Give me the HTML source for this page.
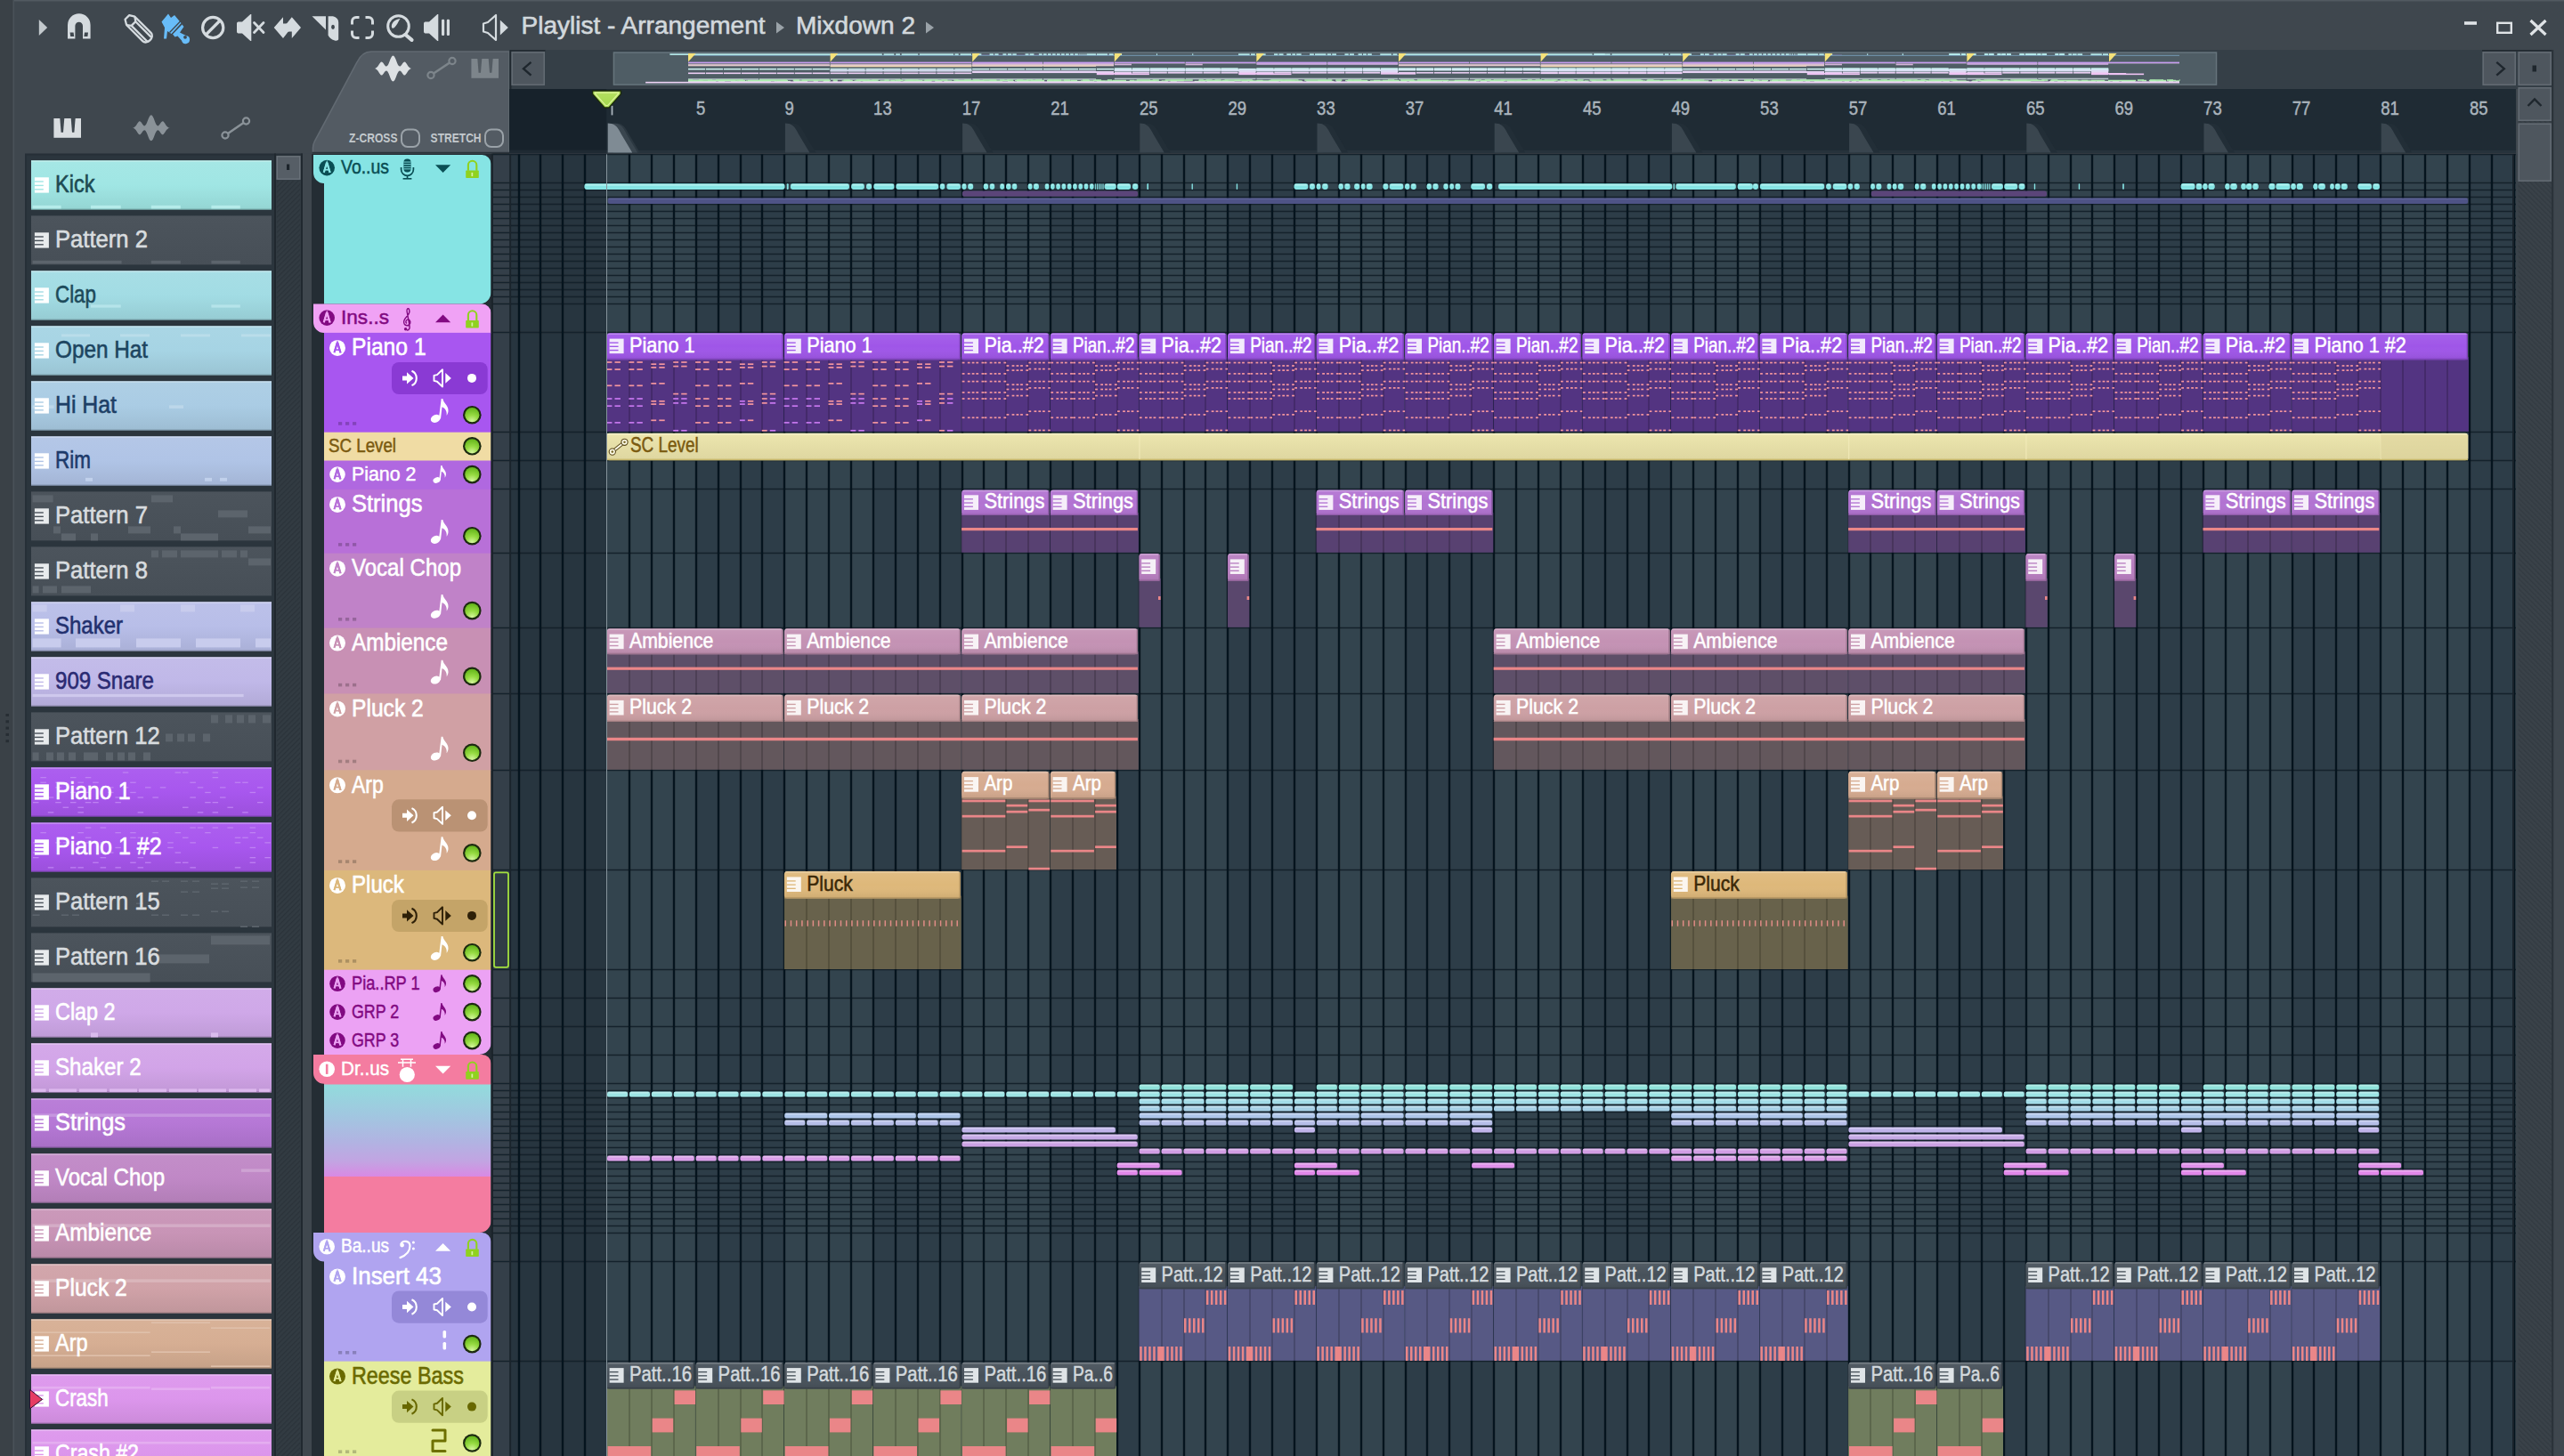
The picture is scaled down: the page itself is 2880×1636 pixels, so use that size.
<!DOCTYPE html>
<html><head><meta charset="utf-8"><title>Playlist</title>
<style>html,body{margin:0;padding:0;background:#3f474e;overflow:hidden}svg{display:block}text{font-family:"Liberation Sans",sans-serif}</style>
</head><body><svg width="2880" height="1636" viewBox="0 0 2880 1636" shape-rendering="auto"><rect x="0" y="0" width="2880" height="1636" fill="#3f474e"/><rect x="0" y="0" width="2880" height="1.5" fill="#525a61"/><rect x="0" y="0" width="15" height="1636" fill="#3a4147"/><rect x="14.5" y="0" width="1.5" height="1636" fill="#4a5259"/><rect x="6.5" y="802" width="3.5" height="3" fill="#262d33"/><rect x="6.5" y="809.3" width="3.5" height="3" fill="#262d33"/><rect x="6.5" y="816.6" width="3.5" height="3" fill="#262d33"/><rect x="6.5" y="823.9" width="3.5" height="3" fill="#262d33"/><rect x="6.5" y="831.2" width="3.5" height="3" fill="#262d33"/><path d="M43.8 22 L53.2 31 L43.8 40Z" fill="#c3c9cd"/><path d="M76 43.5 L76 28 A12.7 12.7 0 0 1 101.6 28 L101.6 43.5 L93 43.5 L93 29 A4.3 4.3 0 0 0 84.4 29 L84.4 43.5 Z" fill="#d5dbdf"/><path d="M78.6 36.5h4l0.6 4.6h-4z M95 36.5h4l-0.6 4.6h-4z" fill="#3f474e"/><g transform="translate(155.6 32.2) rotate(-45)" fill="none" stroke="#d5dbdf" stroke-width="2.3" stroke-linejoin="round"><path d="M-6.6 -12.5 L-3.3 -18 L3.3 -18 L6.6 -12.5 L6.6 13.5 A6.6 4.8 0 0 1 -6.6 13.5 Z"/><path d="M-6.6 -12.5 L-3.3 -8 L3.3 -8 L6.6 -12.5"/><path d="M-3.3 -8 L-3.3 17 M3.3 -8 L3.3 17"/></g><g fill="#68bcf8"><path d="M181.5 24.5 L189 15.5 L192 20 L196 17 L203.5 26 L192.5 38 L188 35 L187 43.5 L184 43.5 L185 31 Z"/><path d="M194 38.5 L204.5 27.5 L206.5 30 L202 36.5 L209 40 A4.6 4.6 0 1 1 204 45.5 L199.5 40.5 L196.5 41.5 Z"/></g><circle cx="208" cy="41.8" r="1.9" fill="#3f474e"/><path d="M190.5 36.5 L203 23.5" stroke="#3f474e" stroke-width="1.3"/><circle cx="239.2" cy="31" r="11.6" fill="none" stroke="#d5dbdf" stroke-width="3.2"/><path d="M231.3 39 L247.2 23" stroke="#d5dbdf" stroke-width="3.2"/><path d="M266 26.5 C266 25 267 24.5 268.5 24.5 L272 24.5 L281.3 16 L282.3 16 L282.3 46 L281.3 46 L272 37.5 L268.5 37.5 C267 37.5 266 37 266 35.5Z" fill="#d5dbdf"/><path d="M285.5 25.5 L296 36.5 M296 25.5 L285.5 36.5" stroke="#d5dbdf" stroke-width="2.8" stroke-linecap="round"/><path d="M307.7 31 L318 19.2 L318 26.5 L322 26.5 L327.8 19.2 L338 31 L327.8 43 L327.8 35.5 L323.8 35.5 L318 43 Z" fill="#d5dbdf"/><path d="M321.5 26.5 L324.5 26.5 L324.5 35.5 L321.5 35.5Z" fill="#d5dbdf"/><path d="M350.5 18.2 L366 18.2 L366 33.5 Z" fill="#d5dbdf"/><path d="M368.6 18.2 L374 18.2 C378 19 380 21.5 380.2 25 L380.2 44 C380 45.5 378 46 376 45.5 C372 44.5 369.5 42 368.6 39.5 Z" fill="#d5dbdf"/><ellipse cx="374" cy="30.3" rx="1.9" ry="2.6" fill="#3f474e"/><g fill="none" stroke="#d5dbdf" stroke-width="3"><path d="M395.5 27.5 L395.5 24 A4.5 4.5 0 0 1 400 19.5 L403.5 19.5"/><path d="M410.5 19.5 L414 19.5 A4.5 4.5 0 0 1 418.5 24 L418.5 27.5"/><path d="M418.5 34.5 L418.5 38 A4.5 4.5 0 0 1 414 42.5 L410.5 42.5"/><path d="M403.5 42.5 L400 42.5 A4.5 4.5 0 0 1 395.5 38 L395.5 34.5"/></g><circle cx="447.5" cy="29.5" r="11.8" fill="none" stroke="#d5dbdf" stroke-width="3"/><path d="M455.5 39 L462.5 44.8" stroke="#d5dbdf" stroke-width="4.2" stroke-linecap="round"/><path d="M440 31 C439 26 443 22 449.5 21 C447 25 446 28 443 31 C442 31.8 440.5 32 440 31Z" fill="#d5dbdf"/><path d="M476 26.5 C476 25 477 24.5 478.5 24.5 L482 24.5 L491.3 16 L492.3 16 L492.3 46 L491.3 46 L482 37.5 L478.5 37.5 C477 37.5 476 37 476 35.5Z" fill="#d5dbdf"/><rect x="496" y="21.8" width="3.2" height="18.2" fill="#d5dbdf" rx="1.2"/><rect x="501.8" y="21.8" width="3.2" height="18.2" fill="#d5dbdf" rx="1.2"/><path d="M543 26.5 L548 25 L557 17 L557 45 L548 37 L543 35.5Z" fill="none" stroke="#d5dbdf" stroke-width="2.2" stroke-linejoin="round"/><path d="M561.8 22.5 L570.8 31 L561.8 39.5Z" fill="#d5dbdf"/><text x="585.5" y="38" font-size="27" fill="#d2d8dc" textLength="274" lengthAdjust="spacingAndGlyphs"  stroke="#d2d8dc" stroke-width="0.59">Playlist - Arrangement</text><path d="M872 24.5 L881 31 L872 37.5Z" fill="#9aa2a8"/><text x="894" y="38" font-size="27" fill="#d2d8dc" textLength="134" lengthAdjust="spacingAndGlyphs"  stroke="#d2d8dc" stroke-width="0.59">Mixdown 2</text><path d="M1040 24.5 L1049 31 L1040 37.5Z" fill="#9aa2a8"/><rect x="2768" y="24.2" width="14" height="3.6" fill="#dfe3e6"/><rect x="2805.2" y="25.8" width="15.6" height="11" fill="none" stroke="#dfe3e6" stroke-width="2.4"/><path d="M2842.5 23 L2859.5 39 M2859.5 23 L2842.5 39" stroke="#dfe3e6" stroke-width="3.2"/><path d="M60.4 133 h30.6 v21.8 h-30.6 Z" fill="#d9dde0"/><path d="M67.29 132.8 L72.29 132.8 L70.99 148.7 L68.59 148.7 Z" fill="#3f474e"/><path d="M79.69 132.8 L84.69 132.8 L83.39 148.7 L80.99 148.7 Z" fill="#3f474e"/><path transform="translate(169.8 143.8) scale(1)" d="M-21 0 C-17 0 -15 -7.5 -13 -7.5 C-11 -7.5 -9.5 -2.4 -7.5 -2.4 C-4.5 -2.4 -3 -14.5 0 -14.5 C3 -14.5 4.5 -2.4 7.5 -2.4 C9.5 -2.4 11 -7.5 13 -7.5 C15 -7.5 17 0 21 0 C17 0 15 7.5 13 7.5 C11 7.5 9.5 2.4 7.5 2.4 C4.5 2.4 3 14.5 0 14.5 C-3 14.5 -4.5 2.4 -7.5 2.4 C-9.5 2.4 -11 7.5 -13 7.5 C-15 7.5 -17 0 -21 0 Z" fill="#8a9298"/><path d="M256 150 L273.5 138" stroke="#8a9298" stroke-width="2.6"/><circle cx="253" cy="152" r="3.6" fill="none" stroke="#8a9298" stroke-width="2.2"/><circle cx="276.5" cy="136" r="3.6" fill="none" stroke="#8a9298" stroke-width="2.2"/><path d="M351.5 172 L351.5 166 C351.5 163 352 161.5 353.5 158.5 L401 70 C404.5 62.5 409 58 417 58 L572 58 L572 172 Z" fill="#535b63" stroke="#626a72" stroke-width="1.6"/><rect x="350.5" y="170.8" width="222" height="2.2" fill="#2b343b"/><path transform="translate(441.5 77) scale(1)" d="M-21 0 C-17 0 -15 -7.5 -13 -7.5 C-11 -7.5 -9.5 -2.4 -7.5 -2.4 C-4.5 -2.4 -3 -14.5 0 -14.5 C3 -14.5 4.5 -2.4 7.5 -2.4 C9.5 -2.4 11 -7.5 13 -7.5 C15 -7.5 17 0 21 0 C17 0 15 7.5 13 7.5 C11 7.5 9.5 2.4 7.5 2.4 C4.5 2.4 3 14.5 0 14.5 C-3 14.5 -4.5 2.4 -7.5 2.4 C-9.5 2.4 -11 7.5 -13 7.5 C-15 7.5 -17 0 -21 0 Z" fill="#dde1e4"/><path d="M487 82.5 L505 70.5" stroke="#7d858b" stroke-width="2.6"/><circle cx="484" cy="84.5" r="3.6" fill="none" stroke="#7d858b" stroke-width="2.2"/><circle cx="508" cy="68.5" r="3.6" fill="none" stroke="#7d858b" stroke-width="2.2"/><path d="M529.4 66 h30.6 v21.8 h-30.6 Z" fill="#7d858b"/><path d="M536.29 65.8 L541.29 65.8 L539.99 81.7 L537.59 81.7 Z" fill="#545c63"/><path d="M548.69 65.8 L553.69 65.8 L552.39 81.7 L549.99 81.7 Z" fill="#545c63"/><text x="392" y="160.4" font-size="14.2" fill="#c3c9cd" textLength="54.5" lengthAdjust="spacingAndGlyphs" font-weight="bold">Z-CROSS</text><rect x="451" y="145.5" width="20" height="19.5" rx="6.8" fill="none" stroke="#9aa2a8" stroke-width="2"/><text x="483.6" y="160.4" font-size="14.2" fill="#c3c9cd" textLength="57" lengthAdjust="spacingAndGlyphs" font-weight="bold">STRETCH</text><rect x="545" y="145.5" width="20" height="19.5" rx="6.8" fill="none" stroke="#9aa2a8" stroke-width="2"/><rect x="572" y="56" width="2296" height="44" fill="#353f47"/><rect x="572.6" y="56" width="1.8" height="44" fill="#20282f"/><rect x="574" y="56" width="38.5" height="1.6" fill="#222a31"/><rect x="2788" y="56" width="80" height="1.6" fill="#222a31"/><rect x="574.5" y="58" width="37.5" height="38" fill="#4e565e"/><rect x="575.3" y="58.8" width="35.9" height="36.4" fill="none" stroke="#626a72" stroke-width="1.6"/><path d="M596.5 69.8 L588 77.2 L596.5 84.6" fill="none" stroke="#1e262d" stroke-width="2.4"/><rect x="2788.5" y="58" width="37.5" height="38" fill="#4e565e"/><rect x="2789.3" y="58.8" width="35.9" height="36.4" fill="none" stroke="#626a72" stroke-width="1.6"/><path d="M2804.3 69.8 L2812.8 77.2 L2804.3 84.6" fill="none" stroke="#1e262d" stroke-width="2.4"/><rect x="2828.5" y="58" width="37.5" height="38" fill="#4e565e"/><rect x="2829.3" y="58.8" width="35.9" height="36.4" fill="none" stroke="#626a72" stroke-width="1.6"/><rect x="2844.5" y="73.5" width="4.5" height="7" fill="#1e262d"/><rect x="2828.5" y="98" width="37.5" height="38" fill="#4e565e"/><rect x="2829.3" y="98.8" width="35.9" height="36.4" fill="none" stroke="#626a72" stroke-width="1.6"/><path d="M2839.5 119 L2847 111.5 L2854.5 119" fill="none" stroke="#1e262d" stroke-width="2.4"/><rect x="688.7" y="58.3" width="1801.5" height="37.6" fill="#4f5d65"/><rect x="689.5" y="59.1" width="1800" height="36" fill="none" stroke="#66747c" stroke-width="1.4"/><rect x="572" y="100" width="2254" height="72" fill="#1f2b34"/><rect x="572" y="100" width="109.1" height="72" fill="#17222b"/><rect x="572" y="168.8" width="2254" height="3.4" fill="#27333c"/><rect x="572" y="168.8" width="109.1" height="3.4" fill="#1f2a33"/><path d="M691.2 171.4 L691.2 138.4 L695.7 138.9 C700.2 140.2 703.2 144 706.2 150.5 L718.7 171.4 Z" fill="#2c3841"/><path d="M688.7 171.4 L688.7 138.4 L693.2 138.9 C697.7 140.2 700.7 144 703.7 150.5 L716.2 171.4 Z" fill="#3a464f"/><path d="M682.7 171.4 L682.7 138.4 L687.2 138.9 C691.7 140.2 694.7 144 697.7 150.5 L710.2 171.4 Z" fill="#7f8b94"/><path d="M888.9 171.4 L888.9 138.4 L893.4 138.9 C897.9 140.2 900.9 144 903.9 150.5 L916.4 171.4 Z" fill="#222e37"/><path d="M881.9 171.4 L881.9 138.4 L886.4 138.9 C890.9 140.2 893.9 144 896.9 150.5 L909.4 171.4 Z" fill="#3a464f"/><path d="M1088.1 171.4 L1088.1 138.4 L1092.6 138.9 C1097.1 140.2 1100.1 144 1103.1 150.5 L1115.6 171.4 Z" fill="#222e37"/><path d="M1081.1 171.4 L1081.1 138.4 L1085.6 138.9 C1090.1 140.2 1093.1 144 1096.1 150.5 L1108.6 171.4 Z" fill="#3a464f"/><path d="M1287.3 171.4 L1287.3 138.4 L1291.8 138.9 C1296.3 140.2 1299.3 144 1302.3 150.5 L1314.8 171.4 Z" fill="#222e37"/><path d="M1280.3 171.4 L1280.3 138.4 L1284.8 138.9 C1289.3 140.2 1292.3 144 1295.3 150.5 L1307.8 171.4 Z" fill="#3a464f"/><path d="M1486.5 171.4 L1486.5 138.4 L1491 138.9 C1495.5 140.2 1498.5 144 1501.5 150.5 L1514 171.4 Z" fill="#222e37"/><path d="M1479.5 171.4 L1479.5 138.4 L1484 138.9 C1488.5 140.2 1491.5 144 1494.5 150.5 L1507 171.4 Z" fill="#3a464f"/><path d="M1685.7 171.4 L1685.7 138.4 L1690.2 138.9 C1694.7 140.2 1697.7 144 1700.7 150.5 L1713.2 171.4 Z" fill="#222e37"/><path d="M1678.7 171.4 L1678.7 138.4 L1683.2 138.9 C1687.7 140.2 1690.7 144 1693.7 150.5 L1706.2 171.4 Z" fill="#3a464f"/><path d="M1884.9 171.4 L1884.9 138.4 L1889.4 138.9 C1893.9 140.2 1896.9 144 1899.9 150.5 L1912.4 171.4 Z" fill="#222e37"/><path d="M1877.9 171.4 L1877.9 138.4 L1882.4 138.9 C1886.9 140.2 1889.9 144 1892.9 150.5 L1905.4 171.4 Z" fill="#3a464f"/><path d="M2084.1 171.4 L2084.1 138.4 L2088.6 138.9 C2093.1 140.2 2096.1 144 2099.1 150.5 L2111.6 171.4 Z" fill="#222e37"/><path d="M2077.1 171.4 L2077.1 138.4 L2081.6 138.9 C2086.1 140.2 2089.1 144 2092.1 150.5 L2104.6 171.4 Z" fill="#3a464f"/><path d="M2283.3 171.4 L2283.3 138.4 L2287.8 138.9 C2292.3 140.2 2295.3 144 2298.3 150.5 L2310.8 171.4 Z" fill="#222e37"/><path d="M2276.3 171.4 L2276.3 138.4 L2280.8 138.9 C2285.3 140.2 2288.3 144 2291.3 150.5 L2303.8 171.4 Z" fill="#3a464f"/><path d="M2482.5 171.4 L2482.5 138.4 L2487 138.9 C2491.5 140.2 2494.5 144 2497.5 150.5 L2510 171.4 Z" fill="#222e37"/><path d="M2475.5 171.4 L2475.5 138.4 L2480 138.9 C2484.5 140.2 2487.5 144 2490.5 150.5 L2503 171.4 Z" fill="#3a464f"/><path d="M2681.7 171.4 L2681.7 138.4 L2686.2 138.9 C2690.7 140.2 2693.7 144 2696.7 150.5 L2709.2 171.4 Z" fill="#222e37"/><path d="M2674.7 171.4 L2674.7 138.4 L2679.2 138.9 C2683.7 140.2 2686.7 144 2689.7 150.5 L2702.2 171.4 Z" fill="#3a464f"/><rect x="686.6" y="118.8" width="1.8" height="10.6" fill="#aab4bc"/><text x="781.9" y="129.3" font-size="22.3" fill="#aab4bc" textLength="10.3" lengthAdjust="spacingAndGlyphs"  stroke="#aab4bc" stroke-width="0.49">5</text><text x="881.5" y="129.3" font-size="22.3" fill="#aab4bc" textLength="10.3" lengthAdjust="spacingAndGlyphs"  stroke="#aab4bc" stroke-width="0.49">9</text><text x="981.1" y="129.3" font-size="22.3" fill="#aab4bc" textLength="20.6" lengthAdjust="spacingAndGlyphs"  stroke="#aab4bc" stroke-width="0.49">13</text><text x="1080.7" y="129.3" font-size="22.3" fill="#aab4bc" textLength="20.6" lengthAdjust="spacingAndGlyphs"  stroke="#aab4bc" stroke-width="0.49">17</text><text x="1180.3" y="129.3" font-size="22.3" fill="#aab4bc" textLength="20.6" lengthAdjust="spacingAndGlyphs"  stroke="#aab4bc" stroke-width="0.49">21</text><text x="1279.9" y="129.3" font-size="22.3" fill="#aab4bc" textLength="20.6" lengthAdjust="spacingAndGlyphs"  stroke="#aab4bc" stroke-width="0.49">25</text><text x="1379.5" y="129.3" font-size="22.3" fill="#aab4bc" textLength="20.6" lengthAdjust="spacingAndGlyphs"  stroke="#aab4bc" stroke-width="0.49">29</text><text x="1479.1" y="129.3" font-size="22.3" fill="#aab4bc" textLength="20.6" lengthAdjust="spacingAndGlyphs"  stroke="#aab4bc" stroke-width="0.49">33</text><text x="1578.7" y="129.3" font-size="22.3" fill="#aab4bc" textLength="20.6" lengthAdjust="spacingAndGlyphs"  stroke="#aab4bc" stroke-width="0.49">37</text><text x="1678.3" y="129.3" font-size="22.3" fill="#aab4bc" textLength="20.6" lengthAdjust="spacingAndGlyphs"  stroke="#aab4bc" stroke-width="0.49">41</text><text x="1777.9" y="129.3" font-size="22.3" fill="#aab4bc" textLength="20.6" lengthAdjust="spacingAndGlyphs"  stroke="#aab4bc" stroke-width="0.49">45</text><text x="1877.5" y="129.3" font-size="22.3" fill="#aab4bc" textLength="20.6" lengthAdjust="spacingAndGlyphs"  stroke="#aab4bc" stroke-width="0.49">49</text><text x="1977.1" y="129.3" font-size="22.3" fill="#aab4bc" textLength="20.6" lengthAdjust="spacingAndGlyphs"  stroke="#aab4bc" stroke-width="0.49">53</text><text x="2076.7" y="129.3" font-size="22.3" fill="#aab4bc" textLength="20.6" lengthAdjust="spacingAndGlyphs"  stroke="#aab4bc" stroke-width="0.49">57</text><text x="2176.3" y="129.3" font-size="22.3" fill="#aab4bc" textLength="20.6" lengthAdjust="spacingAndGlyphs"  stroke="#aab4bc" stroke-width="0.49">61</text><text x="2275.9" y="129.3" font-size="22.3" fill="#aab4bc" textLength="20.6" lengthAdjust="spacingAndGlyphs"  stroke="#aab4bc" stroke-width="0.49">65</text><text x="2375.5" y="129.3" font-size="22.3" fill="#aab4bc" textLength="20.6" lengthAdjust="spacingAndGlyphs"  stroke="#aab4bc" stroke-width="0.49">69</text><text x="2475.1" y="129.3" font-size="22.3" fill="#aab4bc" textLength="20.6" lengthAdjust="spacingAndGlyphs"  stroke="#aab4bc" stroke-width="0.49">73</text><text x="2574.7" y="129.3" font-size="22.3" fill="#aab4bc" textLength="20.6" lengthAdjust="spacingAndGlyphs"  stroke="#aab4bc" stroke-width="0.49">77</text><text x="2674.3" y="129.3" font-size="22.3" fill="#aab4bc" textLength="20.6" lengthAdjust="spacingAndGlyphs"  stroke="#aab4bc" stroke-width="0.49">81</text><text x="2773.9" y="129.3" font-size="22.3" fill="#aab4bc" textLength="20.6" lengthAdjust="spacingAndGlyphs"  stroke="#aab4bc" stroke-width="0.49">85</text><defs><linearGradient id="ph" x1="0" y1="0" x2="0" y2="1"><stop offset="0" stop-color="#b6e062"/><stop offset="1" stop-color="#a2d84c"/></linearGradient></defs><path d="M665.6 102 L697.4 102 L697.4 105.8 L684 121 L679 121 L665.6 105.8Z" fill="url(#ph)" stroke="#1c2a0c" stroke-width="1.4" stroke-linejoin="round"/><path d="M668.4 104.2 L694.6 104.2 L694.6 105.2 L682.6 118.6 L680.4 118.6 L668.4 105.2Z" fill="none" stroke="#e4f7a6" stroke-width="1.3" stroke-linejoin="round" opacity="0.85"/><rect x="28" y="172.5" width="312" height="1463.5" fill="#262f37"/><rect x="30" y="174.5" width="278" height="1461.5" fill="#2b353d"/><rect x="310" y="174.5" width="28" height="1461.5" fill="#313a41"/><pattern id="hatch" width="4" height="4" patternUnits="userSpaceOnUse" patternTransform="rotate(45)"><rect width="4" height="4" fill="#323b42"/><rect width="1.3" height="4" fill="#2b333a"/></pattern><rect x="311" y="203" width="26" height="1433" fill="url(#hatch)"/><rect x="310.5" y="175" width="27" height="27" fill="#565e66"/><rect x="311.3" y="175.8" width="25.4" height="25.4" fill="none" stroke="#697179" stroke-width="1.4"/><rect x="322" y="184.5" width="3.2" height="6.5" fill="#1c242b"/><rect x="308" y="172.5" width="2" height="1636" fill="#20282f"/><rect x="338" y="172.5" width="2" height="1636" fill="#20282f"/><defs><linearGradient id="g1" x1="0" y1="0" x2="0" y2="1"><stop offset="0" stop-color="#a5e7e5"/><stop offset="0.5" stop-color="#a0e6e4"/><stop offset="1" stop-color="#94d5d3"/></linearGradient><linearGradient id="g2" x1="0" y1="0" x2="0" y2="1"><stop offset="0" stop-color="#4c545c"/><stop offset="1" stop-color="#474f57"/></linearGradient><linearGradient id="g3" x1="0" y1="0" x2="0" y2="1"><stop offset="0" stop-color="#a7dee5"/><stop offset="0.5" stop-color="#a2dce4"/><stop offset="1" stop-color="#96ccd3"/></linearGradient><linearGradient id="g4" x1="0" y1="0" x2="0" y2="1"><stop offset="0" stop-color="#aad6e5"/><stop offset="0.5" stop-color="#a6d4e4"/><stop offset="1" stop-color="#9ac4d3"/></linearGradient><linearGradient id="g5" x1="0" y1="0" x2="0" y2="1"><stop offset="0" stop-color="#aecfe5"/><stop offset="0.5" stop-color="#aacce4"/><stop offset="1" stop-color="#9dbdd3"/></linearGradient><linearGradient id="g6" x1="0" y1="0" x2="0" y2="1"><stop offset="0" stop-color="#b4c7e7"/><stop offset="0.5" stop-color="#b0c4e6"/><stop offset="1" stop-color="#a3b5d5"/></linearGradient><linearGradient id="g7" x1="0" y1="0" x2="0" y2="1"><stop offset="0" stop-color="#4c545c"/><stop offset="1" stop-color="#474f57"/></linearGradient><linearGradient id="g8" x1="0" y1="0" x2="0" y2="1"><stop offset="0" stop-color="#4c545c"/><stop offset="1" stop-color="#474f57"/></linearGradient><linearGradient id="g9" x1="0" y1="0" x2="0" y2="1"><stop offset="0" stop-color="#bcc1e9"/><stop offset="0.5" stop-color="#b8bee8"/><stop offset="1" stop-color="#aab0d7"/></linearGradient><linearGradient id="g10" x1="0" y1="0" x2="0" y2="1"><stop offset="0" stop-color="#c3bce9"/><stop offset="0.5" stop-color="#c0b8e8"/><stop offset="1" stop-color="#b2aad7"/></linearGradient><linearGradient id="g11" x1="0" y1="0" x2="0" y2="1"><stop offset="0" stop-color="#4c545c"/><stop offset="1" stop-color="#474f57"/></linearGradient><linearGradient id="g12" x1="0" y1="0" x2="0" y2="1"><stop offset="0" stop-color="#ac5fef"/><stop offset="0.5" stop-color="#a857ee"/><stop offset="1" stop-color="#9b50dc"/></linearGradient><linearGradient id="g13" x1="0" y1="0" x2="0" y2="1"><stop offset="0" stop-color="#ac5fef"/><stop offset="0.5" stop-color="#a857ee"/><stop offset="1" stop-color="#9b50dc"/></linearGradient><linearGradient id="g14" x1="0" y1="0" x2="0" y2="1"><stop offset="0" stop-color="#4c545c"/><stop offset="1" stop-color="#474f57"/></linearGradient><linearGradient id="g15" x1="0" y1="0" x2="0" y2="1"><stop offset="0" stop-color="#4c545c"/><stop offset="1" stop-color="#474f57"/></linearGradient><linearGradient id="g16" x1="0" y1="0" x2="0" y2="1"><stop offset="0" stop-color="#d1ace9"/><stop offset="0.5" stop-color="#cfa8e8"/><stop offset="1" stop-color="#bf9bd7"/></linearGradient><linearGradient id="g17" x1="0" y1="0" x2="0" y2="1"><stop offset="0" stop-color="#d4a9e9"/><stop offset="0.5" stop-color="#d2a4e8"/><stop offset="1" stop-color="#c298d7"/></linearGradient><linearGradient id="g18" x1="0" y1="0" x2="0" y2="1"><stop offset="0" stop-color="#ba7fd8"/><stop offset="0.5" stop-color="#b678d6"/><stop offset="1" stop-color="#a86fc6"/></linearGradient><linearGradient id="g19" x1="0" y1="0" x2="0" y2="1"><stop offset="0" stop-color="#c38ec9"/><stop offset="0.5" stop-color="#c088c6"/><stop offset="1" stop-color="#b27eb7"/></linearGradient><linearGradient id="g20" x1="0" y1="0" x2="0" y2="1"><stop offset="0" stop-color="#cb99ba"/><stop offset="0.5" stop-color="#c894b6"/><stop offset="1" stop-color="#b989a8"/></linearGradient><linearGradient id="g21" x1="0" y1="0" x2="0" y2="1"><stop offset="0" stop-color="#d2a7ac"/><stop offset="0.5" stop-color="#d0a2a8"/><stop offset="1" stop-color="#c0969b"/></linearGradient><linearGradient id="g22" x1="0" y1="0" x2="0" y2="1"><stop offset="0" stop-color="#d8b298"/><stop offset="0.5" stop-color="#d6ae93"/><stop offset="1" stop-color="#c6a188"/></linearGradient><linearGradient id="g23" x1="0" y1="0" x2="0" y2="1"><stop offset="0" stop-color="#de9bed"/><stop offset="0.5" stop-color="#dc96ec"/><stop offset="1" stop-color="#cc8bda"/></linearGradient><linearGradient id="g24" x1="0" y1="0" x2="0" y2="1"><stop offset="0" stop-color="#de9bed"/><stop offset="0.5" stop-color="#dc96ec"/><stop offset="1" stop-color="#cc8bda"/></linearGradient></defs><rect x="35" y="180.4" width="270" height="55" fill="url(#g1)"/><rect x="35" y="180.4" width="270" height="1.4" fill="#c1efed"/><rect x="35" y="234.2" width="270" height="1.2" fill="#83bdbb"/><rect x="36.6" y="230.8" width="32" height="3.6" fill="#b5ecea"/><rect x="102" y="230.8" width="33.7" height="3.6" fill="#b5ecea"/><rect x="169.8" y="230.8" width="33" height="3.6" fill="#b5ecea"/><rect x="237.4" y="230.8" width="32.4" height="3.6" fill="#b5ecea"/><rect x="38.9" y="199.3" width="16" height="17.3" fill="#ffffff"/><rect x="38.9" y="203.3" width="9.92" height="1.4" fill="#a0e6e4"/><rect x="38.9" y="207.7" width="9.92" height="1.4" fill="#a0e6e4"/><rect x="38.9" y="212.1" width="9.92" height="1.4" fill="#a0e6e4"/><text x="62" y="216.2" font-size="27.5" fill="#1d4a52" textLength="44.5" lengthAdjust="spacingAndGlyphs"  stroke="#1d4a52" stroke-width="0.6">Kick</text><rect x="35" y="242.4" width="270" height="55" fill="url(#g2)"/><rect x="36.6" y="292.8" width="100" height="3.6" fill="#5c646c"/><rect x="169.8" y="292.8" width="33" height="3.6" fill="#5c646c"/><rect x="237.4" y="292.8" width="32.4" height="3.6" fill="#5c646c"/><rect x="38.9" y="261.3" width="16" height="17.3" fill="#e8ebed"/><rect x="38.9" y="265.3" width="9.92" height="1.4" fill="#4a525a"/><rect x="38.9" y="269.7" width="9.92" height="1.4" fill="#4a525a"/><rect x="38.9" y="274.1" width="9.92" height="1.4" fill="#4a525a"/><text x="62" y="278.2" font-size="27.5" fill="#d8dcdf" textLength="104" lengthAdjust="spacingAndGlyphs"  stroke="#d8dcdf" stroke-width="0.6">Pattern 2</text><rect x="35" y="304.4" width="270" height="55" fill="url(#g3)"/><rect x="35" y="304.4" width="270" height="1.4" fill="#c3e8ed"/><rect x="35" y="358.2" width="270" height="1.2" fill="#85b4bb"/><rect x="102" y="342.4" width="33.7" height="3.2" fill="#b6e4ea"/><rect x="237.4" y="342.4" width="32.4" height="3.2" fill="#b6e4ea"/><rect x="38.9" y="323.3" width="16" height="17.3" fill="#ffffff"/><rect x="38.9" y="327.3" width="9.92" height="1.4" fill="#a2dce4"/><rect x="38.9" y="331.7" width="9.92" height="1.4" fill="#a2dce4"/><rect x="38.9" y="336.1" width="9.92" height="1.4" fill="#a2dce4"/><text x="62" y="340.2" font-size="27.5" fill="#1d4a5a" textLength="46" lengthAdjust="spacingAndGlyphs"  stroke="#1d4a5a" stroke-width="0.6">Clap</text><rect x="35" y="366.4" width="270" height="55" fill="url(#g4)"/><rect x="35" y="366.4" width="270" height="1.4" fill="#c5e3ed"/><rect x="35" y="420.2" width="270" height="1.2" fill="#88aebb"/><rect x="69" y="375.4" width="32" height="3" fill="#baddea"/><rect x="135" y="375.4" width="33" height="3" fill="#baddea"/><rect x="203" y="375.4" width="33" height="3" fill="#baddea"/><rect x="271" y="375.4" width="33" height="3" fill="#baddea"/><rect x="38.9" y="385.3" width="16" height="17.3" fill="#ffffff"/><rect x="38.9" y="389.3" width="9.92" height="1.4" fill="#a6d4e4"/><rect x="38.9" y="393.7" width="9.92" height="1.4" fill="#a6d4e4"/><rect x="38.9" y="398.1" width="9.92" height="1.4" fill="#a6d4e4"/><text x="62" y="402.2" font-size="27.5" fill="#1d4560" textLength="104" lengthAdjust="spacingAndGlyphs"  stroke="#1d4560" stroke-width="0.6">Open Hat</text><rect x="35" y="428.4" width="270" height="55" fill="url(#g5)"/><rect x="35" y="428.4" width="270" height="1.4" fill="#c8deed"/><rect x="35" y="482.2" width="270" height="1.2" fill="#8ba7bb"/><rect x="36.6" y="455.4" width="24" height="3.5" fill="#bdd7ea"/><rect x="190" y="455.4" width="16" height="3.5" fill="#bdd7ea"/><rect x="38.9" y="447.3" width="16" height="17.3" fill="#ffffff"/><rect x="38.9" y="451.3" width="9.92" height="1.4" fill="#aacce4"/><rect x="38.9" y="455.7" width="9.92" height="1.4" fill="#aacce4"/><rect x="38.9" y="460.1" width="9.92" height="1.4" fill="#aacce4"/><text x="62" y="464.2" font-size="27.5" fill="#1d3f66" textLength="69" lengthAdjust="spacingAndGlyphs"  stroke="#1d3f66" stroke-width="0.6">Hi Hat</text><rect x="35" y="490.4" width="270" height="55" fill="url(#g6)"/><rect x="35" y="490.4" width="270" height="1.4" fill="#ccd9ef"/><rect x="35" y="544.2" width="270" height="1.2" fill="#90a1bd"/><rect x="96" y="536.9" width="8" height="3.8" fill="#c1d1ec"/><rect x="230" y="536.9" width="8" height="3.8" fill="#c1d1ec"/><rect x="247" y="536.9" width="8" height="3.8" fill="#c1d1ec"/><rect x="38.9" y="509.3" width="16" height="17.3" fill="#ffffff"/><rect x="38.9" y="513.3" width="9.92" height="1.4" fill="#b0c4e6"/><rect x="38.9" y="517.7" width="9.92" height="1.4" fill="#b0c4e6"/><rect x="38.9" y="522.1" width="9.92" height="1.4" fill="#b0c4e6"/><text x="62" y="526.2" font-size="27.5" fill="#1d3a6a" textLength="40" lengthAdjust="spacingAndGlyphs"  stroke="#1d3a6a" stroke-width="0.6">Rim</text><rect x="35" y="552.4" width="270" height="55" fill="url(#g7)"/><rect x="36.6" y="556.4" width="23" height="8" fill="#5c646c"/><rect x="170" y="556.4" width="24" height="8" fill="#5c646c"/><rect x="245" y="573.4" width="33" height="8" fill="#5c646c"/><rect x="60" y="591.4" width="8" height="8" fill="#5c646c"/><rect x="69" y="599.4" width="16" height="8" fill="#5c646c"/><rect x="102" y="599.4" width="8" height="8" fill="#5c646c"/><rect x="144" y="591.4" width="25" height="8" fill="#5c646c"/><rect x="195" y="591.4" width="8" height="8" fill="#5c646c"/><rect x="203" y="599.4" width="42" height="8" fill="#5c646c"/><rect x="279" y="591.4" width="25" height="8" fill="#5c646c"/><rect x="38.9" y="571.3" width="16" height="17.3" fill="#e8ebed"/><rect x="38.9" y="575.3" width="9.92" height="1.4" fill="#4a525a"/><rect x="38.9" y="579.7" width="9.92" height="1.4" fill="#4a525a"/><rect x="38.9" y="584.1" width="9.92" height="1.4" fill="#4a525a"/><text x="62" y="588.2" font-size="27.5" fill="#d8dcdf" textLength="104" lengthAdjust="spacingAndGlyphs"  stroke="#d8dcdf" stroke-width="0.6">Pattern 7</text><rect x="35" y="614.4" width="270" height="55" fill="url(#g8)"/><rect x="170" y="618.4" width="8" height="8" fill="#5c646c"/><rect x="182" y="618.4" width="17" height="8" fill="#5c646c"/><rect x="203" y="618.4" width="42" height="8" fill="#5c646c"/><rect x="249" y="618.4" width="17" height="8" fill="#5c646c"/><rect x="270" y="618.4" width="8" height="8" fill="#5c646c"/><rect x="279" y="627.4" width="25" height="8" fill="#5c646c"/><rect x="36.6" y="658.4" width="7" height="8" fill="#5c646c"/><rect x="48" y="658.4" width="16" height="8" fill="#5c646c"/><rect x="69" y="658.4" width="33" height="8" fill="#5c646c"/><rect x="38.9" y="633.3" width="16" height="17.3" fill="#e8ebed"/><rect x="38.9" y="637.3" width="9.92" height="1.4" fill="#4a525a"/><rect x="38.9" y="641.7" width="9.92" height="1.4" fill="#4a525a"/><rect x="38.9" y="646.1" width="9.92" height="1.4" fill="#4a525a"/><text x="62" y="650.2" font-size="27.5" fill="#d8dcdf" textLength="104" lengthAdjust="spacingAndGlyphs"  stroke="#d8dcdf" stroke-width="0.6">Pattern 8</text><rect x="35" y="676.4" width="270" height="55" fill="url(#g9)"/><rect x="35" y="676.4" width="270" height="1.4" fill="#d1d5f0"/><rect x="35" y="730.2" width="270" height="1.2" fill="#979cbe"/><rect x="36.6" y="679.4" width="16" height="8" fill="#c8cced"/><rect x="135" y="679.4" width="16" height="8" fill="#c8cced"/><rect x="203" y="679.4" width="16" height="8" fill="#c8cced"/><rect x="270" y="679.4" width="16" height="8" fill="#c8cced"/><rect x="36.6" y="717.4" width="32" height="10" fill="#c8cced"/><rect x="85" y="717.4" width="50" height="10" fill="#c8cced"/><rect x="153" y="717.4" width="50" height="10" fill="#c8cced"/><rect x="220" y="717.4" width="50" height="10" fill="#c8cced"/><rect x="287" y="717.4" width="17" height="10" fill="#c8cced"/><rect x="38.9" y="695.3" width="16" height="17.3" fill="#ffffff"/><rect x="38.9" y="699.3" width="9.92" height="1.4" fill="#b8bee8"/><rect x="38.9" y="703.7" width="9.92" height="1.4" fill="#b8bee8"/><rect x="38.9" y="708.1" width="9.92" height="1.4" fill="#b8bee8"/><text x="62" y="712.2" font-size="27.5" fill="#22306e" textLength="76" lengthAdjust="spacingAndGlyphs"  stroke="#22306e" stroke-width="0.6">Shaker</text><rect x="35" y="738.4" width="270" height="55" fill="url(#g10)"/><rect x="35" y="738.4" width="270" height="1.4" fill="#d6d1f0"/><rect x="35" y="792.2" width="270" height="1.2" fill="#9d97be"/><rect x="36.6" y="779.9" width="237" height="3.2" fill="#cec8ed"/><rect x="38.9" y="757.3" width="16" height="17.3" fill="#ffffff"/><rect x="38.9" y="761.3" width="9.92" height="1.4" fill="#c0b8e8"/><rect x="38.9" y="765.7" width="9.92" height="1.4" fill="#c0b8e8"/><rect x="38.9" y="770.1" width="9.92" height="1.4" fill="#c0b8e8"/><text x="62" y="774.2" font-size="27.5" fill="#2a2a72" textLength="111" lengthAdjust="spacingAndGlyphs"  stroke="#2a2a72" stroke-width="0.6">909 Snare</text><rect x="35" y="800.4" width="270" height="55" fill="url(#g11)"/><rect x="237" y="803.4" width="8" height="9" fill="#5c646c"/><rect x="253" y="803.4" width="8" height="9" fill="#5c646c"/><rect x="266" y="803.4" width="8" height="9" fill="#5c646c"/><rect x="279" y="803.4" width="8" height="9" fill="#5c646c"/><rect x="295" y="803.4" width="9" height="9" fill="#5c646c"/><rect x="186" y="824.4" width="8" height="9" fill="#5c646c"/><rect x="199" y="824.4" width="8" height="9" fill="#5c646c"/><rect x="211" y="824.4" width="8" height="9" fill="#5c646c"/><rect x="228" y="824.4" width="8" height="9" fill="#5c646c"/><rect x="36.6" y="845.4" width="7" height="9" fill="#5c646c"/><rect x="52" y="845.4" width="8" height="9" fill="#5c646c"/><rect x="64" y="845.4" width="8" height="9" fill="#5c646c"/><rect x="77" y="845.4" width="8" height="9" fill="#5c646c"/><rect x="94" y="845.4" width="16" height="9" fill="#5c646c"/><rect x="119" y="845.4" width="8" height="9" fill="#5c646c"/><rect x="132" y="845.4" width="8" height="9" fill="#5c646c"/><rect x="144" y="845.4" width="8" height="9" fill="#5c646c"/><rect x="161" y="845.4" width="8" height="9" fill="#5c646c"/><rect x="38.9" y="819.3" width="16" height="17.3" fill="#e8ebed"/><rect x="38.9" y="823.3" width="9.92" height="1.4" fill="#4a525a"/><rect x="38.9" y="827.7" width="9.92" height="1.4" fill="#4a525a"/><rect x="38.9" y="832.1" width="9.92" height="1.4" fill="#4a525a"/><text x="62" y="836.2" font-size="27.5" fill="#d8dcdf" textLength="117.7" lengthAdjust="spacingAndGlyphs"  stroke="#d8dcdf" stroke-width="0.6">Pattern 12</text><rect x="35" y="862.4" width="270" height="55" fill="url(#g12)"/><rect x="35" y="862.4" width="270" height="1.4" fill="#c692f4"/><rect x="35" y="916.2" width="270" height="1.2" fill="#8a47c3"/><rect x="137.8" y="867.4" width="6.5" height="1.3" fill="#be81f2"/><rect x="196.6" y="867.4" width="6.5" height="1.3" fill="#be81f2"/><rect x="205" y="867.4" width="6.5" height="1.3" fill="#be81f2"/><rect x="238.6" y="867.4" width="6.5" height="1.3" fill="#be81f2"/><rect x="45.4" y="873" width="6.5" height="1.3" fill="#be81f2"/><rect x="79" y="873" width="6.5" height="1.3" fill="#be81f2"/><rect x="95.8" y="873" width="6.5" height="1.3" fill="#be81f2"/><rect x="238.6" y="873" width="6.5" height="1.3" fill="#be81f2"/><rect x="45.4" y="878.6" width="6.5" height="1.3" fill="#be81f2"/><rect x="62.2" y="878.6" width="6.5" height="1.3" fill="#be81f2"/><rect x="87.4" y="878.6" width="6.5" height="1.3" fill="#be81f2"/><rect x="104.2" y="878.6" width="6.5" height="1.3" fill="#be81f2"/><rect x="146.2" y="878.6" width="6.5" height="1.3" fill="#be81f2"/><rect x="213.4" y="878.6" width="6.5" height="1.3" fill="#be81f2"/><rect x="263.8" y="878.6" width="6.5" height="1.3" fill="#be81f2"/><rect x="272.2" y="878.6" width="6.5" height="1.3" fill="#be81f2"/><rect x="45.4" y="884.2" width="6.5" height="1.3" fill="#be81f2"/><rect x="62.2" y="884.2" width="6.5" height="1.3" fill="#be81f2"/><rect x="87.4" y="884.2" width="6.5" height="1.3" fill="#be81f2"/><rect x="121" y="884.2" width="6.5" height="1.3" fill="#be81f2"/><rect x="137.8" y="884.2" width="6.5" height="1.3" fill="#be81f2"/><rect x="163" y="884.2" width="6.5" height="1.3" fill="#be81f2"/><rect x="179.8" y="884.2" width="6.5" height="1.3" fill="#be81f2"/><rect x="221.8" y="884.2" width="6.5" height="1.3" fill="#be81f2"/><rect x="247" y="884.2" width="6.5" height="1.3" fill="#be81f2"/><rect x="289" y="884.2" width="6.5" height="1.3" fill="#be81f2"/><rect x="45.4" y="889.8" width="6.5" height="1.3" fill="#be81f2"/><rect x="79" y="889.8" width="6.5" height="1.3" fill="#be81f2"/><rect x="95.8" y="889.8" width="6.5" height="1.3" fill="#be81f2"/><rect x="121" y="889.8" width="6.5" height="1.3" fill="#be81f2"/><rect x="146.2" y="889.8" width="6.5" height="1.3" fill="#be81f2"/><rect x="230.2" y="889.8" width="6.5" height="1.3" fill="#be81f2"/><rect x="280.6" y="889.8" width="6.5" height="1.3" fill="#be81f2"/><rect x="53.8" y="895.4" width="6.5" height="1.3" fill="#be81f2"/><rect x="129.4" y="895.4" width="6.5" height="1.3" fill="#be81f2"/><rect x="154.6" y="895.4" width="6.5" height="1.3" fill="#be81f2"/><rect x="171.4" y="895.4" width="6.5" height="1.3" fill="#be81f2"/><rect x="213.4" y="895.4" width="6.5" height="1.3" fill="#be81f2"/><rect x="247" y="895.4" width="6.5" height="1.3" fill="#be81f2"/><rect x="37" y="901" width="6.5" height="1.3" fill="#be81f2"/><rect x="62.2" y="901" width="6.5" height="1.3" fill="#be81f2"/><rect x="79" y="901" width="6.5" height="1.3" fill="#be81f2"/><rect x="95.8" y="901" width="6.5" height="1.3" fill="#be81f2"/><rect x="104.2" y="901" width="6.5" height="1.3" fill="#be81f2"/><rect x="129.4" y="901" width="6.5" height="1.3" fill="#be81f2"/><rect x="230.2" y="901" width="6.5" height="1.3" fill="#be81f2"/><rect x="238.6" y="901" width="6.5" height="1.3" fill="#be81f2"/><rect x="289" y="901" width="6.5" height="1.3" fill="#be81f2"/><rect x="70.6" y="906.6" width="6.5" height="1.3" fill="#be81f2"/><rect x="87.4" y="906.6" width="6.5" height="1.3" fill="#be81f2"/><rect x="205" y="906.6" width="6.5" height="1.3" fill="#be81f2"/><rect x="255.4" y="906.6" width="6.5" height="1.3" fill="#be81f2"/><rect x="53.8" y="912.2" width="6.5" height="1.3" fill="#be81f2"/><rect x="87.4" y="912.2" width="6.5" height="1.3" fill="#be81f2"/><rect x="154.6" y="912.2" width="6.5" height="1.3" fill="#be81f2"/><rect x="221.8" y="912.2" width="6.5" height="1.3" fill="#be81f2"/><rect x="238.6" y="912.2" width="6.5" height="1.3" fill="#be81f2"/><rect x="272.2" y="912.2" width="6.5" height="1.3" fill="#be81f2"/><rect x="38.9" y="881.3" width="16" height="17.3" fill="#ffffff"/><rect x="38.9" y="885.3" width="9.92" height="1.4" fill="#a857ee"/><rect x="38.9" y="889.7" width="9.92" height="1.4" fill="#a857ee"/><rect x="38.9" y="894.1" width="9.92" height="1.4" fill="#a857ee"/><text x="62" y="898.2" font-size="27.5" fill="#ffffff" textLength="84.5" lengthAdjust="spacingAndGlyphs"  stroke="#ffffff" stroke-width="0.6">Piano 1</text><rect x="35" y="924.4" width="270" height="55" fill="url(#g13)"/><rect x="35" y="924.4" width="270" height="1.4" fill="#c692f4"/><rect x="35" y="978.2" width="270" height="1.2" fill="#8a47c3"/><rect x="95.8" y="929.4" width="6.5" height="1.3" fill="#be81f2"/><rect x="112.6" y="929.4" width="6.5" height="1.3" fill="#be81f2"/><rect x="213.4" y="929.4" width="6.5" height="1.3" fill="#be81f2"/><rect x="221.8" y="929.4" width="6.5" height="1.3" fill="#be81f2"/><rect x="238.6" y="929.4" width="6.5" height="1.3" fill="#be81f2"/><rect x="255.4" y="929.4" width="6.5" height="1.3" fill="#be81f2"/><rect x="280.6" y="929.4" width="6.5" height="1.3" fill="#be81f2"/><rect x="45.4" y="935" width="6.5" height="1.3" fill="#be81f2"/><rect x="87.4" y="935" width="6.5" height="1.3" fill="#be81f2"/><rect x="129.4" y="935" width="6.5" height="1.3" fill="#be81f2"/><rect x="146.2" y="935" width="6.5" height="1.3" fill="#be81f2"/><rect x="171.4" y="935" width="6.5" height="1.3" fill="#be81f2"/><rect x="196.6" y="935" width="6.5" height="1.3" fill="#be81f2"/><rect x="230.2" y="935" width="6.5" height="1.3" fill="#be81f2"/><rect x="280.6" y="935" width="6.5" height="1.3" fill="#be81f2"/><rect x="95.8" y="940.6" width="6.5" height="1.3" fill="#be81f2"/><rect x="146.2" y="940.6" width="6.5" height="1.3" fill="#be81f2"/><rect x="154.6" y="940.6" width="6.5" height="1.3" fill="#be81f2"/><rect x="205" y="940.6" width="6.5" height="1.3" fill="#be81f2"/><rect x="263.8" y="940.6" width="6.5" height="1.3" fill="#be81f2"/><rect x="272.2" y="940.6" width="6.5" height="1.3" fill="#be81f2"/><rect x="289" y="940.6" width="6.5" height="1.3" fill="#be81f2"/><rect x="37" y="946.2" width="6.5" height="1.3" fill="#be81f2"/><rect x="62.2" y="946.2" width="6.5" height="1.3" fill="#be81f2"/><rect x="70.6" y="946.2" width="6.5" height="1.3" fill="#be81f2"/><rect x="95.8" y="946.2" width="6.5" height="1.3" fill="#be81f2"/><rect x="112.6" y="946.2" width="6.5" height="1.3" fill="#be81f2"/><rect x="188.2" y="946.2" width="6.5" height="1.3" fill="#be81f2"/><rect x="213.4" y="946.2" width="6.5" height="1.3" fill="#be81f2"/><rect x="263.8" y="946.2" width="6.5" height="1.3" fill="#be81f2"/><rect x="297.4" y="946.2" width="6.5" height="1.3" fill="#be81f2"/><rect x="45.4" y="951.8" width="6.5" height="1.3" fill="#be81f2"/><rect x="129.4" y="951.8" width="6.5" height="1.3" fill="#be81f2"/><rect x="188.2" y="951.8" width="6.5" height="1.3" fill="#be81f2"/><rect x="238.6" y="951.8" width="6.5" height="1.3" fill="#be81f2"/><rect x="280.6" y="951.8" width="6.5" height="1.3" fill="#be81f2"/><rect x="37" y="957.4" width="6.5" height="1.3" fill="#be81f2"/><rect x="112.6" y="957.4" width="6.5" height="1.3" fill="#be81f2"/><rect x="121" y="957.4" width="6.5" height="1.3" fill="#be81f2"/><rect x="154.6" y="957.4" width="6.5" height="1.3" fill="#be81f2"/><rect x="196.6" y="957.4" width="6.5" height="1.3" fill="#be81f2"/><rect x="37" y="963" width="6.5" height="1.3" fill="#be81f2"/><rect x="112.6" y="963" width="6.5" height="1.3" fill="#be81f2"/><rect x="154.6" y="963" width="6.5" height="1.3" fill="#be81f2"/><rect x="280.6" y="963" width="6.5" height="1.3" fill="#be81f2"/><rect x="297.4" y="963" width="6.5" height="1.3" fill="#be81f2"/><rect x="104.2" y="968.6" width="6.5" height="1.3" fill="#be81f2"/><rect x="146.2" y="968.6" width="6.5" height="1.3" fill="#be81f2"/><rect x="163" y="968.6" width="6.5" height="1.3" fill="#be81f2"/><rect x="196.6" y="968.6" width="6.5" height="1.3" fill="#be81f2"/><rect x="205" y="968.6" width="6.5" height="1.3" fill="#be81f2"/><rect x="280.6" y="968.6" width="6.5" height="1.3" fill="#be81f2"/><rect x="53.8" y="974.2" width="6.5" height="1.3" fill="#be81f2"/><rect x="79" y="974.2" width="6.5" height="1.3" fill="#be81f2"/><rect x="87.4" y="974.2" width="6.5" height="1.3" fill="#be81f2"/><rect x="112.6" y="974.2" width="6.5" height="1.3" fill="#be81f2"/><rect x="129.4" y="974.2" width="6.5" height="1.3" fill="#be81f2"/><rect x="154.6" y="974.2" width="6.5" height="1.3" fill="#be81f2"/><rect x="213.4" y="974.2" width="6.5" height="1.3" fill="#be81f2"/><rect x="263.8" y="974.2" width="6.5" height="1.3" fill="#be81f2"/><rect x="38.9" y="943.3" width="16" height="17.3" fill="#ffffff"/><rect x="38.9" y="947.3" width="9.92" height="1.4" fill="#a857ee"/><rect x="38.9" y="951.7" width="9.92" height="1.4" fill="#a857ee"/><rect x="38.9" y="956.1" width="9.92" height="1.4" fill="#a857ee"/><text x="62" y="960.2" font-size="27.5" fill="#ffffff" textLength="119.7" lengthAdjust="spacingAndGlyphs"  stroke="#ffffff" stroke-width="0.6">Piano 1 #2</text><rect x="35" y="986.4" width="270" height="55" fill="url(#g14)"/><rect x="170" y="989.4" width="8" height="1.6" fill="#5c646c"/><rect x="182" y="989.4" width="8" height="1.6" fill="#5c646c"/><rect x="203" y="989.4" width="8" height="1.6" fill="#5c646c"/><rect x="216" y="989.4" width="8" height="1.6" fill="#5c646c"/><rect x="237" y="992.4" width="8" height="1.6" fill="#5c646c"/><rect x="249" y="992.4" width="8" height="1.6" fill="#5c646c"/><rect x="270" y="989.4" width="8" height="1.6" fill="#5c646c"/><rect x="283" y="989.4" width="8" height="1.6" fill="#5c646c"/><rect x="237" y="997.4" width="8" height="1.6" fill="#5c646c"/><rect x="249" y="997.4" width="8" height="1.6" fill="#5c646c"/><rect x="270" y="996.4" width="8" height="1.6" fill="#5c646c"/><rect x="283" y="996.4" width="8" height="1.6" fill="#5c646c"/><rect x="203" y="1001.4" width="8" height="1.6" fill="#5c646c"/><rect x="216" y="1001.4" width="8" height="1.6" fill="#5c646c"/><rect x="36.6" y="1027.4" width="8" height="1.6" fill="#5c646c"/><rect x="69" y="1027.4" width="8" height="1.6" fill="#5c646c"/><rect x="81" y="1027.4" width="8" height="1.6" fill="#5c646c"/><rect x="170" y="1027.4" width="8" height="1.6" fill="#5c646c"/><rect x="182" y="1027.4" width="8" height="1.6" fill="#5c646c"/><rect x="203" y="1027.4" width="8" height="1.6" fill="#5c646c"/><rect x="216" y="1027.4" width="8" height="1.6" fill="#5c646c"/><rect x="237" y="1023.4" width="8" height="1.6" fill="#5c646c"/><rect x="249" y="1023.4" width="8" height="1.6" fill="#5c646c"/><rect x="270" y="1040.4" width="8" height="1.6" fill="#5c646c"/><rect x="283" y="1040.4" width="8" height="1.6" fill="#5c646c"/><rect x="102" y="1014.4" width="8" height="1.6" fill="#5c646c"/><rect x="115" y="1014.4" width="8" height="1.6" fill="#5c646c"/><rect x="153" y="1014.4" width="8" height="1.6" fill="#5c646c"/><rect x="38.9" y="1005.3" width="16" height="17.3" fill="#e8ebed"/><rect x="38.9" y="1009.3" width="9.92" height="1.4" fill="#4a525a"/><rect x="38.9" y="1013.7" width="9.92" height="1.4" fill="#4a525a"/><rect x="38.9" y="1018.1" width="9.92" height="1.4" fill="#4a525a"/><text x="62" y="1022.2" font-size="27.5" fill="#d8dcdf" textLength="117.7" lengthAdjust="spacingAndGlyphs"  stroke="#d8dcdf" stroke-width="0.6">Pattern 15</text><rect x="35" y="1048.4" width="270" height="55" fill="url(#g15)"/><rect x="237" y="1051.4" width="66" height="10" fill="#5c646c"/><rect x="178" y="1072.4" width="57" height="10" fill="#5c646c"/><rect x="36.6" y="1093.4" width="132" height="10" fill="#5c646c"/><rect x="38.9" y="1067.3" width="16" height="17.3" fill="#e8ebed"/><rect x="38.9" y="1071.3" width="9.92" height="1.4" fill="#4a525a"/><rect x="38.9" y="1075.7" width="9.92" height="1.4" fill="#4a525a"/><rect x="38.9" y="1080.1" width="9.92" height="1.4" fill="#4a525a"/><text x="62" y="1084.2" font-size="27.5" fill="#d8dcdf" textLength="117.7" lengthAdjust="spacingAndGlyphs"  stroke="#d8dcdf" stroke-width="0.6">Pattern 16</text><rect x="35" y="1110.4" width="270" height="55" fill="url(#g16)"/><rect x="35" y="1110.4" width="270" height="1.4" fill="#e0c6f0"/><rect x="35" y="1164.2" width="270" height="1.2" fill="#aa8abe"/><rect x="102" y="1160.4" width="8" height="5" fill="#dabbed"/><rect x="237" y="1160.4" width="8" height="5" fill="#dabbed"/><rect x="38.9" y="1129.3" width="16" height="17.3" fill="#ffffff"/><rect x="38.9" y="1133.3" width="9.92" height="1.4" fill="#cfa8e8"/><rect x="38.9" y="1137.7" width="9.92" height="1.4" fill="#cfa8e8"/><rect x="38.9" y="1142.1" width="9.92" height="1.4" fill="#cfa8e8"/><text x="62" y="1146.2" font-size="27.5" fill="#ffffff" textLength="67.6" lengthAdjust="spacingAndGlyphs"  stroke="#ffffff" stroke-width="0.6">Clap 2</text><rect x="35" y="1172.4" width="270" height="55" fill="url(#g17)"/><rect x="35" y="1172.4" width="270" height="1.4" fill="#e2c4f0"/><rect x="35" y="1226.2" width="270" height="1.2" fill="#ac86be"/><rect x="36.6" y="1223.4" width="15" height="3.5" fill="#dcb8ed"/><rect x="55" y="1223.4" width="31" height="3.5" fill="#dcb8ed"/><rect x="89" y="1223.4" width="31" height="3.5" fill="#dcb8ed"/><rect x="123" y="1223.4" width="31" height="3.5" fill="#dcb8ed"/><rect x="156" y="1223.4" width="31" height="3.5" fill="#dcb8ed"/><rect x="190" y="1223.4" width="31" height="3.5" fill="#dcb8ed"/><rect x="223" y="1223.4" width="31" height="3.5" fill="#dcb8ed"/><rect x="257" y="1223.4" width="31" height="3.5" fill="#dcb8ed"/><rect x="291" y="1223.4" width="12" height="3.5" fill="#dcb8ed"/><rect x="38.9" y="1191.3" width="16" height="17.3" fill="#ffffff"/><rect x="38.9" y="1195.3" width="9.92" height="1.4" fill="#d2a4e8"/><rect x="38.9" y="1199.7" width="9.92" height="1.4" fill="#d2a4e8"/><rect x="38.9" y="1204.1" width="9.92" height="1.4" fill="#d2a4e8"/><text x="62" y="1208.2" font-size="27.5" fill="#ffffff" textLength="96.6" lengthAdjust="spacingAndGlyphs"  stroke="#ffffff" stroke-width="0.6">Shaker 2</text><rect x="35" y="1234.4" width="270" height="55" fill="url(#g18)"/><rect x="35" y="1234.4" width="270" height="1.4" fill="#d0a7e4"/><rect x="35" y="1288.2" width="270" height="1.2" fill="#9562af"/><rect x="36.6" y="1251.4" width="267" height="3.5" fill="#c696df"/><rect x="38.9" y="1253.3" width="16" height="17.3" fill="#ffffff"/><rect x="38.9" y="1257.3" width="9.92" height="1.4" fill="#b678d6"/><rect x="38.9" y="1261.7" width="9.92" height="1.4" fill="#b678d6"/><rect x="38.9" y="1266.1" width="9.92" height="1.4" fill="#b678d6"/><text x="62" y="1270.2" font-size="27.5" fill="#ffffff" textLength="79" lengthAdjust="spacingAndGlyphs"  stroke="#ffffff" stroke-width="0.6">Strings</text><rect x="35" y="1296.4" width="270" height="55" fill="url(#g19)"/><rect x="35" y="1296.4" width="270" height="1.4" fill="#d6b2da"/><rect x="35" y="1350.2" width="270" height="1.2" fill="#9d70a2"/><rect x="271" y="1313.4" width="32" height="3.5" fill="#cea2d3"/><rect x="38.9" y="1315.3" width="16" height="17.3" fill="#ffffff"/><rect x="38.9" y="1319.3" width="9.92" height="1.4" fill="#c088c6"/><rect x="38.9" y="1323.7" width="9.92" height="1.4" fill="#c088c6"/><rect x="38.9" y="1328.1" width="9.92" height="1.4" fill="#c088c6"/><text x="62" y="1332.2" font-size="27.5" fill="#ffffff" textLength="123" lengthAdjust="spacingAndGlyphs"  stroke="#ffffff" stroke-width="0.6">Vocal Chop</text><rect x="35" y="1358.4" width="270" height="55" fill="url(#g20)"/><rect x="35" y="1358.4" width="270" height="1.4" fill="#dbb9d0"/><rect x="35" y="1412.2" width="270" height="1.2" fill="#a47995"/><rect x="36.6" y="1375.4" width="267" height="3.5" fill="#d4acc6"/><rect x="38.9" y="1377.3" width="16" height="17.3" fill="#ffffff"/><rect x="38.9" y="1381.3" width="9.92" height="1.4" fill="#c894b6"/><rect x="38.9" y="1385.7" width="9.92" height="1.4" fill="#c894b6"/><rect x="38.9" y="1390.1" width="9.92" height="1.4" fill="#c894b6"/><text x="62" y="1394.2" font-size="27.5" fill="#ffffff" textLength="108.4" lengthAdjust="spacingAndGlyphs"  stroke="#ffffff" stroke-width="0.6">Ambience</text><rect x="35" y="1420.4" width="270" height="55" fill="url(#g21)"/><rect x="35" y="1420.4" width="270" height="1.4" fill="#e0c3c6"/><rect x="35" y="1474.2" width="270" height="1.2" fill="#ab858a"/><rect x="36.6" y="1437.4" width="267" height="3.5" fill="#dab6bb"/><rect x="38.9" y="1439.3" width="16" height="17.3" fill="#ffffff"/><rect x="38.9" y="1443.3" width="9.92" height="1.4" fill="#d0a2a8"/><rect x="38.9" y="1447.7" width="9.92" height="1.4" fill="#d0a2a8"/><rect x="38.9" y="1452.1" width="9.92" height="1.4" fill="#d0a2a8"/><text x="62" y="1456.2" font-size="27.5" fill="#ffffff" textLength="80.8" lengthAdjust="spacingAndGlyphs"  stroke="#ffffff" stroke-width="0.6">Pluck 2</text><rect x="35" y="1482.4" width="270" height="55" fill="url(#g22)"/><rect x="35" y="1482.4" width="270" height="1.4" fill="#e4cab9"/><rect x="35" y="1536.2" width="270" height="1.2" fill="#af8f79"/><rect x="170" y="1485.4" width="66" height="1.6" fill="#dfc0ab"/><rect x="237" y="1491.4" width="66" height="1.6" fill="#dfc0ab"/><rect x="36.6" y="1496.4" width="132" height="1.6" fill="#dfc0ab"/><rect x="36.6" y="1522.4" width="132" height="1.6" fill="#dfc0ab"/><rect x="170" y="1518.4" width="66" height="1.6" fill="#dfc0ab"/><rect x="237" y="1534.4" width="66" height="1.6" fill="#dfc0ab"/><rect x="38.9" y="1501.3" width="16" height="17.3" fill="#ffffff"/><rect x="38.9" y="1505.3" width="9.92" height="1.4" fill="#d6ae93"/><rect x="38.9" y="1509.7" width="9.92" height="1.4" fill="#d6ae93"/><rect x="38.9" y="1514.1" width="9.92" height="1.4" fill="#d6ae93"/><text x="62" y="1518.2" font-size="27.5" fill="#ffffff" textLength="36.6" lengthAdjust="spacingAndGlyphs"  stroke="#ffffff" stroke-width="0.6">Arp</text><rect x="35" y="1544.4" width="270" height="55" fill="url(#g23)"/><rect x="35" y="1544.4" width="270" height="1.4" fill="#e8bbf3"/><rect x="35" y="1598.2" width="270" height="1.2" fill="#b47bc2"/><rect x="36.6" y="1557.9" width="132" height="2.6" fill="#e4adf0"/><rect x="170" y="1559.4" width="66" height="2.6" fill="#e4adf0"/><rect x="237" y="1557.9" width="66" height="2.6" fill="#e4adf0"/><rect x="38.9" y="1563.3" width="16" height="17.3" fill="#ffffff"/><rect x="38.9" y="1567.3" width="9.92" height="1.4" fill="#dc96ec"/><rect x="38.9" y="1571.7" width="9.92" height="1.4" fill="#dc96ec"/><rect x="38.9" y="1576.1" width="9.92" height="1.4" fill="#dc96ec"/><text x="62" y="1580.2" font-size="27.5" fill="#ffffff" textLength="59.7" lengthAdjust="spacingAndGlyphs"  stroke="#ffffff" stroke-width="0.6">Crash</text><rect x="35" y="1606.4" width="270" height="55" fill="url(#g24)"/><rect x="35" y="1606.4" width="270" height="1.4" fill="#e8bbf3"/><rect x="35" y="1660.2" width="270" height="1.2" fill="#b47bc2"/><rect x="36.6" y="1619.9" width="267" height="2.6" fill="#e4adf0"/><rect x="38.9" y="1625.3" width="16" height="17.3" fill="#ffffff"/><rect x="38.9" y="1629.3" width="9.92" height="1.4" fill="#dc96ec"/><rect x="38.9" y="1633.7" width="9.92" height="1.4" fill="#dc96ec"/><rect x="38.9" y="1638.1" width="9.92" height="1.4" fill="#dc96ec"/><text x="62" y="1642.2" font-size="27.5" fill="#ffffff" textLength="94" lengthAdjust="spacingAndGlyphs"  stroke="#ffffff" stroke-width="0.6">Crash #2</text><path d="M33.5 1561.4 L47.5 1572.4 L33.5 1582.9 Z" fill="#e63c64" stroke="#2a1030" stroke-width="1"/><rect x="340" y="172.5" width="212" height="1463.5" fill="#3f474e"/><rect x="350" y="173" width="203" height="1463" fill="#242d34"/><defs><radialGradient id="ledg" cx="0.5" cy="0.95" r="0.95"><stop offset="0" stop-color="#d6f6a0"/><stop offset="0.45" stop-color="#98dc44"/><stop offset="1" stop-color="#62b418"/></radialGradient></defs><path d="M352 174 H541.5 a10 10 0 0 1 10 10 V328.5 a13 13 0 0 1 -13 13 H364 V206 a12 12 0 0 1 -12 -12 Z" fill="#86e4e4"/><circle cx="367.2" cy="188.6" r="8.8" fill="#0a4e54"/><path d="M362.7 194.08 L365.93 182.54 L368.47 182.54 L371.7 194.08 L369.45 194.08 L367.2 185.67 Z M364.95 194.08 L364.95 194.08 L364.95 194.08 Z" fill="#86e4e4" fill-rule="evenodd"/><path d="M363.78 193.88 L367.2 183.12 L370.62 193.88" fill="none" stroke="#86e4e4" stroke-width="2.05" stroke-linejoin="miter"/><path d="M364.85 190.75 H369.55" stroke="#86e4e4" stroke-width="1.66"/><text x="383" y="195" font-size="22.5" fill="#0a4e54" textLength="54" lengthAdjust="spacingAndGlyphs"  stroke="#0a4e54" stroke-width="0.49">Vo..us</text><path d="M489 185.2 L506.2 185.2 L497.6 194 Z" fill="#0a4e54"/><path d="M525.9 191.7 v-6.2 a4.7 4.7 0 0 1 9.4 0 v6.2" fill="none" stroke="#90d21e" stroke-width="2.1"/><rect x="523.2" y="191.4" width="14.6" height="8.6" fill="#90d21e" rx="0.8"/><rect x="529.5" y="193.9" width="1.7" height="4.2" fill="#d6f2a4"/><rect x="453.4" y="178.6" width="8.2" height="15" fill="#0a4e54" rx="4"/><rect x="453.4" y="181.6" width="8.2" height="0.9" fill="#86e4e4"/><rect x="453.4" y="184.2" width="8.2" height="0.9" fill="#86e4e4"/><rect x="453.4" y="186.8" width="8.2" height="0.9" fill="#86e4e4"/><rect x="453.4" y="189.4" width="8.2" height="0.9" fill="#86e4e4"/><path d="M450.6 188 v2.5 a6.9 6.9 0 0 0 13.8 0 v-2.5" fill="none" stroke="#0a4e54" stroke-width="1.7"/><rect x="456.7" y="197" width="1.7" height="3.4" fill="#0a4e54"/><rect x="452.6" y="200" width="9.8" height="1.6" fill="#0a4e54"/><path d="M352 341.5 H541.5 a10 10 0 0 1 10 10 V374.7 H364 V373.9 a12 12 0 0 1 -12 -12 Z" fill="#f0a2f5"/><circle cx="367.2" cy="357.1" r="8.8" fill="#820a82"/><path d="M362.7 362.58 L365.93 351.04 L368.47 351.04 L371.7 362.58 L369.45 362.58 L367.2 354.17 Z M364.95 362.58 L364.95 362.58 L364.95 362.58 Z" fill="#f0a2f5" fill-rule="evenodd"/><path d="M363.78 362.38 L367.2 351.62 L370.62 362.38" fill="none" stroke="#f0a2f5" stroke-width="2.05" stroke-linejoin="miter"/><path d="M364.85 359.25 H369.55" stroke="#f0a2f5" stroke-width="1.66"/><text x="383" y="363.5" font-size="22.5" fill="#820a82" textLength="54" lengthAdjust="spacingAndGlyphs"  stroke="#820a82" stroke-width="0.49">Ins..s</text><path d="M489 362.2 L497.6 353.4 L506.2 362.2 Z" fill="#820a82"/><path d="M525.9 360.2 v-6.2 a4.7 4.7 0 0 1 9.4 0 v6.2" fill="none" stroke="#90d21e" stroke-width="2.1"/><rect x="523.2" y="359.9" width="14.6" height="8.6" fill="#90d21e" rx="0.8"/><rect x="529.5" y="362.4" width="1.7" height="4.2" fill="#d6f2a4"/><g transform="translate(451.3 346.1) scale(0.92 0.98)" fill="none" stroke="#820a82" stroke-width="1.5" stroke-linecap="round"><path d="M6.5 25.5 C9.6 25.5 9.9 22.5 9.4 20 L6.3 3.8 C5.8 1 8 -0.5 9 1.6 C10 4.2 8.6 7.2 6 9.8 C3 12.8 1.4 15.2 3 18.2 C4.6 21 9.2 20.6 10.2 17.6 C11 15 9.2 13 7.1 13.3 C5.1 13.6 4.4 15.9 5.6 17.3"/></g><circle cx="455.6" cy="369.8" r="1.7" fill="#820a82"/><rect x="364" y="373.9" width="187.5" height="112.5" fill="#a856f0"/><circle cx="379" cy="390.9" r="9" fill="#ffffff"/><path d="M374.4 396.5 L377.7 384.7 L380.3 384.7 L383.6 396.5 L381.3 396.5 L379 387.9 Z M376.7 396.5 L376.7 396.5 L376.7 396.5 Z" fill="#a856f0" fill-rule="evenodd"/><path d="M375.5 396.3 L379 385.3 L382.5 396.3" fill="none" stroke="#a856f0" stroke-width="2.1" stroke-linejoin="miter"/><path d="M376.6 393.1 H381.4" stroke="#a856f0" stroke-width="1.7"/><text x="395" y="399.4" font-size="27.5" fill="#ffffff" textLength="83.6" lengthAdjust="spacingAndGlyphs"  stroke="#ffffff" stroke-width="0.6">Piano 1</text><rect x="440" y="406.9" width="107.7" height="36.2" fill="#8a3ad4" rx="8"/><path d="M452 422.4 h5 v-4.2 l7.5 6.7 l-7.5 6.7 v-4.2 h-5 z" fill="#ffffff"/><path d="M462.5 416.7 A9 9 0 0 1 462.5 433.1" fill="none" stroke="#ffffff" stroke-width="2.1"/><path d="M487.5 421.9 l3.5 -0.8 l6 -5.8 v19.2 l-6 -5.8 l-3.5 -0.8 z" fill="none" stroke="#ffffff" stroke-width="1.9" stroke-linejoin="round"/><path d="M500.3 419.1 l6.5 5.8 l-6.5 5.8 z" fill="#ffffff"/><circle cx="530" cy="424.9" r="5" fill="#ffffff"/><g transform="translate(483.8 448.1) scale(1.06)" fill="#ffffff"><ellipse cx="5.2" cy="21" rx="5.4" ry="4" transform="rotate(-25 5.2 21)"/><path d="M8.6 21 L11.2 0 L12.8 0 C13.5 5 19 7 18.6 13 C18.4 15 17.6 16.5 16.8 17.5 C17.5 13.5 15.5 10 12 8.6 L10.6 21 Z"/></g><circle cx="530.3" cy="466.2" r="10.3" fill="#1c2a10"/><circle cx="530.3" cy="466.2" r="8.1" fill="url(#ledg)"/><rect x="380" y="474.1" width="4.2" height="3.6" fill="#8343bb"/><rect x="388" y="474.1" width="4.2" height="3.6" fill="#8343bb"/><rect x="396" y="474.1" width="4.2" height="3.6" fill="#8343bb"/><rect x="364" y="485.7" width="187.5" height="32.5" fill="#f0dca4"/><text x="369" y="507.8" font-size="22.5" fill="#7a5a10" textLength="76" lengthAdjust="spacingAndGlyphs"  stroke="#7a5a10" stroke-width="0.49">SC Level</text><circle cx="530.3" cy="501.3" r="10.3" fill="#1c2a10"/><circle cx="530.3" cy="501.3" r="8.1" fill="url(#ledg)"/><rect x="364" y="517.5" width="187.5" height="33.1" fill="#b068e0"/><circle cx="379" cy="533.1" r="8.8" fill="#ffffff"/><path d="M374.5 538.58 L377.73 527.04 L380.27 527.04 L383.5 538.58 L381.25 538.58 L379 530.17 Z M376.75 538.58 L376.75 538.58 L376.75 538.58 Z" fill="#b068e0" fill-rule="evenodd"/><path d="M375.58 538.38 L379 527.62 L382.42 538.38" fill="none" stroke="#b068e0" stroke-width="2.05" stroke-linejoin="miter"/><path d="M376.65 535.25 H381.35" stroke="#b068e0" stroke-width="1.66"/><text x="395" y="539.7" font-size="22.5" fill="#ffffff" textLength="72.4" lengthAdjust="spacingAndGlyphs"  stroke="#ffffff" stroke-width="0.49">Piano 2</text><g transform="translate(486.5 523.1) scale(0.78)" fill="#ffffff"><ellipse cx="5.2" cy="21" rx="5.4" ry="4" transform="rotate(-25 5.2 21)"/><path d="M8.6 21 L11.2 0 L12.8 0 C13.5 5 19 7 18.6 13 C18.4 15 17.6 16.5 16.8 17.5 C17.5 13.5 15.5 10 12 8.6 L10.6 21 Z"/></g><circle cx="530.3" cy="533.1" r="10.3" fill="#1c2a10"/><circle cx="530.3" cy="533.1" r="8.1" fill="url(#ledg)"/><rect x="364" y="549.9" width="187.5" height="72.5" fill="#b870d8"/><circle cx="379" cy="566.9" r="9" fill="#ffffff"/><path d="M374.4 572.5 L377.7 560.7 L380.3 560.7 L383.6 572.5 L381.3 572.5 L379 563.9 Z M376.7 572.5 L376.7 572.5 L376.7 572.5 Z" fill="#b870d8" fill-rule="evenodd"/><path d="M375.5 572.3 L379 561.3 L382.5 572.3" fill="none" stroke="#b870d8" stroke-width="2.1" stroke-linejoin="miter"/><path d="M376.6 569.1 H381.4" stroke="#b870d8" stroke-width="1.7"/><text x="395" y="575.4" font-size="27.5" fill="#ffffff" textLength="79.4" lengthAdjust="spacingAndGlyphs"  stroke="#ffffff" stroke-width="0.6">Strings</text><g transform="translate(483.8 584.1) scale(1.06)" fill="#ffffff"><ellipse cx="5.2" cy="21" rx="5.4" ry="4" transform="rotate(-25 5.2 21)"/><path d="M8.6 21 L11.2 0 L12.8 0 C13.5 5 19 7 18.6 13 C18.4 15 17.6 16.5 16.8 17.5 C17.5 13.5 15.5 10 12 8.6 L10.6 21 Z"/></g><circle cx="530.3" cy="602.2" r="10.3" fill="#1c2a10"/><circle cx="530.3" cy="602.2" r="8.1" fill="url(#ledg)"/><rect x="380" y="610.1" width="4.2" height="3.6" fill="#9057a8"/><rect x="388" y="610.1" width="4.2" height="3.6" fill="#9057a8"/><rect x="396" y="610.1" width="4.2" height="3.6" fill="#9057a8"/><rect x="364" y="621.7" width="187.5" height="84.6" fill="#c082c8"/><circle cx="379" cy="638.7" r="9" fill="#ffffff"/><path d="M374.4 644.3 L377.7 632.5 L380.3 632.5 L383.6 644.3 L381.3 644.3 L379 635.7 Z M376.7 644.3 L376.7 644.3 L376.7 644.3 Z" fill="#c082c8" fill-rule="evenodd"/><path d="M375.5 644.1 L379 633.1 L382.5 644.1" fill="none" stroke="#c082c8" stroke-width="2.1" stroke-linejoin="miter"/><path d="M376.6 640.9 H381.4" stroke="#c082c8" stroke-width="1.7"/><text x="395" y="647.2" font-size="27.5" fill="#ffffff" textLength="123" lengthAdjust="spacingAndGlyphs"  stroke="#ffffff" stroke-width="0.6">Vocal Chop</text><g transform="translate(483.8 668) scale(1.06)" fill="#ffffff"><ellipse cx="5.2" cy="21" rx="5.4" ry="4" transform="rotate(-25 5.2 21)"/><path d="M8.6 21 L11.2 0 L12.8 0 C13.5 5 19 7 18.6 13 C18.4 15 17.6 16.5 16.8 17.5 C17.5 13.5 15.5 10 12 8.6 L10.6 21 Z"/></g><circle cx="530.3" cy="686.1" r="10.3" fill="#1c2a10"/><circle cx="530.3" cy="686.1" r="8.1" fill="url(#ledg)"/><rect x="380" y="694" width="4.2" height="3.6" fill="#96659c"/><rect x="388" y="694" width="4.2" height="3.6" fill="#96659c"/><rect x="396" y="694" width="4.2" height="3.6" fill="#96659c"/><rect x="364" y="705.6" width="187.5" height="74.5" fill="#c890b4"/><circle cx="379" cy="722.6" r="9" fill="#ffffff"/><path d="M374.4 728.2 L377.7 716.4 L380.3 716.4 L383.6 728.2 L381.3 728.2 L379 719.6 Z M376.7 728.2 L376.7 728.2 L376.7 728.2 Z" fill="#c890b4" fill-rule="evenodd"/><path d="M375.5 728 L379 717 L382.5 728" fill="none" stroke="#c890b4" stroke-width="2.1" stroke-linejoin="miter"/><path d="M376.6 724.8 H381.4" stroke="#c890b4" stroke-width="1.7"/><text x="395" y="731.1" font-size="27.5" fill="#ffffff" textLength="108" lengthAdjust="spacingAndGlyphs"  stroke="#ffffff" stroke-width="0.6">Ambience</text><g transform="translate(483.8 741.8) scale(1.06)" fill="#ffffff"><ellipse cx="5.2" cy="21" rx="5.4" ry="4" transform="rotate(-25 5.2 21)"/><path d="M8.6 21 L11.2 0 L12.8 0 C13.5 5 19 7 18.6 13 C18.4 15 17.6 16.5 16.8 17.5 C17.5 13.5 15.5 10 12 8.6 L10.6 21 Z"/></g><circle cx="530.3" cy="759.9" r="10.3" fill="#1c2a10"/><circle cx="530.3" cy="759.9" r="8.1" fill="url(#ledg)"/><rect x="380" y="767.8" width="4.2" height="3.6" fill="#9c708c"/><rect x="388" y="767.8" width="4.2" height="3.6" fill="#9c708c"/><rect x="396" y="767.8" width="4.2" height="3.6" fill="#9c708c"/><rect x="364" y="779.4" width="187.5" height="86.6" fill="#d0a0a4"/><circle cx="379" cy="796.4" r="9" fill="#ffffff"/><path d="M374.4 802 L377.7 790.2 L380.3 790.2 L383.6 802 L381.3 802 L379 793.4 Z M376.7 802 L376.7 802 L376.7 802 Z" fill="#d0a0a4" fill-rule="evenodd"/><path d="M375.5 801.8 L379 790.8 L382.5 801.8" fill="none" stroke="#d0a0a4" stroke-width="2.1" stroke-linejoin="miter"/><path d="M376.6 798.6 H381.4" stroke="#d0a0a4" stroke-width="1.7"/><text x="395" y="804.9" font-size="27.5" fill="#ffffff" textLength="80.8" lengthAdjust="spacingAndGlyphs"  stroke="#ffffff" stroke-width="0.6">Pluck 2</text><g transform="translate(483.8 827.7) scale(1.06)" fill="#ffffff"><ellipse cx="5.2" cy="21" rx="5.4" ry="4" transform="rotate(-25 5.2 21)"/><path d="M8.6 21 L11.2 0 L12.8 0 C13.5 5 19 7 18.6 13 C18.4 15 17.6 16.5 16.8 17.5 C17.5 13.5 15.5 10 12 8.6 L10.6 21 Z"/></g><circle cx="530.3" cy="845.8" r="10.3" fill="#1c2a10"/><circle cx="530.3" cy="845.8" r="8.1" fill="url(#ledg)"/><rect x="380" y="853.7" width="4.2" height="3.6" fill="#a27d80"/><rect x="388" y="853.7" width="4.2" height="3.6" fill="#a27d80"/><rect x="396" y="853.7" width="4.2" height="3.6" fill="#a27d80"/><rect x="364" y="865.3" width="187.5" height="113.3" fill="#d5aa8e"/><circle cx="379" cy="882.3" r="9" fill="#ffffff"/><path d="M374.4 887.9 L377.7 876.1 L380.3 876.1 L383.6 887.9 L381.3 887.9 L379 879.3 Z M376.7 887.9 L376.7 887.9 L376.7 887.9 Z" fill="#d5aa8e" fill-rule="evenodd"/><path d="M375.5 887.7 L379 876.7 L382.5 887.7" fill="none" stroke="#d5aa8e" stroke-width="2.1" stroke-linejoin="miter"/><path d="M376.6 884.5 H381.4" stroke="#d5aa8e" stroke-width="1.7"/><text x="395" y="890.8" font-size="27.5" fill="#ffffff" textLength="35.8" lengthAdjust="spacingAndGlyphs"  stroke="#ffffff" stroke-width="0.6">Arp</text><rect x="440" y="898.3" width="107.7" height="36.2" fill="#ba9274" rx="8"/><path d="M452 913.8 h5 v-4.2 l7.5 6.7 l-7.5 6.7 v-4.2 h-5 z" fill="#ffffff"/><path d="M462.5 908.1 A9 9 0 0 1 462.5 924.5" fill="none" stroke="#ffffff" stroke-width="2.1"/><path d="M487.5 913.3 l3.5 -0.8 l6 -5.8 v19.2 l-6 -5.8 l-3.5 -0.8 z" fill="none" stroke="#ffffff" stroke-width="1.9" stroke-linejoin="round"/><path d="M500.3 910.5 l6.5 5.8 l-6.5 5.8 z" fill="#ffffff"/><circle cx="530" cy="916.3" r="5" fill="#ffffff"/><g transform="translate(483.8 940.3) scale(1.06)" fill="#ffffff"><ellipse cx="5.2" cy="21" rx="5.4" ry="4" transform="rotate(-25 5.2 21)"/><path d="M8.6 21 L11.2 0 L12.8 0 C13.5 5 19 7 18.6 13 C18.4 15 17.6 16.5 16.8 17.5 C17.5 13.5 15.5 10 12 8.6 L10.6 21 Z"/></g><circle cx="530.3" cy="958.4" r="10.3" fill="#1c2a10"/><circle cx="530.3" cy="958.4" r="8.1" fill="url(#ledg)"/><rect x="380" y="966.3" width="4.2" height="3.6" fill="#a6856f"/><rect x="388" y="966.3" width="4.2" height="3.6" fill="#a6856f"/><rect x="396" y="966.3" width="4.2" height="3.6" fill="#a6856f"/><rect x="364" y="977.9" width="187.5" height="112.5" fill="#dcb87c"/><circle cx="379" cy="994.9" r="9" fill="#ffffff"/><path d="M374.4 1000.5 L377.7 988.7 L380.3 988.7 L383.6 1000.5 L381.3 1000.5 L379 991.9 Z M376.7 1000.5 L376.7 1000.5 L376.7 1000.5 Z" fill="#dcb87c" fill-rule="evenodd"/><path d="M375.5 1000.3 L379 989.3 L382.5 1000.3" fill="none" stroke="#dcb87c" stroke-width="2.1" stroke-linejoin="miter"/><path d="M376.6 997.1 H381.4" stroke="#dcb87c" stroke-width="1.7"/><text x="395" y="1003.4" font-size="27.5" fill="#ffffff" textLength="58.9" lengthAdjust="spacingAndGlyphs"  stroke="#ffffff" stroke-width="0.6">Pluck</text><rect x="440" y="1010.9" width="107.7" height="36.2" fill="#c4a468" rx="8"/><path d="M452 1026.4 h5 v-4.2 l7.5 6.7 l-7.5 6.7 v-4.2 h-5 z" fill="#2e2008"/><path d="M462.5 1020.7 A9 9 0 0 1 462.5 1037.1" fill="none" stroke="#2e2008" stroke-width="2.1"/><path d="M487.5 1025.9 l3.5 -0.8 l6 -5.8 v19.2 l-6 -5.8 l-3.5 -0.8 z" fill="none" stroke="#2e2008" stroke-width="1.9" stroke-linejoin="round"/><path d="M500.3 1023.1 l6.5 5.8 l-6.5 5.8 z" fill="#2e2008"/><circle cx="530" cy="1028.9" r="5" fill="#2e2008"/><g transform="translate(483.8 1052.1) scale(1.06)" fill="#ffffff"><ellipse cx="5.2" cy="21" rx="5.4" ry="4" transform="rotate(-25 5.2 21)"/><path d="M8.6 21 L11.2 0 L12.8 0 C13.5 5 19 7 18.6 13 C18.4 15 17.6 16.5 16.8 17.5 C17.5 13.5 15.5 10 12 8.6 L10.6 21 Z"/></g><circle cx="530.3" cy="1070.2" r="10.3" fill="#1c2a10"/><circle cx="530.3" cy="1070.2" r="8.1" fill="url(#ledg)"/><rect x="380" y="1078.1" width="4.2" height="3.6" fill="#ac9061"/><rect x="388" y="1078.1" width="4.2" height="3.6" fill="#ac9061"/><rect x="396" y="1078.1" width="4.2" height="3.6" fill="#ac9061"/><rect x="364" y="1089.7" width="187.5" height="32.5" fill="#eca2f4"/><circle cx="379" cy="1105.3" r="8.8" fill="#820a82"/><path d="M374.5 1110.78 L377.73 1099.24 L380.27 1099.24 L383.5 1110.78 L381.25 1110.78 L379 1102.37 Z M376.75 1110.78 L376.75 1110.78 L376.75 1110.78 Z" fill="#eca2f4" fill-rule="evenodd"/><path d="M375.58 1110.58 L379 1099.82 L382.42 1110.58" fill="none" stroke="#eca2f4" stroke-width="2.05" stroke-linejoin="miter"/><path d="M376.65 1107.45 H381.35" stroke="#eca2f4" stroke-width="1.66"/><text x="395" y="1111.9" font-size="22.5" fill="#820a82" textLength="76.6" lengthAdjust="spacingAndGlyphs"  stroke="#820a82" stroke-width="0.49">Pia..RP 1</text><g transform="translate(486.5 1095.3) scale(0.78)" fill="#820a82"><ellipse cx="5.2" cy="21" rx="5.4" ry="4" transform="rotate(-25 5.2 21)"/><path d="M8.6 21 L11.2 0 L12.8 0 C13.5 5 19 7 18.6 13 C18.4 15 17.6 16.5 16.8 17.5 C17.5 13.5 15.5 10 12 8.6 L10.6 21 Z"/></g><circle cx="530.3" cy="1105.3" r="10.3" fill="#1c2a10"/><circle cx="530.3" cy="1105.3" r="8.1" fill="url(#ledg)"/><rect x="364" y="1121.5" width="187.5" height="32.7" fill="#eca2f4"/><circle cx="379" cy="1137.1" r="8.8" fill="#820a82"/><path d="M374.5 1142.58 L377.73 1131.04 L380.27 1131.04 L383.5 1142.58 L381.25 1142.58 L379 1134.17 Z M376.75 1142.58 L376.75 1142.58 L376.75 1142.58 Z" fill="#eca2f4" fill-rule="evenodd"/><path d="M375.58 1142.38 L379 1131.62 L382.42 1142.38" fill="none" stroke="#eca2f4" stroke-width="2.05" stroke-linejoin="miter"/><path d="M376.65 1139.25 H381.35" stroke="#eca2f4" stroke-width="1.66"/><text x="395" y="1143.7" font-size="22.5" fill="#820a82" textLength="53.2" lengthAdjust="spacingAndGlyphs"  stroke="#820a82" stroke-width="0.49">GRP 2</text><g transform="translate(486.5 1127.1) scale(0.78)" fill="#820a82"><ellipse cx="5.2" cy="21" rx="5.4" ry="4" transform="rotate(-25 5.2 21)"/><path d="M8.6 21 L11.2 0 L12.8 0 C13.5 5 19 7 18.6 13 C18.4 15 17.6 16.5 16.8 17.5 C17.5 13.5 15.5 10 12 8.6 L10.6 21 Z"/></g><circle cx="530.3" cy="1137.1" r="10.3" fill="#1c2a10"/><circle cx="530.3" cy="1137.1" r="8.1" fill="url(#ledg)"/><path d="M364 1153.5 H551.5 V1171.9 a13 13 0 0 1 -13 13 H364 Z" fill="#eca2f4"/><circle cx="379" cy="1169.1" r="8.8" fill="#820a82"/><path d="M374.5 1174.58 L377.73 1163.04 L380.27 1163.04 L383.5 1174.58 L381.25 1174.58 L379 1166.17 Z M376.75 1174.58 L376.75 1174.58 L376.75 1174.58 Z" fill="#eca2f4" fill-rule="evenodd"/><path d="M375.58 1174.38 L379 1163.62 L382.42 1174.38" fill="none" stroke="#eca2f4" stroke-width="2.05" stroke-linejoin="miter"/><path d="M376.65 1171.25 H381.35" stroke="#eca2f4" stroke-width="1.66"/><text x="395" y="1175.7" font-size="22.5" fill="#820a82" textLength="53.2" lengthAdjust="spacingAndGlyphs"  stroke="#820a82" stroke-width="0.49">GRP 3</text><g transform="translate(486.5 1159.1) scale(0.78)" fill="#820a82"><ellipse cx="5.2" cy="21" rx="5.4" ry="4" transform="rotate(-25 5.2 21)"/><path d="M8.6 21 L11.2 0 L12.8 0 C13.5 5 19 7 18.6 13 C18.4 15 17.6 16.5 16.8 17.5 C17.5 13.5 15.5 10 12 8.6 L10.6 21 Z"/></g><circle cx="530.3" cy="1169.1" r="10.3" fill="#1c2a10"/><circle cx="530.3" cy="1169.1" r="8.1" fill="url(#ledg)"/><defs><linearGradient id="g25" x1="0" y1="0" x2="0" y2="1"><stop offset="0" stop-color="#92dcdc"/><stop offset="0.2" stop-color="#a0c8e0"/><stop offset="0.4" stop-color="#b2b2e2"/><stop offset="0.52" stop-color="#c2a4e2"/><stop offset="0.62" stop-color="#d88ae4"/><stop offset="0.62" stop-color="#f47ca0"/><stop offset="1" stop-color="#f47ca0"/></linearGradient></defs><path d="M364 1217.8 H551.5 V1372.1 a13 13 0 0 1 -13 13 H364 Z" fill="url(#g25)"/><path d="M352 1184.9 H541.5 a10 10 0 0 1 10 10 V1218.6 H364 V1217.8 a12 12 0 0 1 -12 -12 Z" fill="#f47ca0"/><circle cx="367.2" cy="1201.3" r="8.8" fill="#ffffff"/><rect x="365.9" y="1195.7" width="2.6" height="11.2" fill="#f47ca0"/><text x="383" y="1207.7" font-size="22.5" fill="#ffffff" textLength="54" lengthAdjust="spacingAndGlyphs"  stroke="#ffffff" stroke-width="0.49">Dr..us</text><path d="M489 1197.8 L497.6 1206.6 L506.2 1197.8 Z" fill="#ffffff"/><path d="M525.9 1204.4 v-6.2 a4.7 4.7 0 0 1 9.4 0 v6.2" fill="none" stroke="#90d21e" stroke-width="2.1"/><rect x="523.2" y="1204.1" width="14.6" height="8.6" fill="#90d21e" rx="0.8"/><rect x="529.5" y="1206.6" width="1.7" height="4.2" fill="#d6f2a4"/><circle cx="457.3" cy="1207.5" r="8.6" fill="#ffffff"/><path d="M447 1193.9 H467 M450 1190.2 L464 1190.2 M452.5 1190.2 V1198.7 M461.5 1190.2 V1198.7" stroke="#ffffff" stroke-width="1.5"/><path d="M352 1385.1 H541.5 a10 10 0 0 1 10 10 V1418.3 H364 V1417.5 a12 12 0 0 1 -12 -12 Z" fill="#b0a4f0"/><circle cx="367.2" cy="1400.7" r="8.8" fill="#ffffff"/><path d="M362.7 1406.18 L365.93 1394.64 L368.47 1394.64 L371.7 1406.18 L369.45 1406.18 L367.2 1397.77 Z M364.95 1406.18 L364.95 1406.18 L364.95 1406.18 Z" fill="#b0a4f0" fill-rule="evenodd"/><path d="M363.78 1405.98 L367.2 1395.22 L370.62 1405.98" fill="none" stroke="#b0a4f0" stroke-width="2.05" stroke-linejoin="miter"/><path d="M364.85 1402.85 H369.55" stroke="#b0a4f0" stroke-width="1.66"/><text x="383" y="1407.1" font-size="22.5" fill="#ffffff" textLength="54" lengthAdjust="spacingAndGlyphs"  stroke="#ffffff" stroke-width="0.49">Ba..us</text><path d="M489 1405.8 L497.6 1397 L506.2 1405.8 Z" fill="#ffffff"/><path d="M525.9 1403.8 v-6.2 a4.7 4.7 0 0 1 9.4 0 v6.2" fill="none" stroke="#90d21e" stroke-width="2.1"/><rect x="523.2" y="1403.5" width="14.6" height="8.6" fill="#90d21e" rx="0.8"/><rect x="529.5" y="1406" width="1.7" height="4.2" fill="#d6f2a4"/><path d="M449.5 1413.1 c8 -3 11 -8 11 -13 c0 -6 -8 -7 -10 -2.5" fill="none" stroke="#ffffff" stroke-width="2.2" stroke-linecap="round"/><circle cx="451.6" cy="1399.1" r="2.4" fill="#ffffff"/><circle cx="464.4" cy="1396.1" r="1.5" fill="#ffffff"/><circle cx="464.4" cy="1403.1" r="1.5" fill="#ffffff"/><rect x="364" y="1417.5" width="187.5" height="112.8" fill="#b0a4f0"/><circle cx="379" cy="1434.5" r="9" fill="#ffffff"/><path d="M374.4 1440.1 L377.7 1428.3 L380.3 1428.3 L383.6 1440.1 L381.3 1440.1 L379 1431.5 Z M376.7 1440.1 L376.7 1440.1 L376.7 1440.1 Z" fill="#b0a4f0" fill-rule="evenodd"/><path d="M375.5 1439.9 L379 1428.9 L382.5 1439.9" fill="none" stroke="#b0a4f0" stroke-width="2.1" stroke-linejoin="miter"/><path d="M376.6 1436.7 H381.4" stroke="#b0a4f0" stroke-width="1.7"/><text x="395" y="1443" font-size="27.5" fill="#ffffff" textLength="101" lengthAdjust="spacingAndGlyphs"  stroke="#ffffff" stroke-width="0.6">Insert 43</text><rect x="440" y="1450.5" width="107.7" height="36.2" fill="#9488d8" rx="8"/><path d="M452 1466 h5 v-4.2 l7.5 6.7 l-7.5 6.7 v-4.2 h-5 z" fill="#ffffff"/><path d="M462.5 1460.3 A9 9 0 0 1 462.5 1476.7" fill="none" stroke="#ffffff" stroke-width="2.1"/><path d="M487.5 1465.5 l3.5 -0.8 l6 -5.8 v19.2 l-6 -5.8 l-3.5 -0.8 z" fill="none" stroke="#ffffff" stroke-width="1.9" stroke-linejoin="round"/><path d="M500.3 1462.7 l6.5 5.8 l-6.5 5.8 z" fill="#ffffff"/><circle cx="530" cy="1468.5" r="5" fill="#ffffff"/><rect x="497.5" y="1495.1" width="3.6" height="8.5" fill="#ffffff" rx="1.5"/><rect x="497.5" y="1508.1" width="3.6" height="8.5" fill="#ffffff" rx="1.5"/><circle cx="530.3" cy="1510.1" r="10.3" fill="#1c2a10"/><circle cx="530.3" cy="1510.1" r="8.1" fill="url(#ledg)"/><rect x="380" y="1518" width="4.2" height="3.6" fill="#8980bb"/><rect x="388" y="1518" width="4.2" height="3.6" fill="#8980bb"/><rect x="396" y="1518" width="4.2" height="3.6" fill="#8980bb"/><rect x="364" y="1529.6" width="187.5" height="112.1" fill="#e4ec9c"/><circle cx="379" cy="1546.6" r="9" fill="#6a6a00"/><path d="M374.4 1552.2 L377.7 1540.4 L380.3 1540.4 L383.6 1552.2 L381.3 1552.2 L379 1543.6 Z M376.7 1552.2 L376.7 1552.2 L376.7 1552.2 Z" fill="#e4ec9c" fill-rule="evenodd"/><path d="M375.5 1552 L379 1541 L382.5 1552" fill="none" stroke="#e4ec9c" stroke-width="2.1" stroke-linejoin="miter"/><path d="M376.6 1548.8 H381.4" stroke="#e4ec9c" stroke-width="1.7"/><text x="395" y="1555.1" font-size="27.5" fill="#6a6a00" textLength="125.9" lengthAdjust="spacingAndGlyphs"  stroke="#6a6a00" stroke-width="0.6">Reese Bass</text><rect x="440" y="1562.6" width="107.7" height="36.2" fill="#c8d084" rx="8"/><path d="M452 1578.1 h5 v-4.2 l7.5 6.7 l-7.5 6.7 v-4.2 h-5 z" fill="#686800"/><path d="M462.5 1572.4 A9 9 0 0 1 462.5 1588.8" fill="none" stroke="#686800" stroke-width="2.1"/><path d="M487.5 1577.6 l3.5 -0.8 l6 -5.8 v19.2 l-6 -5.8 l-3.5 -0.8 z" fill="none" stroke="#686800" stroke-width="1.9" stroke-linejoin="round"/><path d="M500.3 1574.8 l6.5 5.8 l-6.5 5.8 z" fill="#686800"/><circle cx="530" cy="1580.6" r="5" fill="#686800"/><path d="M486 1607 H500 V1619 H486 V1630.5 H500" fill="none" stroke="#6e7000" stroke-width="3" stroke-linejoin="round" stroke-linecap="round"/><circle cx="530.3" cy="1621.5" r="10.3" fill="#1c2a10"/><circle cx="530.3" cy="1621.5" r="8.1" fill="url(#ledg)"/><rect x="380" y="1629.4" width="4.2" height="3.6" fill="#b2b87a"/><rect x="388" y="1629.4" width="4.2" height="3.6" fill="#b2b87a"/><rect x="396" y="1629.4" width="4.2" height="3.6" fill="#b2b87a"/><rect x="551.5" y="173" width="2.5" height="1463" fill="#1c252c"/><rect x="554" y="173" width="18.4" height="1463" fill="#343f49"/><rect x="572" y="173.4" width="2254" height="1462.6" fill="#2d3d48"/><rect x="572" y="173.4" width="110" height="1462.6" fill="#27353f"/><rect x="682" y="173.4" width="100" height="1462.6" fill="#33444e"/><rect x="881" y="173.4" width="100" height="1462.6" fill="#33444e"/><rect x="1081" y="173.4" width="99" height="1462.6" fill="#33444e"/><rect x="1280" y="173.4" width="99" height="1462.6" fill="#33444e"/><rect x="1479" y="173.4" width="100" height="1462.6" fill="#33444e"/><rect x="1678" y="173.4" width="100" height="1462.6" fill="#33444e"/><rect x="1877" y="173.4" width="100" height="1462.6" fill="#33444e"/><rect x="2077" y="173.4" width="99" height="1462.6" fill="#33444e"/><rect x="2276" y="173.4" width="99" height="1462.6" fill="#33444e"/><rect x="2475" y="173.4" width="100" height="1462.6" fill="#33444e"/><rect x="2674" y="173.4" width="100" height="1462.6" fill="#33444e"/><path d="M553.5 173.5H2826M553.5 205.5H2826M553.5 213.5H2826M553.5 221.5H2826M553.5 229.5H2826M553.5 237.5H2826M553.5 245.5H2826M553.5 253.5H2826M553.5 261.5H2826M553.5 269.5H2826M553.5 277.5H2826M553.5 285.5H2826M553.5 293.5H2826M553.5 301.5H2826M553.5 309.5H2826M553.5 317.5H2826M553.5 325.5H2826M553.5 333.5H2826M553.5 341.5H2826M553.5 373.5H2826M553.5 485.5H2826M553.5 517.5H2826M553.5 549.5H2826M553.5 621.5H2826M553.5 705.5H2826M553.5 779.5H2826M553.5 865.5H2826M553.5 977.5H2826M553.5 1089.5H2826M553.5 1121.5H2826M553.5 1153.5H2826M553.5 1185.5H2826M553.5 1217.5H2826M553.5 1225.5H2826M553.5 1233.5H2826M553.5 1241.5H2826M553.5 1249.5H2826M553.5 1257.5H2826M553.5 1265.5H2826M553.5 1273.5H2826M553.5 1281.5H2826M553.5 1289.5H2826M553.5 1297.5H2826M553.5 1305.5H2826M553.5 1313.5H2826M553.5 1321.5H2826M553.5 1329.5H2826M553.5 1337.5H2826M553.5 1345.5H2826M553.5 1353.5H2826M553.5 1361.5H2826M553.5 1369.5H2826M553.5 1377.5H2826M553.5 1385.5H2826M553.5 1417.5H2826M553.5 1529.5H2826" stroke="#000" stroke-width="3" opacity="0.12"/><path d="M553.5 173.5H2826M553.5 205.5H2826M553.5 213.5H2826M553.5 221.5H2826M553.5 229.5H2826M553.5 237.5H2826M553.5 245.5H2826M553.5 253.5H2826M553.5 261.5H2826M553.5 269.5H2826M553.5 277.5H2826M553.5 285.5H2826M553.5 293.5H2826M553.5 301.5H2826M553.5 309.5H2826M553.5 317.5H2826M553.5 325.5H2826M553.5 333.5H2826M553.5 341.5H2826M553.5 373.5H2826M553.5 485.5H2826M553.5 517.5H2826M553.5 549.5H2826M553.5 621.5H2826M553.5 705.5H2826M553.5 779.5H2826M553.5 865.5H2826M553.5 977.5H2826M553.5 1089.5H2826M553.5 1121.5H2826M553.5 1153.5H2826M553.5 1185.5H2826M553.5 1217.5H2826M553.5 1225.5H2826M553.5 1233.5H2826M553.5 1241.5H2826M553.5 1249.5H2826M553.5 1257.5H2826M553.5 1265.5H2826M553.5 1273.5H2826M553.5 1281.5H2826M553.5 1289.5H2826M553.5 1297.5H2826M553.5 1305.5H2826M553.5 1313.5H2826M553.5 1321.5H2826M553.5 1329.5H2826M553.5 1337.5H2826M553.5 1345.5H2826M553.5 1353.5H2826M553.5 1361.5H2826M553.5 1369.5H2826M553.5 1377.5H2826M553.5 1385.5H2826M553.5 1417.5H2826M553.5 1529.5H2826" stroke="#14222c" stroke-width="1"/><path d="M583 173.4V1636M607 173.4V1636M632 173.4V1636M657 173.4V1636M707 173.4V1636M732 173.4V1636M757 173.4V1636M782 173.4V1636M807 173.4V1636M832 173.4V1636M856 173.4V1636M881 173.4V1636M906 173.4V1636M931 173.4V1636M956 173.4V1636M981 173.4V1636M1006 173.4V1636M1031 173.4V1636M1056 173.4V1636M1081 173.4V1636M1105 173.4V1636M1130 173.4V1636M1155 173.4V1636M1180 173.4V1636M1205 173.4V1636M1230 173.4V1636M1255 173.4V1636M1280 173.4V1636M1305 173.4V1636M1330 173.4V1636M1354 173.4V1636M1379 173.4V1636M1404 173.4V1636M1429 173.4V1636M1454 173.4V1636M1479 173.4V1636M1504 173.4V1636M1529 173.4V1636M1554 173.4V1636M1579 173.4V1636M1603 173.4V1636M1628 173.4V1636M1653 173.4V1636M1678 173.4V1636M1703 173.4V1636M1728 173.4V1636M1753 173.4V1636M1778 173.4V1636M1803 173.4V1636M1828 173.4V1636M1852 173.4V1636M1877 173.4V1636M1902 173.4V1636M1927 173.4V1636M1952 173.4V1636M1977 173.4V1636M2002 173.4V1636M2027 173.4V1636M2052 173.4V1636M2077 173.4V1636M2101 173.4V1636M2126 173.4V1636M2151 173.4V1636M2176 173.4V1636M2201 173.4V1636M2226 173.4V1636M2251 173.4V1636M2276 173.4V1636M2301 173.4V1636M2326 173.4V1636M2350 173.4V1636M2375 173.4V1636M2400 173.4V1636M2425 173.4V1636M2450 173.4V1636M2475 173.4V1636M2500 173.4V1636M2525 173.4V1636M2550 173.4V1636M2575 173.4V1636M2599 173.4V1636M2624 173.4V1636M2649 173.4V1636M2674 173.4V1636M2699 173.4V1636M2724 173.4V1636M2749 173.4V1636M2774 173.4V1636M2799 173.4V1636M2824 173.4V1636" stroke="#000" stroke-width="4" opacity="0.13"/><path d="M583 173.4V1636M607 173.4V1636M632 173.4V1636M657 173.4V1636M707 173.4V1636M732 173.4V1636M757 173.4V1636M782 173.4V1636M807 173.4V1636M832 173.4V1636M856 173.4V1636M881 173.4V1636M906 173.4V1636M931 173.4V1636M956 173.4V1636M981 173.4V1636M1006 173.4V1636M1031 173.4V1636M1056 173.4V1636M1081 173.4V1636M1105 173.4V1636M1130 173.4V1636M1155 173.4V1636M1180 173.4V1636M1205 173.4V1636M1230 173.4V1636M1255 173.4V1636M1280 173.4V1636M1305 173.4V1636M1330 173.4V1636M1354 173.4V1636M1379 173.4V1636M1404 173.4V1636M1429 173.4V1636M1454 173.4V1636M1479 173.4V1636M1504 173.4V1636M1529 173.4V1636M1554 173.4V1636M1579 173.4V1636M1603 173.4V1636M1628 173.4V1636M1653 173.4V1636M1678 173.4V1636M1703 173.4V1636M1728 173.4V1636M1753 173.4V1636M1778 173.4V1636M1803 173.4V1636M1828 173.4V1636M1852 173.4V1636M1877 173.4V1636M1902 173.4V1636M1927 173.4V1636M1952 173.4V1636M1977 173.4V1636M2002 173.4V1636M2027 173.4V1636M2052 173.4V1636M2077 173.4V1636M2101 173.4V1636M2126 173.4V1636M2151 173.4V1636M2176 173.4V1636M2201 173.4V1636M2226 173.4V1636M2251 173.4V1636M2276 173.4V1636M2301 173.4V1636M2326 173.4V1636M2350 173.4V1636M2375 173.4V1636M2400 173.4V1636M2425 173.4V1636M2450 173.4V1636M2475 173.4V1636M2500 173.4V1636M2525 173.4V1636M2550 173.4V1636M2575 173.4V1636M2599 173.4V1636M2624 173.4V1636M2649 173.4V1636M2674 173.4V1636M2699 173.4V1636M2724 173.4V1636M2749 173.4V1636M2774 173.4V1636M2799 173.4V1636M2824 173.4V1636" stroke="#05141e" stroke-width="2"/><rect x="572.3" y="173.4" width="1.8" height="1462.6" fill="#1a242c"/><rect x="2822" y="173.4" width="2" height="1462.6" fill="#18222a"/><rect x="555" y="980.3" width="16" height="106.5" rx="2" fill="#303c45" stroke="#a2e03e" stroke-width="1.8"/><defs><linearGradient id="tgl" x1="0" y1="0" x2="0" y2="1"><stop offset="0" stop-color="#fff" stop-opacity="0.07"/><stop offset="0.5" stop-color="#fff" stop-opacity="0"/><stop offset="1" stop-color="#000" stop-opacity="0.08"/></linearGradient></defs><defs><g id="pn1"><rect x="-0.6" y="31.95" width="5.9" height="1.7" fill="#f4969e"/><rect x="8.4" y="31.95" width="6.4" height="1.7" fill="#f4969e"/><rect x="-0.6" y="40.05" width="5.9" height="1.7" fill="#f4969e"/><rect x="8.4" y="40.05" width="6.4" height="1.7" fill="#f4969e"/><rect x="-0.6" y="58.25" width="5.9" height="1.7" fill="#f4969e"/><rect x="8.4" y="58.25" width="6.4" height="1.7" fill="#f4969e"/><rect x="-0.6" y="72.95" width="5.9" height="1.7" fill="#c878f0"/><rect x="8.4" y="72.95" width="6.4" height="1.7" fill="#c878f0"/><rect x="-0.6" y="81.15" width="5.9" height="1.7" fill="#c878f0"/><rect x="8.4" y="81.15" width="6.4" height="1.7" fill="#c878f0"/><rect x="-0.6" y="99.85" width="5.9" height="1.7" fill="#c878f0"/><rect x="8.4" y="99.85" width="6.4" height="1.7" fill="#c878f0"/><rect x="24.3" y="31.95" width="5.9" height="1.7" fill="#f4969e"/><rect x="33.3" y="31.95" width="6.4" height="1.7" fill="#f4969e"/><rect x="24.3" y="40.05" width="5.9" height="1.7" fill="#f4969e"/><rect x="33.3" y="40.05" width="6.4" height="1.7" fill="#f4969e"/><rect x="24.3" y="58.25" width="5.9" height="1.7" fill="#f4969e"/><rect x="33.3" y="58.25" width="6.4" height="1.7" fill="#f4969e"/><rect x="24.3" y="72.95" width="5.9" height="1.7" fill="#c878f0"/><rect x="33.3" y="72.95" width="6.4" height="1.7" fill="#c878f0"/><rect x="24.3" y="81.15" width="5.9" height="1.7" fill="#c878f0"/><rect x="33.3" y="81.15" width="6.4" height="1.7" fill="#c878f0"/><rect x="24.3" y="99.85" width="5.9" height="1.7" fill="#c878f0"/><rect x="33.3" y="99.85" width="6.4" height="1.7" fill="#c878f0"/><rect x="49.2" y="34.15" width="5.9" height="1.7" fill="#f4969e"/><rect x="58.2" y="34.15" width="6.4" height="1.7" fill="#f4969e"/><rect x="49.2" y="37.85" width="5.9" height="1.7" fill="#f4969e"/><rect x="58.2" y="37.85" width="6.4" height="1.7" fill="#f4969e"/><rect x="49.2" y="55.85" width="5.9" height="1.7" fill="#f4969e"/><rect x="58.2" y="55.85" width="6.4" height="1.7" fill="#f4969e"/><rect x="49.2" y="75.75" width="5.9" height="1.7" fill="#f4969e"/><rect x="58.2" y="75.75" width="6.4" height="1.7" fill="#f4969e"/><rect x="49.2" y="79.05" width="5.9" height="1.7" fill="#f4969e"/><rect x="58.2" y="79.05" width="6.4" height="1.7" fill="#f4969e"/><rect x="49.2" y="97.25" width="5.9" height="1.7" fill="#f4969e"/><rect x="58.2" y="97.25" width="6.4" height="1.7" fill="#f4969e"/><rect x="74.1" y="31.95" width="5.9" height="1.7" fill="#f4969e"/><rect x="83.1" y="31.95" width="6.4" height="1.7" fill="#f4969e"/><rect x="74.1" y="36.55" width="5.9" height="1.7" fill="#f4969e"/><rect x="83.1" y="36.55" width="6.4" height="1.7" fill="#f4969e"/><rect x="74.1" y="67.55" width="5.9" height="1.7" fill="#f4969e"/><rect x="83.1" y="67.55" width="6.4" height="1.7" fill="#f4969e"/><rect x="74.1" y="72.95" width="5.9" height="1.7" fill="#c878f0"/><rect x="83.1" y="72.95" width="6.4" height="1.7" fill="#c878f0"/><rect x="74.1" y="77.85" width="5.9" height="1.7" fill="#c878f0"/><rect x="83.1" y="77.85" width="6.4" height="1.7" fill="#c878f0"/><rect x="74.1" y="108.75" width="5.9" height="1.7" fill="#c878f0"/><rect x="83.1" y="108.75" width="6.4" height="1.7" fill="#c878f0"/><rect x="99" y="31.95" width="5.9" height="1.7" fill="#f4969e"/><rect x="108" y="31.95" width="6.4" height="1.7" fill="#f4969e"/><rect x="99" y="40.05" width="5.9" height="1.7" fill="#f4969e"/><rect x="108" y="40.05" width="6.4" height="1.7" fill="#f4969e"/><rect x="99" y="58.25" width="5.9" height="1.7" fill="#f4969e"/><rect x="108" y="58.25" width="6.4" height="1.7" fill="#f4969e"/><rect x="99" y="72.95" width="5.9" height="1.7" fill="#f4969e"/><rect x="108" y="72.95" width="6.4" height="1.7" fill="#f4969e"/><rect x="99" y="81.15" width="5.9" height="1.7" fill="#f4969e"/><rect x="108" y="81.15" width="6.4" height="1.7" fill="#f4969e"/><rect x="99" y="99.85" width="5.9" height="1.7" fill="#f4969e"/><rect x="108" y="99.85" width="6.4" height="1.7" fill="#f4969e"/><rect x="123.9" y="31.95" width="5.9" height="1.7" fill="#f4969e"/><rect x="132.9" y="31.95" width="6.4" height="1.7" fill="#f4969e"/><rect x="123.9" y="40.05" width="5.9" height="1.7" fill="#f4969e"/><rect x="132.9" y="40.05" width="6.4" height="1.7" fill="#f4969e"/><rect x="123.9" y="58.25" width="5.9" height="1.7" fill="#f4969e"/><rect x="132.9" y="58.25" width="6.4" height="1.7" fill="#f4969e"/><rect x="123.9" y="72.95" width="5.9" height="1.7" fill="#f4969e"/><rect x="132.9" y="72.95" width="6.4" height="1.7" fill="#f4969e"/><rect x="123.9" y="81.15" width="5.9" height="1.7" fill="#f4969e"/><rect x="132.9" y="81.15" width="6.4" height="1.7" fill="#f4969e"/><rect x="123.9" y="99.85" width="5.9" height="1.7" fill="#f4969e"/><rect x="132.9" y="99.85" width="6.4" height="1.7" fill="#f4969e"/><rect x="148.8" y="34.15" width="5.9" height="1.7" fill="#f4969e"/><rect x="157.8" y="34.15" width="6.4" height="1.7" fill="#f4969e"/><rect x="148.8" y="37.85" width="5.9" height="1.7" fill="#f4969e"/><rect x="157.8" y="37.85" width="6.4" height="1.7" fill="#f4969e"/><rect x="148.8" y="55.85" width="5.9" height="1.7" fill="#f4969e"/><rect x="157.8" y="55.85" width="6.4" height="1.7" fill="#f4969e"/><rect x="148.8" y="75.75" width="5.9" height="1.7" fill="#c878f0"/><rect x="157.8" y="75.75" width="6.4" height="1.7" fill="#f4969e"/><rect x="148.8" y="79.05" width="5.9" height="1.7" fill="#c878f0"/><rect x="157.8" y="79.05" width="6.4" height="1.7" fill="#f4969e"/><rect x="148.8" y="97.25" width="5.9" height="1.7" fill="#c878f0"/><rect x="157.8" y="97.25" width="6.4" height="1.7" fill="#f4969e"/><rect x="173.7" y="31.95" width="5.9" height="1.7" fill="#f4969e"/><rect x="182.7" y="31.95" width="6.4" height="1.7" fill="#f4969e"/><rect x="173.7" y="36.55" width="5.9" height="1.7" fill="#f4969e"/><rect x="182.7" y="36.55" width="6.4" height="1.7" fill="#f4969e"/><rect x="173.7" y="67.55" width="5.9" height="1.7" fill="#f4969e"/><rect x="182.7" y="67.55" width="6.4" height="1.7" fill="#f4969e"/><rect x="173.7" y="72.95" width="5.9" height="1.7" fill="#f4969e"/><rect x="182.7" y="72.95" width="6.4" height="1.7" fill="#c878f0"/><rect x="173.7" y="77.85" width="5.9" height="1.7" fill="#f4969e"/><rect x="182.7" y="77.85" width="6.4" height="1.7" fill="#c878f0"/><rect x="173.7" y="108.75" width="5.9" height="1.7" fill="#f4969e"/><rect x="182.7" y="108.75" width="6.4" height="1.7" fill="#c878f0"/></g><g id="pn2" fill="#f4969e"><rect x="0.2" y="32.5" width="2.8" height="1.7"/><rect x="6.3" y="32.5" width="2.8" height="1.7"/><rect x="11.2" y="32.5" width="2.8" height="1.7"/><rect x="15.8" y="32.5" width="2.8" height="1.7"/><rect x="22" y="32.5" width="2.8" height="1.7"/><rect x="0.2" y="44.85" width="2.8" height="1.7"/><rect x="6.3" y="44.85" width="2.8" height="1.7"/><rect x="11.2" y="44.85" width="2.8" height="1.7"/><rect x="15.8" y="44.85" width="2.8" height="1.7"/><rect x="22" y="44.85" width="2.8" height="1.7"/><rect x="0.2" y="53.55" width="2.8" height="1.7"/><rect x="6.3" y="53.55" width="2.8" height="1.7"/><rect x="11.2" y="53.55" width="2.8" height="1.7"/><rect x="15.8" y="53.55" width="2.8" height="1.7"/><rect x="22" y="53.55" width="2.8" height="1.7"/><rect x="0.2" y="65.95" width="2.8" height="1.7"/><rect x="6.3" y="65.95" width="2.8" height="1.7"/><rect x="11.2" y="65.95" width="2.8" height="1.7"/><rect x="15.8" y="65.95" width="2.8" height="1.7"/><rect x="22" y="65.95" width="2.8" height="1.7"/><rect x="0.2" y="72.95" width="2.8" height="1.7"/><rect x="6.3" y="72.95" width="2.8" height="1.7"/><rect x="11.2" y="72.95" width="2.8" height="1.7"/><rect x="15.8" y="72.95" width="2.8" height="1.7"/><rect x="22" y="72.95" width="2.8" height="1.7"/><rect x="0.2" y="94.25" width="2.8" height="1.7"/><rect x="6.3" y="94.25" width="2.8" height="1.7"/><rect x="11.2" y="94.25" width="2.8" height="1.7"/><rect x="15.8" y="94.25" width="2.8" height="1.7"/><rect x="22" y="94.25" width="2.8" height="1.7"/><rect x="25.1" y="32.5" width="2.8" height="1.7"/><rect x="31.2" y="32.5" width="2.8" height="1.7"/><rect x="36.1" y="32.5" width="2.8" height="1.7"/><rect x="40.7" y="32.5" width="2.8" height="1.7"/><rect x="46.9" y="32.5" width="2.8" height="1.7"/><rect x="25.1" y="44.85" width="2.8" height="1.7"/><rect x="31.2" y="44.85" width="2.8" height="1.7"/><rect x="36.1" y="44.85" width="2.8" height="1.7"/><rect x="40.7" y="44.85" width="2.8" height="1.7"/><rect x="46.9" y="44.85" width="2.8" height="1.7"/><rect x="25.1" y="53.55" width="2.8" height="1.7"/><rect x="31.2" y="53.55" width="2.8" height="1.7"/><rect x="36.1" y="53.55" width="2.8" height="1.7"/><rect x="40.7" y="53.55" width="2.8" height="1.7"/><rect x="46.9" y="53.55" width="2.8" height="1.7"/><rect x="25.1" y="65.95" width="2.8" height="1.7"/><rect x="31.2" y="65.95" width="2.8" height="1.7"/><rect x="36.1" y="65.95" width="2.8" height="1.7"/><rect x="40.7" y="65.95" width="2.8" height="1.7"/><rect x="46.9" y="65.95" width="2.8" height="1.7"/><rect x="25.1" y="72.95" width="2.8" height="1.7"/><rect x="31.2" y="72.95" width="2.8" height="1.7"/><rect x="36.1" y="72.95" width="2.8" height="1.7"/><rect x="40.7" y="72.95" width="2.8" height="1.7"/><rect x="46.9" y="72.95" width="2.8" height="1.7"/><rect x="25.1" y="94.25" width="2.8" height="1.7"/><rect x="31.2" y="94.25" width="2.8" height="1.7"/><rect x="36.1" y="94.25" width="2.8" height="1.7"/><rect x="40.7" y="94.25" width="2.8" height="1.7"/><rect x="46.9" y="94.25" width="2.8" height="1.7"/><rect x="50" y="35.95" width="2.8" height="1.7"/><rect x="56.1" y="35.95" width="2.8" height="1.7"/><rect x="61" y="35.95" width="2.8" height="1.7"/><rect x="65.6" y="35.95" width="2.8" height="1.7"/><rect x="71.8" y="35.95" width="2.8" height="1.7"/><rect x="50" y="41.05" width="2.8" height="1.7"/><rect x="56.1" y="41.05" width="2.8" height="1.7"/><rect x="61" y="41.05" width="2.8" height="1.7"/><rect x="65.6" y="41.05" width="2.8" height="1.7"/><rect x="71.8" y="41.05" width="2.8" height="1.7"/><rect x="50" y="57.15" width="2.8" height="1.7"/><rect x="56.1" y="57.15" width="2.8" height="1.7"/><rect x="61" y="57.15" width="2.8" height="1.7"/><rect x="65.6" y="57.15" width="2.8" height="1.7"/><rect x="71.8" y="57.15" width="2.8" height="1.7"/><rect x="50" y="62.45" width="2.8" height="1.7"/><rect x="56.1" y="62.45" width="2.8" height="1.7"/><rect x="61" y="62.45" width="2.8" height="1.7"/><rect x="65.6" y="62.45" width="2.8" height="1.7"/><rect x="71.8" y="62.45" width="2.8" height="1.7"/><rect x="50" y="69.55" width="2.8" height="1.7"/><rect x="56.1" y="69.55" width="2.8" height="1.7"/><rect x="61" y="69.55" width="2.8" height="1.7"/><rect x="65.6" y="69.55" width="2.8" height="1.7"/><rect x="71.8" y="69.55" width="2.8" height="1.7"/><rect x="50" y="90.85" width="2.8" height="1.7"/><rect x="56.1" y="90.85" width="2.8" height="1.7"/><rect x="61" y="90.85" width="2.8" height="1.7"/><rect x="65.6" y="90.85" width="2.8" height="1.7"/><rect x="71.8" y="90.85" width="2.8" height="1.7"/><rect x="74.9" y="32.5" width="2.8" height="1.7"/><rect x="81" y="32.5" width="2.8" height="1.7"/><rect x="85.9" y="32.5" width="2.8" height="1.7"/><rect x="90.5" y="32.5" width="2.8" height="1.7"/><rect x="96.7" y="32.5" width="2.8" height="1.7"/><rect x="74.9" y="39.55" width="2.8" height="1.7"/><rect x="81" y="39.55" width="2.8" height="1.7"/><rect x="85.9" y="39.55" width="2.8" height="1.7"/><rect x="90.5" y="39.55" width="2.8" height="1.7"/><rect x="96.7" y="39.55" width="2.8" height="1.7"/><rect x="74.9" y="53.55" width="2.8" height="1.7"/><rect x="81" y="53.55" width="2.8" height="1.7"/><rect x="85.9" y="53.55" width="2.8" height="1.7"/><rect x="90.5" y="53.55" width="2.8" height="1.7"/><rect x="96.7" y="53.55" width="2.8" height="1.7"/><rect x="74.9" y="60.85" width="2.8" height="1.7"/><rect x="81" y="60.85" width="2.8" height="1.7"/><rect x="85.9" y="60.85" width="2.8" height="1.7"/><rect x="90.5" y="60.85" width="2.8" height="1.7"/><rect x="96.7" y="60.85" width="2.8" height="1.7"/><rect x="74.9" y="87.15" width="2.8" height="1.7"/><rect x="81" y="87.15" width="2.8" height="1.7"/><rect x="85.9" y="87.15" width="2.8" height="1.7"/><rect x="90.5" y="87.15" width="2.8" height="1.7"/><rect x="96.7" y="87.15" width="2.8" height="1.7"/><rect x="74.9" y="108.45" width="2.8" height="1.7"/><rect x="81" y="108.45" width="2.8" height="1.7"/><rect x="85.9" y="108.45" width="2.8" height="1.7"/><rect x="90.5" y="108.45" width="2.8" height="1.7"/><rect x="96.7" y="108.45" width="2.8" height="1.7"/></g></defs><rect x="681.7" y="401.2" width="198.8" height="83.6" fill="#553485" opacity="0.95"/><path d="M707 404.2V484.8M732 404.2V484.8M757 404.2V484.8M782 404.2V484.8M807 404.2V484.8M832 404.2V484.8M856 404.2V484.8" stroke="#000" stroke-width="1.8" opacity="0.17"/><rect x="681.7" y="374.2" width="197.9" height="30" fill="#9f56e8" rx="3.5"/><rect x="681.7" y="374.2" width="197.9" height="30" fill="url(#tgl)" rx="3.5"/><rect x="682.6" y="374.8" width="196.1" height="1.2" fill="#bc89ef" rx="1"/><rect x="681.7" y="402.8" width="197.9" height="1.4" fill="#7f45ba" rx="1"/><rect x="878.3" y="375.2" width="1.3" height="28" fill="#7c43b5"/><rect x="684.6" y="380.6" width="16" height="16.6" fill="#f3ebfc"/><rect x="684.6" y="384.44" width="9.92" height="1.34" fill="#9f56e8"/><rect x="684.6" y="388.66" width="9.92" height="1.34" fill="#9f56e8"/><rect x="684.6" y="392.88" width="9.92" height="1.34" fill="#9f56e8"/><text x="707" y="395.8" font-size="23.6" fill="#ffffff" textLength="73.6" lengthAdjust="spacingAndGlyphs"  stroke="#ffffff" stroke-width="0.52">Piano 1</text><use href="#pn1" x="682.1" y="374.2"/><rect x="880.9" y="401.2" width="198.8" height="83.6" fill="#553485" opacity="0.95"/><path d="M906 404.2V484.8M931 404.2V484.8M956 404.2V484.8M981 404.2V484.8M1006 404.2V484.8M1031 404.2V484.8M1056 404.2V484.8" stroke="#000" stroke-width="1.8" opacity="0.17"/><rect x="880.9" y="374.2" width="197.9" height="30" fill="#9f56e8" rx="3.5"/><rect x="880.9" y="374.2" width="197.9" height="30" fill="url(#tgl)" rx="3.5"/><rect x="881.8" y="374.8" width="196.1" height="1.2" fill="#bc89ef" rx="1"/><rect x="880.9" y="402.8" width="197.9" height="1.4" fill="#7f45ba" rx="1"/><rect x="1077.5" y="375.2" width="1.3" height="28" fill="#7c43b5"/><rect x="883.8" y="380.6" width="16" height="16.6" fill="#f3ebfc"/><rect x="883.8" y="384.44" width="9.92" height="1.34" fill="#9f56e8"/><rect x="883.8" y="388.66" width="9.92" height="1.34" fill="#9f56e8"/><rect x="883.8" y="392.88" width="9.92" height="1.34" fill="#9f56e8"/><text x="906.2" y="395.8" font-size="23.6" fill="#ffffff" textLength="73.6" lengthAdjust="spacingAndGlyphs"  stroke="#ffffff" stroke-width="0.52">Piano 1</text><use href="#pn1" x="881.3" y="374.2"/><rect x="1080.1" y="401.2" width="99.2" height="83.6" fill="#553485" opacity="0.95"/><path d="M1105 404.2V484.8M1130 404.2V484.8M1155 404.2V484.8" stroke="#000" stroke-width="1.8" opacity="0.17"/><rect x="1080.1" y="374.2" width="98.3" height="30" fill="#9f56e8" rx="3.5"/><rect x="1080.1" y="374.2" width="98.3" height="30" fill="url(#tgl)" rx="3.5"/><rect x="1081" y="374.8" width="96.5" height="1.2" fill="#bc89ef" rx="1"/><rect x="1080.1" y="402.8" width="98.3" height="1.4" fill="#7f45ba" rx="1"/><rect x="1177.1" y="375.2" width="1.3" height="28" fill="#7c43b5"/><rect x="1083" y="380.6" width="16" height="16.6" fill="#f3ebfc"/><rect x="1083" y="384.44" width="9.92" height="1.34" fill="#9f56e8"/><rect x="1083" y="388.66" width="9.92" height="1.34" fill="#9f56e8"/><rect x="1083" y="392.88" width="9.92" height="1.34" fill="#9f56e8"/><text x="1105.4" y="395.8" font-size="23.6" fill="#ffffff" textLength="67.4" lengthAdjust="spacingAndGlyphs"  stroke="#ffffff" stroke-width="0.52">Pia..#2</text><use href="#pn2" x="1080.5" y="374.2"/><rect x="1179.7" y="401.2" width="99.2" height="83.6" fill="#553485" opacity="0.95"/><path d="M1205 404.2V484.8M1230 404.2V484.8M1255 404.2V484.8" stroke="#000" stroke-width="1.8" opacity="0.17"/><rect x="1179.7" y="374.2" width="98.3" height="30" fill="#9f56e8" rx="3.5"/><rect x="1179.7" y="374.2" width="98.3" height="30" fill="url(#tgl)" rx="3.5"/><rect x="1180.6" y="374.8" width="96.5" height="1.2" fill="#bc89ef" rx="1"/><rect x="1179.7" y="402.8" width="98.3" height="1.4" fill="#7f45ba" rx="1"/><rect x="1276.7" y="375.2" width="1.3" height="28" fill="#7c43b5"/><rect x="1182.6" y="380.6" width="16" height="16.6" fill="#f3ebfc"/><rect x="1182.6" y="384.44" width="9.92" height="1.34" fill="#9f56e8"/><rect x="1182.6" y="388.66" width="9.92" height="1.34" fill="#9f56e8"/><rect x="1182.6" y="392.88" width="9.92" height="1.34" fill="#9f56e8"/><text x="1205" y="395.8" font-size="23.6" fill="#ffffff" textLength="69.4" lengthAdjust="spacingAndGlyphs"  stroke="#ffffff" stroke-width="0.52">Pian..#2</text><use href="#pn2" x="1180.1" y="374.2"/><rect x="1279.3" y="401.2" width="99.2" height="83.6" fill="#553485" opacity="0.95"/><path d="M1305 404.2V484.8M1330 404.2V484.8M1354 404.2V484.8" stroke="#000" stroke-width="1.8" opacity="0.17"/><rect x="1279.3" y="374.2" width="98.3" height="30" fill="#9f56e8" rx="3.5"/><rect x="1279.3" y="374.2" width="98.3" height="30" fill="url(#tgl)" rx="3.5"/><rect x="1280.2" y="374.8" width="96.5" height="1.2" fill="#bc89ef" rx="1"/><rect x="1279.3" y="402.8" width="98.3" height="1.4" fill="#7f45ba" rx="1"/><rect x="1376.3" y="375.2" width="1.3" height="28" fill="#7c43b5"/><rect x="1282.2" y="380.6" width="16" height="16.6" fill="#f3ebfc"/><rect x="1282.2" y="384.44" width="9.92" height="1.34" fill="#9f56e8"/><rect x="1282.2" y="388.66" width="9.92" height="1.34" fill="#9f56e8"/><rect x="1282.2" y="392.88" width="9.92" height="1.34" fill="#9f56e8"/><text x="1304.6" y="395.8" font-size="23.6" fill="#ffffff" textLength="67.4" lengthAdjust="spacingAndGlyphs"  stroke="#ffffff" stroke-width="0.52">Pia..#2</text><use href="#pn2" x="1279.7" y="374.2"/><rect x="1378.9" y="401.2" width="99.2" height="83.6" fill="#553485" opacity="0.95"/><path d="M1404 404.2V484.8M1429 404.2V484.8M1454 404.2V484.8" stroke="#000" stroke-width="1.8" opacity="0.17"/><rect x="1378.9" y="374.2" width="98.3" height="30" fill="#9f56e8" rx="3.5"/><rect x="1378.9" y="374.2" width="98.3" height="30" fill="url(#tgl)" rx="3.5"/><rect x="1379.8" y="374.8" width="96.5" height="1.2" fill="#bc89ef" rx="1"/><rect x="1378.9" y="402.8" width="98.3" height="1.4" fill="#7f45ba" rx="1"/><rect x="1475.9" y="375.2" width="1.3" height="28" fill="#7c43b5"/><rect x="1381.8" y="380.6" width="16" height="16.6" fill="#f3ebfc"/><rect x="1381.8" y="384.44" width="9.92" height="1.34" fill="#9f56e8"/><rect x="1381.8" y="388.66" width="9.92" height="1.34" fill="#9f56e8"/><rect x="1381.8" y="392.88" width="9.92" height="1.34" fill="#9f56e8"/><text x="1404.2" y="395.8" font-size="23.6" fill="#ffffff" textLength="69.4" lengthAdjust="spacingAndGlyphs"  stroke="#ffffff" stroke-width="0.52">Pian..#2</text><use href="#pn2" x="1379.3" y="374.2"/><rect x="1478.5" y="401.2" width="99.2" height="83.6" fill="#553485" opacity="0.95"/><path d="M1504 404.2V484.8M1529 404.2V484.8M1554 404.2V484.8" stroke="#000" stroke-width="1.8" opacity="0.17"/><rect x="1478.5" y="374.2" width="98.3" height="30" fill="#9f56e8" rx="3.5"/><rect x="1478.5" y="374.2" width="98.3" height="30" fill="url(#tgl)" rx="3.5"/><rect x="1479.4" y="374.8" width="96.5" height="1.2" fill="#bc89ef" rx="1"/><rect x="1478.5" y="402.8" width="98.3" height="1.4" fill="#7f45ba" rx="1"/><rect x="1575.5" y="375.2" width="1.3" height="28" fill="#7c43b5"/><rect x="1481.4" y="380.6" width="16" height="16.6" fill="#f3ebfc"/><rect x="1481.4" y="384.44" width="9.92" height="1.34" fill="#9f56e8"/><rect x="1481.4" y="388.66" width="9.92" height="1.34" fill="#9f56e8"/><rect x="1481.4" y="392.88" width="9.92" height="1.34" fill="#9f56e8"/><text x="1503.8" y="395.8" font-size="23.6" fill="#ffffff" textLength="67.4" lengthAdjust="spacingAndGlyphs"  stroke="#ffffff" stroke-width="0.52">Pia..#2</text><use href="#pn2" x="1478.9" y="374.2"/><rect x="1578.1" y="401.2" width="99.2" height="83.6" fill="#553485" opacity="0.95"/><path d="M1603 404.2V484.8M1628 404.2V484.8M1653 404.2V484.8" stroke="#000" stroke-width="1.8" opacity="0.17"/><rect x="1578.1" y="374.2" width="98.3" height="30" fill="#9f56e8" rx="3.5"/><rect x="1578.1" y="374.2" width="98.3" height="30" fill="url(#tgl)" rx="3.5"/><rect x="1579" y="374.8" width="96.5" height="1.2" fill="#bc89ef" rx="1"/><rect x="1578.1" y="402.8" width="98.3" height="1.4" fill="#7f45ba" rx="1"/><rect x="1675.1" y="375.2" width="1.3" height="28" fill="#7c43b5"/><rect x="1581" y="380.6" width="16" height="16.6" fill="#f3ebfc"/><rect x="1581" y="384.44" width="9.92" height="1.34" fill="#9f56e8"/><rect x="1581" y="388.66" width="9.92" height="1.34" fill="#9f56e8"/><rect x="1581" y="392.88" width="9.92" height="1.34" fill="#9f56e8"/><text x="1603.4" y="395.8" font-size="23.6" fill="#ffffff" textLength="69.4" lengthAdjust="spacingAndGlyphs"  stroke="#ffffff" stroke-width="0.52">Pian..#2</text><use href="#pn2" x="1578.5" y="374.2"/><rect x="1677.7" y="401.2" width="99.2" height="83.6" fill="#553485" opacity="0.95"/><path d="M1703 404.2V484.8M1728 404.2V484.8M1753 404.2V484.8" stroke="#000" stroke-width="1.8" opacity="0.17"/><rect x="1677.7" y="374.2" width="98.3" height="30" fill="#9f56e8" rx="3.5"/><rect x="1677.7" y="374.2" width="98.3" height="30" fill="url(#tgl)" rx="3.5"/><rect x="1678.6" y="374.8" width="96.5" height="1.2" fill="#bc89ef" rx="1"/><rect x="1677.7" y="402.8" width="98.3" height="1.4" fill="#7f45ba" rx="1"/><rect x="1774.7" y="375.2" width="1.3" height="28" fill="#7c43b5"/><rect x="1680.6" y="380.6" width="16" height="16.6" fill="#f3ebfc"/><rect x="1680.6" y="384.44" width="9.92" height="1.34" fill="#9f56e8"/><rect x="1680.6" y="388.66" width="9.92" height="1.34" fill="#9f56e8"/><rect x="1680.6" y="392.88" width="9.92" height="1.34" fill="#9f56e8"/><text x="1703" y="395.8" font-size="23.6" fill="#ffffff" textLength="69.4" lengthAdjust="spacingAndGlyphs"  stroke="#ffffff" stroke-width="0.52">Pian..#2</text><use href="#pn2" x="1678.1" y="374.2"/><rect x="1777.3" y="401.2" width="99.2" height="83.6" fill="#553485" opacity="0.95"/><path d="M1803 404.2V484.8M1828 404.2V484.8M1852 404.2V484.8" stroke="#000" stroke-width="1.8" opacity="0.17"/><rect x="1777.3" y="374.2" width="98.3" height="30" fill="#9f56e8" rx="3.5"/><rect x="1777.3" y="374.2" width="98.3" height="30" fill="url(#tgl)" rx="3.5"/><rect x="1778.2" y="374.8" width="96.5" height="1.2" fill="#bc89ef" rx="1"/><rect x="1777.3" y="402.8" width="98.3" height="1.4" fill="#7f45ba" rx="1"/><rect x="1874.3" y="375.2" width="1.3" height="28" fill="#7c43b5"/><rect x="1780.2" y="380.6" width="16" height="16.6" fill="#f3ebfc"/><rect x="1780.2" y="384.44" width="9.92" height="1.34" fill="#9f56e8"/><rect x="1780.2" y="388.66" width="9.92" height="1.34" fill="#9f56e8"/><rect x="1780.2" y="392.88" width="9.92" height="1.34" fill="#9f56e8"/><text x="1802.6" y="395.8" font-size="23.6" fill="#ffffff" textLength="67.4" lengthAdjust="spacingAndGlyphs"  stroke="#ffffff" stroke-width="0.52">Pia..#2</text><use href="#pn2" x="1777.7" y="374.2"/><rect x="1876.9" y="401.2" width="99.2" height="83.6" fill="#553485" opacity="0.95"/><path d="M1902 404.2V484.8M1927 404.2V484.8M1952 404.2V484.8" stroke="#000" stroke-width="1.8" opacity="0.17"/><rect x="1876.9" y="374.2" width="98.3" height="30" fill="#9f56e8" rx="3.5"/><rect x="1876.9" y="374.2" width="98.3" height="30" fill="url(#tgl)" rx="3.5"/><rect x="1877.8" y="374.8" width="96.5" height="1.2" fill="#bc89ef" rx="1"/><rect x="1876.9" y="402.8" width="98.3" height="1.4" fill="#7f45ba" rx="1"/><rect x="1973.9" y="375.2" width="1.3" height="28" fill="#7c43b5"/><rect x="1879.8" y="380.6" width="16" height="16.6" fill="#f3ebfc"/><rect x="1879.8" y="384.44" width="9.92" height="1.34" fill="#9f56e8"/><rect x="1879.8" y="388.66" width="9.92" height="1.34" fill="#9f56e8"/><rect x="1879.8" y="392.88" width="9.92" height="1.34" fill="#9f56e8"/><text x="1902.2" y="395.8" font-size="23.6" fill="#ffffff" textLength="69.4" lengthAdjust="spacingAndGlyphs"  stroke="#ffffff" stroke-width="0.52">Pian..#2</text><use href="#pn2" x="1877.3" y="374.2"/><rect x="1976.5" y="401.2" width="99.2" height="83.6" fill="#553485" opacity="0.95"/><path d="M2002 404.2V484.8M2027 404.2V484.8M2052 404.2V484.8" stroke="#000" stroke-width="1.8" opacity="0.17"/><rect x="1976.5" y="374.2" width="98.3" height="30" fill="#9f56e8" rx="3.5"/><rect x="1976.5" y="374.2" width="98.3" height="30" fill="url(#tgl)" rx="3.5"/><rect x="1977.4" y="374.8" width="96.5" height="1.2" fill="#bc89ef" rx="1"/><rect x="1976.5" y="402.8" width="98.3" height="1.4" fill="#7f45ba" rx="1"/><rect x="2073.5" y="375.2" width="1.3" height="28" fill="#7c43b5"/><rect x="1979.4" y="380.6" width="16" height="16.6" fill="#f3ebfc"/><rect x="1979.4" y="384.44" width="9.92" height="1.34" fill="#9f56e8"/><rect x="1979.4" y="388.66" width="9.92" height="1.34" fill="#9f56e8"/><rect x="1979.4" y="392.88" width="9.92" height="1.34" fill="#9f56e8"/><text x="2001.8" y="395.8" font-size="23.6" fill="#ffffff" textLength="67.4" lengthAdjust="spacingAndGlyphs"  stroke="#ffffff" stroke-width="0.52">Pia..#2</text><use href="#pn2" x="1976.9" y="374.2"/><rect x="2076.1" y="401.2" width="99.2" height="83.6" fill="#553485" opacity="0.95"/><path d="M2101 404.2V484.8M2126 404.2V484.8M2151 404.2V484.8" stroke="#000" stroke-width="1.8" opacity="0.17"/><rect x="2076.1" y="374.2" width="98.3" height="30" fill="#9f56e8" rx="3.5"/><rect x="2076.1" y="374.2" width="98.3" height="30" fill="url(#tgl)" rx="3.5"/><rect x="2077" y="374.8" width="96.5" height="1.2" fill="#bc89ef" rx="1"/><rect x="2076.1" y="402.8" width="98.3" height="1.4" fill="#7f45ba" rx="1"/><rect x="2173.1" y="375.2" width="1.3" height="28" fill="#7c43b5"/><rect x="2079" y="380.6" width="16" height="16.6" fill="#f3ebfc"/><rect x="2079" y="384.44" width="9.92" height="1.34" fill="#9f56e8"/><rect x="2079" y="388.66" width="9.92" height="1.34" fill="#9f56e8"/><rect x="2079" y="392.88" width="9.92" height="1.34" fill="#9f56e8"/><text x="2101.4" y="395.8" font-size="23.6" fill="#ffffff" textLength="69.4" lengthAdjust="spacingAndGlyphs"  stroke="#ffffff" stroke-width="0.52">Pian..#2</text><use href="#pn2" x="2076.5" y="374.2"/><rect x="2175.7" y="401.2" width="99.2" height="83.6" fill="#553485" opacity="0.95"/><path d="M2201 404.2V484.8M2226 404.2V484.8M2251 404.2V484.8" stroke="#000" stroke-width="1.8" opacity="0.17"/><rect x="2175.7" y="374.2" width="98.3" height="30" fill="#9f56e8" rx="3.5"/><rect x="2175.7" y="374.2" width="98.3" height="30" fill="url(#tgl)" rx="3.5"/><rect x="2176.6" y="374.8" width="96.5" height="1.2" fill="#bc89ef" rx="1"/><rect x="2175.7" y="402.8" width="98.3" height="1.4" fill="#7f45ba" rx="1"/><rect x="2272.7" y="375.2" width="1.3" height="28" fill="#7c43b5"/><rect x="2178.6" y="380.6" width="16" height="16.6" fill="#f3ebfc"/><rect x="2178.6" y="384.44" width="9.92" height="1.34" fill="#9f56e8"/><rect x="2178.6" y="388.66" width="9.92" height="1.34" fill="#9f56e8"/><rect x="2178.6" y="392.88" width="9.92" height="1.34" fill="#9f56e8"/><text x="2201" y="395.8" font-size="23.6" fill="#ffffff" textLength="69.4" lengthAdjust="spacingAndGlyphs"  stroke="#ffffff" stroke-width="0.52">Pian..#2</text><use href="#pn2" x="2176.1" y="374.2"/><rect x="2275.3" y="401.2" width="99.2" height="83.6" fill="#553485" opacity="0.95"/><path d="M2301 404.2V484.8M2326 404.2V484.8M2350 404.2V484.8" stroke="#000" stroke-width="1.8" opacity="0.17"/><rect x="2275.3" y="374.2" width="98.3" height="30" fill="#9f56e8" rx="3.5"/><rect x="2275.3" y="374.2" width="98.3" height="30" fill="url(#tgl)" rx="3.5"/><rect x="2276.2" y="374.8" width="96.5" height="1.2" fill="#bc89ef" rx="1"/><rect x="2275.3" y="402.8" width="98.3" height="1.4" fill="#7f45ba" rx="1"/><rect x="2372.3" y="375.2" width="1.3" height="28" fill="#7c43b5"/><rect x="2278.2" y="380.6" width="16" height="16.6" fill="#f3ebfc"/><rect x="2278.2" y="384.44" width="9.92" height="1.34" fill="#9f56e8"/><rect x="2278.2" y="388.66" width="9.92" height="1.34" fill="#9f56e8"/><rect x="2278.2" y="392.88" width="9.92" height="1.34" fill="#9f56e8"/><text x="2300.6" y="395.8" font-size="23.6" fill="#ffffff" textLength="67.4" lengthAdjust="spacingAndGlyphs"  stroke="#ffffff" stroke-width="0.52">Pia..#2</text><use href="#pn2" x="2275.7" y="374.2"/><rect x="2374.9" y="401.2" width="99.2" height="83.6" fill="#553485" opacity="0.95"/><path d="M2400 404.2V484.8M2425 404.2V484.8M2450 404.2V484.8" stroke="#000" stroke-width="1.8" opacity="0.17"/><rect x="2374.9" y="374.2" width="98.3" height="30" fill="#9f56e8" rx="3.5"/><rect x="2374.9" y="374.2" width="98.3" height="30" fill="url(#tgl)" rx="3.5"/><rect x="2375.8" y="374.8" width="96.5" height="1.2" fill="#bc89ef" rx="1"/><rect x="2374.9" y="402.8" width="98.3" height="1.4" fill="#7f45ba" rx="1"/><rect x="2471.9" y="375.2" width="1.3" height="28" fill="#7c43b5"/><rect x="2377.8" y="380.6" width="16" height="16.6" fill="#f3ebfc"/><rect x="2377.8" y="384.44" width="9.92" height="1.34" fill="#9f56e8"/><rect x="2377.8" y="388.66" width="9.92" height="1.34" fill="#9f56e8"/><rect x="2377.8" y="392.88" width="9.92" height="1.34" fill="#9f56e8"/><text x="2400.2" y="395.8" font-size="23.6" fill="#ffffff" textLength="69.4" lengthAdjust="spacingAndGlyphs"  stroke="#ffffff" stroke-width="0.52">Pian..#2</text><use href="#pn2" x="2375.3" y="374.2"/><rect x="2474.5" y="401.2" width="99.2" height="83.6" fill="#553485" opacity="0.95"/><path d="M2500 404.2V484.8M2525 404.2V484.8M2550 404.2V484.8" stroke="#000" stroke-width="1.8" opacity="0.17"/><rect x="2474.5" y="374.2" width="98.3" height="30" fill="#9f56e8" rx="3.5"/><rect x="2474.5" y="374.2" width="98.3" height="30" fill="url(#tgl)" rx="3.5"/><rect x="2475.4" y="374.8" width="96.5" height="1.2" fill="#bc89ef" rx="1"/><rect x="2474.5" y="402.8" width="98.3" height="1.4" fill="#7f45ba" rx="1"/><rect x="2571.5" y="375.2" width="1.3" height="28" fill="#7c43b5"/><rect x="2477.4" y="380.6" width="16" height="16.6" fill="#f3ebfc"/><rect x="2477.4" y="384.44" width="9.92" height="1.34" fill="#9f56e8"/><rect x="2477.4" y="388.66" width="9.92" height="1.34" fill="#9f56e8"/><rect x="2477.4" y="392.88" width="9.92" height="1.34" fill="#9f56e8"/><text x="2499.8" y="395.8" font-size="23.6" fill="#ffffff" textLength="67.4" lengthAdjust="spacingAndGlyphs"  stroke="#ffffff" stroke-width="0.52">Pia..#2</text><use href="#pn2" x="2474.9" y="374.2"/><rect x="2574.1" y="401.2" width="198.8" height="83.6" fill="#553485" opacity="0.95"/><path d="M2599 404.2V484.8M2624 404.2V484.8M2649 404.2V484.8M2674 404.2V484.8M2699 404.2V484.8M2724 404.2V484.8M2749 404.2V484.8" stroke="#000" stroke-width="1.8" opacity="0.17"/><rect x="2574.1" y="374.2" width="197.9" height="30" fill="#9f56e8" rx="3.5"/><rect x="2574.1" y="374.2" width="197.9" height="30" fill="url(#tgl)" rx="3.5"/><rect x="2575" y="374.8" width="196.1" height="1.2" fill="#bc89ef" rx="1"/><rect x="2574.1" y="402.8" width="197.9" height="1.4" fill="#7f45ba" rx="1"/><rect x="2770.7" y="375.2" width="1.3" height="28" fill="#7c43b5"/><rect x="2577" y="380.6" width="16" height="16.6" fill="#f3ebfc"/><rect x="2577" y="384.44" width="9.92" height="1.34" fill="#9f56e8"/><rect x="2577" y="388.66" width="9.92" height="1.34" fill="#9f56e8"/><rect x="2577" y="392.88" width="9.92" height="1.34" fill="#9f56e8"/><text x="2599.4" y="395.8" font-size="23.6" fill="#ffffff" textLength="103.4" lengthAdjust="spacingAndGlyphs"  stroke="#ffffff" stroke-width="0.52">Piano 1 #2</text><use href="#pn2" x="2574.5" y="374.2"/><defs><linearGradient id="g26" x1="0" y1="0" x2="0" y2="1"><stop offset="0" stop-color="#ece6ae"/><stop offset="1" stop-color="#ded6a0"/></linearGradient></defs><rect x="681.4" y="486.8" width="2090.6" height="30.4" fill="url(#g26)" rx="3"/><rect x="682.1" y="487.3" width="2089.1" height="1.3" fill="#f6f0c8"/><rect x="681.4" y="515.6" width="2090.6" height="1.6" fill="#c8b86c"/><rect x="1279.3" y="488" width="1.2" height="28" fill="#f4ecbc" opacity="0.8"/><rect x="2076.1" y="488" width="1.2" height="28" fill="#f4ecbc" opacity="0.8"/><rect x="2275.3" y="488" width="1.2" height="28" fill="#f4ecbc" opacity="0.8"/><rect x="2673.7" y="488" width="1.2" height="28" fill="#f4ecbc" opacity="0.8"/><rect x="2674.1" y="488.5" width="98.6" height="27" fill="#ddd29a" opacity="0.55"/><g fill="#fdfbe8" stroke="#5a4a1a" stroke-width="1.1"><path d="M688.5 507 L700.5 497.5" stroke="#5a4a1a" stroke-width="4"/><path d="M688.5 507 L700.5 497.5" stroke="#fdfbe8" stroke-width="2"/><circle cx="687.8" cy="507.6" r="3.6"/><circle cx="701.5" cy="496.8" r="3.6"/></g><circle cx="687.8" cy="507.6" r="1.3" fill="#7a6a2a"/><circle cx="701.5" cy="496.8" r="1.3" fill="#7a6a2a"/><text x="708" y="507.8" font-size="23.6" fill="#7a5a10" textLength="76.6" lengthAdjust="spacingAndGlyphs"  stroke="#7a5a10" stroke-width="0.52">SC Level</text><rect x="1080.1" y="576.1" width="99.2" height="44.7" fill="#5b4174" opacity="0.95"/><path d="M1105 579.1V620.8M1130 579.1V620.8M1155 579.1V620.8" stroke="#000" stroke-width="1.8" opacity="0.17"/><rect x="1080.1" y="550.5" width="98.3" height="28.6" fill="#b273d2" rx="3.5"/><rect x="1080.1" y="550.5" width="98.3" height="28.6" fill="url(#tgl)" rx="3.5"/><rect x="1081" y="551.1" width="96.5" height="1.2" fill="#c99de0" rx="1"/><rect x="1080.1" y="577.7" width="98.3" height="1.4" fill="#8e5ca8" rx="1"/><rect x="1177.1" y="551.5" width="1.3" height="26.6" fill="#8b5aa4"/><rect x="1083" y="556.3" width="16" height="16.6" fill="#f6eefa"/><rect x="1083" y="560.14" width="9.92" height="1.34" fill="#b273d2"/><rect x="1083" y="564.36" width="9.92" height="1.34" fill="#b273d2"/><rect x="1083" y="568.58" width="9.92" height="1.34" fill="#b273d2"/><text x="1105.4" y="571.2" font-size="23.6" fill="#ffffff" textLength="68" lengthAdjust="spacingAndGlyphs"  stroke="#ffffff" stroke-width="0.52">Strings</text><rect x="1179.7" y="576.1" width="99.2" height="44.7" fill="#5b4174" opacity="0.95"/><path d="M1205 579.1V620.8M1230 579.1V620.8M1255 579.1V620.8" stroke="#000" stroke-width="1.8" opacity="0.17"/><rect x="1179.7" y="550.5" width="98.3" height="28.6" fill="#b273d2" rx="3.5"/><rect x="1179.7" y="550.5" width="98.3" height="28.6" fill="url(#tgl)" rx="3.5"/><rect x="1180.6" y="551.1" width="96.5" height="1.2" fill="#c99de0" rx="1"/><rect x="1179.7" y="577.7" width="98.3" height="1.4" fill="#8e5ca8" rx="1"/><rect x="1276.7" y="551.5" width="1.3" height="26.6" fill="#8b5aa4"/><rect x="1182.6" y="556.3" width="16" height="16.6" fill="#f6eefa"/><rect x="1182.6" y="560.14" width="9.92" height="1.34" fill="#b273d2"/><rect x="1182.6" y="564.36" width="9.92" height="1.34" fill="#b273d2"/><rect x="1182.6" y="568.58" width="9.92" height="1.34" fill="#b273d2"/><text x="1205" y="571.2" font-size="23.6" fill="#ffffff" textLength="68" lengthAdjust="spacingAndGlyphs"  stroke="#ffffff" stroke-width="0.52">Strings</text><rect x="1080.1" y="593" width="197.8" height="3.2" fill="#ea8688"/><rect x="1478.5" y="576.1" width="99.2" height="44.7" fill="#5b4174" opacity="0.95"/><path d="M1504 579.1V620.8M1529 579.1V620.8M1554 579.1V620.8" stroke="#000" stroke-width="1.8" opacity="0.17"/><rect x="1478.5" y="550.5" width="98.3" height="28.6" fill="#b273d2" rx="3.5"/><rect x="1478.5" y="550.5" width="98.3" height="28.6" fill="url(#tgl)" rx="3.5"/><rect x="1479.4" y="551.1" width="96.5" height="1.2" fill="#c99de0" rx="1"/><rect x="1478.5" y="577.7" width="98.3" height="1.4" fill="#8e5ca8" rx="1"/><rect x="1575.5" y="551.5" width="1.3" height="26.6" fill="#8b5aa4"/><rect x="1481.4" y="556.3" width="16" height="16.6" fill="#f6eefa"/><rect x="1481.4" y="560.14" width="9.92" height="1.34" fill="#b273d2"/><rect x="1481.4" y="564.36" width="9.92" height="1.34" fill="#b273d2"/><rect x="1481.4" y="568.58" width="9.92" height="1.34" fill="#b273d2"/><text x="1503.8" y="571.2" font-size="23.6" fill="#ffffff" textLength="68" lengthAdjust="spacingAndGlyphs"  stroke="#ffffff" stroke-width="0.52">Strings</text><rect x="1578.1" y="576.1" width="99.2" height="44.7" fill="#5b4174" opacity="0.95"/><path d="M1603 579.1V620.8M1628 579.1V620.8M1653 579.1V620.8" stroke="#000" stroke-width="1.8" opacity="0.17"/><rect x="1578.1" y="550.5" width="98.3" height="28.6" fill="#b273d2" rx="3.5"/><rect x="1578.1" y="550.5" width="98.3" height="28.6" fill="url(#tgl)" rx="3.5"/><rect x="1579" y="551.1" width="96.5" height="1.2" fill="#c99de0" rx="1"/><rect x="1578.1" y="577.7" width="98.3" height="1.4" fill="#8e5ca8" rx="1"/><rect x="1675.1" y="551.5" width="1.3" height="26.6" fill="#8b5aa4"/><rect x="1581" y="556.3" width="16" height="16.6" fill="#f6eefa"/><rect x="1581" y="560.14" width="9.92" height="1.34" fill="#b273d2"/><rect x="1581" y="564.36" width="9.92" height="1.34" fill="#b273d2"/><rect x="1581" y="568.58" width="9.92" height="1.34" fill="#b273d2"/><text x="1603.4" y="571.2" font-size="23.6" fill="#ffffff" textLength="68" lengthAdjust="spacingAndGlyphs"  stroke="#ffffff" stroke-width="0.52">Strings</text><rect x="1478.5" y="593" width="197.8" height="3.2" fill="#ea8688"/><rect x="2076.1" y="576.1" width="99.2" height="44.7" fill="#5b4174" opacity="0.95"/><path d="M2101 579.1V620.8M2126 579.1V620.8M2151 579.1V620.8" stroke="#000" stroke-width="1.8" opacity="0.17"/><rect x="2076.1" y="550.5" width="98.3" height="28.6" fill="#b273d2" rx="3.5"/><rect x="2076.1" y="550.5" width="98.3" height="28.6" fill="url(#tgl)" rx="3.5"/><rect x="2077" y="551.1" width="96.5" height="1.2" fill="#c99de0" rx="1"/><rect x="2076.1" y="577.7" width="98.3" height="1.4" fill="#8e5ca8" rx="1"/><rect x="2173.1" y="551.5" width="1.3" height="26.6" fill="#8b5aa4"/><rect x="2079" y="556.3" width="16" height="16.6" fill="#f6eefa"/><rect x="2079" y="560.14" width="9.92" height="1.34" fill="#b273d2"/><rect x="2079" y="564.36" width="9.92" height="1.34" fill="#b273d2"/><rect x="2079" y="568.58" width="9.92" height="1.34" fill="#b273d2"/><text x="2101.4" y="571.2" font-size="23.6" fill="#ffffff" textLength="68" lengthAdjust="spacingAndGlyphs"  stroke="#ffffff" stroke-width="0.52">Strings</text><rect x="2175.7" y="576.1" width="99.2" height="44.7" fill="#5b4174" opacity="0.95"/><path d="M2201 579.1V620.8M2226 579.1V620.8M2251 579.1V620.8" stroke="#000" stroke-width="1.8" opacity="0.17"/><rect x="2175.7" y="550.5" width="98.3" height="28.6" fill="#b273d2" rx="3.5"/><rect x="2175.7" y="550.5" width="98.3" height="28.6" fill="url(#tgl)" rx="3.5"/><rect x="2176.6" y="551.1" width="96.5" height="1.2" fill="#c99de0" rx="1"/><rect x="2175.7" y="577.7" width="98.3" height="1.4" fill="#8e5ca8" rx="1"/><rect x="2272.7" y="551.5" width="1.3" height="26.6" fill="#8b5aa4"/><rect x="2178.6" y="556.3" width="16" height="16.6" fill="#f6eefa"/><rect x="2178.6" y="560.14" width="9.92" height="1.34" fill="#b273d2"/><rect x="2178.6" y="564.36" width="9.92" height="1.34" fill="#b273d2"/><rect x="2178.6" y="568.58" width="9.92" height="1.34" fill="#b273d2"/><text x="2201" y="571.2" font-size="23.6" fill="#ffffff" textLength="68" lengthAdjust="spacingAndGlyphs"  stroke="#ffffff" stroke-width="0.52">Strings</text><rect x="2076.1" y="593" width="197.8" height="3.2" fill="#ea8688"/><rect x="2474.5" y="576.1" width="99.2" height="44.7" fill="#5b4174" opacity="0.95"/><path d="M2500 579.1V620.8M2525 579.1V620.8M2550 579.1V620.8" stroke="#000" stroke-width="1.8" opacity="0.17"/><rect x="2474.5" y="550.5" width="98.3" height="28.6" fill="#b273d2" rx="3.5"/><rect x="2474.5" y="550.5" width="98.3" height="28.6" fill="url(#tgl)" rx="3.5"/><rect x="2475.4" y="551.1" width="96.5" height="1.2" fill="#c99de0" rx="1"/><rect x="2474.5" y="577.7" width="98.3" height="1.4" fill="#8e5ca8" rx="1"/><rect x="2571.5" y="551.5" width="1.3" height="26.6" fill="#8b5aa4"/><rect x="2477.4" y="556.3" width="16" height="16.6" fill="#f6eefa"/><rect x="2477.4" y="560.14" width="9.92" height="1.34" fill="#b273d2"/><rect x="2477.4" y="564.36" width="9.92" height="1.34" fill="#b273d2"/><rect x="2477.4" y="568.58" width="9.92" height="1.34" fill="#b273d2"/><text x="2499.8" y="571.2" font-size="23.6" fill="#ffffff" textLength="68" lengthAdjust="spacingAndGlyphs"  stroke="#ffffff" stroke-width="0.52">Strings</text><rect x="2574.1" y="576.1" width="99.2" height="44.7" fill="#5b4174" opacity="0.95"/><path d="M2599 579.1V620.8M2624 579.1V620.8M2649 579.1V620.8" stroke="#000" stroke-width="1.8" opacity="0.17"/><rect x="2574.1" y="550.5" width="98.3" height="28.6" fill="#b273d2" rx="3.5"/><rect x="2574.1" y="550.5" width="98.3" height="28.6" fill="url(#tgl)" rx="3.5"/><rect x="2575" y="551.1" width="96.5" height="1.2" fill="#c99de0" rx="1"/><rect x="2574.1" y="577.7" width="98.3" height="1.4" fill="#8e5ca8" rx="1"/><rect x="2671.1" y="551.5" width="1.3" height="26.6" fill="#8b5aa4"/><rect x="2577" y="556.3" width="16" height="16.6" fill="#f6eefa"/><rect x="2577" y="560.14" width="9.92" height="1.34" fill="#b273d2"/><rect x="2577" y="564.36" width="9.92" height="1.34" fill="#b273d2"/><rect x="2577" y="568.58" width="9.92" height="1.34" fill="#b273d2"/><text x="2599.4" y="571.2" font-size="23.6" fill="#ffffff" textLength="68" lengthAdjust="spacingAndGlyphs"  stroke="#ffffff" stroke-width="0.52">Strings</text><rect x="2474.5" y="593" width="197.8" height="3.2" fill="#ea8688"/><rect x="1279.3" y="650" width="24.5" height="54.8" fill="#5d4870" opacity="0.95"/><rect x="1279.3" y="622" width="23.6" height="31" fill="#b87ec0" rx="3.5"/><rect x="1279.3" y="622" width="23.6" height="31" fill="url(#tgl)" rx="3.5"/><rect x="1280.2" y="622.6" width="21.8" height="1.2" fill="#cda5d3" rx="1"/><rect x="1279.3" y="651.6" width="23.6" height="1.4" fill="#93659a" rx="1"/><rect x="1301.6" y="623" width="1.3" height="29" fill="#906296"/><rect x="1282.2" y="628.4" width="16" height="16.6" fill="#f6f0f7"/><rect x="1282.2" y="632.24" width="9.92" height="1.34" fill="#b87ec0"/><rect x="1282.2" y="636.46" width="9.92" height="1.34" fill="#b87ec0"/><rect x="1282.2" y="640.68" width="9.92" height="1.34" fill="#b87ec0"/><rect x="1301" y="670" width="2.6" height="4" fill="#ea8688"/><rect x="1378.9" y="650" width="24.5" height="54.8" fill="#5d4870" opacity="0.95"/><rect x="1378.9" y="622" width="23.6" height="31" fill="#b87ec0" rx="3.5"/><rect x="1378.9" y="622" width="23.6" height="31" fill="url(#tgl)" rx="3.5"/><rect x="1379.8" y="622.6" width="21.8" height="1.2" fill="#cda5d3" rx="1"/><rect x="1378.9" y="651.6" width="23.6" height="1.4" fill="#93659a" rx="1"/><rect x="1401.2" y="623" width="1.3" height="29" fill="#906296"/><rect x="1381.8" y="628.4" width="16" height="16.6" fill="#f6f0f7"/><rect x="1381.8" y="632.24" width="9.92" height="1.34" fill="#b87ec0"/><rect x="1381.8" y="636.46" width="9.92" height="1.34" fill="#b87ec0"/><rect x="1381.8" y="640.68" width="9.92" height="1.34" fill="#b87ec0"/><rect x="1400.6" y="670" width="2.6" height="4" fill="#ea8688"/><rect x="2275.3" y="650" width="24.5" height="54.8" fill="#5d4870" opacity="0.95"/><rect x="2275.3" y="622" width="23.6" height="31" fill="#b87ec0" rx="3.5"/><rect x="2275.3" y="622" width="23.6" height="31" fill="url(#tgl)" rx="3.5"/><rect x="2276.2" y="622.6" width="21.8" height="1.2" fill="#cda5d3" rx="1"/><rect x="2275.3" y="651.6" width="23.6" height="1.4" fill="#93659a" rx="1"/><rect x="2297.6" y="623" width="1.3" height="29" fill="#906296"/><rect x="2278.2" y="628.4" width="16" height="16.6" fill="#f6f0f7"/><rect x="2278.2" y="632.24" width="9.92" height="1.34" fill="#b87ec0"/><rect x="2278.2" y="636.46" width="9.92" height="1.34" fill="#b87ec0"/><rect x="2278.2" y="640.68" width="9.92" height="1.34" fill="#b87ec0"/><rect x="2297" y="670" width="2.6" height="4" fill="#ea8688"/><rect x="2374.9" y="650" width="24.5" height="54.8" fill="#5d4870" opacity="0.95"/><rect x="2374.9" y="622" width="23.6" height="31" fill="#b87ec0" rx="3.5"/><rect x="2374.9" y="622" width="23.6" height="31" fill="url(#tgl)" rx="3.5"/><rect x="2375.8" y="622.6" width="21.8" height="1.2" fill="#cda5d3" rx="1"/><rect x="2374.9" y="651.6" width="23.6" height="1.4" fill="#93659a" rx="1"/><rect x="2397.2" y="623" width="1.3" height="29" fill="#906296"/><rect x="2377.8" y="628.4" width="16" height="16.6" fill="#f6f0f7"/><rect x="2377.8" y="632.24" width="9.92" height="1.34" fill="#b87ec0"/><rect x="2377.8" y="636.46" width="9.92" height="1.34" fill="#b87ec0"/><rect x="2377.8" y="640.68" width="9.92" height="1.34" fill="#b87ec0"/><rect x="2396.6" y="670" width="2.6" height="4" fill="#ea8688"/><rect x="681.7" y="732.2" width="198.8" height="46.6" fill="#61506a" opacity="0.95"/><path d="M707 735.2V778.8M732 735.2V778.8M757 735.2V778.8M782 735.2V778.8M807 735.2V778.8M832 735.2V778.8M856 735.2V778.8" stroke="#000" stroke-width="1.8" opacity="0.17"/><rect x="681.7" y="706.2" width="197.9" height="29" fill="#c492b4" rx="3.5"/><rect x="681.7" y="706.2" width="197.9" height="29" fill="url(#tgl)" rx="3.5"/><rect x="682.6" y="706.8" width="196.1" height="1.2" fill="#d6b3ca" rx="1"/><rect x="681.7" y="733.8" width="197.9" height="1.4" fill="#9d7590" rx="1"/><rect x="878.3" y="707.2" width="1.3" height="27" fill="#99728c"/><rect x="684.6" y="712.6" width="16" height="16.6" fill="#f8f2f6"/><rect x="684.6" y="716.44" width="9.92" height="1.34" fill="#c492b4"/><rect x="684.6" y="720.66" width="9.92" height="1.34" fill="#c492b4"/><rect x="684.6" y="724.88" width="9.92" height="1.34" fill="#c492b4"/><text x="707" y="727.8" font-size="23.6" fill="#ffffff" textLength="94.4" lengthAdjust="spacingAndGlyphs"  stroke="#ffffff" stroke-width="0.52">Ambience</text><rect x="880.9" y="732.2" width="198.8" height="46.6" fill="#61506a" opacity="0.95"/><path d="M906 735.2V778.8M931 735.2V778.8M956 735.2V778.8M981 735.2V778.8M1006 735.2V778.8M1031 735.2V778.8M1056 735.2V778.8" stroke="#000" stroke-width="1.8" opacity="0.17"/><rect x="880.9" y="706.2" width="197.9" height="29" fill="#c492b4" rx="3.5"/><rect x="880.9" y="706.2" width="197.9" height="29" fill="url(#tgl)" rx="3.5"/><rect x="881.8" y="706.8" width="196.1" height="1.2" fill="#d6b3ca" rx="1"/><rect x="880.9" y="733.8" width="197.9" height="1.4" fill="#9d7590" rx="1"/><rect x="1077.5" y="707.2" width="1.3" height="27" fill="#99728c"/><rect x="883.8" y="712.6" width="16" height="16.6" fill="#f8f2f6"/><rect x="883.8" y="716.44" width="9.92" height="1.34" fill="#c492b4"/><rect x="883.8" y="720.66" width="9.92" height="1.34" fill="#c492b4"/><rect x="883.8" y="724.88" width="9.92" height="1.34" fill="#c492b4"/><text x="906.2" y="727.8" font-size="23.6" fill="#ffffff" textLength="94.4" lengthAdjust="spacingAndGlyphs"  stroke="#ffffff" stroke-width="0.52">Ambience</text><rect x="1080.1" y="732.2" width="198.8" height="46.6" fill="#61506a" opacity="0.95"/><path d="M1105 735.2V778.8M1130 735.2V778.8M1155 735.2V778.8M1180 735.2V778.8M1205 735.2V778.8M1230 735.2V778.8M1255 735.2V778.8" stroke="#000" stroke-width="1.8" opacity="0.17"/><rect x="1080.1" y="706.2" width="197.9" height="29" fill="#c492b4" rx="3.5"/><rect x="1080.1" y="706.2" width="197.9" height="29" fill="url(#tgl)" rx="3.5"/><rect x="1081" y="706.8" width="196.1" height="1.2" fill="#d6b3ca" rx="1"/><rect x="1080.1" y="733.8" width="197.9" height="1.4" fill="#9d7590" rx="1"/><rect x="1276.7" y="707.2" width="1.3" height="27" fill="#99728c"/><rect x="1083" y="712.6" width="16" height="16.6" fill="#f8f2f6"/><rect x="1083" y="716.44" width="9.92" height="1.34" fill="#c492b4"/><rect x="1083" y="720.66" width="9.92" height="1.34" fill="#c492b4"/><rect x="1083" y="724.88" width="9.92" height="1.34" fill="#c492b4"/><text x="1105.4" y="727.8" font-size="23.6" fill="#ffffff" textLength="94.4" lengthAdjust="spacingAndGlyphs"  stroke="#ffffff" stroke-width="0.52">Ambience</text><rect x="681.7" y="749.6" width="596.2" height="3.2" fill="#ea8688"/><rect x="1677.7" y="732.2" width="198.8" height="46.6" fill="#61506a" opacity="0.95"/><path d="M1703 735.2V778.8M1728 735.2V778.8M1753 735.2V778.8M1778 735.2V778.8M1803 735.2V778.8M1828 735.2V778.8M1852 735.2V778.8" stroke="#000" stroke-width="1.8" opacity="0.17"/><rect x="1677.7" y="706.2" width="197.9" height="29" fill="#c492b4" rx="3.5"/><rect x="1677.7" y="706.2" width="197.9" height="29" fill="url(#tgl)" rx="3.5"/><rect x="1678.6" y="706.8" width="196.1" height="1.2" fill="#d6b3ca" rx="1"/><rect x="1677.7" y="733.8" width="197.9" height="1.4" fill="#9d7590" rx="1"/><rect x="1874.3" y="707.2" width="1.3" height="27" fill="#99728c"/><rect x="1680.6" y="712.6" width="16" height="16.6" fill="#f8f2f6"/><rect x="1680.6" y="716.44" width="9.92" height="1.34" fill="#c492b4"/><rect x="1680.6" y="720.66" width="9.92" height="1.34" fill="#c492b4"/><rect x="1680.6" y="724.88" width="9.92" height="1.34" fill="#c492b4"/><text x="1703" y="727.8" font-size="23.6" fill="#ffffff" textLength="94.4" lengthAdjust="spacingAndGlyphs"  stroke="#ffffff" stroke-width="0.52">Ambience</text><rect x="1876.9" y="732.2" width="198.8" height="46.6" fill="#61506a" opacity="0.95"/><path d="M1902 735.2V778.8M1927 735.2V778.8M1952 735.2V778.8M1977 735.2V778.8M2002 735.2V778.8M2027 735.2V778.8M2052 735.2V778.8" stroke="#000" stroke-width="1.8" opacity="0.17"/><rect x="1876.9" y="706.2" width="197.9" height="29" fill="#c492b4" rx="3.5"/><rect x="1876.9" y="706.2" width="197.9" height="29" fill="url(#tgl)" rx="3.5"/><rect x="1877.8" y="706.8" width="196.1" height="1.2" fill="#d6b3ca" rx="1"/><rect x="1876.9" y="733.8" width="197.9" height="1.4" fill="#9d7590" rx="1"/><rect x="2073.5" y="707.2" width="1.3" height="27" fill="#99728c"/><rect x="1879.8" y="712.6" width="16" height="16.6" fill="#f8f2f6"/><rect x="1879.8" y="716.44" width="9.92" height="1.34" fill="#c492b4"/><rect x="1879.8" y="720.66" width="9.92" height="1.34" fill="#c492b4"/><rect x="1879.8" y="724.88" width="9.92" height="1.34" fill="#c492b4"/><text x="1902.2" y="727.8" font-size="23.6" fill="#ffffff" textLength="94.4" lengthAdjust="spacingAndGlyphs"  stroke="#ffffff" stroke-width="0.52">Ambience</text><rect x="2076.1" y="732.2" width="198.8" height="46.6" fill="#61506a" opacity="0.95"/><path d="M2101 735.2V778.8M2126 735.2V778.8M2151 735.2V778.8M2176 735.2V778.8M2201 735.2V778.8M2226 735.2V778.8M2251 735.2V778.8" stroke="#000" stroke-width="1.8" opacity="0.17"/><rect x="2076.1" y="706.2" width="197.9" height="29" fill="#c492b4" rx="3.5"/><rect x="2076.1" y="706.2" width="197.9" height="29" fill="url(#tgl)" rx="3.5"/><rect x="2077" y="706.8" width="196.1" height="1.2" fill="#d6b3ca" rx="1"/><rect x="2076.1" y="733.8" width="197.9" height="1.4" fill="#9d7590" rx="1"/><rect x="2272.7" y="707.2" width="1.3" height="27" fill="#99728c"/><rect x="2079" y="712.6" width="16" height="16.6" fill="#f8f2f6"/><rect x="2079" y="716.44" width="9.92" height="1.34" fill="#c492b4"/><rect x="2079" y="720.66" width="9.92" height="1.34" fill="#c492b4"/><rect x="2079" y="724.88" width="9.92" height="1.34" fill="#c492b4"/><text x="2101.4" y="727.8" font-size="23.6" fill="#ffffff" textLength="94.4" lengthAdjust="spacingAndGlyphs"  stroke="#ffffff" stroke-width="0.52">Ambience</text><rect x="1677.7" y="749.6" width="596.2" height="3.2" fill="#ea8688"/><rect x="681.7" y="808.1" width="198.8" height="56.7" fill="#66585e" opacity="0.95"/><path d="M707 811.1V864.8M732 811.1V864.8M757 811.1V864.8M782 811.1V864.8M807 811.1V864.8M832 811.1V864.8M856 811.1V864.8" stroke="#000" stroke-width="1.8" opacity="0.17"/><rect x="681.7" y="780.5" width="197.9" height="30.6" fill="#cda0a4" rx="3.5"/><rect x="681.7" y="780.5" width="197.9" height="30.6" fill="url(#tgl)" rx="3.5"/><rect x="682.6" y="781.1" width="196.1" height="1.2" fill="#dcbcbf" rx="1"/><rect x="681.7" y="809.7" width="197.9" height="1.4" fill="#a48083" rx="1"/><rect x="878.3" y="781.5" width="1.3" height="28.6" fill="#a07d80"/><rect x="684.6" y="786.9" width="16" height="16.6" fill="#f9f4f4"/><rect x="684.6" y="790.74" width="9.92" height="1.34" fill="#cda0a4"/><rect x="684.6" y="794.96" width="9.92" height="1.34" fill="#cda0a4"/><rect x="684.6" y="799.18" width="9.92" height="1.34" fill="#cda0a4"/><text x="707" y="802.1" font-size="23.6" fill="#ffffff" textLength="70" lengthAdjust="spacingAndGlyphs"  stroke="#ffffff" stroke-width="0.52">Pluck 2</text><rect x="880.9" y="808.1" width="198.8" height="56.7" fill="#66585e" opacity="0.95"/><path d="M906 811.1V864.8M931 811.1V864.8M956 811.1V864.8M981 811.1V864.8M1006 811.1V864.8M1031 811.1V864.8M1056 811.1V864.8" stroke="#000" stroke-width="1.8" opacity="0.17"/><rect x="880.9" y="780.5" width="197.9" height="30.6" fill="#cda0a4" rx="3.5"/><rect x="880.9" y="780.5" width="197.9" height="30.6" fill="url(#tgl)" rx="3.5"/><rect x="881.8" y="781.1" width="196.1" height="1.2" fill="#dcbcbf" rx="1"/><rect x="880.9" y="809.7" width="197.9" height="1.4" fill="#a48083" rx="1"/><rect x="1077.5" y="781.5" width="1.3" height="28.6" fill="#a07d80"/><rect x="883.8" y="786.9" width="16" height="16.6" fill="#f9f4f4"/><rect x="883.8" y="790.74" width="9.92" height="1.34" fill="#cda0a4"/><rect x="883.8" y="794.96" width="9.92" height="1.34" fill="#cda0a4"/><rect x="883.8" y="799.18" width="9.92" height="1.34" fill="#cda0a4"/><text x="906.2" y="802.1" font-size="23.6" fill="#ffffff" textLength="70" lengthAdjust="spacingAndGlyphs"  stroke="#ffffff" stroke-width="0.52">Pluck 2</text><rect x="1080.1" y="808.1" width="198.8" height="56.7" fill="#66585e" opacity="0.95"/><path d="M1105 811.1V864.8M1130 811.1V864.8M1155 811.1V864.8M1180 811.1V864.8M1205 811.1V864.8M1230 811.1V864.8M1255 811.1V864.8" stroke="#000" stroke-width="1.8" opacity="0.17"/><rect x="1080.1" y="780.5" width="197.9" height="30.6" fill="#cda0a4" rx="3.5"/><rect x="1080.1" y="780.5" width="197.9" height="30.6" fill="url(#tgl)" rx="3.5"/><rect x="1081" y="781.1" width="196.1" height="1.2" fill="#dcbcbf" rx="1"/><rect x="1080.1" y="809.7" width="197.9" height="1.4" fill="#a48083" rx="1"/><rect x="1276.7" y="781.5" width="1.3" height="28.6" fill="#a07d80"/><rect x="1083" y="786.9" width="16" height="16.6" fill="#f9f4f4"/><rect x="1083" y="790.74" width="9.92" height="1.34" fill="#cda0a4"/><rect x="1083" y="794.96" width="9.92" height="1.34" fill="#cda0a4"/><rect x="1083" y="799.18" width="9.92" height="1.34" fill="#cda0a4"/><text x="1105.4" y="802.1" font-size="23.6" fill="#ffffff" textLength="70" lengthAdjust="spacingAndGlyphs"  stroke="#ffffff" stroke-width="0.52">Pluck 2</text><rect x="681.7" y="828.8" width="596.2" height="3.4" fill="#ea8688"/><rect x="1677.7" y="808.1" width="198.8" height="56.7" fill="#66585e" opacity="0.95"/><path d="M1703 811.1V864.8M1728 811.1V864.8M1753 811.1V864.8M1778 811.1V864.8M1803 811.1V864.8M1828 811.1V864.8M1852 811.1V864.8" stroke="#000" stroke-width="1.8" opacity="0.17"/><rect x="1677.7" y="780.5" width="197.9" height="30.6" fill="#cda0a4" rx="3.5"/><rect x="1677.7" y="780.5" width="197.9" height="30.6" fill="url(#tgl)" rx="3.5"/><rect x="1678.6" y="781.1" width="196.1" height="1.2" fill="#dcbcbf" rx="1"/><rect x="1677.7" y="809.7" width="197.9" height="1.4" fill="#a48083" rx="1"/><rect x="1874.3" y="781.5" width="1.3" height="28.6" fill="#a07d80"/><rect x="1680.6" y="786.9" width="16" height="16.6" fill="#f9f4f4"/><rect x="1680.6" y="790.74" width="9.92" height="1.34" fill="#cda0a4"/><rect x="1680.6" y="794.96" width="9.92" height="1.34" fill="#cda0a4"/><rect x="1680.6" y="799.18" width="9.92" height="1.34" fill="#cda0a4"/><text x="1703" y="802.1" font-size="23.6" fill="#ffffff" textLength="70" lengthAdjust="spacingAndGlyphs"  stroke="#ffffff" stroke-width="0.52">Pluck 2</text><rect x="1876.9" y="808.1" width="198.8" height="56.7" fill="#66585e" opacity="0.95"/><path d="M1902 811.1V864.8M1927 811.1V864.8M1952 811.1V864.8M1977 811.1V864.8M2002 811.1V864.8M2027 811.1V864.8M2052 811.1V864.8" stroke="#000" stroke-width="1.8" opacity="0.17"/><rect x="1876.9" y="780.5" width="197.9" height="30.6" fill="#cda0a4" rx="3.5"/><rect x="1876.9" y="780.5" width="197.9" height="30.6" fill="url(#tgl)" rx="3.5"/><rect x="1877.8" y="781.1" width="196.1" height="1.2" fill="#dcbcbf" rx="1"/><rect x="1876.9" y="809.7" width="197.9" height="1.4" fill="#a48083" rx="1"/><rect x="2073.5" y="781.5" width="1.3" height="28.6" fill="#a07d80"/><rect x="1879.8" y="786.9" width="16" height="16.6" fill="#f9f4f4"/><rect x="1879.8" y="790.74" width="9.92" height="1.34" fill="#cda0a4"/><rect x="1879.8" y="794.96" width="9.92" height="1.34" fill="#cda0a4"/><rect x="1879.8" y="799.18" width="9.92" height="1.34" fill="#cda0a4"/><text x="1902.2" y="802.1" font-size="23.6" fill="#ffffff" textLength="70" lengthAdjust="spacingAndGlyphs"  stroke="#ffffff" stroke-width="0.52">Pluck 2</text><rect x="2076.1" y="808.1" width="198.8" height="56.7" fill="#66585e" opacity="0.95"/><path d="M2101 811.1V864.8M2126 811.1V864.8M2151 811.1V864.8M2176 811.1V864.8M2201 811.1V864.8M2226 811.1V864.8M2251 811.1V864.8" stroke="#000" stroke-width="1.8" opacity="0.17"/><rect x="2076.1" y="780.5" width="197.9" height="30.6" fill="#cda0a4" rx="3.5"/><rect x="2076.1" y="780.5" width="197.9" height="30.6" fill="url(#tgl)" rx="3.5"/><rect x="2077" y="781.1" width="196.1" height="1.2" fill="#dcbcbf" rx="1"/><rect x="2076.1" y="809.7" width="197.9" height="1.4" fill="#a48083" rx="1"/><rect x="2272.7" y="781.5" width="1.3" height="28.6" fill="#a07d80"/><rect x="2079" y="786.9" width="16" height="16.6" fill="#f9f4f4"/><rect x="2079" y="790.74" width="9.92" height="1.34" fill="#cda0a4"/><rect x="2079" y="794.96" width="9.92" height="1.34" fill="#cda0a4"/><rect x="2079" y="799.18" width="9.92" height="1.34" fill="#cda0a4"/><text x="2101.4" y="802.1" font-size="23.6" fill="#ffffff" textLength="70" lengthAdjust="spacingAndGlyphs"  stroke="#ffffff" stroke-width="0.52">Pluck 2</text><rect x="1677.7" y="828.8" width="596.2" height="3.4" fill="#ea8688"/><rect x="1080.1" y="894.5" width="99.2" height="82.6" fill="#6a5e56" opacity="0.95"/><path d="M1105 897.5V977.1M1130 897.5V977.1M1155 897.5V977.1" stroke="#000" stroke-width="1.8" opacity="0.17"/><rect x="1080.1" y="866.7" width="98.3" height="30.8" fill="#d6ab90" rx="3.5"/><rect x="1080.1" y="866.7" width="98.3" height="30.8" fill="url(#tgl)" rx="3.5"/><rect x="1081" y="867.3" width="96.5" height="1.2" fill="#e2c4b1" rx="1"/><rect x="1080.1" y="896.1" width="98.3" height="1.4" fill="#ab8973" rx="1"/><rect x="1177.1" y="867.7" width="1.3" height="28.8" fill="#a78570"/><rect x="1083" y="873.1" width="16" height="16.6" fill="#faf5f2"/><rect x="1083" y="876.94" width="9.92" height="1.34" fill="#d6ab90"/><rect x="1083" y="881.16" width="9.92" height="1.34" fill="#d6ab90"/><rect x="1083" y="885.38" width="9.92" height="1.34" fill="#d6ab90"/><text x="1105.4" y="888.3" font-size="23.6" fill="#ffffff" textLength="32" lengthAdjust="spacingAndGlyphs"  stroke="#ffffff" stroke-width="0.52">Arp</text><rect x="1179.7" y="894.5" width="74.3" height="82.6" fill="#6a5e56" opacity="0.95"/><path d="M1205 897.5V977.1M1230 897.5V977.1" stroke="#000" stroke-width="1.8" opacity="0.17"/><rect x="1179.7" y="866.7" width="73.4" height="30.8" fill="#d6ab90" rx="3.5"/><rect x="1179.7" y="866.7" width="73.4" height="30.8" fill="url(#tgl)" rx="3.5"/><rect x="1180.6" y="867.3" width="71.6" height="1.2" fill="#e2c4b1" rx="1"/><rect x="1179.7" y="896.1" width="73.4" height="1.4" fill="#ab8973" rx="1"/><rect x="1251.8" y="867.7" width="1.3" height="28.8" fill="#a78570"/><rect x="1182.6" y="873.1" width="16" height="16.6" fill="#faf5f2"/><rect x="1182.6" y="876.94" width="9.92" height="1.34" fill="#d6ab90"/><rect x="1182.6" y="881.16" width="9.92" height="1.34" fill="#d6ab90"/><rect x="1182.6" y="885.38" width="9.92" height="1.34" fill="#d6ab90"/><text x="1205" y="888.3" font-size="23.6" fill="#ffffff" textLength="32" lengthAdjust="spacingAndGlyphs"  stroke="#ffffff" stroke-width="0.52">Arp</text><rect x="1080.7" y="898.6" width="48.6" height="2.7" fill="#ea8688"/><rect x="1130.5" y="903.8" width="23.7" height="2.7" fill="#ea8688"/><rect x="1155.4" y="898.6" width="23.7" height="2.7" fill="#ea8688"/><rect x="1180.3" y="898.6" width="48.6" height="2.7" fill="#ea8688"/><rect x="1230.1" y="903.8" width="23.7" height="2.7" fill="#ea8688"/><rect x="1130.5" y="910.8" width="23.7" height="2.7" fill="#ea8688"/><rect x="1155.4" y="908.8" width="23.7" height="2.7" fill="#ea8688"/><rect x="1230.1" y="910.8" width="23.7" height="2.7" fill="#ea8688"/><rect x="1080.7" y="915.8" width="48.6" height="2.7" fill="#ea8688"/><rect x="1180.3" y="915.8" width="48.6" height="2.7" fill="#ea8688"/><rect x="1130.5" y="950.3" width="23.7" height="2.7" fill="#ea8688"/><rect x="1230.1" y="950.3" width="23.7" height="2.7" fill="#ea8688"/><rect x="1080.7" y="954.8" width="48.6" height="2.7" fill="#ea8688"/><rect x="1180.3" y="954.8" width="48.6" height="2.7" fill="#ea8688"/><rect x="1155.4" y="974.8" width="23.7" height="2.7" fill="#ea8688"/><rect x="2076.1" y="894.5" width="99.2" height="82.6" fill="#6a5e56" opacity="0.95"/><path d="M2101 897.5V977.1M2126 897.5V977.1M2151 897.5V977.1" stroke="#000" stroke-width="1.8" opacity="0.17"/><rect x="2076.1" y="866.7" width="98.3" height="30.8" fill="#d6ab90" rx="3.5"/><rect x="2076.1" y="866.7" width="98.3" height="30.8" fill="url(#tgl)" rx="3.5"/><rect x="2077" y="867.3" width="96.5" height="1.2" fill="#e2c4b1" rx="1"/><rect x="2076.1" y="896.1" width="98.3" height="1.4" fill="#ab8973" rx="1"/><rect x="2173.1" y="867.7" width="1.3" height="28.8" fill="#a78570"/><rect x="2079" y="873.1" width="16" height="16.6" fill="#faf5f2"/><rect x="2079" y="876.94" width="9.92" height="1.34" fill="#d6ab90"/><rect x="2079" y="881.16" width="9.92" height="1.34" fill="#d6ab90"/><rect x="2079" y="885.38" width="9.92" height="1.34" fill="#d6ab90"/><text x="2101.4" y="888.3" font-size="23.6" fill="#ffffff" textLength="32" lengthAdjust="spacingAndGlyphs"  stroke="#ffffff" stroke-width="0.52">Arp</text><rect x="2175.7" y="894.5" width="74.3" height="82.6" fill="#6a5e56" opacity="0.95"/><path d="M2201 897.5V977.1M2226 897.5V977.1" stroke="#000" stroke-width="1.8" opacity="0.17"/><rect x="2175.7" y="866.7" width="73.4" height="30.8" fill="#d6ab90" rx="3.5"/><rect x="2175.7" y="866.7" width="73.4" height="30.8" fill="url(#tgl)" rx="3.5"/><rect x="2176.6" y="867.3" width="71.6" height="1.2" fill="#e2c4b1" rx="1"/><rect x="2175.7" y="896.1" width="73.4" height="1.4" fill="#ab8973" rx="1"/><rect x="2247.8" y="867.7" width="1.3" height="28.8" fill="#a78570"/><rect x="2178.6" y="873.1" width="16" height="16.6" fill="#faf5f2"/><rect x="2178.6" y="876.94" width="9.92" height="1.34" fill="#d6ab90"/><rect x="2178.6" y="881.16" width="9.92" height="1.34" fill="#d6ab90"/><rect x="2178.6" y="885.38" width="9.92" height="1.34" fill="#d6ab90"/><text x="2201" y="888.3" font-size="23.6" fill="#ffffff" textLength="32" lengthAdjust="spacingAndGlyphs"  stroke="#ffffff" stroke-width="0.52">Arp</text><rect x="2076.7" y="898.6" width="48.6" height="2.7" fill="#ea8688"/><rect x="2126.5" y="903.8" width="23.7" height="2.7" fill="#ea8688"/><rect x="2151.4" y="898.6" width="23.7" height="2.7" fill="#ea8688"/><rect x="2176.3" y="898.6" width="48.6" height="2.7" fill="#ea8688"/><rect x="2226.1" y="903.8" width="23.7" height="2.7" fill="#ea8688"/><rect x="2126.5" y="910.8" width="23.7" height="2.7" fill="#ea8688"/><rect x="2151.4" y="908.8" width="23.7" height="2.7" fill="#ea8688"/><rect x="2226.1" y="910.8" width="23.7" height="2.7" fill="#ea8688"/><rect x="2076.7" y="915.8" width="48.6" height="2.7" fill="#ea8688"/><rect x="2176.3" y="915.8" width="48.6" height="2.7" fill="#ea8688"/><rect x="2126.5" y="950.3" width="23.7" height="2.7" fill="#ea8688"/><rect x="2226.1" y="950.3" width="23.7" height="2.7" fill="#ea8688"/><rect x="2076.7" y="954.8" width="48.6" height="2.7" fill="#ea8688"/><rect x="2176.3" y="954.8" width="48.6" height="2.7" fill="#ea8688"/><rect x="2151.4" y="974.8" width="23.7" height="2.7" fill="#ea8688"/><rect x="880.9" y="1006.6" width="198.8" height="82.4" fill="#6c644c" opacity="0.95"/><path d="M906 1009.6V1089M931 1009.6V1089M956 1009.6V1089M981 1009.6V1089M1006 1009.6V1089M1031 1009.6V1089M1056 1009.6V1089" stroke="#000" stroke-width="1.8" opacity="0.17"/><rect x="880.9" y="979" width="197.9" height="30.6" fill="#deb87a" rx="3.5"/><rect x="880.9" y="979" width="197.9" height="30.6" fill="url(#tgl)" rx="3.5"/><rect x="881.8" y="979.6" width="196.1" height="1.2" fill="#e8cda2" rx="1"/><rect x="880.9" y="1008.2" width="197.9" height="1.4" fill="#b29362" rx="1"/><rect x="1077.5" y="980" width="1.3" height="28.6" fill="#ad905f"/><rect x="883.8" y="985.4" width="16" height="16.6" fill="#fbf6ef"/><rect x="883.8" y="989.24" width="9.92" height="1.34" fill="#deb87a"/><rect x="883.8" y="993.46" width="9.92" height="1.34" fill="#deb87a"/><rect x="883.8" y="997.68" width="9.92" height="1.34" fill="#deb87a"/><text x="906.2" y="1000.6" font-size="23.6" fill="#3a2808" textLength="51.7" lengthAdjust="spacingAndGlyphs"  stroke="#3a2808" stroke-width="0.52">Pluck</text><path d="M881.5 1037.5H1079.5" stroke="#e08c86" stroke-width="6.6" stroke-dasharray="1.5 4.725"/><rect x="1876.9" y="1006.6" width="198.8" height="82.4" fill="#6c644c" opacity="0.95"/><path d="M1902 1009.6V1089M1927 1009.6V1089M1952 1009.6V1089M1977 1009.6V1089M2002 1009.6V1089M2027 1009.6V1089M2052 1009.6V1089" stroke="#000" stroke-width="1.8" opacity="0.17"/><rect x="1876.9" y="979" width="197.9" height="30.6" fill="#deb87a" rx="3.5"/><rect x="1876.9" y="979" width="197.9" height="30.6" fill="url(#tgl)" rx="3.5"/><rect x="1877.8" y="979.6" width="196.1" height="1.2" fill="#e8cda2" rx="1"/><rect x="1876.9" y="1008.2" width="197.9" height="1.4" fill="#b29362" rx="1"/><rect x="2073.5" y="980" width="1.3" height="28.6" fill="#ad905f"/><rect x="1879.8" y="985.4" width="16" height="16.6" fill="#fbf6ef"/><rect x="1879.8" y="989.24" width="9.92" height="1.34" fill="#deb87a"/><rect x="1879.8" y="993.46" width="9.92" height="1.34" fill="#deb87a"/><rect x="1879.8" y="997.68" width="9.92" height="1.34" fill="#deb87a"/><text x="1902.2" y="1000.6" font-size="23.6" fill="#3a2808" textLength="51.7" lengthAdjust="spacingAndGlyphs"  stroke="#3a2808" stroke-width="0.52">Pluck</text><path d="M1877.5 1037.5H2075.5" stroke="#e08c86" stroke-width="6.6" stroke-dasharray="1.5 4.725"/><rect x="1279.3" y="1445.2" width="99.2" height="83.6" fill="#5a5b88" opacity="0.95"/><path d="M1305 1448.2V1528.8M1330 1448.2V1528.8M1354 1448.2V1528.8" stroke="#000" stroke-width="1.8" opacity="0.17"/><rect x="1279.3" y="1418" width="98.3" height="30.2" fill="#47515a" rx="3.5"/><rect x="1279.3" y="1418" width="98.3" height="30.2" fill="url(#tgl)" rx="3.5"/><rect x="1280.2" y="1418.6" width="96.5" height="1.2" fill="#7e858c" rx="1"/><rect x="1279.3" y="1446.8" width="98.3" height="1.4" fill="#394148" rx="1"/><rect x="1376.3" y="1419" width="1.3" height="28.2" fill="#373f46"/><rect x="1282.2" y="1424.4" width="16" height="16.6" fill="#dfe4e7"/><rect x="1282.2" y="1428.24" width="9.92" height="1.34" fill="#47515a"/><rect x="1282.2" y="1432.46" width="9.92" height="1.34" fill="#47515a"/><rect x="1282.2" y="1436.68" width="9.92" height="1.34" fill="#47515a"/><text x="1304.6" y="1439.6" font-size="23.6" fill="#d3d9dd" textLength="69.1" lengthAdjust="spacingAndGlyphs"  stroke="#d3d9dd" stroke-width="0.52">Patt..12</text><path d="M1354.9 1458H1378.8" stroke="#ea8688" stroke-width="16" stroke-dasharray="2.5 2.5"/><path d="M1330 1489.3H1353.9" stroke="#ea8688" stroke-width="16.2" stroke-dasharray="2.5 2.5"/><path d="M1280.2 1521H1329" stroke="#ea8688" stroke-width="16" stroke-dasharray="2.5 2.5"/><rect x="1301.2" y="1513" width="5.5" height="16" fill="#ea8688"/><rect x="1378.9" y="1445.2" width="99.2" height="83.6" fill="#5a5b88" opacity="0.95"/><path d="M1404 1448.2V1528.8M1429 1448.2V1528.8M1454 1448.2V1528.8" stroke="#000" stroke-width="1.8" opacity="0.17"/><rect x="1378.9" y="1418" width="98.3" height="30.2" fill="#47515a" rx="3.5"/><rect x="1378.9" y="1418" width="98.3" height="30.2" fill="url(#tgl)" rx="3.5"/><rect x="1379.8" y="1418.6" width="96.5" height="1.2" fill="#7e858c" rx="1"/><rect x="1378.9" y="1446.8" width="98.3" height="1.4" fill="#394148" rx="1"/><rect x="1475.9" y="1419" width="1.3" height="28.2" fill="#373f46"/><rect x="1381.8" y="1424.4" width="16" height="16.6" fill="#dfe4e7"/><rect x="1381.8" y="1428.24" width="9.92" height="1.34" fill="#47515a"/><rect x="1381.8" y="1432.46" width="9.92" height="1.34" fill="#47515a"/><rect x="1381.8" y="1436.68" width="9.92" height="1.34" fill="#47515a"/><text x="1404.2" y="1439.6" font-size="23.6" fill="#d3d9dd" textLength="69.1" lengthAdjust="spacingAndGlyphs"  stroke="#d3d9dd" stroke-width="0.52">Patt..12</text><path d="M1454.5 1458H1478.4" stroke="#ea8688" stroke-width="16" stroke-dasharray="2.5 2.5"/><path d="M1429.6 1489.3H1453.5" stroke="#ea8688" stroke-width="16.2" stroke-dasharray="2.5 2.5"/><path d="M1379.8 1521H1428.6" stroke="#ea8688" stroke-width="16" stroke-dasharray="2.5 2.5"/><rect x="1400.8" y="1513" width="5.5" height="16" fill="#ea8688"/><rect x="1478.5" y="1445.2" width="99.2" height="83.6" fill="#5a5b88" opacity="0.95"/><path d="M1504 1448.2V1528.8M1529 1448.2V1528.8M1554 1448.2V1528.8" stroke="#000" stroke-width="1.8" opacity="0.17"/><rect x="1478.5" y="1418" width="98.3" height="30.2" fill="#47515a" rx="3.5"/><rect x="1478.5" y="1418" width="98.3" height="30.2" fill="url(#tgl)" rx="3.5"/><rect x="1479.4" y="1418.6" width="96.5" height="1.2" fill="#7e858c" rx="1"/><rect x="1478.5" y="1446.8" width="98.3" height="1.4" fill="#394148" rx="1"/><rect x="1575.5" y="1419" width="1.3" height="28.2" fill="#373f46"/><rect x="1481.4" y="1424.4" width="16" height="16.6" fill="#dfe4e7"/><rect x="1481.4" y="1428.24" width="9.92" height="1.34" fill="#47515a"/><rect x="1481.4" y="1432.46" width="9.92" height="1.34" fill="#47515a"/><rect x="1481.4" y="1436.68" width="9.92" height="1.34" fill="#47515a"/><text x="1503.8" y="1439.6" font-size="23.6" fill="#d3d9dd" textLength="69.1" lengthAdjust="spacingAndGlyphs"  stroke="#d3d9dd" stroke-width="0.52">Patt..12</text><path d="M1554.1 1458H1578" stroke="#ea8688" stroke-width="16" stroke-dasharray="2.5 2.5"/><path d="M1529.2 1489.3H1553.1" stroke="#ea8688" stroke-width="16.2" stroke-dasharray="2.5 2.5"/><path d="M1479.4 1521H1528.2" stroke="#ea8688" stroke-width="16" stroke-dasharray="2.5 2.5"/><rect x="1500.4" y="1513" width="5.5" height="16" fill="#ea8688"/><rect x="1578.1" y="1445.2" width="99.2" height="83.6" fill="#5a5b88" opacity="0.95"/><path d="M1603 1448.2V1528.8M1628 1448.2V1528.8M1653 1448.2V1528.8" stroke="#000" stroke-width="1.8" opacity="0.17"/><rect x="1578.1" y="1418" width="98.3" height="30.2" fill="#47515a" rx="3.5"/><rect x="1578.1" y="1418" width="98.3" height="30.2" fill="url(#tgl)" rx="3.5"/><rect x="1579" y="1418.6" width="96.5" height="1.2" fill="#7e858c" rx="1"/><rect x="1578.1" y="1446.8" width="98.3" height="1.4" fill="#394148" rx="1"/><rect x="1675.1" y="1419" width="1.3" height="28.2" fill="#373f46"/><rect x="1581" y="1424.4" width="16" height="16.6" fill="#dfe4e7"/><rect x="1581" y="1428.24" width="9.92" height="1.34" fill="#47515a"/><rect x="1581" y="1432.46" width="9.92" height="1.34" fill="#47515a"/><rect x="1581" y="1436.68" width="9.92" height="1.34" fill="#47515a"/><text x="1603.4" y="1439.6" font-size="23.6" fill="#d3d9dd" textLength="69.1" lengthAdjust="spacingAndGlyphs"  stroke="#d3d9dd" stroke-width="0.52">Patt..12</text><path d="M1653.7 1458H1677.6" stroke="#ea8688" stroke-width="16" stroke-dasharray="2.5 2.5"/><path d="M1628.8 1489.3H1652.7" stroke="#ea8688" stroke-width="16.2" stroke-dasharray="2.5 2.5"/><path d="M1579 1521H1627.8" stroke="#ea8688" stroke-width="16" stroke-dasharray="2.5 2.5"/><rect x="1600" y="1513" width="5.5" height="16" fill="#ea8688"/><rect x="1677.7" y="1445.2" width="99.2" height="83.6" fill="#5a5b88" opacity="0.95"/><path d="M1703 1448.2V1528.8M1728 1448.2V1528.8M1753 1448.2V1528.8" stroke="#000" stroke-width="1.8" opacity="0.17"/><rect x="1677.7" y="1418" width="98.3" height="30.2" fill="#47515a" rx="3.5"/><rect x="1677.7" y="1418" width="98.3" height="30.2" fill="url(#tgl)" rx="3.5"/><rect x="1678.6" y="1418.6" width="96.5" height="1.2" fill="#7e858c" rx="1"/><rect x="1677.7" y="1446.8" width="98.3" height="1.4" fill="#394148" rx="1"/><rect x="1774.7" y="1419" width="1.3" height="28.2" fill="#373f46"/><rect x="1680.6" y="1424.4" width="16" height="16.6" fill="#dfe4e7"/><rect x="1680.6" y="1428.24" width="9.92" height="1.34" fill="#47515a"/><rect x="1680.6" y="1432.46" width="9.92" height="1.34" fill="#47515a"/><rect x="1680.6" y="1436.68" width="9.92" height="1.34" fill="#47515a"/><text x="1703" y="1439.6" font-size="23.6" fill="#d3d9dd" textLength="69.1" lengthAdjust="spacingAndGlyphs"  stroke="#d3d9dd" stroke-width="0.52">Patt..12</text><path d="M1753.3 1458H1777.2" stroke="#ea8688" stroke-width="16" stroke-dasharray="2.5 2.5"/><path d="M1728.4 1489.3H1752.3" stroke="#ea8688" stroke-width="16.2" stroke-dasharray="2.5 2.5"/><path d="M1678.6 1521H1727.4" stroke="#ea8688" stroke-width="16" stroke-dasharray="2.5 2.5"/><rect x="1699.6" y="1513" width="5.5" height="16" fill="#ea8688"/><rect x="1777.3" y="1445.2" width="99.2" height="83.6" fill="#5a5b88" opacity="0.95"/><path d="M1803 1448.2V1528.8M1828 1448.2V1528.8M1852 1448.2V1528.8" stroke="#000" stroke-width="1.8" opacity="0.17"/><rect x="1777.3" y="1418" width="98.3" height="30.2" fill="#47515a" rx="3.5"/><rect x="1777.3" y="1418" width="98.3" height="30.2" fill="url(#tgl)" rx="3.5"/><rect x="1778.2" y="1418.6" width="96.5" height="1.2" fill="#7e858c" rx="1"/><rect x="1777.3" y="1446.8" width="98.3" height="1.4" fill="#394148" rx="1"/><rect x="1874.3" y="1419" width="1.3" height="28.2" fill="#373f46"/><rect x="1780.2" y="1424.4" width="16" height="16.6" fill="#dfe4e7"/><rect x="1780.2" y="1428.24" width="9.92" height="1.34" fill="#47515a"/><rect x="1780.2" y="1432.46" width="9.92" height="1.34" fill="#47515a"/><rect x="1780.2" y="1436.68" width="9.92" height="1.34" fill="#47515a"/><text x="1802.6" y="1439.6" font-size="23.6" fill="#d3d9dd" textLength="69.1" lengthAdjust="spacingAndGlyphs"  stroke="#d3d9dd" stroke-width="0.52">Patt..12</text><path d="M1852.9 1458H1876.8" stroke="#ea8688" stroke-width="16" stroke-dasharray="2.5 2.5"/><path d="M1828 1489.3H1851.9" stroke="#ea8688" stroke-width="16.2" stroke-dasharray="2.5 2.5"/><path d="M1778.2 1521H1827" stroke="#ea8688" stroke-width="16" stroke-dasharray="2.5 2.5"/><rect x="1799.2" y="1513" width="5.5" height="16" fill="#ea8688"/><rect x="1876.9" y="1445.2" width="99.2" height="83.6" fill="#5a5b88" opacity="0.95"/><path d="M1902 1448.2V1528.8M1927 1448.2V1528.8M1952 1448.2V1528.8" stroke="#000" stroke-width="1.8" opacity="0.17"/><rect x="1876.9" y="1418" width="98.3" height="30.2" fill="#47515a" rx="3.5"/><rect x="1876.9" y="1418" width="98.3" height="30.2" fill="url(#tgl)" rx="3.5"/><rect x="1877.8" y="1418.6" width="96.5" height="1.2" fill="#7e858c" rx="1"/><rect x="1876.9" y="1446.8" width="98.3" height="1.4" fill="#394148" rx="1"/><rect x="1973.9" y="1419" width="1.3" height="28.2" fill="#373f46"/><rect x="1879.8" y="1424.4" width="16" height="16.6" fill="#dfe4e7"/><rect x="1879.8" y="1428.24" width="9.92" height="1.34" fill="#47515a"/><rect x="1879.8" y="1432.46" width="9.92" height="1.34" fill="#47515a"/><rect x="1879.8" y="1436.68" width="9.92" height="1.34" fill="#47515a"/><text x="1902.2" y="1439.6" font-size="23.6" fill="#d3d9dd" textLength="69.1" lengthAdjust="spacingAndGlyphs"  stroke="#d3d9dd" stroke-width="0.52">Patt..12</text><path d="M1952.5 1458H1976.4" stroke="#ea8688" stroke-width="16" stroke-dasharray="2.5 2.5"/><path d="M1927.6 1489.3H1951.5" stroke="#ea8688" stroke-width="16.2" stroke-dasharray="2.5 2.5"/><path d="M1877.8 1521H1926.6" stroke="#ea8688" stroke-width="16" stroke-dasharray="2.5 2.5"/><rect x="1898.8" y="1513" width="5.5" height="16" fill="#ea8688"/><rect x="1976.5" y="1445.2" width="99.2" height="83.6" fill="#5a5b88" opacity="0.95"/><path d="M2002 1448.2V1528.8M2027 1448.2V1528.8M2052 1448.2V1528.8" stroke="#000" stroke-width="1.8" opacity="0.17"/><rect x="1976.5" y="1418" width="98.3" height="30.2" fill="#47515a" rx="3.5"/><rect x="1976.5" y="1418" width="98.3" height="30.2" fill="url(#tgl)" rx="3.5"/><rect x="1977.4" y="1418.6" width="96.5" height="1.2" fill="#7e858c" rx="1"/><rect x="1976.5" y="1446.8" width="98.3" height="1.4" fill="#394148" rx="1"/><rect x="2073.5" y="1419" width="1.3" height="28.2" fill="#373f46"/><rect x="1979.4" y="1424.4" width="16" height="16.6" fill="#dfe4e7"/><rect x="1979.4" y="1428.24" width="9.92" height="1.34" fill="#47515a"/><rect x="1979.4" y="1432.46" width="9.92" height="1.34" fill="#47515a"/><rect x="1979.4" y="1436.68" width="9.92" height="1.34" fill="#47515a"/><text x="2001.8" y="1439.6" font-size="23.6" fill="#d3d9dd" textLength="69.1" lengthAdjust="spacingAndGlyphs"  stroke="#d3d9dd" stroke-width="0.52">Patt..12</text><path d="M2052.1 1458H2076" stroke="#ea8688" stroke-width="16" stroke-dasharray="2.5 2.5"/><path d="M2027.2 1489.3H2051.1" stroke="#ea8688" stroke-width="16.2" stroke-dasharray="2.5 2.5"/><path d="M1977.4 1521H2026.2" stroke="#ea8688" stroke-width="16" stroke-dasharray="2.5 2.5"/><rect x="1998.4" y="1513" width="5.5" height="16" fill="#ea8688"/><rect x="2275.3" y="1445.2" width="99.2" height="83.6" fill="#5a5b88" opacity="0.95"/><path d="M2301 1448.2V1528.8M2326 1448.2V1528.8M2350 1448.2V1528.8" stroke="#000" stroke-width="1.8" opacity="0.17"/><rect x="2275.3" y="1418" width="98.3" height="30.2" fill="#47515a" rx="3.5"/><rect x="2275.3" y="1418" width="98.3" height="30.2" fill="url(#tgl)" rx="3.5"/><rect x="2276.2" y="1418.6" width="96.5" height="1.2" fill="#7e858c" rx="1"/><rect x="2275.3" y="1446.8" width="98.3" height="1.4" fill="#394148" rx="1"/><rect x="2372.3" y="1419" width="1.3" height="28.2" fill="#373f46"/><rect x="2278.2" y="1424.4" width="16" height="16.6" fill="#dfe4e7"/><rect x="2278.2" y="1428.24" width="9.92" height="1.34" fill="#47515a"/><rect x="2278.2" y="1432.46" width="9.92" height="1.34" fill="#47515a"/><rect x="2278.2" y="1436.68" width="9.92" height="1.34" fill="#47515a"/><text x="2300.6" y="1439.6" font-size="23.6" fill="#d3d9dd" textLength="69.1" lengthAdjust="spacingAndGlyphs"  stroke="#d3d9dd" stroke-width="0.52">Patt..12</text><path d="M2350.9 1458H2374.8" stroke="#ea8688" stroke-width="16" stroke-dasharray="2.5 2.5"/><path d="M2326 1489.3H2349.9" stroke="#ea8688" stroke-width="16.2" stroke-dasharray="2.5 2.5"/><path d="M2276.2 1521H2325" stroke="#ea8688" stroke-width="16" stroke-dasharray="2.5 2.5"/><rect x="2297.2" y="1513" width="5.5" height="16" fill="#ea8688"/><rect x="2374.9" y="1445.2" width="99.2" height="83.6" fill="#5a5b88" opacity="0.95"/><path d="M2400 1448.2V1528.8M2425 1448.2V1528.8M2450 1448.2V1528.8" stroke="#000" stroke-width="1.8" opacity="0.17"/><rect x="2374.9" y="1418" width="98.3" height="30.2" fill="#47515a" rx="3.5"/><rect x="2374.9" y="1418" width="98.3" height="30.2" fill="url(#tgl)" rx="3.5"/><rect x="2375.8" y="1418.6" width="96.5" height="1.2" fill="#7e858c" rx="1"/><rect x="2374.9" y="1446.8" width="98.3" height="1.4" fill="#394148" rx="1"/><rect x="2471.9" y="1419" width="1.3" height="28.2" fill="#373f46"/><rect x="2377.8" y="1424.4" width="16" height="16.6" fill="#dfe4e7"/><rect x="2377.8" y="1428.24" width="9.92" height="1.34" fill="#47515a"/><rect x="2377.8" y="1432.46" width="9.92" height="1.34" fill="#47515a"/><rect x="2377.8" y="1436.68" width="9.92" height="1.34" fill="#47515a"/><text x="2400.2" y="1439.6" font-size="23.6" fill="#d3d9dd" textLength="69.1" lengthAdjust="spacingAndGlyphs"  stroke="#d3d9dd" stroke-width="0.52">Patt..12</text><path d="M2450.5 1458H2474.4" stroke="#ea8688" stroke-width="16" stroke-dasharray="2.5 2.5"/><path d="M2425.6 1489.3H2449.5" stroke="#ea8688" stroke-width="16.2" stroke-dasharray="2.5 2.5"/><path d="M2375.8 1521H2424.6" stroke="#ea8688" stroke-width="16" stroke-dasharray="2.5 2.5"/><rect x="2396.8" y="1513" width="5.5" height="16" fill="#ea8688"/><rect x="2474.5" y="1445.2" width="99.2" height="83.6" fill="#5a5b88" opacity="0.95"/><path d="M2500 1448.2V1528.8M2525 1448.2V1528.8M2550 1448.2V1528.8" stroke="#000" stroke-width="1.8" opacity="0.17"/><rect x="2474.5" y="1418" width="98.3" height="30.2" fill="#47515a" rx="3.5"/><rect x="2474.5" y="1418" width="98.3" height="30.2" fill="url(#tgl)" rx="3.5"/><rect x="2475.4" y="1418.6" width="96.5" height="1.2" fill="#7e858c" rx="1"/><rect x="2474.5" y="1446.8" width="98.3" height="1.4" fill="#394148" rx="1"/><rect x="2571.5" y="1419" width="1.3" height="28.2" fill="#373f46"/><rect x="2477.4" y="1424.4" width="16" height="16.6" fill="#dfe4e7"/><rect x="2477.4" y="1428.24" width="9.92" height="1.34" fill="#47515a"/><rect x="2477.4" y="1432.46" width="9.92" height="1.34" fill="#47515a"/><rect x="2477.4" y="1436.68" width="9.92" height="1.34" fill="#47515a"/><text x="2499.8" y="1439.6" font-size="23.6" fill="#d3d9dd" textLength="69.1" lengthAdjust="spacingAndGlyphs"  stroke="#d3d9dd" stroke-width="0.52">Patt..12</text><path d="M2550.1 1458H2574" stroke="#ea8688" stroke-width="16" stroke-dasharray="2.5 2.5"/><path d="M2525.2 1489.3H2549.1" stroke="#ea8688" stroke-width="16.2" stroke-dasharray="2.5 2.5"/><path d="M2475.4 1521H2524.2" stroke="#ea8688" stroke-width="16" stroke-dasharray="2.5 2.5"/><rect x="2496.4" y="1513" width="5.5" height="16" fill="#ea8688"/><rect x="2574.1" y="1445.2" width="99.2" height="83.6" fill="#5a5b88" opacity="0.95"/><path d="M2599 1448.2V1528.8M2624 1448.2V1528.8M2649 1448.2V1528.8" stroke="#000" stroke-width="1.8" opacity="0.17"/><rect x="2574.1" y="1418" width="98.3" height="30.2" fill="#47515a" rx="3.5"/><rect x="2574.1" y="1418" width="98.3" height="30.2" fill="url(#tgl)" rx="3.5"/><rect x="2575" y="1418.6" width="96.5" height="1.2" fill="#7e858c" rx="1"/><rect x="2574.1" y="1446.8" width="98.3" height="1.4" fill="#394148" rx="1"/><rect x="2671.1" y="1419" width="1.3" height="28.2" fill="#373f46"/><rect x="2577" y="1424.4" width="16" height="16.6" fill="#dfe4e7"/><rect x="2577" y="1428.24" width="9.92" height="1.34" fill="#47515a"/><rect x="2577" y="1432.46" width="9.92" height="1.34" fill="#47515a"/><rect x="2577" y="1436.68" width="9.92" height="1.34" fill="#47515a"/><text x="2599.4" y="1439.6" font-size="23.6" fill="#d3d9dd" textLength="69.1" lengthAdjust="spacingAndGlyphs"  stroke="#d3d9dd" stroke-width="0.52">Patt..12</text><path d="M2649.7 1458H2673.6" stroke="#ea8688" stroke-width="16" stroke-dasharray="2.5 2.5"/><path d="M2624.8 1489.3H2648.7" stroke="#ea8688" stroke-width="16.2" stroke-dasharray="2.5 2.5"/><path d="M2575 1521H2623.8" stroke="#ea8688" stroke-width="16" stroke-dasharray="2.5 2.5"/><rect x="2596" y="1513" width="5.5" height="16" fill="#ea8688"/><rect x="681.7" y="1557.5" width="99.2" height="83.1" fill="#74815f" opacity="0.95"/><path d="M707 1560.5V1640.6M732 1560.5V1640.6M757 1560.5V1640.6" stroke="#000" stroke-width="1.8" opacity="0.17"/><rect x="681.7" y="1530.7" width="98.3" height="29.8" fill="#47515a" rx="3.5"/><rect x="681.7" y="1530.7" width="98.3" height="29.8" fill="url(#tgl)" rx="3.5"/><rect x="682.6" y="1531.3" width="96.5" height="1.2" fill="#7e858c" rx="1"/><rect x="681.7" y="1559.1" width="98.3" height="1.4" fill="#394148" rx="1"/><rect x="778.7" y="1531.7" width="1.3" height="27.8" fill="#373f46"/><rect x="684.6" y="1537.1" width="16" height="16.6" fill="#dfe4e7"/><rect x="684.6" y="1540.94" width="9.92" height="1.34" fill="#47515a"/><rect x="684.6" y="1545.16" width="9.92" height="1.34" fill="#47515a"/><rect x="684.6" y="1549.38" width="9.92" height="1.34" fill="#47515a"/><text x="707" y="1552.3" font-size="23.6" fill="#d3d9dd" textLength="70" lengthAdjust="spacingAndGlyphs"  stroke="#d3d9dd" stroke-width="0.52">Patt..16</text><rect x="732.7" y="1593.6" width="23.5" height="15.8" fill="#ea8688"/><rect x="757.6" y="1562.4" width="23.5" height="15.6" fill="#ea8688"/><rect x="682.6" y="1625" width="48.6" height="12" fill="#ea8688"/><rect x="781.3" y="1557.5" width="99.2" height="83.1" fill="#74815f" opacity="0.95"/><path d="M807 1560.5V1640.6M832 1560.5V1640.6M856 1560.5V1640.6" stroke="#000" stroke-width="1.8" opacity="0.17"/><rect x="781.3" y="1530.7" width="98.3" height="29.8" fill="#47515a" rx="3.5"/><rect x="781.3" y="1530.7" width="98.3" height="29.8" fill="url(#tgl)" rx="3.5"/><rect x="782.2" y="1531.3" width="96.5" height="1.2" fill="#7e858c" rx="1"/><rect x="781.3" y="1559.1" width="98.3" height="1.4" fill="#394148" rx="1"/><rect x="878.3" y="1531.7" width="1.3" height="27.8" fill="#373f46"/><rect x="784.2" y="1537.1" width="16" height="16.6" fill="#dfe4e7"/><rect x="784.2" y="1540.94" width="9.92" height="1.34" fill="#47515a"/><rect x="784.2" y="1545.16" width="9.92" height="1.34" fill="#47515a"/><rect x="784.2" y="1549.38" width="9.92" height="1.34" fill="#47515a"/><text x="806.6" y="1552.3" font-size="23.6" fill="#d3d9dd" textLength="70" lengthAdjust="spacingAndGlyphs"  stroke="#d3d9dd" stroke-width="0.52">Patt..16</text><rect x="832.3" y="1593.6" width="23.5" height="15.8" fill="#ea8688"/><rect x="857.2" y="1562.4" width="23.5" height="15.6" fill="#ea8688"/><rect x="782.2" y="1625" width="48.6" height="12" fill="#ea8688"/><rect x="880.9" y="1557.5" width="99.2" height="83.1" fill="#74815f" opacity="0.95"/><path d="M906 1560.5V1640.6M931 1560.5V1640.6M956 1560.5V1640.6" stroke="#000" stroke-width="1.8" opacity="0.17"/><rect x="880.9" y="1530.7" width="98.3" height="29.8" fill="#47515a" rx="3.5"/><rect x="880.9" y="1530.7" width="98.3" height="29.8" fill="url(#tgl)" rx="3.5"/><rect x="881.8" y="1531.3" width="96.5" height="1.2" fill="#7e858c" rx="1"/><rect x="880.9" y="1559.1" width="98.3" height="1.4" fill="#394148" rx="1"/><rect x="977.9" y="1531.7" width="1.3" height="27.8" fill="#373f46"/><rect x="883.8" y="1537.1" width="16" height="16.6" fill="#dfe4e7"/><rect x="883.8" y="1540.94" width="9.92" height="1.34" fill="#47515a"/><rect x="883.8" y="1545.16" width="9.92" height="1.34" fill="#47515a"/><rect x="883.8" y="1549.38" width="9.92" height="1.34" fill="#47515a"/><text x="906.2" y="1552.3" font-size="23.6" fill="#d3d9dd" textLength="70" lengthAdjust="spacingAndGlyphs"  stroke="#d3d9dd" stroke-width="0.52">Patt..16</text><rect x="931.9" y="1593.6" width="23.5" height="15.8" fill="#ea8688"/><rect x="956.8" y="1562.4" width="23.5" height="15.6" fill="#ea8688"/><rect x="881.8" y="1625" width="48.6" height="12" fill="#ea8688"/><rect x="980.5" y="1557.5" width="99.2" height="83.1" fill="#74815f" opacity="0.95"/><path d="M1006 1560.5V1640.6M1031 1560.5V1640.6M1056 1560.5V1640.6" stroke="#000" stroke-width="1.8" opacity="0.17"/><rect x="980.5" y="1530.7" width="98.3" height="29.8" fill="#47515a" rx="3.5"/><rect x="980.5" y="1530.7" width="98.3" height="29.8" fill="url(#tgl)" rx="3.5"/><rect x="981.4" y="1531.3" width="96.5" height="1.2" fill="#7e858c" rx="1"/><rect x="980.5" y="1559.1" width="98.3" height="1.4" fill="#394148" rx="1"/><rect x="1077.5" y="1531.7" width="1.3" height="27.8" fill="#373f46"/><rect x="983.4" y="1537.1" width="16" height="16.6" fill="#dfe4e7"/><rect x="983.4" y="1540.94" width="9.92" height="1.34" fill="#47515a"/><rect x="983.4" y="1545.16" width="9.92" height="1.34" fill="#47515a"/><rect x="983.4" y="1549.38" width="9.92" height="1.34" fill="#47515a"/><text x="1005.8" y="1552.3" font-size="23.6" fill="#d3d9dd" textLength="70" lengthAdjust="spacingAndGlyphs"  stroke="#d3d9dd" stroke-width="0.52">Patt..16</text><rect x="1031.5" y="1593.6" width="23.5" height="15.8" fill="#ea8688"/><rect x="1056.4" y="1562.4" width="23.5" height="15.6" fill="#ea8688"/><rect x="981.4" y="1625" width="48.6" height="12" fill="#ea8688"/><rect x="1080.1" y="1557.5" width="99.2" height="83.1" fill="#74815f" opacity="0.95"/><path d="M1105 1560.5V1640.6M1130 1560.5V1640.6M1155 1560.5V1640.6" stroke="#000" stroke-width="1.8" opacity="0.17"/><rect x="1080.1" y="1530.7" width="98.3" height="29.8" fill="#47515a" rx="3.5"/><rect x="1080.1" y="1530.7" width="98.3" height="29.8" fill="url(#tgl)" rx="3.5"/><rect x="1081" y="1531.3" width="96.5" height="1.2" fill="#7e858c" rx="1"/><rect x="1080.1" y="1559.1" width="98.3" height="1.4" fill="#394148" rx="1"/><rect x="1177.1" y="1531.7" width="1.3" height="27.8" fill="#373f46"/><rect x="1083" y="1537.1" width="16" height="16.6" fill="#dfe4e7"/><rect x="1083" y="1540.94" width="9.92" height="1.34" fill="#47515a"/><rect x="1083" y="1545.16" width="9.92" height="1.34" fill="#47515a"/><rect x="1083" y="1549.38" width="9.92" height="1.34" fill="#47515a"/><text x="1105.4" y="1552.3" font-size="23.6" fill="#d3d9dd" textLength="70" lengthAdjust="spacingAndGlyphs"  stroke="#d3d9dd" stroke-width="0.52">Patt..16</text><rect x="1131.1" y="1593.6" width="23.5" height="15.8" fill="#ea8688"/><rect x="1156" y="1562.4" width="23.5" height="15.6" fill="#ea8688"/><rect x="1081" y="1625" width="48.6" height="12" fill="#ea8688"/><rect x="2076.1" y="1557.5" width="99.2" height="83.1" fill="#74815f" opacity="0.95"/><path d="M2101 1560.5V1640.6M2126 1560.5V1640.6M2151 1560.5V1640.6" stroke="#000" stroke-width="1.8" opacity="0.17"/><rect x="2076.1" y="1530.7" width="98.3" height="29.8" fill="#47515a" rx="3.5"/><rect x="2076.1" y="1530.7" width="98.3" height="29.8" fill="url(#tgl)" rx="3.5"/><rect x="2077" y="1531.3" width="96.5" height="1.2" fill="#7e858c" rx="1"/><rect x="2076.1" y="1559.1" width="98.3" height="1.4" fill="#394148" rx="1"/><rect x="2173.1" y="1531.7" width="1.3" height="27.8" fill="#373f46"/><rect x="2079" y="1537.1" width="16" height="16.6" fill="#dfe4e7"/><rect x="2079" y="1540.94" width="9.92" height="1.34" fill="#47515a"/><rect x="2079" y="1545.16" width="9.92" height="1.34" fill="#47515a"/><rect x="2079" y="1549.38" width="9.92" height="1.34" fill="#47515a"/><text x="2101.4" y="1552.3" font-size="23.6" fill="#d3d9dd" textLength="70" lengthAdjust="spacingAndGlyphs"  stroke="#d3d9dd" stroke-width="0.52">Patt..16</text><rect x="2127.1" y="1593.6" width="23.5" height="15.8" fill="#ea8688"/><rect x="2152" y="1562.4" width="23.5" height="15.6" fill="#ea8688"/><rect x="2077" y="1625" width="48.6" height="12" fill="#ea8688"/><rect x="1179.7" y="1557.5" width="74.3" height="83.1" fill="#74815f" opacity="0.95"/><path d="M1205 1560.5V1640.6M1230 1560.5V1640.6" stroke="#000" stroke-width="1.8" opacity="0.17"/><rect x="1179.7" y="1530.7" width="73.4" height="29.8" fill="#47515a" rx="3.5"/><rect x="1179.7" y="1530.7" width="73.4" height="29.8" fill="url(#tgl)" rx="3.5"/><rect x="1180.6" y="1531.3" width="71.6" height="1.2" fill="#7e858c" rx="1"/><rect x="1179.7" y="1559.1" width="73.4" height="1.4" fill="#394148" rx="1"/><rect x="1251.8" y="1531.7" width="1.3" height="27.8" fill="#373f46"/><rect x="1182.6" y="1537.1" width="16" height="16.6" fill="#dfe4e7"/><rect x="1182.6" y="1540.94" width="9.92" height="1.34" fill="#47515a"/><rect x="1182.6" y="1545.16" width="9.92" height="1.34" fill="#47515a"/><rect x="1182.6" y="1549.38" width="9.92" height="1.34" fill="#47515a"/><text x="1205" y="1552.3" font-size="23.6" fill="#d3d9dd" textLength="45" lengthAdjust="spacingAndGlyphs"  stroke="#d3d9dd" stroke-width="0.52">Pa..6</text><rect x="1230.7" y="1593.6" width="23.5" height="15.8" fill="#ea8688"/><rect x="1180.6" y="1625" width="48.6" height="12" fill="#ea8688"/><rect x="2175.7" y="1557.5" width="74.3" height="83.1" fill="#74815f" opacity="0.95"/><path d="M2201 1560.5V1640.6M2226 1560.5V1640.6" stroke="#000" stroke-width="1.8" opacity="0.17"/><rect x="2175.7" y="1530.7" width="73.4" height="29.8" fill="#47515a" rx="3.5"/><rect x="2175.7" y="1530.7" width="73.4" height="29.8" fill="url(#tgl)" rx="3.5"/><rect x="2176.6" y="1531.3" width="71.6" height="1.2" fill="#7e858c" rx="1"/><rect x="2175.7" y="1559.1" width="73.4" height="1.4" fill="#394148" rx="1"/><rect x="2247.8" y="1531.7" width="1.3" height="27.8" fill="#373f46"/><rect x="2178.6" y="1537.1" width="16" height="16.6" fill="#dfe4e7"/><rect x="2178.6" y="1540.94" width="9.92" height="1.34" fill="#47515a"/><rect x="2178.6" y="1545.16" width="9.92" height="1.34" fill="#47515a"/><rect x="2178.6" y="1549.38" width="9.92" height="1.34" fill="#47515a"/><text x="2201" y="1552.3" font-size="23.6" fill="#d3d9dd" textLength="45" lengthAdjust="spacingAndGlyphs"  stroke="#d3d9dd" stroke-width="0.52">Pa..6</text><rect x="2226.7" y="1593.6" width="23.5" height="15.8" fill="#ea8688"/><rect x="2176.6" y="1625" width="48.6" height="12" fill="#ea8688"/><g><rect x="656.38" y="206.3" width="225.23" height="6.6" fill="#86e4e4" rx="2.4"/><rect x="657.38" y="207" width="223.23" height="1.4" fill="#b4f2f0" rx="0.7"/><rect x="883.79" y="206.3" width="1.91" height="6.6" fill="#86e4e4" rx="0.96"/><rect x="887.88" y="206.3" width="66.07" height="6.6" fill="#86e4e4" rx="2.4"/><rect x="888.88" y="207" width="64.07" height="1.4" fill="#b4f2f0" rx="0.7"/><rect x="956.13" y="206.3" width="14.74" height="6.6" fill="#86e4e4" rx="2.4"/><rect x="957.13" y="207" width="12.74" height="1.4" fill="#b4f2f0" rx="0.7"/><rect x="973.06" y="206.3" width="6.01" height="6.6" fill="#86e4e4" rx="2.4"/><rect x="974.06" y="207" width="4.01" height="1.4" fill="#b4f2f0" rx="0.7"/><rect x="981.25" y="206.3" width="23.21" height="6.6" fill="#86e4e4" rx="2.4"/><rect x="982.25" y="207" width="21.21" height="1.4" fill="#b4f2f0" rx="0.7"/><rect x="1006.37" y="206.3" width="47.78" height="6.6" fill="#86e4e4" rx="2.4"/><rect x="1007.37" y="207" width="45.78" height="1.4" fill="#b4f2f0" rx="0.7"/><rect x="1055.78" y="206.3" width="5.46" height="6.6" fill="#86e4e4" rx="2.4"/><rect x="1056.78" y="207" width="3.46" height="1.4" fill="#b4f2f0" rx="0.7"/><rect x="1063.42" y="206.3" width="15.56" height="6.6" fill="#86e4e4" rx="2.4"/><rect x="1064.42" y="207" width="13.56" height="1.4" fill="#b4f2f0" rx="0.7"/><rect x="1080.35" y="206.3" width="5.19" height="6.6" fill="#86e4e4" rx="2.4"/><rect x="1081.35" y="207" width="3.19" height="1.4" fill="#b4f2f0" rx="0.7"/><rect x="1087.17" y="206.3" width="6.01" height="6.6" fill="#86e4e4" rx="2.4"/><rect x="1088.17" y="207" width="4.01" height="1.4" fill="#b4f2f0" rx="0.7"/><rect x="1104.65" y="206.3" width="5.46" height="6.6" fill="#86e4e4" rx="2.4"/><rect x="1105.65" y="207" width="3.46" height="1.4" fill="#b4f2f0" rx="0.7"/><rect x="1111.74" y="206.3" width="5.46" height="6.6" fill="#86e4e4" rx="2.4"/><rect x="1112.74" y="207" width="3.46" height="1.4" fill="#b4f2f0" rx="0.7"/><rect x="1123.21" y="206.3" width="4.91" height="6.6" fill="#86e4e4" rx="2.4"/><rect x="1124.21" y="207" width="2.91" height="1.4" fill="#b4f2f0" rx="0.7"/><rect x="1130.04" y="206.3" width="5.46" height="6.6" fill="#86e4e4" rx="2.4"/><rect x="1131.04" y="207" width="3.46" height="1.4" fill="#b4f2f0" rx="0.7"/><rect x="1136.86" y="206.3" width="5.46" height="6.6" fill="#86e4e4" rx="2.4"/><rect x="1137.86" y="207" width="3.46" height="1.4" fill="#b4f2f0" rx="0.7"/><rect x="1154.61" y="206.3" width="4.91" height="6.6" fill="#86e4e4" rx="2.4"/><rect x="1155.61" y="207" width="2.91" height="1.4" fill="#b4f2f0" rx="0.7"/><rect x="1160.88" y="206.3" width="6.01" height="6.6" fill="#86e4e4" rx="2.4"/><rect x="1161.88" y="207" width="4.01" height="1.4" fill="#b4f2f0" rx="0.7"/><rect x="1173.72" y="206.3" width="4.64" height="6.6" fill="#86e4e4" rx="2.32"/><rect x="1174.72" y="207" width="2.64" height="1.4" fill="#b4f2f0" rx="0.7"/><rect x="1179.99" y="206.3" width="4.64" height="6.6" fill="#86e4e4" rx="2.32"/><rect x="1180.99" y="207" width="2.64" height="1.4" fill="#b4f2f0" rx="0.7"/><rect x="1186.27" y="206.3" width="4.64" height="6.6" fill="#86e4e4" rx="2.32"/><rect x="1187.27" y="207" width="2.64" height="1.4" fill="#b4f2f0" rx="0.7"/><rect x="1192.55" y="206.3" width="4.64" height="6.6" fill="#86e4e4" rx="2.32"/><rect x="1193.55" y="207" width="2.64" height="1.4" fill="#b4f2f0" rx="0.7"/><rect x="1198.83" y="206.3" width="4.64" height="6.6" fill="#86e4e4" rx="2.32"/><rect x="1199.83" y="207" width="2.64" height="1.4" fill="#b4f2f0" rx="0.7"/><rect x="1205.11" y="206.3" width="4.64" height="6.6" fill="#86e4e4" rx="2.32"/><rect x="1206.11" y="207" width="2.64" height="1.4" fill="#b4f2f0" rx="0.7"/><rect x="1211.39" y="206.3" width="4.64" height="6.6" fill="#86e4e4" rx="2.32"/><rect x="1212.39" y="207" width="2.64" height="1.4" fill="#b4f2f0" rx="0.7"/><rect x="1217.67" y="206.3" width="4.64" height="6.6" fill="#86e4e4" rx="2.32"/><rect x="1218.67" y="207" width="2.64" height="1.4" fill="#b4f2f0" rx="0.7"/><rect x="1223.95" y="206.3" width="4.64" height="6.6" fill="#86e4e4" rx="2.32"/><rect x="1224.95" y="207" width="2.64" height="1.4" fill="#b4f2f0" rx="0.7"/><rect x="1229.68" y="206.3" width="1.2" height="6.6" fill="#86e4e4" rx="0.6"/><rect x="1231.86" y="206.3" width="1.2" height="6.6" fill="#86e4e4" rx="0.6"/><rect x="1234.05" y="206.3" width="1.2" height="6.6" fill="#86e4e4" rx="0.6"/><rect x="1236.23" y="206.3" width="1.2" height="6.6" fill="#86e4e4" rx="0.6"/><rect x="1238.42" y="206.3" width="1.2" height="6.6" fill="#86e4e4" rx="0.6"/><rect x="1240.6" y="206.3" width="13.1" height="6.6" fill="#86e4e4" rx="2.4"/><rect x="1241.6" y="207" width="11.1" height="1.4" fill="#b4f2f0" rx="0.7"/><rect x="1254.8" y="206.3" width="15.29" height="6.6" fill="#86e4e4" rx="2.4"/><rect x="1255.8" y="207" width="13.29" height="1.4" fill="#b4f2f0" rx="0.7"/><rect x="1272" y="206.3" width="6.28" height="6.6" fill="#86e4e4" rx="2.4"/><rect x="1273" y="207" width="4.28" height="1.4" fill="#b4f2f0" rx="0.7"/><rect x="1288.65" y="206.3" width="1.37" height="6.6" fill="#86e4e4" rx="0.68"/><rect x="1288.56" y="206.3" width="1.37" height="6.6" fill="#86e4e4" rx="0.68"/><rect x="1338.52" y="206.3" width="1.37" height="6.6" fill="#86e4e4" rx="0.68"/><rect x="1388.76" y="206.3" width="1.37" height="6.6" fill="#86e4e4" rx="0.68"/><rect x="1453.46" y="206.3" width="15.83" height="6.6" fill="#86e4e4" rx="2.4"/><rect x="1454.46" y="207" width="13.83" height="1.4" fill="#b4f2f0" rx="0.7"/><rect x="1470.93" y="206.3" width="6.01" height="6.6" fill="#86e4e4" rx="2.4"/><rect x="1471.93" y="207" width="4.01" height="1.4" fill="#b4f2f0" rx="0.7"/><rect x="1478.57" y="206.3" width="4.91" height="6.6" fill="#86e4e4" rx="2.4"/><rect x="1479.57" y="207" width="2.91" height="1.4" fill="#b4f2f0" rx="0.7"/><rect x="1485.12" y="206.3" width="6.55" height="6.6" fill="#86e4e4" rx="2.4"/><rect x="1486.12" y="207" width="4.55" height="1.4" fill="#b4f2f0" rx="0.7"/><rect x="1503.42" y="206.3" width="5.46" height="6.6" fill="#86e4e4" rx="2.4"/><rect x="1504.42" y="207" width="3.46" height="1.4" fill="#b4f2f0" rx="0.7"/><rect x="1510.24" y="206.3" width="6.28" height="6.6" fill="#86e4e4" rx="2.4"/><rect x="1511.24" y="207" width="4.28" height="1.4" fill="#b4f2f0" rx="0.7"/><rect x="1521.16" y="206.3" width="6.01" height="6.6" fill="#86e4e4" rx="2.4"/><rect x="1522.16" y="207" width="4.01" height="1.4" fill="#b4f2f0" rx="0.7"/><rect x="1528.8" y="206.3" width="4.64" height="6.6" fill="#86e4e4" rx="2.32"/><rect x="1529.8" y="207" width="2.64" height="1.4" fill="#b4f2f0" rx="0.7"/><rect x="1534.81" y="206.3" width="6.83" height="6.6" fill="#86e4e4" rx="2.4"/><rect x="1535.81" y="207" width="4.83" height="1.4" fill="#b4f2f0" rx="0.7"/><rect x="1553.37" y="206.3" width="6.01" height="6.6" fill="#86e4e4" rx="2.4"/><rect x="1554.37" y="207" width="4.01" height="1.4" fill="#b4f2f0" rx="0.7"/><rect x="1560.75" y="206.3" width="15.56" height="6.6" fill="#86e4e4" rx="2.4"/><rect x="1561.75" y="207" width="13.56" height="1.4" fill="#b4f2f0" rx="0.7"/><rect x="1577.94" y="206.3" width="5.46" height="6.6" fill="#86e4e4" rx="2.4"/><rect x="1578.94" y="207" width="3.46" height="1.4" fill="#b4f2f0" rx="0.7"/><rect x="1584.77" y="206.3" width="6.01" height="6.6" fill="#86e4e4" rx="2.4"/><rect x="1585.77" y="207" width="4.01" height="1.4" fill="#b4f2f0" rx="0.7"/><rect x="1602.51" y="206.3" width="5.46" height="6.6" fill="#86e4e4" rx="2.4"/><rect x="1603.51" y="207" width="3.46" height="1.4" fill="#b4f2f0" rx="0.7"/><rect x="1609.34" y="206.3" width="6.28" height="6.6" fill="#86e4e4" rx="2.4"/><rect x="1610.34" y="207" width="4.28" height="1.4" fill="#b4f2f0" rx="0.7"/><rect x="1621.35" y="206.3" width="5.46" height="6.6" fill="#86e4e4" rx="2.4"/><rect x="1622.35" y="207" width="3.46" height="1.4" fill="#b4f2f0" rx="0.7"/><rect x="1628.18" y="206.3" width="4.91" height="6.6" fill="#86e4e4" rx="2.4"/><rect x="1629.18" y="207" width="2.91" height="1.4" fill="#b4f2f0" rx="0.7"/><rect x="1634.46" y="206.3" width="6.01" height="6.6" fill="#86e4e4" rx="2.4"/><rect x="1635.46" y="207" width="4.01" height="1.4" fill="#b4f2f0" rx="0.7"/><rect x="1652.2" y="206.3" width="15.83" height="6.6" fill="#86e4e4" rx="2.4"/><rect x="1653.2" y="207" width="13.83" height="1.4" fill="#b4f2f0" rx="0.7"/><rect x="1669.95" y="206.3" width="6.28" height="6.6" fill="#86e4e4" rx="2.4"/><rect x="1670.95" y="207" width="4.28" height="1.4" fill="#b4f2f0" rx="0.7"/><rect x="1683.05" y="206.3" width="195.2" height="6.6" fill="#86e4e4" rx="2.4"/><rect x="1684.05" y="207" width="193.2" height="1.4" fill="#b4f2f0" rx="0.7"/><rect x="1879.61" y="206.3" width="1.37" height="6.6" fill="#86e4e4" rx="0.68"/><rect x="1882.34" y="206.3" width="67.43" height="6.6" fill="#86e4e4" rx="2.4"/><rect x="1883.34" y="207" width="65.43" height="1.4" fill="#b4f2f0" rx="0.7"/><rect x="1951.68" y="206.3" width="17.2" height="6.6" fill="#86e4e4" rx="2.4"/><rect x="1952.68" y="207" width="15.2" height="1.4" fill="#b4f2f0" rx="0.7"/><rect x="1952.01" y="206.3" width="15.29" height="6.6" fill="#86e4e4" rx="2.4"/><rect x="1953.01" y="207" width="13.29" height="1.4" fill="#b4f2f0" rx="0.7"/><rect x="1968.94" y="206.3" width="6.01" height="6.6" fill="#86e4e4" rx="2.4"/><rect x="1969.94" y="207" width="4.01" height="1.4" fill="#b4f2f0" rx="0.7"/><rect x="1976.86" y="206.3" width="72.35" height="6.6" fill="#86e4e4" rx="2.4"/><rect x="1977.86" y="207" width="70.35" height="1.4" fill="#b4f2f0" rx="0.7"/><rect x="2051.11" y="206.3" width="5.73" height="6.6" fill="#86e4e4" rx="2.4"/><rect x="2052.11" y="207" width="3.73" height="1.4" fill="#b4f2f0" rx="0.7"/><rect x="2058.76" y="206.3" width="15.56" height="6.6" fill="#86e4e4" rx="2.4"/><rect x="2059.76" y="207" width="13.56" height="1.4" fill="#b4f2f0" rx="0.7"/><rect x="2075.68" y="206.3" width="5.46" height="6.6" fill="#86e4e4" rx="2.4"/><rect x="2076.68" y="207" width="3.46" height="1.4" fill="#b4f2f0" rx="0.7"/><rect x="2082.78" y="206.3" width="6.01" height="6.6" fill="#86e4e4" rx="2.4"/><rect x="2083.78" y="207" width="4.01" height="1.4" fill="#b4f2f0" rx="0.7"/><rect x="2101.07" y="206.3" width="4.91" height="6.6" fill="#86e4e4" rx="2.4"/><rect x="2102.07" y="207" width="2.91" height="1.4" fill="#b4f2f0" rx="0.7"/><rect x="2107.35" y="206.3" width="6.01" height="6.6" fill="#86e4e4" rx="2.4"/><rect x="2108.35" y="207" width="4.01" height="1.4" fill="#b4f2f0" rx="0.7"/><rect x="2119.63" y="206.3" width="4.64" height="6.6" fill="#86e4e4" rx="2.32"/><rect x="2120.63" y="207" width="2.64" height="1.4" fill="#b4f2f0" rx="0.7"/><rect x="2125.64" y="206.3" width="4.91" height="6.6" fill="#86e4e4" rx="2.4"/><rect x="2126.64" y="207" width="2.91" height="1.4" fill="#b4f2f0" rx="0.7"/><rect x="2131.92" y="206.3" width="6.28" height="6.6" fill="#86e4e4" rx="2.4"/><rect x="2132.92" y="207" width="4.28" height="1.4" fill="#b4f2f0" rx="0.7"/><rect x="2150.76" y="206.3" width="4.91" height="6.6" fill="#86e4e4" rx="2.4"/><rect x="2151.76" y="207" width="2.91" height="1.4" fill="#b4f2f0" rx="0.7"/><rect x="2157.04" y="206.3" width="6.28" height="6.6" fill="#86e4e4" rx="2.4"/><rect x="2158.04" y="207" width="4.28" height="1.4" fill="#b4f2f0" rx="0.7"/><rect x="2169.87" y="206.3" width="4.64" height="6.6" fill="#86e4e4" rx="2.32"/><rect x="2170.87" y="207" width="2.64" height="1.4" fill="#b4f2f0" rx="0.7"/><rect x="2176.23" y="206.3" width="4.64" height="6.6" fill="#86e4e4" rx="2.32"/><rect x="2177.23" y="207" width="2.64" height="1.4" fill="#b4f2f0" rx="0.7"/><rect x="2182.59" y="206.3" width="4.64" height="6.6" fill="#86e4e4" rx="2.32"/><rect x="2183.59" y="207" width="2.64" height="1.4" fill="#b4f2f0" rx="0.7"/><rect x="2188.95" y="206.3" width="4.64" height="6.6" fill="#86e4e4" rx="2.32"/><rect x="2189.95" y="207" width="2.64" height="1.4" fill="#b4f2f0" rx="0.7"/><rect x="2195.31" y="206.3" width="4.64" height="6.6" fill="#86e4e4" rx="2.32"/><rect x="2196.31" y="207" width="2.64" height="1.4" fill="#b4f2f0" rx="0.7"/><rect x="2201.67" y="206.3" width="4.64" height="6.6" fill="#86e4e4" rx="2.32"/><rect x="2202.67" y="207" width="2.64" height="1.4" fill="#b4f2f0" rx="0.7"/><rect x="2208.03" y="206.3" width="4.64" height="6.6" fill="#86e4e4" rx="2.32"/><rect x="2209.03" y="207" width="2.64" height="1.4" fill="#b4f2f0" rx="0.7"/><rect x="2214.39" y="206.3" width="4.64" height="6.6" fill="#86e4e4" rx="2.32"/><rect x="2215.39" y="207" width="2.64" height="1.4" fill="#b4f2f0" rx="0.7"/><rect x="2220.75" y="206.3" width="4.64" height="6.6" fill="#86e4e4" rx="2.32"/><rect x="2221.75" y="207" width="2.64" height="1.4" fill="#b4f2f0" rx="0.7"/><rect x="2225.56" y="206.3" width="1.2" height="6.6" fill="#86e4e4" rx="0.6"/><rect x="2227.74" y="206.3" width="1.2" height="6.6" fill="#86e4e4" rx="0.6"/><rect x="2229.93" y="206.3" width="1.2" height="6.6" fill="#86e4e4" rx="0.6"/><rect x="2232.11" y="206.3" width="1.2" height="6.6" fill="#86e4e4" rx="0.6"/><rect x="2234.29" y="206.3" width="1.2" height="6.6" fill="#86e4e4" rx="0.6"/><rect x="2237.02" y="206.3" width="12.83" height="6.6" fill="#86e4e4" rx="2.4"/><rect x="2238.02" y="207" width="10.83" height="1.4" fill="#b4f2f0" rx="0.7"/><rect x="2251.22" y="206.3" width="15.02" height="6.6" fill="#86e4e4" rx="2.4"/><rect x="2252.22" y="207" width="13.02" height="1.4" fill="#b4f2f0" rx="0.7"/><rect x="2267.6" y="206.3" width="6.83" height="6.6" fill="#86e4e4" rx="2.4"/><rect x="2268.6" y="207" width="4.83" height="1.4" fill="#b4f2f0" rx="0.7"/><rect x="2284.8" y="206.3" width="1.37" height="6.6" fill="#86e4e4" rx="0.68"/><rect x="2334.76" y="206.3" width="1.37" height="6.6" fill="#86e4e4" rx="0.68"/><rect x="2384.17" y="206.3" width="1.64" height="6.6" fill="#86e4e4" rx="0.82"/><rect x="2449.96" y="206.3" width="15.02" height="6.6" fill="#86e4e4" rx="2.4"/><rect x="2450.96" y="207" width="13.02" height="1.4" fill="#b4f2f0" rx="0.7"/><rect x="2466.89" y="206.3" width="5.46" height="6.6" fill="#86e4e4" rx="2.4"/><rect x="2467.89" y="207" width="3.46" height="1.4" fill="#b4f2f0" rx="0.7"/><rect x="2474.26" y="206.3" width="4.91" height="6.6" fill="#86e4e4" rx="2.4"/><rect x="2475.26" y="207" width="2.91" height="1.4" fill="#b4f2f0" rx="0.7"/><rect x="2480.81" y="206.3" width="6.55" height="6.6" fill="#86e4e4" rx="2.4"/><rect x="2481.81" y="207" width="4.55" height="1.4" fill="#b4f2f0" rx="0.7"/><rect x="2499.65" y="206.3" width="4.91" height="6.6" fill="#86e4e4" rx="2.4"/><rect x="2500.65" y="207" width="2.91" height="1.4" fill="#b4f2f0" rx="0.7"/><rect x="2505.93" y="206.3" width="6.55" height="6.6" fill="#86e4e4" rx="2.4"/><rect x="2506.93" y="207" width="4.55" height="1.4" fill="#b4f2f0" rx="0.7"/><rect x="2517.4" y="206.3" width="5.46" height="6.6" fill="#86e4e4" rx="2.4"/><rect x="2518.4" y="207" width="3.46" height="1.4" fill="#b4f2f0" rx="0.7"/><rect x="2524.22" y="206.3" width="4.91" height="6.6" fill="#86e4e4" rx="2.4"/><rect x="2525.22" y="207" width="2.91" height="1.4" fill="#b4f2f0" rx="0.7"/><rect x="2530.5" y="206.3" width="6.01" height="6.6" fill="#86e4e4" rx="2.4"/><rect x="2531.5" y="207" width="4.01" height="1.4" fill="#b4f2f0" rx="0.7"/><rect x="2548.79" y="206.3" width="6.01" height="6.6" fill="#86e4e4" rx="2.4"/><rect x="2549.79" y="207" width="4.01" height="1.4" fill="#b4f2f0" rx="0.7"/><rect x="2556.43" y="206.3" width="15.56" height="6.6" fill="#86e4e4" rx="2.4"/><rect x="2557.43" y="207" width="13.56" height="1.4" fill="#b4f2f0" rx="0.7"/><rect x="2573.36" y="206.3" width="4.91" height="6.6" fill="#86e4e4" rx="2.4"/><rect x="2574.36" y="207" width="2.91" height="1.4" fill="#b4f2f0" rx="0.7"/><rect x="2580.19" y="206.3" width="6.28" height="6.6" fill="#86e4e4" rx="2.4"/><rect x="2581.19" y="207" width="4.28" height="1.4" fill="#b4f2f0" rx="0.7"/><rect x="2598.48" y="206.3" width="4.91" height="6.6" fill="#86e4e4" rx="2.4"/><rect x="2599.48" y="207" width="2.91" height="1.4" fill="#b4f2f0" rx="0.7"/><rect x="2605.03" y="206.3" width="6.01" height="6.6" fill="#86e4e4" rx="2.4"/><rect x="2606.03" y="207" width="4.01" height="1.4" fill="#b4f2f0" rx="0.7"/><rect x="2449.61" y="206.3" width="15.91" height="6.6" fill="#86e4e4" rx="2.4"/><rect x="2450.61" y="207" width="13.91" height="1.4" fill="#b4f2f0" rx="0.7"/><rect x="2466.83" y="206.3" width="6.55" height="6.6" fill="#86e4e4" rx="2.4"/><rect x="2467.83" y="207" width="4.55" height="1.4" fill="#b4f2f0" rx="0.7"/><rect x="2474.5" y="206.3" width="5.05" height="6.6" fill="#86e4e4" rx="2.4"/><rect x="2475.5" y="207" width="3.05" height="1.4" fill="#b4f2f0" rx="0.7"/><rect x="2480.49" y="206.3" width="7.11" height="6.6" fill="#86e4e4" rx="2.4"/><rect x="2481.49" y="207" width="5.11" height="1.4" fill="#b4f2f0" rx="0.7"/><rect x="2499.21" y="206.3" width="4.68" height="6.6" fill="#86e4e4" rx="2.34"/><rect x="2500.21" y="207" width="2.68" height="1.4" fill="#b4f2f0" rx="0.7"/><rect x="2505.2" y="206.3" width="7.49" height="6.6" fill="#86e4e4" rx="2.4"/><rect x="2506.2" y="207" width="5.49" height="1.4" fill="#b4f2f0" rx="0.7"/><rect x="2517.56" y="206.3" width="4.12" height="6.6" fill="#86e4e4" rx="2.06"/><rect x="2518.56" y="207" width="2.12" height="1.4" fill="#b4f2f0" rx="0.7"/><rect x="2522.99" y="206.3" width="6.18" height="6.6" fill="#86e4e4" rx="2.4"/><rect x="2523.99" y="207" width="4.18" height="1.4" fill="#b4f2f0" rx="0.7"/><rect x="2530.48" y="206.3" width="6.18" height="6.6" fill="#86e4e4" rx="2.4"/><rect x="2531.48" y="207" width="4.18" height="1.4" fill="#b4f2f0" rx="0.7"/><rect x="2548.45" y="206.3" width="6.93" height="6.6" fill="#86e4e4" rx="2.4"/><rect x="2549.45" y="207" width="4.93" height="1.4" fill="#b4f2f0" rx="0.7"/><rect x="2556.87" y="206.3" width="15.35" height="6.6" fill="#86e4e4" rx="2.4"/><rect x="2557.87" y="207" width="13.35" height="1.4" fill="#b4f2f0" rx="0.7"/><rect x="2573.53" y="206.3" width="5.24" height="6.6" fill="#86e4e4" rx="2.4"/><rect x="2574.53" y="207" width="3.24" height="1.4" fill="#b4f2f0" rx="0.7"/><rect x="2579.71" y="206.3" width="7.11" height="6.6" fill="#86e4e4" rx="2.4"/><rect x="2580.71" y="207" width="5.11" height="1.4" fill="#b4f2f0" rx="0.7"/><rect x="2598.43" y="206.3" width="4.68" height="6.6" fill="#86e4e4" rx="2.34"/><rect x="2599.43" y="207" width="2.68" height="1.4" fill="#b4f2f0" rx="0.7"/><rect x="2604.04" y="206.3" width="7.86" height="6.6" fill="#86e4e4" rx="2.4"/><rect x="2605.04" y="207" width="5.86" height="1.4" fill="#b4f2f0" rx="0.7"/><rect x="2617.15" y="206.3" width="4.68" height="6.6" fill="#86e4e4" rx="2.34"/><rect x="2618.15" y="207" width="2.68" height="1.4" fill="#b4f2f0" rx="0.7"/><rect x="2622.76" y="206.3" width="5.99" height="6.6" fill="#86e4e4" rx="2.4"/><rect x="2623.76" y="207" width="3.99" height="1.4" fill="#b4f2f0" rx="0.7"/><rect x="2629.69" y="206.3" width="7.11" height="6.6" fill="#86e4e4" rx="2.4"/><rect x="2630.69" y="207" width="5.11" height="1.4" fill="#b4f2f0" rx="0.7"/><rect x="2648.41" y="206.3" width="15.54" height="6.6" fill="#86e4e4" rx="2.4"/><rect x="2649.41" y="207" width="13.54" height="1.4" fill="#b4f2f0" rx="0.7"/><rect x="2665.26" y="206.3" width="7.68" height="6.6" fill="#86e4e4" rx="2.4"/><rect x="2666.26" y="207" width="5.68" height="1.4" fill="#b4f2f0" rx="0.7"/></g><rect x="1080.9" y="214.4" width="197.2" height="6.4" fill="#5b4579" rx="2.6"/><rect x="2101.8" y="214.4" width="197.2" height="6.4" fill="#5b4579" rx="2.6"/><rect x="682.7" y="222.5" width="2089.4" height="6.5" fill="#4e5386" rx="2"/><rect x="683.6" y="223" width="2087.6" height="1.2" fill="#5c6296"/><rect x="1279.6" y="1218.5" width="23.1" height="6.1" fill="#8fe2da" rx="2.2"/><rect x="1280.9" y="1219.1" width="20.5" height="1.5" fill="#b3ebe6" rx="0.7"/><rect x="1304.5" y="1218.5" width="23.1" height="6.1" fill="#8fe2da" rx="2.2"/><rect x="1305.8" y="1219.1" width="20.5" height="1.5" fill="#b3ebe6" rx="0.7"/><rect x="1329.4" y="1218.5" width="23.1" height="6.1" fill="#8fe2da" rx="2.2"/><rect x="1330.7" y="1219.1" width="20.5" height="1.5" fill="#b3ebe6" rx="0.7"/><rect x="1354.3" y="1218.5" width="23.1" height="6.1" fill="#8fe2da" rx="2.2"/><rect x="1355.6" y="1219.1" width="20.5" height="1.5" fill="#b3ebe6" rx="0.7"/><rect x="1379.2" y="1218.5" width="23.1" height="6.1" fill="#8fe2da" rx="2.2"/><rect x="1380.5" y="1219.1" width="20.5" height="1.5" fill="#b3ebe6" rx="0.7"/><rect x="1404.1" y="1218.5" width="23.1" height="6.1" fill="#8fe2da" rx="2.2"/><rect x="1405.4" y="1219.1" width="20.5" height="1.5" fill="#b3ebe6" rx="0.7"/><rect x="1429" y="1218.5" width="23.1" height="6.1" fill="#8fe2da" rx="2.2"/><rect x="1430.3" y="1219.1" width="20.5" height="1.5" fill="#b3ebe6" rx="0.7"/><rect x="1478.8" y="1218.5" width="23.1" height="6.1" fill="#8fe2da" rx="2.2"/><rect x="1480.1" y="1219.1" width="20.5" height="1.5" fill="#b3ebe6" rx="0.7"/><rect x="1503.7" y="1218.5" width="23.1" height="6.1" fill="#8fe2da" rx="2.2"/><rect x="1505" y="1219.1" width="20.5" height="1.5" fill="#b3ebe6" rx="0.7"/><rect x="1528.6" y="1218.5" width="23.1" height="6.1" fill="#8fe2da" rx="2.2"/><rect x="1529.9" y="1219.1" width="20.5" height="1.5" fill="#b3ebe6" rx="0.7"/><rect x="1553.5" y="1218.5" width="23.1" height="6.1" fill="#8fe2da" rx="2.2"/><rect x="1554.8" y="1219.1" width="20.5" height="1.5" fill="#b3ebe6" rx="0.7"/><rect x="1578.4" y="1218.5" width="23.1" height="6.1" fill="#8fe2da" rx="2.2"/><rect x="1579.7" y="1219.1" width="20.5" height="1.5" fill="#b3ebe6" rx="0.7"/><rect x="1603.3" y="1218.5" width="23.1" height="6.1" fill="#8fe2da" rx="2.2"/><rect x="1604.6" y="1219.1" width="20.5" height="1.5" fill="#b3ebe6" rx="0.7"/><rect x="1628.2" y="1218.5" width="23.1" height="6.1" fill="#8fe2da" rx="2.2"/><rect x="1629.5" y="1219.1" width="20.5" height="1.5" fill="#b3ebe6" rx="0.7"/><rect x="1653.1" y="1218.5" width="23.1" height="6.1" fill="#8fe2da" rx="2.2"/><rect x="1654.4" y="1219.1" width="20.5" height="1.5" fill="#b3ebe6" rx="0.7"/><rect x="1678" y="1218.5" width="23.1" height="6.1" fill="#8fe2da" rx="2.2"/><rect x="1679.3" y="1219.1" width="20.5" height="1.5" fill="#b3ebe6" rx="0.7"/><rect x="1702.9" y="1218.5" width="23.1" height="6.1" fill="#8fe2da" rx="2.2"/><rect x="1704.2" y="1219.1" width="20.5" height="1.5" fill="#b3ebe6" rx="0.7"/><rect x="1727.8" y="1218.5" width="23.1" height="6.1" fill="#8fe2da" rx="2.2"/><rect x="1729.1" y="1219.1" width="20.5" height="1.5" fill="#b3ebe6" rx="0.7"/><rect x="1752.7" y="1218.5" width="23.1" height="6.1" fill="#8fe2da" rx="2.2"/><rect x="1754" y="1219.1" width="20.5" height="1.5" fill="#b3ebe6" rx="0.7"/><rect x="1777.6" y="1218.5" width="23.1" height="6.1" fill="#8fe2da" rx="2.2"/><rect x="1778.9" y="1219.1" width="20.5" height="1.5" fill="#b3ebe6" rx="0.7"/><rect x="1802.5" y="1218.5" width="23.1" height="6.1" fill="#8fe2da" rx="2.2"/><rect x="1803.8" y="1219.1" width="20.5" height="1.5" fill="#b3ebe6" rx="0.7"/><rect x="1827.4" y="1218.5" width="23.1" height="6.1" fill="#8fe2da" rx="2.2"/><rect x="1828.7" y="1219.1" width="20.5" height="1.5" fill="#b3ebe6" rx="0.7"/><rect x="1852.3" y="1218.5" width="23.1" height="6.1" fill="#8fe2da" rx="2.2"/><rect x="1853.6" y="1219.1" width="20.5" height="1.5" fill="#b3ebe6" rx="0.7"/><rect x="1877.2" y="1218.5" width="23.1" height="6.1" fill="#8fe2da" rx="2.2"/><rect x="1878.5" y="1219.1" width="20.5" height="1.5" fill="#b3ebe6" rx="0.7"/><rect x="1902.1" y="1218.5" width="23.1" height="6.1" fill="#8fe2da" rx="2.2"/><rect x="1903.4" y="1219.1" width="20.5" height="1.5" fill="#b3ebe6" rx="0.7"/><rect x="1927" y="1218.5" width="23.1" height="6.1" fill="#8fe2da" rx="2.2"/><rect x="1928.3" y="1219.1" width="20.5" height="1.5" fill="#b3ebe6" rx="0.7"/><rect x="1951.9" y="1218.5" width="23.1" height="6.1" fill="#8fe2da" rx="2.2"/><rect x="1953.2" y="1219.1" width="20.5" height="1.5" fill="#b3ebe6" rx="0.7"/><rect x="1976.8" y="1218.5" width="23.1" height="6.1" fill="#8fe2da" rx="2.2"/><rect x="1978.1" y="1219.1" width="20.5" height="1.5" fill="#b3ebe6" rx="0.7"/><rect x="2001.7" y="1218.5" width="23.1" height="6.1" fill="#8fe2da" rx="2.2"/><rect x="2003" y="1219.1" width="20.5" height="1.5" fill="#b3ebe6" rx="0.7"/><rect x="2026.6" y="1218.5" width="23.1" height="6.1" fill="#8fe2da" rx="2.2"/><rect x="2027.9" y="1219.1" width="20.5" height="1.5" fill="#b3ebe6" rx="0.7"/><rect x="2051.5" y="1218.5" width="23.1" height="6.1" fill="#8fe2da" rx="2.2"/><rect x="2052.8" y="1219.1" width="20.5" height="1.5" fill="#b3ebe6" rx="0.7"/><rect x="2275.6" y="1218.5" width="23.1" height="6.1" fill="#8fe2da" rx="2.2"/><rect x="2276.9" y="1219.1" width="20.5" height="1.5" fill="#b3ebe6" rx="0.7"/><rect x="2300.5" y="1218.5" width="23.1" height="6.1" fill="#8fe2da" rx="2.2"/><rect x="2301.8" y="1219.1" width="20.5" height="1.5" fill="#b3ebe6" rx="0.7"/><rect x="2325.4" y="1218.5" width="23.1" height="6.1" fill="#8fe2da" rx="2.2"/><rect x="2326.7" y="1219.1" width="20.5" height="1.5" fill="#b3ebe6" rx="0.7"/><rect x="2350.3" y="1218.5" width="23.1" height="6.1" fill="#8fe2da" rx="2.2"/><rect x="2351.6" y="1219.1" width="20.5" height="1.5" fill="#b3ebe6" rx="0.7"/><rect x="2375.2" y="1218.5" width="23.1" height="6.1" fill="#8fe2da" rx="2.2"/><rect x="2376.5" y="1219.1" width="20.5" height="1.5" fill="#b3ebe6" rx="0.7"/><rect x="2400.1" y="1218.5" width="23.1" height="6.1" fill="#8fe2da" rx="2.2"/><rect x="2401.4" y="1219.1" width="20.5" height="1.5" fill="#b3ebe6" rx="0.7"/><rect x="2425" y="1218.5" width="23.1" height="6.1" fill="#8fe2da" rx="2.2"/><rect x="2426.3" y="1219.1" width="20.5" height="1.5" fill="#b3ebe6" rx="0.7"/><rect x="2474.8" y="1218.5" width="23.1" height="6.1" fill="#8fe2da" rx="2.2"/><rect x="2476.1" y="1219.1" width="20.5" height="1.5" fill="#b3ebe6" rx="0.7"/><rect x="2499.7" y="1218.5" width="23.1" height="6.1" fill="#8fe2da" rx="2.2"/><rect x="2501" y="1219.1" width="20.5" height="1.5" fill="#b3ebe6" rx="0.7"/><rect x="2524.6" y="1218.5" width="23.1" height="6.1" fill="#8fe2da" rx="2.2"/><rect x="2525.9" y="1219.1" width="20.5" height="1.5" fill="#b3ebe6" rx="0.7"/><rect x="2549.5" y="1218.5" width="23.1" height="6.1" fill="#8fe2da" rx="2.2"/><rect x="2550.8" y="1219.1" width="20.5" height="1.5" fill="#b3ebe6" rx="0.7"/><rect x="2574.4" y="1218.5" width="23.1" height="6.1" fill="#8fe2da" rx="2.2"/><rect x="2575.7" y="1219.1" width="20.5" height="1.5" fill="#b3ebe6" rx="0.7"/><rect x="2599.3" y="1218.5" width="23.1" height="6.1" fill="#8fe2da" rx="2.2"/><rect x="2600.6" y="1219.1" width="20.5" height="1.5" fill="#b3ebe6" rx="0.7"/><rect x="2624.2" y="1218.5" width="23.1" height="6.1" fill="#8fe2da" rx="2.2"/><rect x="2625.5" y="1219.1" width="20.5" height="1.5" fill="#b3ebe6" rx="0.7"/><rect x="2649.1" y="1218.5" width="23.1" height="6.1" fill="#8fe2da" rx="2.2"/><rect x="2650.4" y="1219.1" width="20.5" height="1.5" fill="#b3ebe6" rx="0.7"/><rect x="682" y="1226.5" width="23.1" height="6.1" fill="#9de4e4" rx="2.2"/><rect x="683.3" y="1227.1" width="20.5" height="1.5" fill="#bceded" rx="0.7"/><rect x="706.9" y="1226.5" width="23.1" height="6.1" fill="#9de4e4" rx="2.2"/><rect x="708.2" y="1227.1" width="20.5" height="1.5" fill="#bceded" rx="0.7"/><rect x="731.8" y="1226.5" width="23.1" height="6.1" fill="#9de4e4" rx="2.2"/><rect x="733.1" y="1227.1" width="20.5" height="1.5" fill="#bceded" rx="0.7"/><rect x="756.7" y="1226.5" width="23.1" height="6.1" fill="#9de4e4" rx="2.2"/><rect x="758" y="1227.1" width="20.5" height="1.5" fill="#bceded" rx="0.7"/><rect x="781.6" y="1226.5" width="23.1" height="6.1" fill="#9de4e4" rx="2.2"/><rect x="782.9" y="1227.1" width="20.5" height="1.5" fill="#bceded" rx="0.7"/><rect x="806.5" y="1226.5" width="23.1" height="6.1" fill="#9de4e4" rx="2.2"/><rect x="807.8" y="1227.1" width="20.5" height="1.5" fill="#bceded" rx="0.7"/><rect x="831.4" y="1226.5" width="23.1" height="6.1" fill="#9de4e4" rx="2.2"/><rect x="832.7" y="1227.1" width="20.5" height="1.5" fill="#bceded" rx="0.7"/><rect x="856.3" y="1226.5" width="23.1" height="6.1" fill="#9de4e4" rx="2.2"/><rect x="857.6" y="1227.1" width="20.5" height="1.5" fill="#bceded" rx="0.7"/><rect x="881.2" y="1226.5" width="23.1" height="6.1" fill="#9de4e4" rx="2.2"/><rect x="882.5" y="1227.1" width="20.5" height="1.5" fill="#bceded" rx="0.7"/><rect x="906.1" y="1226.5" width="23.1" height="6.1" fill="#9de4e4" rx="2.2"/><rect x="907.4" y="1227.1" width="20.5" height="1.5" fill="#bceded" rx="0.7"/><rect x="931" y="1226.5" width="23.1" height="6.1" fill="#9de4e4" rx="2.2"/><rect x="932.3" y="1227.1" width="20.5" height="1.5" fill="#bceded" rx="0.7"/><rect x="955.9" y="1226.5" width="23.1" height="6.1" fill="#9de4e4" rx="2.2"/><rect x="957.2" y="1227.1" width="20.5" height="1.5" fill="#bceded" rx="0.7"/><rect x="980.8" y="1226.5" width="23.1" height="6.1" fill="#9de4e4" rx="2.2"/><rect x="982.1" y="1227.1" width="20.5" height="1.5" fill="#bceded" rx="0.7"/><rect x="1005.7" y="1226.5" width="23.1" height="6.1" fill="#9de4e4" rx="2.2"/><rect x="1007" y="1227.1" width="20.5" height="1.5" fill="#bceded" rx="0.7"/><rect x="1030.6" y="1226.5" width="23.1" height="6.1" fill="#9de4e4" rx="2.2"/><rect x="1031.9" y="1227.1" width="20.5" height="1.5" fill="#bceded" rx="0.7"/><rect x="1055.5" y="1226.5" width="23.1" height="6.1" fill="#9de4e4" rx="2.2"/><rect x="1056.8" y="1227.1" width="20.5" height="1.5" fill="#bceded" rx="0.7"/><rect x="1080.4" y="1226.5" width="23.1" height="6.1" fill="#9de4e4" rx="2.2"/><rect x="1081.7" y="1227.1" width="20.5" height="1.5" fill="#bceded" rx="0.7"/><rect x="1105.3" y="1226.5" width="23.1" height="6.1" fill="#9de4e4" rx="2.2"/><rect x="1106.6" y="1227.1" width="20.5" height="1.5" fill="#bceded" rx="0.7"/><rect x="1130.2" y="1226.5" width="23.1" height="6.1" fill="#9de4e4" rx="2.2"/><rect x="1131.5" y="1227.1" width="20.5" height="1.5" fill="#bceded" rx="0.7"/><rect x="1155.1" y="1226.5" width="23.1" height="6.1" fill="#9de4e4" rx="2.2"/><rect x="1156.4" y="1227.1" width="20.5" height="1.5" fill="#bceded" rx="0.7"/><rect x="1180" y="1226.5" width="23.1" height="6.1" fill="#9de4e4" rx="2.2"/><rect x="1181.3" y="1227.1" width="20.5" height="1.5" fill="#bceded" rx="0.7"/><rect x="1204.9" y="1226.5" width="23.1" height="6.1" fill="#9de4e4" rx="2.2"/><rect x="1206.2" y="1227.1" width="20.5" height="1.5" fill="#bceded" rx="0.7"/><rect x="1229.8" y="1226.5" width="23.1" height="6.1" fill="#9de4e4" rx="2.2"/><rect x="1231.1" y="1227.1" width="20.5" height="1.5" fill="#bceded" rx="0.7"/><rect x="1254.7" y="1226.5" width="23.1" height="6.1" fill="#9de4e4" rx="2.2"/><rect x="1256" y="1227.1" width="20.5" height="1.5" fill="#bceded" rx="0.7"/><rect x="1279.6" y="1226.5" width="23.1" height="6.1" fill="#9de4e4" rx="2.2"/><rect x="1280.9" y="1227.1" width="20.5" height="1.5" fill="#bceded" rx="0.7"/><rect x="1304.5" y="1226.5" width="23.1" height="6.1" fill="#9de4e4" rx="2.2"/><rect x="1305.8" y="1227.1" width="20.5" height="1.5" fill="#bceded" rx="0.7"/><rect x="1329.4" y="1226.5" width="23.1" height="6.1" fill="#9de4e4" rx="2.2"/><rect x="1330.7" y="1227.1" width="20.5" height="1.5" fill="#bceded" rx="0.7"/><rect x="1354.3" y="1226.5" width="23.1" height="6.1" fill="#9de4e4" rx="2.2"/><rect x="1355.6" y="1227.1" width="20.5" height="1.5" fill="#bceded" rx="0.7"/><rect x="1379.2" y="1226.5" width="23.1" height="6.1" fill="#9de4e4" rx="2.2"/><rect x="1380.5" y="1227.1" width="20.5" height="1.5" fill="#bceded" rx="0.7"/><rect x="1404.1" y="1226.5" width="23.1" height="6.1" fill="#9de4e4" rx="2.2"/><rect x="1405.4" y="1227.1" width="20.5" height="1.5" fill="#bceded" rx="0.7"/><rect x="1429" y="1226.5" width="23.1" height="6.1" fill="#9de4e4" rx="2.2"/><rect x="1430.3" y="1227.1" width="20.5" height="1.5" fill="#bceded" rx="0.7"/><rect x="1453.9" y="1226.5" width="23.1" height="6.1" fill="#9de4e4" rx="2.2"/><rect x="1455.2" y="1227.1" width="20.5" height="1.5" fill="#bceded" rx="0.7"/><rect x="1478.8" y="1226.5" width="23.1" height="6.1" fill="#9de4e4" rx="2.2"/><rect x="1480.1" y="1227.1" width="20.5" height="1.5" fill="#bceded" rx="0.7"/><rect x="1503.7" y="1226.5" width="23.1" height="6.1" fill="#9de4e4" rx="2.2"/><rect x="1505" y="1227.1" width="20.5" height="1.5" fill="#bceded" rx="0.7"/><rect x="1528.6" y="1226.5" width="23.1" height="6.1" fill="#9de4e4" rx="2.2"/><rect x="1529.9" y="1227.1" width="20.5" height="1.5" fill="#bceded" rx="0.7"/><rect x="1553.5" y="1226.5" width="23.1" height="6.1" fill="#9de4e4" rx="2.2"/><rect x="1554.8" y="1227.1" width="20.5" height="1.5" fill="#bceded" rx="0.7"/><rect x="1578.4" y="1226.5" width="23.1" height="6.1" fill="#9de4e4" rx="2.2"/><rect x="1579.7" y="1227.1" width="20.5" height="1.5" fill="#bceded" rx="0.7"/><rect x="1603.3" y="1226.5" width="23.1" height="6.1" fill="#9de4e4" rx="2.2"/><rect x="1604.6" y="1227.1" width="20.5" height="1.5" fill="#bceded" rx="0.7"/><rect x="1628.2" y="1226.5" width="23.1" height="6.1" fill="#9de4e4" rx="2.2"/><rect x="1629.5" y="1227.1" width="20.5" height="1.5" fill="#bceded" rx="0.7"/><rect x="1653.1" y="1226.5" width="23.1" height="6.1" fill="#9de4e4" rx="2.2"/><rect x="1654.4" y="1227.1" width="20.5" height="1.5" fill="#bceded" rx="0.7"/><rect x="1678" y="1226.5" width="23.1" height="6.1" fill="#9de4e4" rx="2.2"/><rect x="1679.3" y="1227.1" width="20.5" height="1.5" fill="#bceded" rx="0.7"/><rect x="1702.9" y="1226.5" width="23.1" height="6.1" fill="#9de4e4" rx="2.2"/><rect x="1704.2" y="1227.1" width="20.5" height="1.5" fill="#bceded" rx="0.7"/><rect x="1727.8" y="1226.5" width="23.1" height="6.1" fill="#9de4e4" rx="2.2"/><rect x="1729.1" y="1227.1" width="20.5" height="1.5" fill="#bceded" rx="0.7"/><rect x="1752.7" y="1226.5" width="23.1" height="6.1" fill="#9de4e4" rx="2.2"/><rect x="1754" y="1227.1" width="20.5" height="1.5" fill="#bceded" rx="0.7"/><rect x="1777.6" y="1226.5" width="23.1" height="6.1" fill="#9de4e4" rx="2.2"/><rect x="1778.9" y="1227.1" width="20.5" height="1.5" fill="#bceded" rx="0.7"/><rect x="1802.5" y="1226.5" width="23.1" height="6.1" fill="#9de4e4" rx="2.2"/><rect x="1803.8" y="1227.1" width="20.5" height="1.5" fill="#bceded" rx="0.7"/><rect x="1827.4" y="1226.5" width="23.1" height="6.1" fill="#9de4e4" rx="2.2"/><rect x="1828.7" y="1227.1" width="20.5" height="1.5" fill="#bceded" rx="0.7"/><rect x="1852.3" y="1226.5" width="23.1" height="6.1" fill="#9de4e4" rx="2.2"/><rect x="1853.6" y="1227.1" width="20.5" height="1.5" fill="#bceded" rx="0.7"/><rect x="1877.2" y="1226.5" width="23.1" height="6.1" fill="#9de4e4" rx="2.2"/><rect x="1878.5" y="1227.1" width="20.5" height="1.5" fill="#bceded" rx="0.7"/><rect x="1902.1" y="1226.5" width="23.1" height="6.1" fill="#9de4e4" rx="2.2"/><rect x="1903.4" y="1227.1" width="20.5" height="1.5" fill="#bceded" rx="0.7"/><rect x="1927" y="1226.5" width="23.1" height="6.1" fill="#9de4e4" rx="2.2"/><rect x="1928.3" y="1227.1" width="20.5" height="1.5" fill="#bceded" rx="0.7"/><rect x="1951.9" y="1226.5" width="23.1" height="6.1" fill="#9de4e4" rx="2.2"/><rect x="1953.2" y="1227.1" width="20.5" height="1.5" fill="#bceded" rx="0.7"/><rect x="1976.8" y="1226.5" width="23.1" height="6.1" fill="#9de4e4" rx="2.2"/><rect x="1978.1" y="1227.1" width="20.5" height="1.5" fill="#bceded" rx="0.7"/><rect x="2001.7" y="1226.5" width="23.1" height="6.1" fill="#9de4e4" rx="2.2"/><rect x="2003" y="1227.1" width="20.5" height="1.5" fill="#bceded" rx="0.7"/><rect x="2026.6" y="1226.5" width="23.1" height="6.1" fill="#9de4e4" rx="2.2"/><rect x="2027.9" y="1227.1" width="20.5" height="1.5" fill="#bceded" rx="0.7"/><rect x="2051.5" y="1226.5" width="23.1" height="6.1" fill="#9de4e4" rx="2.2"/><rect x="2052.8" y="1227.1" width="20.5" height="1.5" fill="#bceded" rx="0.7"/><rect x="2076.4" y="1226.5" width="23.1" height="6.1" fill="#9de4e4" rx="2.2"/><rect x="2077.7" y="1227.1" width="20.5" height="1.5" fill="#bceded" rx="0.7"/><rect x="2101.3" y="1226.5" width="23.1" height="6.1" fill="#9de4e4" rx="2.2"/><rect x="2102.6" y="1227.1" width="20.5" height="1.5" fill="#bceded" rx="0.7"/><rect x="2126.2" y="1226.5" width="23.1" height="6.1" fill="#9de4e4" rx="2.2"/><rect x="2127.5" y="1227.1" width="20.5" height="1.5" fill="#bceded" rx="0.7"/><rect x="2151.1" y="1226.5" width="23.1" height="6.1" fill="#9de4e4" rx="2.2"/><rect x="2152.4" y="1227.1" width="20.5" height="1.5" fill="#bceded" rx="0.7"/><rect x="2176" y="1226.5" width="23.1" height="6.1" fill="#9de4e4" rx="2.2"/><rect x="2177.3" y="1227.1" width="20.5" height="1.5" fill="#bceded" rx="0.7"/><rect x="2200.9" y="1226.5" width="23.1" height="6.1" fill="#9de4e4" rx="2.2"/><rect x="2202.2" y="1227.1" width="20.5" height="1.5" fill="#bceded" rx="0.7"/><rect x="2225.8" y="1226.5" width="23.1" height="6.1" fill="#9de4e4" rx="2.2"/><rect x="2227.1" y="1227.1" width="20.5" height="1.5" fill="#bceded" rx="0.7"/><rect x="2250.7" y="1226.5" width="23.1" height="6.1" fill="#9de4e4" rx="2.2"/><rect x="2252" y="1227.1" width="20.5" height="1.5" fill="#bceded" rx="0.7"/><rect x="2275.6" y="1226.5" width="23.1" height="6.1" fill="#9de4e4" rx="2.2"/><rect x="2276.9" y="1227.1" width="20.5" height="1.5" fill="#bceded" rx="0.7"/><rect x="2300.5" y="1226.5" width="23.1" height="6.1" fill="#9de4e4" rx="2.2"/><rect x="2301.8" y="1227.1" width="20.5" height="1.5" fill="#bceded" rx="0.7"/><rect x="2325.4" y="1226.5" width="23.1" height="6.1" fill="#9de4e4" rx="2.2"/><rect x="2326.7" y="1227.1" width="20.5" height="1.5" fill="#bceded" rx="0.7"/><rect x="2350.3" y="1226.5" width="23.1" height="6.1" fill="#9de4e4" rx="2.2"/><rect x="2351.6" y="1227.1" width="20.5" height="1.5" fill="#bceded" rx="0.7"/><rect x="2375.2" y="1226.5" width="23.1" height="6.1" fill="#9de4e4" rx="2.2"/><rect x="2376.5" y="1227.1" width="20.5" height="1.5" fill="#bceded" rx="0.7"/><rect x="2400.1" y="1226.5" width="23.1" height="6.1" fill="#9de4e4" rx="2.2"/><rect x="2401.4" y="1227.1" width="20.5" height="1.5" fill="#bceded" rx="0.7"/><rect x="2425" y="1226.5" width="23.1" height="6.1" fill="#9de4e4" rx="2.2"/><rect x="2426.3" y="1227.1" width="20.5" height="1.5" fill="#bceded" rx="0.7"/><rect x="2449.9" y="1226.5" width="23.1" height="6.1" fill="#9de4e4" rx="2.2"/><rect x="2451.2" y="1227.1" width="20.5" height="1.5" fill="#bceded" rx="0.7"/><rect x="2474.8" y="1226.5" width="23.1" height="6.1" fill="#9de4e4" rx="2.2"/><rect x="2476.1" y="1227.1" width="20.5" height="1.5" fill="#bceded" rx="0.7"/><rect x="2499.7" y="1226.5" width="23.1" height="6.1" fill="#9de4e4" rx="2.2"/><rect x="2501" y="1227.1" width="20.5" height="1.5" fill="#bceded" rx="0.7"/><rect x="2524.6" y="1226.5" width="23.1" height="6.1" fill="#9de4e4" rx="2.2"/><rect x="2525.9" y="1227.1" width="20.5" height="1.5" fill="#bceded" rx="0.7"/><rect x="2549.5" y="1226.5" width="23.1" height="6.1" fill="#9de4e4" rx="2.2"/><rect x="2550.8" y="1227.1" width="20.5" height="1.5" fill="#bceded" rx="0.7"/><rect x="2574.4" y="1226.5" width="23.1" height="6.1" fill="#9de4e4" rx="2.2"/><rect x="2575.7" y="1227.1" width="20.5" height="1.5" fill="#bceded" rx="0.7"/><rect x="2599.3" y="1226.5" width="23.1" height="6.1" fill="#9de4e4" rx="2.2"/><rect x="2600.6" y="1227.1" width="20.5" height="1.5" fill="#bceded" rx="0.7"/><rect x="2624.2" y="1226.5" width="23.1" height="6.1" fill="#9de4e4" rx="2.2"/><rect x="2625.5" y="1227.1" width="20.5" height="1.5" fill="#bceded" rx="0.7"/><rect x="2649.1" y="1226.5" width="23.1" height="6.1" fill="#9de4e4" rx="2.2"/><rect x="2650.4" y="1227.1" width="20.5" height="1.5" fill="#bceded" rx="0.7"/><rect x="1279.6" y="1234.5" width="23.1" height="6.1" fill="#a2dce8" rx="2.2"/><rect x="1280.9" y="1235.1" width="20.5" height="1.5" fill="#c0e7ef" rx="0.7"/><rect x="1304.5" y="1234.5" width="23.1" height="6.1" fill="#a2dce8" rx="2.2"/><rect x="1305.8" y="1235.1" width="20.5" height="1.5" fill="#c0e7ef" rx="0.7"/><rect x="1329.4" y="1234.5" width="23.1" height="6.1" fill="#a2dce8" rx="2.2"/><rect x="1330.7" y="1235.1" width="20.5" height="1.5" fill="#c0e7ef" rx="0.7"/><rect x="1354.3" y="1234.5" width="23.1" height="6.1" fill="#a2dce8" rx="2.2"/><rect x="1355.6" y="1235.1" width="20.5" height="1.5" fill="#c0e7ef" rx="0.7"/><rect x="1379.2" y="1234.5" width="23.1" height="6.1" fill="#a2dce8" rx="2.2"/><rect x="1380.5" y="1235.1" width="20.5" height="1.5" fill="#c0e7ef" rx="0.7"/><rect x="1404.1" y="1234.5" width="23.1" height="6.1" fill="#a2dce8" rx="2.2"/><rect x="1405.4" y="1235.1" width="20.5" height="1.5" fill="#c0e7ef" rx="0.7"/><rect x="1429" y="1234.5" width="23.1" height="6.1" fill="#a2dce8" rx="2.2"/><rect x="1430.3" y="1235.1" width="20.5" height="1.5" fill="#c0e7ef" rx="0.7"/><rect x="1453.9" y="1234.5" width="23.1" height="6.1" fill="#a2dce8" rx="2.2"/><rect x="1455.2" y="1235.1" width="20.5" height="1.5" fill="#c0e7ef" rx="0.7"/><rect x="1478.8" y="1234.5" width="23.1" height="6.1" fill="#a2dce8" rx="2.2"/><rect x="1480.1" y="1235.1" width="20.5" height="1.5" fill="#c0e7ef" rx="0.7"/><rect x="1503.7" y="1234.5" width="23.1" height="6.1" fill="#a2dce8" rx="2.2"/><rect x="1505" y="1235.1" width="20.5" height="1.5" fill="#c0e7ef" rx="0.7"/><rect x="1528.6" y="1234.5" width="23.1" height="6.1" fill="#a2dce8" rx="2.2"/><rect x="1529.9" y="1235.1" width="20.5" height="1.5" fill="#c0e7ef" rx="0.7"/><rect x="1553.5" y="1234.5" width="23.1" height="6.1" fill="#a2dce8" rx="2.2"/><rect x="1554.8" y="1235.1" width="20.5" height="1.5" fill="#c0e7ef" rx="0.7"/><rect x="1578.4" y="1234.5" width="23.1" height="6.1" fill="#a2dce8" rx="2.2"/><rect x="1579.7" y="1235.1" width="20.5" height="1.5" fill="#c0e7ef" rx="0.7"/><rect x="1603.3" y="1234.5" width="23.1" height="6.1" fill="#a2dce8" rx="2.2"/><rect x="1604.6" y="1235.1" width="20.5" height="1.5" fill="#c0e7ef" rx="0.7"/><rect x="1628.2" y="1234.5" width="23.1" height="6.1" fill="#a2dce8" rx="2.2"/><rect x="1629.5" y="1235.1" width="20.5" height="1.5" fill="#c0e7ef" rx="0.7"/><rect x="1653.1" y="1234.5" width="23.1" height="6.1" fill="#a2dce8" rx="2.2"/><rect x="1654.4" y="1235.1" width="20.5" height="1.5" fill="#c0e7ef" rx="0.7"/><rect x="1678" y="1234.5" width="23.1" height="6.1" fill="#a2dce8" rx="2.2"/><rect x="1679.3" y="1235.1" width="20.5" height="1.5" fill="#c0e7ef" rx="0.7"/><rect x="1702.9" y="1234.5" width="23.1" height="6.1" fill="#a2dce8" rx="2.2"/><rect x="1704.2" y="1235.1" width="20.5" height="1.5" fill="#c0e7ef" rx="0.7"/><rect x="1727.8" y="1234.5" width="23.1" height="6.1" fill="#a2dce8" rx="2.2"/><rect x="1729.1" y="1235.1" width="20.5" height="1.5" fill="#c0e7ef" rx="0.7"/><rect x="1752.7" y="1234.5" width="23.1" height="6.1" fill="#a2dce8" rx="2.2"/><rect x="1754" y="1235.1" width="20.5" height="1.5" fill="#c0e7ef" rx="0.7"/><rect x="1777.6" y="1234.5" width="23.1" height="6.1" fill="#a2dce8" rx="2.2"/><rect x="1778.9" y="1235.1" width="20.5" height="1.5" fill="#c0e7ef" rx="0.7"/><rect x="1802.5" y="1234.5" width="23.1" height="6.1" fill="#a2dce8" rx="2.2"/><rect x="1803.8" y="1235.1" width="20.5" height="1.5" fill="#c0e7ef" rx="0.7"/><rect x="1827.4" y="1234.5" width="23.1" height="6.1" fill="#a2dce8" rx="2.2"/><rect x="1828.7" y="1235.1" width="20.5" height="1.5" fill="#c0e7ef" rx="0.7"/><rect x="1852.3" y="1234.5" width="23.1" height="6.1" fill="#a2dce8" rx="2.2"/><rect x="1853.6" y="1235.1" width="20.5" height="1.5" fill="#c0e7ef" rx="0.7"/><rect x="1877.2" y="1234.5" width="23.1" height="6.1" fill="#a2dce8" rx="2.2"/><rect x="1878.5" y="1235.1" width="20.5" height="1.5" fill="#c0e7ef" rx="0.7"/><rect x="1902.1" y="1234.5" width="23.1" height="6.1" fill="#a2dce8" rx="2.2"/><rect x="1903.4" y="1235.1" width="20.5" height="1.5" fill="#c0e7ef" rx="0.7"/><rect x="1927" y="1234.5" width="23.1" height="6.1" fill="#a2dce8" rx="2.2"/><rect x="1928.3" y="1235.1" width="20.5" height="1.5" fill="#c0e7ef" rx="0.7"/><rect x="1951.9" y="1234.5" width="23.1" height="6.1" fill="#a2dce8" rx="2.2"/><rect x="1953.2" y="1235.1" width="20.5" height="1.5" fill="#c0e7ef" rx="0.7"/><rect x="1976.8" y="1234.5" width="23.1" height="6.1" fill="#a2dce8" rx="2.2"/><rect x="1978.1" y="1235.1" width="20.5" height="1.5" fill="#c0e7ef" rx="0.7"/><rect x="2001.7" y="1234.5" width="23.1" height="6.1" fill="#a2dce8" rx="2.2"/><rect x="2003" y="1235.1" width="20.5" height="1.5" fill="#c0e7ef" rx="0.7"/><rect x="2026.6" y="1234.5" width="23.1" height="6.1" fill="#a2dce8" rx="2.2"/><rect x="2027.9" y="1235.1" width="20.5" height="1.5" fill="#c0e7ef" rx="0.7"/><rect x="2051.5" y="1234.5" width="23.1" height="6.1" fill="#a2dce8" rx="2.2"/><rect x="2052.8" y="1235.1" width="20.5" height="1.5" fill="#c0e7ef" rx="0.7"/><rect x="2275.6" y="1234.5" width="23.1" height="6.1" fill="#a2dce8" rx="2.2"/><rect x="2276.9" y="1235.1" width="20.5" height="1.5" fill="#c0e7ef" rx="0.7"/><rect x="2300.5" y="1234.5" width="23.1" height="6.1" fill="#a2dce8" rx="2.2"/><rect x="2301.8" y="1235.1" width="20.5" height="1.5" fill="#c0e7ef" rx="0.7"/><rect x="2325.4" y="1234.5" width="23.1" height="6.1" fill="#a2dce8" rx="2.2"/><rect x="2326.7" y="1235.1" width="20.5" height="1.5" fill="#c0e7ef" rx="0.7"/><rect x="2350.3" y="1234.5" width="23.1" height="6.1" fill="#a2dce8" rx="2.2"/><rect x="2351.6" y="1235.1" width="20.5" height="1.5" fill="#c0e7ef" rx="0.7"/><rect x="2375.2" y="1234.5" width="23.1" height="6.1" fill="#a2dce8" rx="2.2"/><rect x="2376.5" y="1235.1" width="20.5" height="1.5" fill="#c0e7ef" rx="0.7"/><rect x="2400.1" y="1234.5" width="23.1" height="6.1" fill="#a2dce8" rx="2.2"/><rect x="2401.4" y="1235.1" width="20.5" height="1.5" fill="#c0e7ef" rx="0.7"/><rect x="2425" y="1234.5" width="23.1" height="6.1" fill="#a2dce8" rx="2.2"/><rect x="2426.3" y="1235.1" width="20.5" height="1.5" fill="#c0e7ef" rx="0.7"/><rect x="2449.9" y="1234.5" width="23.1" height="6.1" fill="#a2dce8" rx="2.2"/><rect x="2451.2" y="1235.1" width="20.5" height="1.5" fill="#c0e7ef" rx="0.7"/><rect x="2474.8" y="1234.5" width="23.1" height="6.1" fill="#a2dce8" rx="2.2"/><rect x="2476.1" y="1235.1" width="20.5" height="1.5" fill="#c0e7ef" rx="0.7"/><rect x="2499.7" y="1234.5" width="23.1" height="6.1" fill="#a2dce8" rx="2.2"/><rect x="2501" y="1235.1" width="20.5" height="1.5" fill="#c0e7ef" rx="0.7"/><rect x="2524.6" y="1234.5" width="23.1" height="6.1" fill="#a2dce8" rx="2.2"/><rect x="2525.9" y="1235.1" width="20.5" height="1.5" fill="#c0e7ef" rx="0.7"/><rect x="2549.5" y="1234.5" width="23.1" height="6.1" fill="#a2dce8" rx="2.2"/><rect x="2550.8" y="1235.1" width="20.5" height="1.5" fill="#c0e7ef" rx="0.7"/><rect x="2574.4" y="1234.5" width="23.1" height="6.1" fill="#a2dce8" rx="2.2"/><rect x="2575.7" y="1235.1" width="20.5" height="1.5" fill="#c0e7ef" rx="0.7"/><rect x="2599.3" y="1234.5" width="23.1" height="6.1" fill="#a2dce8" rx="2.2"/><rect x="2600.6" y="1235.1" width="20.5" height="1.5" fill="#c0e7ef" rx="0.7"/><rect x="2624.2" y="1234.5" width="23.1" height="6.1" fill="#a2dce8" rx="2.2"/><rect x="2625.5" y="1235.1" width="20.5" height="1.5" fill="#c0e7ef" rx="0.7"/><rect x="2649.1" y="1234.5" width="23.1" height="6.1" fill="#a2dce8" rx="2.2"/><rect x="2650.4" y="1235.1" width="20.5" height="1.5" fill="#c0e7ef" rx="0.7"/><rect x="1279.6" y="1242.5" width="23.1" height="6.1" fill="#a6d0e6" rx="2.2"/><rect x="1280.9" y="1243.1" width="20.5" height="1.5" fill="#c2dfee" rx="0.7"/><rect x="1304.5" y="1242.5" width="23.1" height="6.1" fill="#a6d0e6" rx="2.2"/><rect x="1305.8" y="1243.1" width="20.5" height="1.5" fill="#c2dfee" rx="0.7"/><rect x="1329.4" y="1242.5" width="23.1" height="6.1" fill="#a6d0e6" rx="2.2"/><rect x="1330.7" y="1243.1" width="20.5" height="1.5" fill="#c2dfee" rx="0.7"/><rect x="1354.3" y="1242.5" width="23.1" height="6.1" fill="#a6d0e6" rx="2.2"/><rect x="1355.6" y="1243.1" width="20.5" height="1.5" fill="#c2dfee" rx="0.7"/><rect x="1379.2" y="1242.5" width="23.1" height="6.1" fill="#a6d0e6" rx="2.2"/><rect x="1380.5" y="1243.1" width="20.5" height="1.5" fill="#c2dfee" rx="0.7"/><rect x="1404.1" y="1242.5" width="23.1" height="6.1" fill="#a6d0e6" rx="2.2"/><rect x="1405.4" y="1243.1" width="20.5" height="1.5" fill="#c2dfee" rx="0.7"/><rect x="1429" y="1242.5" width="23.1" height="6.1" fill="#a6d0e6" rx="2.2"/><rect x="1430.3" y="1243.1" width="20.5" height="1.5" fill="#c2dfee" rx="0.7"/><rect x="1453.9" y="1242.5" width="23.1" height="6.1" fill="#a6d0e6" rx="2.2"/><rect x="1455.2" y="1243.1" width="20.5" height="1.5" fill="#c2dfee" rx="0.7"/><rect x="1478.8" y="1242.5" width="23.1" height="6.1" fill="#a6d0e6" rx="2.2"/><rect x="1480.1" y="1243.1" width="20.5" height="1.5" fill="#c2dfee" rx="0.7"/><rect x="1503.7" y="1242.5" width="23.1" height="6.1" fill="#a6d0e6" rx="2.2"/><rect x="1505" y="1243.1" width="20.5" height="1.5" fill="#c2dfee" rx="0.7"/><rect x="1528.6" y="1242.5" width="23.1" height="6.1" fill="#a6d0e6" rx="2.2"/><rect x="1529.9" y="1243.1" width="20.5" height="1.5" fill="#c2dfee" rx="0.7"/><rect x="1553.5" y="1242.5" width="23.1" height="6.1" fill="#a6d0e6" rx="2.2"/><rect x="1554.8" y="1243.1" width="20.5" height="1.5" fill="#c2dfee" rx="0.7"/><rect x="1578.4" y="1242.5" width="23.1" height="6.1" fill="#a6d0e6" rx="2.2"/><rect x="1579.7" y="1243.1" width="20.5" height="1.5" fill="#c2dfee" rx="0.7"/><rect x="1603.3" y="1242.5" width="23.1" height="6.1" fill="#a6d0e6" rx="2.2"/><rect x="1604.6" y="1243.1" width="20.5" height="1.5" fill="#c2dfee" rx="0.7"/><rect x="1628.2" y="1242.5" width="23.1" height="6.1" fill="#a6d0e6" rx="2.2"/><rect x="1629.5" y="1243.1" width="20.5" height="1.5" fill="#c2dfee" rx="0.7"/><rect x="1653.1" y="1242.5" width="23.1" height="6.1" fill="#a6d0e6" rx="2.2"/><rect x="1654.4" y="1243.1" width="20.5" height="1.5" fill="#c2dfee" rx="0.7"/><rect x="1678" y="1242.5" width="23.1" height="6.1" fill="#a6d0e6" rx="2.2"/><rect x="1679.3" y="1243.1" width="20.5" height="1.5" fill="#c2dfee" rx="0.7"/><rect x="1702.9" y="1242.5" width="23.1" height="6.1" fill="#a6d0e6" rx="2.2"/><rect x="1704.2" y="1243.1" width="20.5" height="1.5" fill="#c2dfee" rx="0.7"/><rect x="1727.8" y="1242.5" width="23.1" height="6.1" fill="#a6d0e6" rx="2.2"/><rect x="1729.1" y="1243.1" width="20.5" height="1.5" fill="#c2dfee" rx="0.7"/><rect x="1752.7" y="1242.5" width="23.1" height="6.1" fill="#a6d0e6" rx="2.2"/><rect x="1754" y="1243.1" width="20.5" height="1.5" fill="#c2dfee" rx="0.7"/><rect x="1777.6" y="1242.5" width="23.1" height="6.1" fill="#a6d0e6" rx="2.2"/><rect x="1778.9" y="1243.1" width="20.5" height="1.5" fill="#c2dfee" rx="0.7"/><rect x="1802.5" y="1242.5" width="23.1" height="6.1" fill="#a6d0e6" rx="2.2"/><rect x="1803.8" y="1243.1" width="20.5" height="1.5" fill="#c2dfee" rx="0.7"/><rect x="1827.4" y="1242.5" width="23.1" height="6.1" fill="#a6d0e6" rx="2.2"/><rect x="1828.7" y="1243.1" width="20.5" height="1.5" fill="#c2dfee" rx="0.7"/><rect x="1852.3" y="1242.5" width="23.1" height="6.1" fill="#a6d0e6" rx="2.2"/><rect x="1853.6" y="1243.1" width="20.5" height="1.5" fill="#c2dfee" rx="0.7"/><rect x="1877.2" y="1242.5" width="23.1" height="6.1" fill="#a6d0e6" rx="2.2"/><rect x="1878.5" y="1243.1" width="20.5" height="1.5" fill="#c2dfee" rx="0.7"/><rect x="1902.1" y="1242.5" width="23.1" height="6.1" fill="#a6d0e6" rx="2.2"/><rect x="1903.4" y="1243.1" width="20.5" height="1.5" fill="#c2dfee" rx="0.7"/><rect x="1927" y="1242.5" width="23.1" height="6.1" fill="#a6d0e6" rx="2.2"/><rect x="1928.3" y="1243.1" width="20.5" height="1.5" fill="#c2dfee" rx="0.7"/><rect x="1951.9" y="1242.5" width="23.1" height="6.1" fill="#a6d0e6" rx="2.2"/><rect x="1953.2" y="1243.1" width="20.5" height="1.5" fill="#c2dfee" rx="0.7"/><rect x="1976.8" y="1242.5" width="23.1" height="6.1" fill="#a6d0e6" rx="2.2"/><rect x="1978.1" y="1243.1" width="20.5" height="1.5" fill="#c2dfee" rx="0.7"/><rect x="2001.7" y="1242.5" width="23.1" height="6.1" fill="#a6d0e6" rx="2.2"/><rect x="2003" y="1243.1" width="20.5" height="1.5" fill="#c2dfee" rx="0.7"/><rect x="2026.6" y="1242.5" width="23.1" height="6.1" fill="#a6d0e6" rx="2.2"/><rect x="2027.9" y="1243.1" width="20.5" height="1.5" fill="#c2dfee" rx="0.7"/><rect x="2051.5" y="1242.5" width="23.1" height="6.1" fill="#a6d0e6" rx="2.2"/><rect x="2052.8" y="1243.1" width="20.5" height="1.5" fill="#c2dfee" rx="0.7"/><rect x="2275.6" y="1242.5" width="23.1" height="6.1" fill="#a6d0e6" rx="2.2"/><rect x="2276.9" y="1243.1" width="20.5" height="1.5" fill="#c2dfee" rx="0.7"/><rect x="2300.5" y="1242.5" width="23.1" height="6.1" fill="#a6d0e6" rx="2.2"/><rect x="2301.8" y="1243.1" width="20.5" height="1.5" fill="#c2dfee" rx="0.7"/><rect x="2325.4" y="1242.5" width="23.1" height="6.1" fill="#a6d0e6" rx="2.2"/><rect x="2326.7" y="1243.1" width="20.5" height="1.5" fill="#c2dfee" rx="0.7"/><rect x="2350.3" y="1242.5" width="23.1" height="6.1" fill="#a6d0e6" rx="2.2"/><rect x="2351.6" y="1243.1" width="20.5" height="1.5" fill="#c2dfee" rx="0.7"/><rect x="2375.2" y="1242.5" width="23.1" height="6.1" fill="#a6d0e6" rx="2.2"/><rect x="2376.5" y="1243.1" width="20.5" height="1.5" fill="#c2dfee" rx="0.7"/><rect x="2400.1" y="1242.5" width="23.1" height="6.1" fill="#a6d0e6" rx="2.2"/><rect x="2401.4" y="1243.1" width="20.5" height="1.5" fill="#c2dfee" rx="0.7"/><rect x="2425" y="1242.5" width="23.1" height="6.1" fill="#a6d0e6" rx="2.2"/><rect x="2426.3" y="1243.1" width="20.5" height="1.5" fill="#c2dfee" rx="0.7"/><rect x="2449.9" y="1242.5" width="23.1" height="6.1" fill="#a6d0e6" rx="2.2"/><rect x="2451.2" y="1243.1" width="20.5" height="1.5" fill="#c2dfee" rx="0.7"/><rect x="2474.8" y="1242.5" width="23.1" height="6.1" fill="#a6d0e6" rx="2.2"/><rect x="2476.1" y="1243.1" width="20.5" height="1.5" fill="#c2dfee" rx="0.7"/><rect x="2499.7" y="1242.5" width="23.1" height="6.1" fill="#a6d0e6" rx="2.2"/><rect x="2501" y="1243.1" width="20.5" height="1.5" fill="#c2dfee" rx="0.7"/><rect x="2524.6" y="1242.5" width="23.1" height="6.1" fill="#a6d0e6" rx="2.2"/><rect x="2525.9" y="1243.1" width="20.5" height="1.5" fill="#c2dfee" rx="0.7"/><rect x="2549.5" y="1242.5" width="23.1" height="6.1" fill="#a6d0e6" rx="2.2"/><rect x="2550.8" y="1243.1" width="20.5" height="1.5" fill="#c2dfee" rx="0.7"/><rect x="2574.4" y="1242.5" width="23.1" height="6.1" fill="#a6d0e6" rx="2.2"/><rect x="2575.7" y="1243.1" width="20.5" height="1.5" fill="#c2dfee" rx="0.7"/><rect x="2599.3" y="1242.5" width="23.1" height="6.1" fill="#a6d0e6" rx="2.2"/><rect x="2600.6" y="1243.1" width="20.5" height="1.5" fill="#c2dfee" rx="0.7"/><rect x="2624.2" y="1242.5" width="23.1" height="6.1" fill="#a6d0e6" rx="2.2"/><rect x="2625.5" y="1243.1" width="20.5" height="1.5" fill="#c2dfee" rx="0.7"/><rect x="2649.1" y="1242.5" width="23.1" height="6.1" fill="#a6d0e6" rx="2.2"/><rect x="2650.4" y="1243.1" width="20.5" height="1.5" fill="#c2dfee" rx="0.7"/><rect x="881.2" y="1250.5" width="48" height="6.1" fill="#aec6ea" rx="2.2"/><rect x="882.5" y="1251.1" width="45.4" height="1.5" fill="#c8d8f1" rx="0.7"/><rect x="931" y="1250.5" width="48" height="6.1" fill="#aec6ea" rx="2.2"/><rect x="932.3" y="1251.1" width="45.4" height="1.5" fill="#c8d8f1" rx="0.7"/><rect x="980.8" y="1250.5" width="48" height="6.1" fill="#aec6ea" rx="2.2"/><rect x="982.1" y="1251.1" width="45.4" height="1.5" fill="#c8d8f1" rx="0.7"/><rect x="1030.6" y="1250.5" width="48" height="6.1" fill="#aec6ea" rx="2.2"/><rect x="1031.9" y="1251.1" width="45.4" height="1.5" fill="#c8d8f1" rx="0.7"/><rect x="1279.6" y="1250.5" width="48" height="6.1" fill="#aec6ea" rx="2.2"/><rect x="1280.9" y="1251.1" width="45.4" height="1.5" fill="#c8d8f1" rx="0.7"/><rect x="1329.4" y="1250.5" width="48" height="6.1" fill="#aec6ea" rx="2.2"/><rect x="1330.7" y="1251.1" width="45.4" height="1.5" fill="#c8d8f1" rx="0.7"/><rect x="1379.2" y="1250.5" width="48" height="6.1" fill="#aec6ea" rx="2.2"/><rect x="1380.5" y="1251.1" width="45.4" height="1.5" fill="#c8d8f1" rx="0.7"/><rect x="1429" y="1250.5" width="48" height="6.1" fill="#aec6ea" rx="2.2"/><rect x="1430.3" y="1251.1" width="45.4" height="1.5" fill="#c8d8f1" rx="0.7"/><rect x="1478.8" y="1250.5" width="48" height="6.1" fill="#aec6ea" rx="2.2"/><rect x="1480.1" y="1251.1" width="45.4" height="1.5" fill="#c8d8f1" rx="0.7"/><rect x="1528.6" y="1250.5" width="48" height="6.1" fill="#aec6ea" rx="2.2"/><rect x="1529.9" y="1251.1" width="45.4" height="1.5" fill="#c8d8f1" rx="0.7"/><rect x="1578.4" y="1250.5" width="48" height="6.1" fill="#aec6ea" rx="2.2"/><rect x="1579.7" y="1251.1" width="45.4" height="1.5" fill="#c8d8f1" rx="0.7"/><rect x="1628.2" y="1250.5" width="48" height="6.1" fill="#aec6ea" rx="2.2"/><rect x="1629.5" y="1251.1" width="45.4" height="1.5" fill="#c8d8f1" rx="0.7"/><rect x="1877.2" y="1250.5" width="48" height="6.1" fill="#aec6ea" rx="2.2"/><rect x="1878.5" y="1251.1" width="45.4" height="1.5" fill="#c8d8f1" rx="0.7"/><rect x="1927" y="1250.5" width="48" height="6.1" fill="#aec6ea" rx="2.2"/><rect x="1928.3" y="1251.1" width="45.4" height="1.5" fill="#c8d8f1" rx="0.7"/><rect x="1976.8" y="1250.5" width="48" height="6.1" fill="#aec6ea" rx="2.2"/><rect x="1978.1" y="1251.1" width="45.4" height="1.5" fill="#c8d8f1" rx="0.7"/><rect x="2026.6" y="1250.5" width="48" height="6.1" fill="#aec6ea" rx="2.2"/><rect x="2027.9" y="1251.1" width="45.4" height="1.5" fill="#c8d8f1" rx="0.7"/><rect x="2275.6" y="1250.5" width="48" height="6.1" fill="#aec6ea" rx="2.2"/><rect x="2276.9" y="1251.1" width="45.4" height="1.5" fill="#c8d8f1" rx="0.7"/><rect x="2325.4" y="1250.5" width="48" height="6.1" fill="#aec6ea" rx="2.2"/><rect x="2326.7" y="1251.1" width="45.4" height="1.5" fill="#c8d8f1" rx="0.7"/><rect x="2375.2" y="1250.5" width="48" height="6.1" fill="#aec6ea" rx="2.2"/><rect x="2376.5" y="1251.1" width="45.4" height="1.5" fill="#c8d8f1" rx="0.7"/><rect x="2425" y="1250.5" width="48" height="6.1" fill="#aec6ea" rx="2.2"/><rect x="2426.3" y="1251.1" width="45.4" height="1.5" fill="#c8d8f1" rx="0.7"/><rect x="2474.8" y="1250.5" width="48" height="6.1" fill="#aec6ea" rx="2.2"/><rect x="2476.1" y="1251.1" width="45.4" height="1.5" fill="#c8d8f1" rx="0.7"/><rect x="2524.6" y="1250.5" width="48" height="6.1" fill="#aec6ea" rx="2.2"/><rect x="2525.9" y="1251.1" width="45.4" height="1.5" fill="#c8d8f1" rx="0.7"/><rect x="2574.4" y="1250.5" width="48" height="6.1" fill="#aec6ea" rx="2.2"/><rect x="2575.7" y="1251.1" width="45.4" height="1.5" fill="#c8d8f1" rx="0.7"/><rect x="2624.2" y="1250.5" width="48" height="6.1" fill="#aec6ea" rx="2.2"/><rect x="2625.5" y="1251.1" width="45.4" height="1.5" fill="#c8d8f1" rx="0.7"/><rect x="881.2" y="1258.5" width="23.1" height="6.1" fill="#b6bee8" rx="2.2"/><rect x="882.5" y="1259.1" width="20.5" height="1.5" fill="#cdd3ef" rx="0.7"/><rect x="906.1" y="1258.5" width="23.1" height="6.1" fill="#b6bee8" rx="2.2"/><rect x="907.4" y="1259.1" width="20.5" height="1.5" fill="#cdd3ef" rx="0.7"/><rect x="931" y="1258.5" width="23.1" height="6.1" fill="#b6bee8" rx="2.2"/><rect x="932.3" y="1259.1" width="20.5" height="1.5" fill="#cdd3ef" rx="0.7"/><rect x="955.9" y="1258.5" width="23.1" height="6.1" fill="#b6bee8" rx="2.2"/><rect x="957.2" y="1259.1" width="20.5" height="1.5" fill="#cdd3ef" rx="0.7"/><rect x="980.8" y="1258.5" width="23.1" height="6.1" fill="#b6bee8" rx="2.2"/><rect x="982.1" y="1259.1" width="20.5" height="1.5" fill="#cdd3ef" rx="0.7"/><rect x="1005.7" y="1258.5" width="23.1" height="6.1" fill="#b6bee8" rx="2.2"/><rect x="1007" y="1259.1" width="20.5" height="1.5" fill="#cdd3ef" rx="0.7"/><rect x="1030.6" y="1258.5" width="23.1" height="6.1" fill="#b6bee8" rx="2.2"/><rect x="1031.9" y="1259.1" width="20.5" height="1.5" fill="#cdd3ef" rx="0.7"/><rect x="1055.5" y="1258.5" width="23.1" height="6.1" fill="#b6bee8" rx="2.2"/><rect x="1056.8" y="1259.1" width="20.5" height="1.5" fill="#cdd3ef" rx="0.7"/><rect x="1279.6" y="1258.5" width="23.1" height="6.1" fill="#b6bee8" rx="2.2"/><rect x="1280.9" y="1259.1" width="20.5" height="1.5" fill="#cdd3ef" rx="0.7"/><rect x="1304.5" y="1258.5" width="23.1" height="6.1" fill="#b6bee8" rx="2.2"/><rect x="1305.8" y="1259.1" width="20.5" height="1.5" fill="#cdd3ef" rx="0.7"/><rect x="1329.4" y="1258.5" width="23.1" height="6.1" fill="#b6bee8" rx="2.2"/><rect x="1330.7" y="1259.1" width="20.5" height="1.5" fill="#cdd3ef" rx="0.7"/><rect x="1354.3" y="1258.5" width="23.1" height="6.1" fill="#b6bee8" rx="2.2"/><rect x="1355.6" y="1259.1" width="20.5" height="1.5" fill="#cdd3ef" rx="0.7"/><rect x="1379.2" y="1258.5" width="23.1" height="6.1" fill="#b6bee8" rx="2.2"/><rect x="1380.5" y="1259.1" width="20.5" height="1.5" fill="#cdd3ef" rx="0.7"/><rect x="1404.1" y="1258.5" width="23.1" height="6.1" fill="#b6bee8" rx="2.2"/><rect x="1405.4" y="1259.1" width="20.5" height="1.5" fill="#cdd3ef" rx="0.7"/><rect x="1429" y="1258.5" width="23.1" height="6.1" fill="#b6bee8" rx="2.2"/><rect x="1430.3" y="1259.1" width="20.5" height="1.5" fill="#cdd3ef" rx="0.7"/><rect x="1453.9" y="1258.5" width="23.1" height="6.1" fill="#b6bee8" rx="2.2"/><rect x="1455.2" y="1259.1" width="20.5" height="1.5" fill="#cdd3ef" rx="0.7"/><rect x="1478.8" y="1258.5" width="23.1" height="6.1" fill="#b6bee8" rx="2.2"/><rect x="1480.1" y="1259.1" width="20.5" height="1.5" fill="#cdd3ef" rx="0.7"/><rect x="1503.7" y="1258.5" width="23.1" height="6.1" fill="#b6bee8" rx="2.2"/><rect x="1505" y="1259.1" width="20.5" height="1.5" fill="#cdd3ef" rx="0.7"/><rect x="1528.6" y="1258.5" width="23.1" height="6.1" fill="#b6bee8" rx="2.2"/><rect x="1529.9" y="1259.1" width="20.5" height="1.5" fill="#cdd3ef" rx="0.7"/><rect x="1553.5" y="1258.5" width="23.1" height="6.1" fill="#b6bee8" rx="2.2"/><rect x="1554.8" y="1259.1" width="20.5" height="1.5" fill="#cdd3ef" rx="0.7"/><rect x="1578.4" y="1258.5" width="23.1" height="6.1" fill="#b6bee8" rx="2.2"/><rect x="1579.7" y="1259.1" width="20.5" height="1.5" fill="#cdd3ef" rx="0.7"/><rect x="1603.3" y="1258.5" width="23.1" height="6.1" fill="#b6bee8" rx="2.2"/><rect x="1604.6" y="1259.1" width="20.5" height="1.5" fill="#cdd3ef" rx="0.7"/><rect x="1628.2" y="1258.5" width="23.1" height="6.1" fill="#b6bee8" rx="2.2"/><rect x="1629.5" y="1259.1" width="20.5" height="1.5" fill="#cdd3ef" rx="0.7"/><rect x="1653.1" y="1258.5" width="23.1" height="6.1" fill="#b6bee8" rx="2.2"/><rect x="1654.4" y="1259.1" width="20.5" height="1.5" fill="#cdd3ef" rx="0.7"/><rect x="1877.2" y="1258.5" width="23.1" height="6.1" fill="#b6bee8" rx="2.2"/><rect x="1878.5" y="1259.1" width="20.5" height="1.5" fill="#cdd3ef" rx="0.7"/><rect x="1902.1" y="1258.5" width="23.1" height="6.1" fill="#b6bee8" rx="2.2"/><rect x="1903.4" y="1259.1" width="20.5" height="1.5" fill="#cdd3ef" rx="0.7"/><rect x="1927" y="1258.5" width="23.1" height="6.1" fill="#b6bee8" rx="2.2"/><rect x="1928.3" y="1259.1" width="20.5" height="1.5" fill="#cdd3ef" rx="0.7"/><rect x="1951.9" y="1258.5" width="23.1" height="6.1" fill="#b6bee8" rx="2.2"/><rect x="1953.2" y="1259.1" width="20.5" height="1.5" fill="#cdd3ef" rx="0.7"/><rect x="1976.8" y="1258.5" width="23.1" height="6.1" fill="#b6bee8" rx="2.2"/><rect x="1978.1" y="1259.1" width="20.5" height="1.5" fill="#cdd3ef" rx="0.7"/><rect x="2001.7" y="1258.5" width="23.1" height="6.1" fill="#b6bee8" rx="2.2"/><rect x="2003" y="1259.1" width="20.5" height="1.5" fill="#cdd3ef" rx="0.7"/><rect x="2026.6" y="1258.5" width="23.1" height="6.1" fill="#b6bee8" rx="2.2"/><rect x="2027.9" y="1259.1" width="20.5" height="1.5" fill="#cdd3ef" rx="0.7"/><rect x="2051.5" y="1258.5" width="23.1" height="6.1" fill="#b6bee8" rx="2.2"/><rect x="2052.8" y="1259.1" width="20.5" height="1.5" fill="#cdd3ef" rx="0.7"/><rect x="2275.6" y="1258.5" width="23.1" height="6.1" fill="#b6bee8" rx="2.2"/><rect x="2276.9" y="1259.1" width="20.5" height="1.5" fill="#cdd3ef" rx="0.7"/><rect x="2300.5" y="1258.5" width="23.1" height="6.1" fill="#b6bee8" rx="2.2"/><rect x="2301.8" y="1259.1" width="20.5" height="1.5" fill="#cdd3ef" rx="0.7"/><rect x="2325.4" y="1258.5" width="23.1" height="6.1" fill="#b6bee8" rx="2.2"/><rect x="2326.7" y="1259.1" width="20.5" height="1.5" fill="#cdd3ef" rx="0.7"/><rect x="2350.3" y="1258.5" width="23.1" height="6.1" fill="#b6bee8" rx="2.2"/><rect x="2351.6" y="1259.1" width="20.5" height="1.5" fill="#cdd3ef" rx="0.7"/><rect x="2375.2" y="1258.5" width="23.1" height="6.1" fill="#b6bee8" rx="2.2"/><rect x="2376.5" y="1259.1" width="20.5" height="1.5" fill="#cdd3ef" rx="0.7"/><rect x="2400.1" y="1258.5" width="23.1" height="6.1" fill="#b6bee8" rx="2.2"/><rect x="2401.4" y="1259.1" width="20.5" height="1.5" fill="#cdd3ef" rx="0.7"/><rect x="2425" y="1258.5" width="23.1" height="6.1" fill="#b6bee8" rx="2.2"/><rect x="2426.3" y="1259.1" width="20.5" height="1.5" fill="#cdd3ef" rx="0.7"/><rect x="2449.9" y="1258.5" width="23.1" height="6.1" fill="#b6bee8" rx="2.2"/><rect x="2451.2" y="1259.1" width="20.5" height="1.5" fill="#cdd3ef" rx="0.7"/><rect x="2474.8" y="1258.5" width="23.1" height="6.1" fill="#b6bee8" rx="2.2"/><rect x="2476.1" y="1259.1" width="20.5" height="1.5" fill="#cdd3ef" rx="0.7"/><rect x="2499.7" y="1258.5" width="23.1" height="6.1" fill="#b6bee8" rx="2.2"/><rect x="2501" y="1259.1" width="20.5" height="1.5" fill="#cdd3ef" rx="0.7"/><rect x="2524.6" y="1258.5" width="23.1" height="6.1" fill="#b6bee8" rx="2.2"/><rect x="2525.9" y="1259.1" width="20.5" height="1.5" fill="#cdd3ef" rx="0.7"/><rect x="2549.5" y="1258.5" width="23.1" height="6.1" fill="#b6bee8" rx="2.2"/><rect x="2550.8" y="1259.1" width="20.5" height="1.5" fill="#cdd3ef" rx="0.7"/><rect x="2574.4" y="1258.5" width="23.1" height="6.1" fill="#b6bee8" rx="2.2"/><rect x="2575.7" y="1259.1" width="20.5" height="1.5" fill="#cdd3ef" rx="0.7"/><rect x="2599.3" y="1258.5" width="23.1" height="6.1" fill="#b6bee8" rx="2.2"/><rect x="2600.6" y="1259.1" width="20.5" height="1.5" fill="#cdd3ef" rx="0.7"/><rect x="2624.2" y="1258.5" width="23.1" height="6.1" fill="#b6bee8" rx="2.2"/><rect x="2625.5" y="1259.1" width="20.5" height="1.5" fill="#cdd3ef" rx="0.7"/><rect x="2649.1" y="1258.5" width="23.1" height="6.1" fill="#b6bee8" rx="2.2"/><rect x="2650.4" y="1259.1" width="20.5" height="1.5" fill="#cdd3ef" rx="0.7"/><rect x="1080.4" y="1266.5" width="172.5" height="6.1" fill="#c0b4ea" rx="2.2"/><rect x="1081.7" y="1267.1" width="169.9" height="1.5" fill="#d4ccf1" rx="0.7"/><rect x="1453.9" y="1266.5" width="23.1" height="6.1" fill="#c0b4ea" rx="2.2"/><rect x="1455.2" y="1267.1" width="20.5" height="1.5" fill="#d4ccf1" rx="0.7"/><rect x="1653.1" y="1266.5" width="23.1" height="6.1" fill="#c0b4ea" rx="2.2"/><rect x="1654.4" y="1267.1" width="20.5" height="1.5" fill="#d4ccf1" rx="0.7"/><rect x="2076.4" y="1266.5" width="172.5" height="6.1" fill="#c0b4ea" rx="2.2"/><rect x="2077.7" y="1267.1" width="169.9" height="1.5" fill="#d4ccf1" rx="0.7"/><rect x="2449.9" y="1266.5" width="23.1" height="6.1" fill="#c0b4ea" rx="2.2"/><rect x="2451.2" y="1267.1" width="20.5" height="1.5" fill="#d4ccf1" rx="0.7"/><rect x="2649.1" y="1266.5" width="23.1" height="6.1" fill="#c0b4ea" rx="2.2"/><rect x="2650.4" y="1267.1" width="20.5" height="1.5" fill="#d4ccf1" rx="0.7"/><rect x="1080.4" y="1274.5" width="197.4" height="6.1" fill="#c6aae6" rx="2.2"/><rect x="1081.7" y="1275.1" width="194.8" height="1.5" fill="#d8c5ee" rx="0.7"/><rect x="2076.4" y="1274.5" width="197.4" height="6.1" fill="#c6aae6" rx="2.2"/><rect x="2077.7" y="1275.1" width="194.8" height="1.5" fill="#d8c5ee" rx="0.7"/><rect x="1080.4" y="1282.5" width="197.4" height="6.1" fill="#cca2e4" rx="2.2"/><rect x="1081.7" y="1283.1" width="194.8" height="1.5" fill="#dcc0ed" rx="0.7"/><rect x="2076.4" y="1282.5" width="197.4" height="6.1" fill="#cca2e4" rx="2.2"/><rect x="2077.7" y="1283.1" width="194.8" height="1.5" fill="#dcc0ed" rx="0.7"/><rect x="1279.6" y="1290.5" width="23.1" height="6.1" fill="#d29ee4" rx="2.2"/><rect x="1280.9" y="1291.1" width="20.5" height="1.5" fill="#e0bded" rx="0.7"/><rect x="1304.5" y="1290.5" width="23.1" height="6.1" fill="#d29ee4" rx="2.2"/><rect x="1305.8" y="1291.1" width="20.5" height="1.5" fill="#e0bded" rx="0.7"/><rect x="1329.4" y="1290.5" width="23.1" height="6.1" fill="#d29ee4" rx="2.2"/><rect x="1330.7" y="1291.1" width="20.5" height="1.5" fill="#e0bded" rx="0.7"/><rect x="1354.3" y="1290.5" width="23.1" height="6.1" fill="#d29ee4" rx="2.2"/><rect x="1355.6" y="1291.1" width="20.5" height="1.5" fill="#e0bded" rx="0.7"/><rect x="1379.2" y="1290.5" width="23.1" height="6.1" fill="#d29ee4" rx="2.2"/><rect x="1380.5" y="1291.1" width="20.5" height="1.5" fill="#e0bded" rx="0.7"/><rect x="1404.1" y="1290.5" width="23.1" height="6.1" fill="#d29ee4" rx="2.2"/><rect x="1405.4" y="1291.1" width="20.5" height="1.5" fill="#e0bded" rx="0.7"/><rect x="1429" y="1290.5" width="23.1" height="6.1" fill="#d29ee4" rx="2.2"/><rect x="1430.3" y="1291.1" width="20.5" height="1.5" fill="#e0bded" rx="0.7"/><rect x="1453.9" y="1290.5" width="23.1" height="6.1" fill="#d29ee4" rx="2.2"/><rect x="1455.2" y="1291.1" width="20.5" height="1.5" fill="#e0bded" rx="0.7"/><rect x="1478.8" y="1290.5" width="23.1" height="6.1" fill="#d29ee4" rx="2.2"/><rect x="1480.1" y="1291.1" width="20.5" height="1.5" fill="#e0bded" rx="0.7"/><rect x="1503.7" y="1290.5" width="23.1" height="6.1" fill="#d29ee4" rx="2.2"/><rect x="1505" y="1291.1" width="20.5" height="1.5" fill="#e0bded" rx="0.7"/><rect x="1528.6" y="1290.5" width="23.1" height="6.1" fill="#d29ee4" rx="2.2"/><rect x="1529.9" y="1291.1" width="20.5" height="1.5" fill="#e0bded" rx="0.7"/><rect x="1553.5" y="1290.5" width="23.1" height="6.1" fill="#d29ee4" rx="2.2"/><rect x="1554.8" y="1291.1" width="20.5" height="1.5" fill="#e0bded" rx="0.7"/><rect x="1578.4" y="1290.5" width="23.1" height="6.1" fill="#d29ee4" rx="2.2"/><rect x="1579.7" y="1291.1" width="20.5" height="1.5" fill="#e0bded" rx="0.7"/><rect x="1603.3" y="1290.5" width="23.1" height="6.1" fill="#d29ee4" rx="2.2"/><rect x="1604.6" y="1291.1" width="20.5" height="1.5" fill="#e0bded" rx="0.7"/><rect x="1628.2" y="1290.5" width="23.1" height="6.1" fill="#d29ee4" rx="2.2"/><rect x="1629.5" y="1291.1" width="20.5" height="1.5" fill="#e0bded" rx="0.7"/><rect x="1653.1" y="1290.5" width="23.1" height="6.1" fill="#d29ee4" rx="2.2"/><rect x="1654.4" y="1291.1" width="20.5" height="1.5" fill="#e0bded" rx="0.7"/><rect x="1678" y="1290.5" width="23.1" height="6.1" fill="#d29ee4" rx="2.2"/><rect x="1679.3" y="1291.1" width="20.5" height="1.5" fill="#e0bded" rx="0.7"/><rect x="1702.9" y="1290.5" width="23.1" height="6.1" fill="#d29ee4" rx="2.2"/><rect x="1704.2" y="1291.1" width="20.5" height="1.5" fill="#e0bded" rx="0.7"/><rect x="1727.8" y="1290.5" width="23.1" height="6.1" fill="#d29ee4" rx="2.2"/><rect x="1729.1" y="1291.1" width="20.5" height="1.5" fill="#e0bded" rx="0.7"/><rect x="1752.7" y="1290.5" width="23.1" height="6.1" fill="#d29ee4" rx="2.2"/><rect x="1754" y="1291.1" width="20.5" height="1.5" fill="#e0bded" rx="0.7"/><rect x="1777.6" y="1290.5" width="23.1" height="6.1" fill="#d29ee4" rx="2.2"/><rect x="1778.9" y="1291.1" width="20.5" height="1.5" fill="#e0bded" rx="0.7"/><rect x="1802.5" y="1290.5" width="23.1" height="6.1" fill="#d29ee4" rx="2.2"/><rect x="1803.8" y="1291.1" width="20.5" height="1.5" fill="#e0bded" rx="0.7"/><rect x="1827.4" y="1290.5" width="23.1" height="6.1" fill="#d29ee4" rx="2.2"/><rect x="1828.7" y="1291.1" width="20.5" height="1.5" fill="#e0bded" rx="0.7"/><rect x="1852.3" y="1290.5" width="23.1" height="6.1" fill="#d29ee4" rx="2.2"/><rect x="1853.6" y="1291.1" width="20.5" height="1.5" fill="#e0bded" rx="0.7"/><rect x="1877.2" y="1290.5" width="23.1" height="6.1" fill="#d29ee4" rx="2.2"/><rect x="1878.5" y="1291.1" width="20.5" height="1.5" fill="#e0bded" rx="0.7"/><rect x="1902.1" y="1290.5" width="23.1" height="6.1" fill="#d29ee4" rx="2.2"/><rect x="1903.4" y="1291.1" width="20.5" height="1.5" fill="#e0bded" rx="0.7"/><rect x="1927" y="1290.5" width="23.1" height="6.1" fill="#d29ee4" rx="2.2"/><rect x="1928.3" y="1291.1" width="20.5" height="1.5" fill="#e0bded" rx="0.7"/><rect x="1951.9" y="1290.5" width="23.1" height="6.1" fill="#d29ee4" rx="2.2"/><rect x="1953.2" y="1291.1" width="20.5" height="1.5" fill="#e0bded" rx="0.7"/><rect x="1976.8" y="1290.5" width="23.1" height="6.1" fill="#d29ee4" rx="2.2"/><rect x="1978.1" y="1291.1" width="20.5" height="1.5" fill="#e0bded" rx="0.7"/><rect x="2001.7" y="1290.5" width="23.1" height="6.1" fill="#d29ee4" rx="2.2"/><rect x="2003" y="1291.1" width="20.5" height="1.5" fill="#e0bded" rx="0.7"/><rect x="2026.6" y="1290.5" width="23.1" height="6.1" fill="#d29ee4" rx="2.2"/><rect x="2027.9" y="1291.1" width="20.5" height="1.5" fill="#e0bded" rx="0.7"/><rect x="2051.5" y="1290.5" width="23.1" height="6.1" fill="#d29ee4" rx="2.2"/><rect x="2052.8" y="1291.1" width="20.5" height="1.5" fill="#e0bded" rx="0.7"/><rect x="2275.6" y="1290.5" width="23.1" height="6.1" fill="#d29ee4" rx="2.2"/><rect x="2276.9" y="1291.1" width="20.5" height="1.5" fill="#e0bded" rx="0.7"/><rect x="2300.5" y="1290.5" width="23.1" height="6.1" fill="#d29ee4" rx="2.2"/><rect x="2301.8" y="1291.1" width="20.5" height="1.5" fill="#e0bded" rx="0.7"/><rect x="2325.4" y="1290.5" width="23.1" height="6.1" fill="#d29ee4" rx="2.2"/><rect x="2326.7" y="1291.1" width="20.5" height="1.5" fill="#e0bded" rx="0.7"/><rect x="2350.3" y="1290.5" width="23.1" height="6.1" fill="#d29ee4" rx="2.2"/><rect x="2351.6" y="1291.1" width="20.5" height="1.5" fill="#e0bded" rx="0.7"/><rect x="2375.2" y="1290.5" width="23.1" height="6.1" fill="#d29ee4" rx="2.2"/><rect x="2376.5" y="1291.1" width="20.5" height="1.5" fill="#e0bded" rx="0.7"/><rect x="2400.1" y="1290.5" width="23.1" height="6.1" fill="#d29ee4" rx="2.2"/><rect x="2401.4" y="1291.1" width="20.5" height="1.5" fill="#e0bded" rx="0.7"/><rect x="2425" y="1290.5" width="23.1" height="6.1" fill="#d29ee4" rx="2.2"/><rect x="2426.3" y="1291.1" width="20.5" height="1.5" fill="#e0bded" rx="0.7"/><rect x="2449.9" y="1290.5" width="23.1" height="6.1" fill="#d29ee4" rx="2.2"/><rect x="2451.2" y="1291.1" width="20.5" height="1.5" fill="#e0bded" rx="0.7"/><rect x="2474.8" y="1290.5" width="23.1" height="6.1" fill="#d29ee4" rx="2.2"/><rect x="2476.1" y="1291.1" width="20.5" height="1.5" fill="#e0bded" rx="0.7"/><rect x="2499.7" y="1290.5" width="23.1" height="6.1" fill="#d29ee4" rx="2.2"/><rect x="2501" y="1291.1" width="20.5" height="1.5" fill="#e0bded" rx="0.7"/><rect x="2524.6" y="1290.5" width="23.1" height="6.1" fill="#d29ee4" rx="2.2"/><rect x="2525.9" y="1291.1" width="20.5" height="1.5" fill="#e0bded" rx="0.7"/><rect x="2549.5" y="1290.5" width="23.1" height="6.1" fill="#d29ee4" rx="2.2"/><rect x="2550.8" y="1291.1" width="20.5" height="1.5" fill="#e0bded" rx="0.7"/><rect x="2574.4" y="1290.5" width="23.1" height="6.1" fill="#d29ee4" rx="2.2"/><rect x="2575.7" y="1291.1" width="20.5" height="1.5" fill="#e0bded" rx="0.7"/><rect x="2599.3" y="1290.5" width="23.1" height="6.1" fill="#d29ee4" rx="2.2"/><rect x="2600.6" y="1291.1" width="20.5" height="1.5" fill="#e0bded" rx="0.7"/><rect x="2624.2" y="1290.5" width="23.1" height="6.1" fill="#d29ee4" rx="2.2"/><rect x="2625.5" y="1291.1" width="20.5" height="1.5" fill="#e0bded" rx="0.7"/><rect x="2649.1" y="1290.5" width="23.1" height="6.1" fill="#d29ee4" rx="2.2"/><rect x="2650.4" y="1291.1" width="20.5" height="1.5" fill="#e0bded" rx="0.7"/><rect x="682" y="1298.5" width="23.1" height="6.1" fill="#da9ee8" rx="2.2"/><rect x="683.3" y="1299.1" width="20.5" height="1.5" fill="#e6bdef" rx="0.7"/><rect x="706.9" y="1298.5" width="23.1" height="6.1" fill="#da9ee8" rx="2.2"/><rect x="708.2" y="1299.1" width="20.5" height="1.5" fill="#e6bdef" rx="0.7"/><rect x="731.8" y="1298.5" width="23.1" height="6.1" fill="#da9ee8" rx="2.2"/><rect x="733.1" y="1299.1" width="20.5" height="1.5" fill="#e6bdef" rx="0.7"/><rect x="756.7" y="1298.5" width="23.1" height="6.1" fill="#da9ee8" rx="2.2"/><rect x="758" y="1299.1" width="20.5" height="1.5" fill="#e6bdef" rx="0.7"/><rect x="781.6" y="1298.5" width="23.1" height="6.1" fill="#da9ee8" rx="2.2"/><rect x="782.9" y="1299.1" width="20.5" height="1.5" fill="#e6bdef" rx="0.7"/><rect x="806.5" y="1298.5" width="23.1" height="6.1" fill="#da9ee8" rx="2.2"/><rect x="807.8" y="1299.1" width="20.5" height="1.5" fill="#e6bdef" rx="0.7"/><rect x="831.4" y="1298.5" width="23.1" height="6.1" fill="#da9ee8" rx="2.2"/><rect x="832.7" y="1299.1" width="20.5" height="1.5" fill="#e6bdef" rx="0.7"/><rect x="856.3" y="1298.5" width="23.1" height="6.1" fill="#da9ee8" rx="2.2"/><rect x="857.6" y="1299.1" width="20.5" height="1.5" fill="#e6bdef" rx="0.7"/><rect x="881.2" y="1298.5" width="23.1" height="6.1" fill="#da9ee8" rx="2.2"/><rect x="882.5" y="1299.1" width="20.5" height="1.5" fill="#e6bdef" rx="0.7"/><rect x="906.1" y="1298.5" width="23.1" height="6.1" fill="#da9ee8" rx="2.2"/><rect x="907.4" y="1299.1" width="20.5" height="1.5" fill="#e6bdef" rx="0.7"/><rect x="931" y="1298.5" width="23.1" height="6.1" fill="#da9ee8" rx="2.2"/><rect x="932.3" y="1299.1" width="20.5" height="1.5" fill="#e6bdef" rx="0.7"/><rect x="955.9" y="1298.5" width="23.1" height="6.1" fill="#da9ee8" rx="2.2"/><rect x="957.2" y="1299.1" width="20.5" height="1.5" fill="#e6bdef" rx="0.7"/><rect x="980.8" y="1298.5" width="23.1" height="6.1" fill="#da9ee8" rx="2.2"/><rect x="982.1" y="1299.1" width="20.5" height="1.5" fill="#e6bdef" rx="0.7"/><rect x="1005.7" y="1298.5" width="23.1" height="6.1" fill="#da9ee8" rx="2.2"/><rect x="1007" y="1299.1" width="20.5" height="1.5" fill="#e6bdef" rx="0.7"/><rect x="1030.6" y="1298.5" width="23.1" height="6.1" fill="#da9ee8" rx="2.2"/><rect x="1031.9" y="1299.1" width="20.5" height="1.5" fill="#e6bdef" rx="0.7"/><rect x="1055.5" y="1298.5" width="23.1" height="6.1" fill="#da9ee8" rx="2.2"/><rect x="1056.8" y="1299.1" width="20.5" height="1.5" fill="#e6bdef" rx="0.7"/><rect x="1877.2" y="1298.5" width="23.1" height="6.1" fill="#da9ee8" rx="2.2"/><rect x="1878.5" y="1299.1" width="20.5" height="1.5" fill="#e6bdef" rx="0.7"/><rect x="1902.1" y="1298.5" width="23.1" height="6.1" fill="#da9ee8" rx="2.2"/><rect x="1903.4" y="1299.1" width="20.5" height="1.5" fill="#e6bdef" rx="0.7"/><rect x="1927" y="1298.5" width="23.1" height="6.1" fill="#da9ee8" rx="2.2"/><rect x="1928.3" y="1299.1" width="20.5" height="1.5" fill="#e6bdef" rx="0.7"/><rect x="1951.9" y="1298.5" width="23.1" height="6.1" fill="#da9ee8" rx="2.2"/><rect x="1953.2" y="1299.1" width="20.5" height="1.5" fill="#e6bdef" rx="0.7"/><rect x="1976.8" y="1298.5" width="23.1" height="6.1" fill="#da9ee8" rx="2.2"/><rect x="1978.1" y="1299.1" width="20.5" height="1.5" fill="#e6bdef" rx="0.7"/><rect x="2001.7" y="1298.5" width="23.1" height="6.1" fill="#da9ee8" rx="2.2"/><rect x="2003" y="1299.1" width="20.5" height="1.5" fill="#e6bdef" rx="0.7"/><rect x="2026.6" y="1298.5" width="23.1" height="6.1" fill="#da9ee8" rx="2.2"/><rect x="2027.9" y="1299.1" width="20.5" height="1.5" fill="#e6bdef" rx="0.7"/><rect x="2051.5" y="1298.5" width="23.1" height="6.1" fill="#da9ee8" rx="2.2"/><rect x="2052.8" y="1299.1" width="20.5" height="1.5" fill="#e6bdef" rx="0.7"/><rect x="1254.7" y="1306.5" width="48" height="6.1" fill="#e090ea" rx="2.2"/><rect x="1256" y="1307.1" width="45.4" height="1.5" fill="#eab4f1" rx="0.7"/><rect x="1254.7" y="1314.5" width="23.1" height="6.1" fill="#e288ea" rx="2.2"/><rect x="1256" y="1315.1" width="20.5" height="1.5" fill="#ebaef1" rx="0.7"/><rect x="1279.6" y="1314.5" width="48" height="6.1" fill="#e288ea" rx="2.2"/><rect x="1280.9" y="1315.1" width="45.4" height="1.5" fill="#ebaef1" rx="0.7"/><rect x="1453.9" y="1306.5" width="48" height="6.1" fill="#e090ea" rx="2.2"/><rect x="1455.2" y="1307.1" width="45.4" height="1.5" fill="#eab4f1" rx="0.7"/><rect x="1453.9" y="1314.5" width="23.1" height="6.1" fill="#e288ea" rx="2.2"/><rect x="1455.2" y="1315.1" width="20.5" height="1.5" fill="#ebaef1" rx="0.7"/><rect x="1478.8" y="1314.5" width="48" height="6.1" fill="#e288ea" rx="2.2"/><rect x="1480.1" y="1315.1" width="45.4" height="1.5" fill="#ebaef1" rx="0.7"/><rect x="1653.1" y="1306.5" width="48" height="6.1" fill="#e090ea" rx="2.2"/><rect x="1654.4" y="1307.1" width="45.4" height="1.5" fill="#eab4f1" rx="0.7"/><rect x="2250.7" y="1306.5" width="48" height="6.1" fill="#e090ea" rx="2.2"/><rect x="2252" y="1307.1" width="45.4" height="1.5" fill="#eab4f1" rx="0.7"/><rect x="2250.7" y="1314.5" width="23.1" height="6.1" fill="#e288ea" rx="2.2"/><rect x="2252" y="1315.1" width="20.5" height="1.5" fill="#ebaef1" rx="0.7"/><rect x="2275.6" y="1314.5" width="48" height="6.1" fill="#e288ea" rx="2.2"/><rect x="2276.9" y="1315.1" width="45.4" height="1.5" fill="#ebaef1" rx="0.7"/><rect x="2449.9" y="1306.5" width="48" height="6.1" fill="#e090ea" rx="2.2"/><rect x="2451.2" y="1307.1" width="45.4" height="1.5" fill="#eab4f1" rx="0.7"/><rect x="2449.9" y="1314.5" width="23.1" height="6.1" fill="#e288ea" rx="2.2"/><rect x="2451.2" y="1315.1" width="20.5" height="1.5" fill="#ebaef1" rx="0.7"/><rect x="2474.8" y="1314.5" width="48" height="6.1" fill="#e288ea" rx="2.2"/><rect x="2476.1" y="1315.1" width="45.4" height="1.5" fill="#ebaef1" rx="0.7"/><rect x="2649.1" y="1306.5" width="48" height="6.1" fill="#e090ea" rx="2.2"/><rect x="2650.4" y="1307.1" width="45.4" height="1.5" fill="#eab4f1" rx="0.7"/><rect x="2649.1" y="1314.5" width="23.1" height="6.1" fill="#e288ea" rx="2.2"/><rect x="2650.4" y="1315.1" width="20.5" height="1.5" fill="#ebaef1" rx="0.7"/><rect x="2674" y="1314.5" width="48" height="6.1" fill="#e288ea" rx="2.2"/><rect x="2675.3" y="1315.1" width="45.4" height="1.5" fill="#ebaef1" rx="0.7"/><rect x="681" y="173.4" width="1" height="1462.6" fill="#86949c"/><rect x="2826" y="173" width="42" height="1463" fill="#3a434a"/><pattern id="hatch2" width="4" height="4" patternUnits="userSpaceOnUse" patternTransform="rotate(-45)"><rect width="4" height="4" fill="#3a4249"/><rect width="1.4" height="4" fill="#333b42"/></pattern><rect x="2828.5" y="136" width="37.5" height="1500" fill="url(#hatch2)"/><rect x="2828.5" y="138.5" width="37.5" height="65.5" fill="#4e565e"/><rect x="2829.3" y="139.3" width="35.9" height="63.9" fill="none" stroke="#626a72" stroke-width="1.6"/><rect x="2866" y="56" width="2.5" height="1580" fill="#2b333a"/><rect x="2868.5" y="56" width="11.5" height="1580" fill="#3f474e"/><g><rect x="773" y="70.74" width="1675" height="0.7" fill="#eee8c1" opacity="0.45"/><rect x="1092.2" y="61.33" width="158.8" height="0.7" fill="#8a78b0" opacity="0.6"/><rect x="1910.15" y="61.33" width="158.8" height="0.7" fill="#8a78b0" opacity="0.6"/><rect x="773" y="61.85" width="1675" height="0.8" fill="#86b6dc" opacity="0.85"/><rect x="773" y="69.62" width="158.8" height="1.6" fill="#c79df2"/><rect x="932.6" y="69.62" width="158.8" height="1.6" fill="#c79df2"/><rect x="1092.2" y="69.62" width="79" height="1.6" fill="#c79df2"/><rect x="1172" y="69.62" width="79" height="1.6" fill="#c79df2"/><rect x="1251.8" y="69.62" width="79" height="1.6" fill="#c79df2"/><rect x="1331.6" y="69.62" width="79" height="1.6" fill="#c79df2"/><rect x="1411.4" y="69.62" width="79" height="1.6" fill="#c79df2"/><rect x="1491.2" y="69.62" width="79" height="1.6" fill="#c79df2"/><rect x="1571" y="69.62" width="79" height="1.6" fill="#c79df2"/><rect x="1650.8" y="69.62" width="79" height="1.6" fill="#c79df2"/><rect x="1730.6" y="69.62" width="79" height="1.6" fill="#c79df2"/><rect x="1810.4" y="69.62" width="79" height="1.6" fill="#c79df2"/><rect x="1890.2" y="69.62" width="79" height="1.6" fill="#c79df2"/><rect x="1970" y="69.62" width="79" height="1.6" fill="#c79df2"/><rect x="2049.8" y="69.62" width="79" height="1.6" fill="#c79df2"/><rect x="2129.6" y="69.62" width="79" height="1.6" fill="#c79df2"/><rect x="2209.4" y="69.62" width="79" height="1.6" fill="#c79df2"/><rect x="2289.2" y="69.62" width="158.8" height="1.6" fill="#c79df2"/><rect x="1092.2" y="71.17" width="79" height="1.6" fill="#d2aee5"/><rect x="1172" y="71.17" width="79" height="1.6" fill="#d2aee5"/><rect x="1411.4" y="71.17" width="79" height="1.6" fill="#d2aee5"/><rect x="1491.2" y="71.17" width="79" height="1.6" fill="#d2aee5"/><rect x="1890.2" y="71.17" width="79" height="1.6" fill="#d2aee5"/><rect x="1970" y="71.17" width="79" height="1.6" fill="#d2aee5"/><rect x="2209.4" y="71.17" width="79" height="1.6" fill="#d2aee5"/><rect x="2289.2" y="71.17" width="79" height="1.6" fill="#d2aee5"/><rect x="1251.8" y="71.69" width="19.15" height="1.6" fill="#d6b4da"/><rect x="1331.6" y="71.69" width="19.15" height="1.6" fill="#d6b4da"/><rect x="2049.8" y="71.69" width="19.15" height="1.6" fill="#d6b4da"/><rect x="2129.6" y="71.69" width="19.15" height="1.6" fill="#d6b4da"/><rect x="773" y="72.21" width="158.8" height="1.6" fill="#ddc0d4"/><rect x="932.6" y="72.21" width="158.8" height="1.6" fill="#ddc0d4"/><rect x="1092.2" y="72.21" width="158.8" height="1.6" fill="#ddc0d4"/><rect x="1571" y="72.21" width="158.8" height="1.6" fill="#ddc0d4"/><rect x="1730.6" y="72.21" width="158.8" height="1.6" fill="#ddc0d4"/><rect x="1890.2" y="72.21" width="158.8" height="1.6" fill="#ddc0d4"/><rect x="773" y="72.72" width="158.8" height="1.6" fill="#e2c8ca"/><rect x="932.6" y="72.72" width="158.8" height="1.6" fill="#e2c8ca"/><rect x="1092.2" y="72.72" width="158.8" height="1.6" fill="#e2c8ca"/><rect x="1571" y="72.72" width="158.8" height="1.6" fill="#e2c8ca"/><rect x="1730.6" y="72.72" width="158.8" height="1.6" fill="#e2c8ca"/><rect x="1890.2" y="72.72" width="158.8" height="1.6" fill="#e2c8ca"/><rect x="1092.2" y="73.24" width="79" height="1.6" fill="#e7cebf"/><rect x="1172" y="73.24" width="59.05" height="1.6" fill="#e7cebf"/><rect x="1890.2" y="73.24" width="79" height="1.6" fill="#e7cebf"/><rect x="1970" y="73.24" width="59.05" height="1.6" fill="#e7cebf"/><rect x="932.6" y="73.76" width="158.8" height="1.6" fill="#ecd6b2"/><rect x="1730.6" y="73.76" width="158.8" height="1.6" fill="#ecd6b2"/><rect x="1251.8" y="87.72" width="79" height="1.6" fill="#b4c0c8"/><rect x="1331.6" y="87.72" width="79" height="1.6" fill="#b4c0c8"/><rect x="1411.4" y="87.72" width="79" height="1.6" fill="#b4c0c8"/><rect x="1491.2" y="87.72" width="79" height="1.6" fill="#b4c0c8"/><rect x="1571" y="87.72" width="79" height="1.6" fill="#b4c0c8"/><rect x="1650.8" y="87.72" width="79" height="1.6" fill="#b4c0c8"/><rect x="1730.6" y="87.72" width="79" height="1.6" fill="#b4c0c8"/><rect x="1810.4" y="87.72" width="79" height="1.6" fill="#b4c0c8"/><rect x="2049.8" y="87.72" width="79" height="1.6" fill="#b4c0c8"/><rect x="2129.6" y="87.72" width="79" height="1.6" fill="#b4c0c8"/><rect x="2209.4" y="87.72" width="79" height="1.6" fill="#b4c0c8"/><rect x="2289.2" y="87.72" width="79" height="1.6" fill="#b4c0c8"/><rect x="773" y="88.23" width="79" height="1.6" fill="#b4c0c8"/><rect x="852.8" y="88.23" width="79" height="1.6" fill="#b4c0c8"/><rect x="932.6" y="88.23" width="79" height="1.6" fill="#b4c0c8"/><rect x="1012.4" y="88.23" width="79" height="1.6" fill="#b4c0c8"/><rect x="1092.2" y="88.23" width="79" height="1.6" fill="#b4c0c8"/><rect x="1890.2" y="88.23" width="79" height="1.6" fill="#b4c0c8"/><rect x="1172" y="88.23" width="59.05" height="1.6" fill="#b4c0c8"/><rect x="1970" y="88.23" width="59.05" height="1.6" fill="#b4c0c8"/><rect x="752.39" y="60.32" width="180.45" height="1.6" fill="#b9efef"/><rect x="934.59" y="60.32" width="1.53" height="1.6" fill="#b9efef"/><rect x="937.88" y="60.32" width="52.93" height="1.6" fill="#b9efef"/><rect x="992.56" y="60.32" width="11.81" height="1.6" fill="#b9efef"/><rect x="1006.12" y="60.32" width="4.81" height="1.6" fill="#b9efef"/><rect x="1012.68" y="60.32" width="18.59" height="1.6" fill="#b9efef"/><rect x="1032.8" y="60.32" width="38.28" height="1.6" fill="#b9efef"/><rect x="1072.39" y="60.32" width="4.37" height="1.6" fill="#b9efef"/><rect x="1078.52" y="60.32" width="12.47" height="1.6" fill="#b9efef"/><rect x="1092.08" y="60.32" width="4.15" height="1.6" fill="#b9efef"/><rect x="1097.55" y="60.32" width="4.81" height="1.6" fill="#b9efef"/><rect x="1111.55" y="60.32" width="4.37" height="1.6" fill="#b9efef"/><rect x="1117.23" y="60.32" width="4.37" height="1.6" fill="#b9efef"/><rect x="1126.42" y="60.32" width="3.94" height="1.6" fill="#b9efef"/><rect x="1131.89" y="60.32" width="4.37" height="1.6" fill="#b9efef"/><rect x="1137.36" y="60.32" width="4.37" height="1.6" fill="#b9efef"/><rect x="1151.57" y="60.32" width="3.94" height="1.6" fill="#b9efef"/><rect x="1156.6" y="60.32" width="4.81" height="1.6" fill="#b9efef"/><rect x="1166.88" y="60.32" width="3.72" height="1.6" fill="#b9efef"/><rect x="1171.92" y="60.32" width="3.72" height="1.6" fill="#b9efef"/><rect x="1176.95" y="60.32" width="3.72" height="1.6" fill="#b9efef"/><rect x="1181.98" y="60.32" width="3.72" height="1.6" fill="#b9efef"/><rect x="1187.01" y="60.32" width="3.72" height="1.6" fill="#b9efef"/><rect x="1192.04" y="60.32" width="3.72" height="1.6" fill="#b9efef"/><rect x="1197.07" y="60.32" width="3.72" height="1.6" fill="#b9efef"/><rect x="1202.1" y="60.32" width="3.72" height="1.6" fill="#b9efef"/><rect x="1207.13" y="60.32" width="3.72" height="1.6" fill="#b9efef"/><rect x="1211.72" y="60.32" width="0.87" height="1.6" fill="#b9efef"/><rect x="1213.47" y="60.32" width="0.87" height="1.6" fill="#b9efef"/><rect x="1215.22" y="60.32" width="0.87" height="1.6" fill="#b9efef"/><rect x="1216.97" y="60.32" width="0.87" height="1.6" fill="#b9efef"/><rect x="1218.72" y="60.32" width="0.87" height="1.6" fill="#b9efef"/><rect x="1220.47" y="60.32" width="10.5" height="1.6" fill="#b9efef"/><rect x="1231.85" y="60.32" width="12.25" height="1.6" fill="#b9efef"/><rect x="1245.63" y="60.32" width="5.03" height="1.6" fill="#b9efef"/><rect x="1258.97" y="60.32" width="1.09" height="1.6" fill="#b9efef"/><rect x="1258.9" y="60.32" width="1.09" height="1.6" fill="#b9efef"/><rect x="1298.93" y="60.32" width="1.09" height="1.6" fill="#b9efef"/><rect x="1339.18" y="60.32" width="1.09" height="1.6" fill="#b9efef"/><rect x="1391.01" y="60.32" width="12.68" height="1.6" fill="#b9efef"/><rect x="1405.01" y="60.32" width="4.81" height="1.6" fill="#b9efef"/><rect x="1411.14" y="60.32" width="3.94" height="1.6" fill="#b9efef"/><rect x="1416.39" y="60.32" width="5.25" height="1.6" fill="#b9efef"/><rect x="1431.04" y="60.32" width="4.37" height="1.6" fill="#b9efef"/><rect x="1436.51" y="60.32" width="5.03" height="1.6" fill="#b9efef"/><rect x="1445.26" y="60.32" width="4.81" height="1.6" fill="#b9efef"/><rect x="1451.38" y="60.32" width="3.72" height="1.6" fill="#b9efef"/><rect x="1456.2" y="60.32" width="5.47" height="1.6" fill="#b9efef"/><rect x="1471.07" y="60.32" width="4.81" height="1.6" fill="#b9efef"/><rect x="1476.97" y="60.32" width="12.47" height="1.6" fill="#b9efef"/><rect x="1490.75" y="60.32" width="4.37" height="1.6" fill="#b9efef"/><rect x="1496.22" y="60.32" width="4.81" height="1.6" fill="#b9efef"/><rect x="1510.44" y="60.32" width="4.37" height="1.6" fill="#b9efef"/><rect x="1515.91" y="60.32" width="5.03" height="1.6" fill="#b9efef"/><rect x="1525.53" y="60.32" width="4.37" height="1.6" fill="#b9efef"/><rect x="1531" y="60.32" width="3.94" height="1.6" fill="#b9efef"/><rect x="1536.03" y="60.32" width="4.81" height="1.6" fill="#b9efef"/><rect x="1550.25" y="60.32" width="12.68" height="1.6" fill="#b9efef"/><rect x="1564.47" y="60.32" width="5.03" height="1.6" fill="#b9efef"/><rect x="1574.97" y="60.32" width="156.39" height="1.6" fill="#b9efef"/><rect x="1732.45" y="60.32" width="1.09" height="1.6" fill="#b9efef"/><rect x="1734.64" y="60.32" width="54.02" height="1.6" fill="#b9efef"/><rect x="1790.19" y="60.32" width="13.78" height="1.6" fill="#b9efef"/><rect x="1790.46" y="60.32" width="12.25" height="1.6" fill="#b9efef"/><rect x="1804.02" y="60.32" width="4.81" height="1.6" fill="#b9efef"/><rect x="1810.36" y="60.32" width="57.96" height="1.6" fill="#b9efef"/><rect x="1869.86" y="60.32" width="4.59" height="1.6" fill="#b9efef"/><rect x="1875.98" y="60.32" width="12.47" height="1.6" fill="#b9efef"/><rect x="1889.54" y="60.32" width="4.37" height="1.6" fill="#b9efef"/><rect x="1895.23" y="60.32" width="4.81" height="1.6" fill="#b9efef"/><rect x="1909.89" y="60.32" width="3.94" height="1.6" fill="#b9efef"/><rect x="1914.92" y="60.32" width="4.81" height="1.6" fill="#b9efef"/><rect x="1924.76" y="60.32" width="3.72" height="1.6" fill="#b9efef"/><rect x="1929.57" y="60.32" width="3.94" height="1.6" fill="#b9efef"/><rect x="1934.6" y="60.32" width="5.03" height="1.6" fill="#b9efef"/><rect x="1949.69" y="60.32" width="3.94" height="1.6" fill="#b9efef"/><rect x="1954.73" y="60.32" width="5.03" height="1.6" fill="#b9efef"/><rect x="1965.01" y="60.32" width="3.72" height="1.6" fill="#b9efef"/><rect x="1970.1" y="60.32" width="3.72" height="1.6" fill="#b9efef"/><rect x="1975.2" y="60.32" width="3.72" height="1.6" fill="#b9efef"/><rect x="1980.29" y="60.32" width="3.72" height="1.6" fill="#b9efef"/><rect x="1985.39" y="60.32" width="3.72" height="1.6" fill="#b9efef"/><rect x="1990.49" y="60.32" width="3.72" height="1.6" fill="#b9efef"/><rect x="1995.58" y="60.32" width="3.72" height="1.6" fill="#b9efef"/><rect x="2000.68" y="60.32" width="3.72" height="1.6" fill="#b9efef"/><rect x="2005.78" y="60.32" width="3.72" height="1.6" fill="#b9efef"/><rect x="2009.63" y="60.32" width="0.87" height="1.6" fill="#b9efef"/><rect x="2011.38" y="60.32" width="0.87" height="1.6" fill="#b9efef"/><rect x="2013.13" y="60.32" width="0.87" height="1.6" fill="#b9efef"/><rect x="2014.88" y="60.32" width="0.87" height="1.6" fill="#b9efef"/><rect x="2016.63" y="60.32" width="0.87" height="1.6" fill="#b9efef"/><rect x="2018.81" y="60.32" width="10.28" height="1.6" fill="#b9efef"/><rect x="2030.19" y="60.32" width="12.03" height="1.6" fill="#b9efef"/><rect x="2043.31" y="60.32" width="5.47" height="1.6" fill="#b9efef"/><rect x="2057.09" y="60.32" width="1.09" height="1.6" fill="#b9efef"/><rect x="2097.12" y="60.32" width="1.09" height="1.6" fill="#b9efef"/><rect x="2136.71" y="60.32" width="1.31" height="1.6" fill="#b9efef"/><rect x="2189.42" y="60.32" width="12.03" height="1.6" fill="#b9efef"/><rect x="2202.98" y="60.32" width="4.37" height="1.6" fill="#b9efef"/><rect x="2208.89" y="60.32" width="3.94" height="1.6" fill="#b9efef"/><rect x="2214.14" y="60.32" width="5.25" height="1.6" fill="#b9efef"/><rect x="2229.23" y="60.32" width="3.94" height="1.6" fill="#b9efef"/><rect x="2234.26" y="60.32" width="5.25" height="1.6" fill="#b9efef"/><rect x="2243.45" y="60.32" width="4.37" height="1.6" fill="#b9efef"/><rect x="2248.92" y="60.32" width="3.94" height="1.6" fill="#b9efef"/><rect x="2253.95" y="60.32" width="4.81" height="1.6" fill="#b9efef"/><rect x="2268.6" y="60.32" width="4.81" height="1.6" fill="#b9efef"/><rect x="2274.73" y="60.32" width="12.47" height="1.6" fill="#b9efef"/><rect x="2288.29" y="60.32" width="3.94" height="1.6" fill="#b9efef"/><rect x="2293.76" y="60.32" width="5.03" height="1.6" fill="#b9efef"/><rect x="2308.41" y="60.32" width="3.94" height="1.6" fill="#b9efef"/><rect x="2313.66" y="60.32" width="4.81" height="1.6" fill="#b9efef"/><rect x="2189.14" y="60.32" width="12.75" height="1.6" fill="#b9efef"/><rect x="2202.93" y="60.32" width="5.25" height="1.6" fill="#b9efef"/><rect x="2209.08" y="60.32" width="4.05" height="1.6" fill="#b9efef"/><rect x="2213.88" y="60.32" width="5.7" height="1.6" fill="#b9efef"/><rect x="2228.88" y="60.32" width="3.75" height="1.6" fill="#b9efef"/><rect x="2233.68" y="60.32" width="6" height="1.6" fill="#b9efef"/><rect x="2243.58" y="60.32" width="3.3" height="1.6" fill="#b9efef"/><rect x="2247.93" y="60.32" width="4.95" height="1.6" fill="#b9efef"/><rect x="2253.93" y="60.32" width="4.95" height="1.6" fill="#b9efef"/><rect x="2268.33" y="60.32" width="5.55" height="1.6" fill="#b9efef"/><rect x="2275.07" y="60.32" width="12.3" height="1.6" fill="#b9efef"/><rect x="2288.42" y="60.32" width="4.2" height="1.6" fill="#b9efef"/><rect x="2293.37" y="60.32" width="5.7" height="1.6" fill="#b9efef"/><rect x="2308.37" y="60.32" width="3.75" height="1.6" fill="#b9efef"/><rect x="2312.87" y="60.32" width="6.3" height="1.6" fill="#b9efef"/><rect x="2323.37" y="60.32" width="3.75" height="1.6" fill="#b9efef"/><rect x="2327.87" y="60.32" width="4.8" height="1.6" fill="#b9efef"/><rect x="2333.42" y="60.32" width="5.7" height="1.6" fill="#b9efef"/><rect x="2348.42" y="60.32" width="12.45" height="1.6" fill="#b9efef"/><rect x="2361.91" y="60.32" width="6.15" height="1.6" fill="#b9efef"/><rect x="1251.8" y="76.34" width="19.15" height="1.6" fill="#c7f0ec"/><rect x="1271.75" y="76.34" width="19.15" height="1.6" fill="#c7f0ec"/><rect x="1291.7" y="76.34" width="19.15" height="1.6" fill="#c7f0ec"/><rect x="1311.65" y="76.34" width="19.15" height="1.6" fill="#c7f0ec"/><rect x="1331.6" y="76.34" width="19.15" height="1.6" fill="#c7f0ec"/><rect x="1351.55" y="76.34" width="19.15" height="1.6" fill="#c7f0ec"/><rect x="1371.5" y="76.34" width="19.15" height="1.6" fill="#c7f0ec"/><rect x="1411.4" y="76.34" width="19.15" height="1.6" fill="#c7f0ec"/><rect x="1431.35" y="76.34" width="19.15" height="1.6" fill="#c7f0ec"/><rect x="1451.3" y="76.34" width="19.15" height="1.6" fill="#c7f0ec"/><rect x="1471.25" y="76.34" width="19.15" height="1.6" fill="#c7f0ec"/><rect x="1491.2" y="76.34" width="19.15" height="1.6" fill="#c7f0ec"/><rect x="1511.15" y="76.34" width="19.15" height="1.6" fill="#c7f0ec"/><rect x="1531.1" y="76.34" width="19.15" height="1.6" fill="#c7f0ec"/><rect x="1551.05" y="76.34" width="19.15" height="1.6" fill="#c7f0ec"/><rect x="1571" y="76.34" width="19.15" height="1.6" fill="#c7f0ec"/><rect x="1590.95" y="76.34" width="19.15" height="1.6" fill="#c7f0ec"/><rect x="1610.9" y="76.34" width="19.15" height="1.6" fill="#c7f0ec"/><rect x="1630.85" y="76.34" width="19.15" height="1.6" fill="#c7f0ec"/><rect x="1650.8" y="76.34" width="19.15" height="1.6" fill="#c7f0ec"/><rect x="1670.75" y="76.34" width="19.15" height="1.6" fill="#c7f0ec"/><rect x="1690.7" y="76.34" width="19.15" height="1.6" fill="#c7f0ec"/><rect x="1710.65" y="76.34" width="19.15" height="1.6" fill="#c7f0ec"/><rect x="1730.6" y="76.34" width="19.15" height="1.6" fill="#c7f0ec"/><rect x="1750.55" y="76.34" width="19.15" height="1.6" fill="#c7f0ec"/><rect x="1770.5" y="76.34" width="19.15" height="1.6" fill="#c7f0ec"/><rect x="1790.45" y="76.34" width="19.15" height="1.6" fill="#c7f0ec"/><rect x="1810.4" y="76.34" width="19.15" height="1.6" fill="#c7f0ec"/><rect x="1830.35" y="76.34" width="19.15" height="1.6" fill="#c7f0ec"/><rect x="1850.3" y="76.34" width="19.15" height="1.6" fill="#c7f0ec"/><rect x="1870.25" y="76.34" width="19.15" height="1.6" fill="#c7f0ec"/><rect x="2049.8" y="76.34" width="19.15" height="1.6" fill="#c7f0ec"/><rect x="2069.75" y="76.34" width="19.15" height="1.6" fill="#c7f0ec"/><rect x="2089.7" y="76.34" width="19.15" height="1.6" fill="#c7f0ec"/><rect x="2109.65" y="76.34" width="19.15" height="1.6" fill="#c7f0ec"/><rect x="2129.6" y="76.34" width="19.15" height="1.6" fill="#c7f0ec"/><rect x="2149.55" y="76.34" width="19.15" height="1.6" fill="#c7f0ec"/><rect x="2169.5" y="76.34" width="19.15" height="1.6" fill="#c7f0ec"/><rect x="2209.4" y="76.34" width="19.15" height="1.6" fill="#c7f0ec"/><rect x="2229.35" y="76.34" width="19.15" height="1.6" fill="#c7f0ec"/><rect x="2249.3" y="76.34" width="19.15" height="1.6" fill="#c7f0ec"/><rect x="2269.25" y="76.34" width="19.15" height="1.6" fill="#c7f0ec"/><rect x="2289.2" y="76.34" width="19.15" height="1.6" fill="#c7f0ec"/><rect x="2309.15" y="76.34" width="19.15" height="1.6" fill="#c7f0ec"/><rect x="2329.1" y="76.34" width="19.15" height="1.6" fill="#c7f0ec"/><rect x="2349.05" y="76.34" width="19.15" height="1.6" fill="#c7f0ec"/><rect x="773" y="76.86" width="19.15" height="1.6" fill="#cef2f2"/><rect x="792.95" y="76.86" width="19.15" height="1.6" fill="#cef2f2"/><rect x="812.9" y="76.86" width="19.15" height="1.6" fill="#cef2f2"/><rect x="832.85" y="76.86" width="19.15" height="1.6" fill="#cef2f2"/><rect x="852.8" y="76.86" width="19.15" height="1.6" fill="#cef2f2"/><rect x="872.75" y="76.86" width="19.15" height="1.6" fill="#cef2f2"/><rect x="892.7" y="76.86" width="19.15" height="1.6" fill="#cef2f2"/><rect x="912.65" y="76.86" width="19.15" height="1.6" fill="#cef2f2"/><rect x="932.6" y="76.86" width="19.15" height="1.6" fill="#cef2f2"/><rect x="952.55" y="76.86" width="19.15" height="1.6" fill="#cef2f2"/><rect x="972.5" y="76.86" width="19.15" height="1.6" fill="#cef2f2"/><rect x="992.45" y="76.86" width="19.15" height="1.6" fill="#cef2f2"/><rect x="1012.4" y="76.86" width="19.15" height="1.6" fill="#cef2f2"/><rect x="1032.35" y="76.86" width="19.15" height="1.6" fill="#cef2f2"/><rect x="1052.3" y="76.86" width="19.15" height="1.6" fill="#cef2f2"/><rect x="1072.25" y="76.86" width="19.15" height="1.6" fill="#cef2f2"/><rect x="1092.2" y="76.86" width="19.15" height="1.6" fill="#cef2f2"/><rect x="1112.15" y="76.86" width="19.15" height="1.6" fill="#cef2f2"/><rect x="1132.1" y="76.86" width="19.15" height="1.6" fill="#cef2f2"/><rect x="1152.05" y="76.86" width="19.15" height="1.6" fill="#cef2f2"/><rect x="1172" y="76.86" width="19.15" height="1.6" fill="#cef2f2"/><rect x="1191.95" y="76.86" width="19.15" height="1.6" fill="#cef2f2"/><rect x="1211.9" y="76.86" width="19.15" height="1.6" fill="#cef2f2"/><rect x="1231.85" y="76.86" width="19.15" height="1.6" fill="#cef2f2"/><rect x="1251.8" y="76.86" width="19.15" height="1.6" fill="#cef2f2"/><rect x="1271.75" y="76.86" width="19.15" height="1.6" fill="#cef2f2"/><rect x="1291.7" y="76.86" width="19.15" height="1.6" fill="#cef2f2"/><rect x="1311.65" y="76.86" width="19.15" height="1.6" fill="#cef2f2"/><rect x="1331.6" y="76.86" width="19.15" height="1.6" fill="#cef2f2"/><rect x="1351.55" y="76.86" width="19.15" height="1.6" fill="#cef2f2"/><rect x="1371.5" y="76.86" width="19.15" height="1.6" fill="#cef2f2"/><rect x="1391.45" y="76.86" width="19.15" height="1.6" fill="#cef2f2"/><rect x="1411.4" y="76.86" width="19.15" height="1.6" fill="#cef2f2"/><rect x="1431.35" y="76.86" width="19.15" height="1.6" fill="#cef2f2"/><rect x="1451.3" y="76.86" width="19.15" height="1.6" fill="#cef2f2"/><rect x="1471.25" y="76.86" width="19.15" height="1.6" fill="#cef2f2"/><rect x="1491.2" y="76.86" width="19.15" height="1.6" fill="#cef2f2"/><rect x="1511.15" y="76.86" width="19.15" height="1.6" fill="#cef2f2"/><rect x="1531.1" y="76.86" width="19.15" height="1.6" fill="#cef2f2"/><rect x="1551.05" y="76.86" width="19.15" height="1.6" fill="#cef2f2"/><rect x="1571" y="76.86" width="19.15" height="1.6" fill="#cef2f2"/><rect x="1590.95" y="76.86" width="19.15" height="1.6" fill="#cef2f2"/><rect x="1610.9" y="76.86" width="19.15" height="1.6" fill="#cef2f2"/><rect x="1630.85" y="76.86" width="19.15" height="1.6" fill="#cef2f2"/><rect x="1650.8" y="76.86" width="19.15" height="1.6" fill="#cef2f2"/><rect x="1670.75" y="76.86" width="19.15" height="1.6" fill="#cef2f2"/><rect x="1690.7" y="76.86" width="19.15" height="1.6" fill="#cef2f2"/><rect x="1710.65" y="76.86" width="19.15" height="1.6" fill="#cef2f2"/><rect x="1730.6" y="76.86" width="19.15" height="1.6" fill="#cef2f2"/><rect x="1750.55" y="76.86" width="19.15" height="1.6" fill="#cef2f2"/><rect x="1770.5" y="76.86" width="19.15" height="1.6" fill="#cef2f2"/><rect x="1790.45" y="76.86" width="19.15" height="1.6" fill="#cef2f2"/><rect x="1810.4" y="76.86" width="19.15" height="1.6" fill="#cef2f2"/><rect x="1830.35" y="76.86" width="19.15" height="1.6" fill="#cef2f2"/><rect x="1850.3" y="76.86" width="19.15" height="1.6" fill="#cef2f2"/><rect x="1870.25" y="76.86" width="19.15" height="1.6" fill="#cef2f2"/><rect x="1890.2" y="76.86" width="19.15" height="1.6" fill="#cef2f2"/><rect x="1910.15" y="76.86" width="19.15" height="1.6" fill="#cef2f2"/><rect x="1930.1" y="76.86" width="19.15" height="1.6" fill="#cef2f2"/><rect x="1950.05" y="76.86" width="19.15" height="1.6" fill="#cef2f2"/><rect x="1970" y="76.86" width="19.15" height="1.6" fill="#cef2f2"/><rect x="1989.95" y="76.86" width="19.15" height="1.6" fill="#cef2f2"/><rect x="2009.9" y="76.86" width="19.15" height="1.6" fill="#cef2f2"/><rect x="2029.85" y="76.86" width="19.15" height="1.6" fill="#cef2f2"/><rect x="2049.8" y="76.86" width="19.15" height="1.6" fill="#cef2f2"/><rect x="2069.75" y="76.86" width="19.15" height="1.6" fill="#cef2f2"/><rect x="2089.7" y="76.86" width="19.15" height="1.6" fill="#cef2f2"/><rect x="2109.65" y="76.86" width="19.15" height="1.6" fill="#cef2f2"/><rect x="2129.6" y="76.86" width="19.15" height="1.6" fill="#cef2f2"/><rect x="2149.55" y="76.86" width="19.15" height="1.6" fill="#cef2f2"/><rect x="2169.5" y="76.86" width="19.15" height="1.6" fill="#cef2f2"/><rect x="2189.45" y="76.86" width="19.15" height="1.6" fill="#cef2f2"/><rect x="2209.4" y="76.86" width="19.15" height="1.6" fill="#cef2f2"/><rect x="2229.35" y="76.86" width="19.15" height="1.6" fill="#cef2f2"/><rect x="2249.3" y="76.86" width="19.15" height="1.6" fill="#cef2f2"/><rect x="2269.25" y="76.86" width="19.15" height="1.6" fill="#cef2f2"/><rect x="2289.2" y="76.86" width="19.15" height="1.6" fill="#cef2f2"/><rect x="2309.15" y="76.86" width="19.15" height="1.6" fill="#cef2f2"/><rect x="2329.1" y="76.86" width="19.15" height="1.6" fill="#cef2f2"/><rect x="2349.05" y="76.86" width="19.15" height="1.6" fill="#cef2f2"/><rect x="1251.8" y="77.38" width="19.15" height="1.6" fill="#d0eef4"/><rect x="1271.75" y="77.38" width="19.15" height="1.6" fill="#d0eef4"/><rect x="1291.7" y="77.38" width="19.15" height="1.6" fill="#d0eef4"/><rect x="1311.65" y="77.38" width="19.15" height="1.6" fill="#d0eef4"/><rect x="1331.6" y="77.38" width="19.15" height="1.6" fill="#d0eef4"/><rect x="1351.55" y="77.38" width="19.15" height="1.6" fill="#d0eef4"/><rect x="1371.5" y="77.38" width="19.15" height="1.6" fill="#d0eef4"/><rect x="1391.45" y="77.38" width="19.15" height="1.6" fill="#d0eef4"/><rect x="1411.4" y="77.38" width="19.15" height="1.6" fill="#d0eef4"/><rect x="1431.35" y="77.38" width="19.15" height="1.6" fill="#d0eef4"/><rect x="1451.3" y="77.38" width="19.15" height="1.6" fill="#d0eef4"/><rect x="1471.25" y="77.38" width="19.15" height="1.6" fill="#d0eef4"/><rect x="1491.2" y="77.38" width="19.15" height="1.6" fill="#d0eef4"/><rect x="1511.15" y="77.38" width="19.15" height="1.6" fill="#d0eef4"/><rect x="1531.1" y="77.38" width="19.15" height="1.6" fill="#d0eef4"/><rect x="1551.05" y="77.38" width="19.15" height="1.6" fill="#d0eef4"/><rect x="1571" y="77.38" width="19.15" height="1.6" fill="#d0eef4"/><rect x="1590.95" y="77.38" width="19.15" height="1.6" fill="#d0eef4"/><rect x="1610.9" y="77.38" width="19.15" height="1.6" fill="#d0eef4"/><rect x="1630.85" y="77.38" width="19.15" height="1.6" fill="#d0eef4"/><rect x="1650.8" y="77.38" width="19.15" height="1.6" fill="#d0eef4"/><rect x="1670.75" y="77.38" width="19.15" height="1.6" fill="#d0eef4"/><rect x="1690.7" y="77.38" width="19.15" height="1.6" fill="#d0eef4"/><rect x="1710.65" y="77.38" width="19.15" height="1.6" fill="#d0eef4"/><rect x="1730.6" y="77.38" width="19.15" height="1.6" fill="#d0eef4"/><rect x="1750.55" y="77.38" width="19.15" height="1.6" fill="#d0eef4"/><rect x="1770.5" y="77.38" width="19.15" height="1.6" fill="#d0eef4"/><rect x="1790.45" y="77.38" width="19.15" height="1.6" fill="#d0eef4"/><rect x="1810.4" y="77.38" width="19.15" height="1.6" fill="#d0eef4"/><rect x="1830.35" y="77.38" width="19.15" height="1.6" fill="#d0eef4"/><rect x="1850.3" y="77.38" width="19.15" height="1.6" fill="#d0eef4"/><rect x="1870.25" y="77.38" width="19.15" height="1.6" fill="#d0eef4"/><rect x="2049.8" y="77.38" width="19.15" height="1.6" fill="#d0eef4"/><rect x="2069.75" y="77.38" width="19.15" height="1.6" fill="#d0eef4"/><rect x="2089.7" y="77.38" width="19.15" height="1.6" fill="#d0eef4"/><rect x="2109.65" y="77.38" width="19.15" height="1.6" fill="#d0eef4"/><rect x="2129.6" y="77.38" width="19.15" height="1.6" fill="#d0eef4"/><rect x="2149.55" y="77.38" width="19.15" height="1.6" fill="#d0eef4"/><rect x="2169.5" y="77.38" width="19.15" height="1.6" fill="#d0eef4"/><rect x="2189.45" y="77.38" width="19.15" height="1.6" fill="#d0eef4"/><rect x="2209.4" y="77.38" width="19.15" height="1.6" fill="#d0eef4"/><rect x="2229.35" y="77.38" width="19.15" height="1.6" fill="#d0eef4"/><rect x="2249.3" y="77.38" width="19.15" height="1.6" fill="#d0eef4"/><rect x="2269.25" y="77.38" width="19.15" height="1.6" fill="#d0eef4"/><rect x="2289.2" y="77.38" width="19.15" height="1.6" fill="#d0eef4"/><rect x="2309.15" y="77.38" width="19.15" height="1.6" fill="#d0eef4"/><rect x="2329.1" y="77.38" width="19.15" height="1.6" fill="#d0eef4"/><rect x="2349.05" y="77.38" width="19.15" height="1.6" fill="#d0eef4"/><rect x="1251.8" y="77.89" width="19.15" height="1.6" fill="#d2e8f2"/><rect x="1271.75" y="77.89" width="19.15" height="1.6" fill="#d2e8f2"/><rect x="1291.7" y="77.89" width="19.15" height="1.6" fill="#d2e8f2"/><rect x="1311.65" y="77.89" width="19.15" height="1.6" fill="#d2e8f2"/><rect x="1331.6" y="77.89" width="19.15" height="1.6" fill="#d2e8f2"/><rect x="1351.55" y="77.89" width="19.15" height="1.6" fill="#d2e8f2"/><rect x="1371.5" y="77.89" width="19.15" height="1.6" fill="#d2e8f2"/><rect x="1391.45" y="77.89" width="19.15" height="1.6" fill="#d2e8f2"/><rect x="1411.4" y="77.89" width="19.15" height="1.6" fill="#d2e8f2"/><rect x="1431.35" y="77.89" width="19.15" height="1.6" fill="#d2e8f2"/><rect x="1451.3" y="77.89" width="19.15" height="1.6" fill="#d2e8f2"/><rect x="1471.25" y="77.89" width="19.15" height="1.6" fill="#d2e8f2"/><rect x="1491.2" y="77.89" width="19.15" height="1.6" fill="#d2e8f2"/><rect x="1511.15" y="77.89" width="19.15" height="1.6" fill="#d2e8f2"/><rect x="1531.1" y="77.89" width="19.15" height="1.6" fill="#d2e8f2"/><rect x="1551.05" y="77.89" width="19.15" height="1.6" fill="#d2e8f2"/><rect x="1571" y="77.89" width="19.15" height="1.6" fill="#d2e8f2"/><rect x="1590.95" y="77.89" width="19.15" height="1.6" fill="#d2e8f2"/><rect x="1610.9" y="77.89" width="19.15" height="1.6" fill="#d2e8f2"/><rect x="1630.85" y="77.89" width="19.15" height="1.6" fill="#d2e8f2"/><rect x="1650.8" y="77.89" width="19.15" height="1.6" fill="#d2e8f2"/><rect x="1670.75" y="77.89" width="19.15" height="1.6" fill="#d2e8f2"/><rect x="1690.7" y="77.89" width="19.15" height="1.6" fill="#d2e8f2"/><rect x="1710.65" y="77.89" width="19.15" height="1.6" fill="#d2e8f2"/><rect x="1730.6" y="77.89" width="19.15" height="1.6" fill="#d2e8f2"/><rect x="1750.55" y="77.89" width="19.15" height="1.6" fill="#d2e8f2"/><rect x="1770.5" y="77.89" width="19.15" height="1.6" fill="#d2e8f2"/><rect x="1790.45" y="77.89" width="19.15" height="1.6" fill="#d2e8f2"/><rect x="1810.4" y="77.89" width="19.15" height="1.6" fill="#d2e8f2"/><rect x="1830.35" y="77.89" width="19.15" height="1.6" fill="#d2e8f2"/><rect x="1850.3" y="77.89" width="19.15" height="1.6" fill="#d2e8f2"/><rect x="1870.25" y="77.89" width="19.15" height="1.6" fill="#d2e8f2"/><rect x="2049.8" y="77.89" width="19.15" height="1.6" fill="#d2e8f2"/><rect x="2069.75" y="77.89" width="19.15" height="1.6" fill="#d2e8f2"/><rect x="2089.7" y="77.89" width="19.15" height="1.6" fill="#d2e8f2"/><rect x="2109.65" y="77.89" width="19.15" height="1.6" fill="#d2e8f2"/><rect x="2129.6" y="77.89" width="19.15" height="1.6" fill="#d2e8f2"/><rect x="2149.55" y="77.89" width="19.15" height="1.6" fill="#d2e8f2"/><rect x="2169.5" y="77.89" width="19.15" height="1.6" fill="#d2e8f2"/><rect x="2189.45" y="77.89" width="19.15" height="1.6" fill="#d2e8f2"/><rect x="2209.4" y="77.89" width="19.15" height="1.6" fill="#d2e8f2"/><rect x="2229.35" y="77.89" width="19.15" height="1.6" fill="#d2e8f2"/><rect x="2249.3" y="77.89" width="19.15" height="1.6" fill="#d2e8f2"/><rect x="2269.25" y="77.89" width="19.15" height="1.6" fill="#d2e8f2"/><rect x="2289.2" y="77.89" width="19.15" height="1.6" fill="#d2e8f2"/><rect x="2309.15" y="77.89" width="19.15" height="1.6" fill="#d2e8f2"/><rect x="2329.1" y="77.89" width="19.15" height="1.6" fill="#d2e8f2"/><rect x="2349.05" y="77.89" width="19.15" height="1.6" fill="#d2e8f2"/><rect x="932.6" y="78.41" width="39.1" height="1.6" fill="#d6e2f4"/><rect x="972.5" y="78.41" width="39.1" height="1.6" fill="#d6e2f4"/><rect x="1012.4" y="78.41" width="39.1" height="1.6" fill="#d6e2f4"/><rect x="1052.3" y="78.41" width="39.1" height="1.6" fill="#d6e2f4"/><rect x="1251.8" y="78.41" width="39.1" height="1.6" fill="#d6e2f4"/><rect x="1291.7" y="78.41" width="39.1" height="1.6" fill="#d6e2f4"/><rect x="1331.6" y="78.41" width="39.1" height="1.6" fill="#d6e2f4"/><rect x="1371.5" y="78.41" width="39.1" height="1.6" fill="#d6e2f4"/><rect x="1411.4" y="78.41" width="39.1" height="1.6" fill="#d6e2f4"/><rect x="1451.3" y="78.41" width="39.1" height="1.6" fill="#d6e2f4"/><rect x="1491.2" y="78.41" width="39.1" height="1.6" fill="#d6e2f4"/><rect x="1531.1" y="78.41" width="39.1" height="1.6" fill="#d6e2f4"/><rect x="1730.6" y="78.41" width="39.1" height="1.6" fill="#d6e2f4"/><rect x="1770.5" y="78.41" width="39.1" height="1.6" fill="#d6e2f4"/><rect x="1810.4" y="78.41" width="39.1" height="1.6" fill="#d6e2f4"/><rect x="1850.3" y="78.41" width="39.1" height="1.6" fill="#d6e2f4"/><rect x="2049.8" y="78.41" width="39.1" height="1.6" fill="#d6e2f4"/><rect x="2089.7" y="78.41" width="39.1" height="1.6" fill="#d6e2f4"/><rect x="2129.6" y="78.41" width="39.1" height="1.6" fill="#d6e2f4"/><rect x="2169.5" y="78.41" width="39.1" height="1.6" fill="#d6e2f4"/><rect x="2209.4" y="78.41" width="39.1" height="1.6" fill="#d6e2f4"/><rect x="2249.3" y="78.41" width="39.1" height="1.6" fill="#d6e2f4"/><rect x="2289.2" y="78.41" width="39.1" height="1.6" fill="#d6e2f4"/><rect x="2329.1" y="78.41" width="39.1" height="1.6" fill="#d6e2f4"/><rect x="932.6" y="78.93" width="19.15" height="1.6" fill="#dadef4"/><rect x="952.55" y="78.93" width="19.15" height="1.6" fill="#dadef4"/><rect x="972.5" y="78.93" width="19.15" height="1.6" fill="#dadef4"/><rect x="992.45" y="78.93" width="19.15" height="1.6" fill="#dadef4"/><rect x="1012.4" y="78.93" width="19.15" height="1.6" fill="#dadef4"/><rect x="1032.35" y="78.93" width="19.15" height="1.6" fill="#dadef4"/><rect x="1052.3" y="78.93" width="19.15" height="1.6" fill="#dadef4"/><rect x="1072.25" y="78.93" width="19.15" height="1.6" fill="#dadef4"/><rect x="1251.8" y="78.93" width="19.15" height="1.6" fill="#dadef4"/><rect x="1271.75" y="78.93" width="19.15" height="1.6" fill="#dadef4"/><rect x="1291.7" y="78.93" width="19.15" height="1.6" fill="#dadef4"/><rect x="1311.65" y="78.93" width="19.15" height="1.6" fill="#dadef4"/><rect x="1331.6" y="78.93" width="19.15" height="1.6" fill="#dadef4"/><rect x="1351.55" y="78.93" width="19.15" height="1.6" fill="#dadef4"/><rect x="1371.5" y="78.93" width="19.15" height="1.6" fill="#dadef4"/><rect x="1391.45" y="78.93" width="19.15" height="1.6" fill="#dadef4"/><rect x="1411.4" y="78.93" width="19.15" height="1.6" fill="#dadef4"/><rect x="1431.35" y="78.93" width="19.15" height="1.6" fill="#dadef4"/><rect x="1451.3" y="78.93" width="19.15" height="1.6" fill="#dadef4"/><rect x="1471.25" y="78.93" width="19.15" height="1.6" fill="#dadef4"/><rect x="1491.2" y="78.93" width="19.15" height="1.6" fill="#dadef4"/><rect x="1511.15" y="78.93" width="19.15" height="1.6" fill="#dadef4"/><rect x="1531.1" y="78.93" width="19.15" height="1.6" fill="#dadef4"/><rect x="1551.05" y="78.93" width="19.15" height="1.6" fill="#dadef4"/><rect x="1730.6" y="78.93" width="19.15" height="1.6" fill="#dadef4"/><rect x="1750.55" y="78.93" width="19.15" height="1.6" fill="#dadef4"/><rect x="1770.5" y="78.93" width="19.15" height="1.6" fill="#dadef4"/><rect x="1790.45" y="78.93" width="19.15" height="1.6" fill="#dadef4"/><rect x="1810.4" y="78.93" width="19.15" height="1.6" fill="#dadef4"/><rect x="1830.35" y="78.93" width="19.15" height="1.6" fill="#dadef4"/><rect x="1850.3" y="78.93" width="19.15" height="1.6" fill="#dadef4"/><rect x="1870.25" y="78.93" width="19.15" height="1.6" fill="#dadef4"/><rect x="2049.8" y="78.93" width="19.15" height="1.6" fill="#dadef4"/><rect x="2069.75" y="78.93" width="19.15" height="1.6" fill="#dadef4"/><rect x="2089.7" y="78.93" width="19.15" height="1.6" fill="#dadef4"/><rect x="2109.65" y="78.93" width="19.15" height="1.6" fill="#dadef4"/><rect x="2129.6" y="78.93" width="19.15" height="1.6" fill="#dadef4"/><rect x="2149.55" y="78.93" width="19.15" height="1.6" fill="#dadef4"/><rect x="2169.5" y="78.93" width="19.15" height="1.6" fill="#dadef4"/><rect x="2189.45" y="78.93" width="19.15" height="1.6" fill="#dadef4"/><rect x="2209.4" y="78.93" width="19.15" height="1.6" fill="#dadef4"/><rect x="2229.35" y="78.93" width="19.15" height="1.6" fill="#dadef4"/><rect x="2249.3" y="78.93" width="19.15" height="1.6" fill="#dadef4"/><rect x="2269.25" y="78.93" width="19.15" height="1.6" fill="#dadef4"/><rect x="2289.2" y="78.93" width="19.15" height="1.6" fill="#dadef4"/><rect x="2309.15" y="78.93" width="19.15" height="1.6" fill="#dadef4"/><rect x="2329.1" y="78.93" width="19.15" height="1.6" fill="#dadef4"/><rect x="2349.05" y="78.93" width="19.15" height="1.6" fill="#dadef4"/><rect x="1092.2" y="79.45" width="138.85" height="1.6" fill="#e0daf4"/><rect x="1391.45" y="79.45" width="19.15" height="1.6" fill="#e0daf4"/><rect x="1551.05" y="79.45" width="19.15" height="1.6" fill="#e0daf4"/><rect x="1890.2" y="79.45" width="138.85" height="1.6" fill="#e0daf4"/><rect x="2189.45" y="79.45" width="19.15" height="1.6" fill="#e0daf4"/><rect x="2349.05" y="79.45" width="19.15" height="1.6" fill="#e0daf4"/><rect x="1092.2" y="79.96" width="158.8" height="1.6" fill="#e2d4f2"/><rect x="1890.2" y="79.96" width="158.8" height="1.6" fill="#e2d4f2"/><rect x="1092.2" y="80.48" width="158.8" height="1.6" fill="#e6d0f2"/><rect x="1890.2" y="80.48" width="158.8" height="1.6" fill="#e6d0f2"/><rect x="1251.8" y="81" width="19.15" height="1.6" fill="#e8cef2"/><rect x="1271.75" y="81" width="19.15" height="1.6" fill="#e8cef2"/><rect x="1291.7" y="81" width="19.15" height="1.6" fill="#e8cef2"/><rect x="1311.65" y="81" width="19.15" height="1.6" fill="#e8cef2"/><rect x="1331.6" y="81" width="19.15" height="1.6" fill="#e8cef2"/><rect x="1351.55" y="81" width="19.15" height="1.6" fill="#e8cef2"/><rect x="1371.5" y="81" width="19.15" height="1.6" fill="#e8cef2"/><rect x="1391.45" y="81" width="19.15" height="1.6" fill="#e8cef2"/><rect x="1411.4" y="81" width="19.15" height="1.6" fill="#e8cef2"/><rect x="1431.35" y="81" width="19.15" height="1.6" fill="#e8cef2"/><rect x="1451.3" y="81" width="19.15" height="1.6" fill="#e8cef2"/><rect x="1471.25" y="81" width="19.15" height="1.6" fill="#e8cef2"/><rect x="1491.2" y="81" width="19.15" height="1.6" fill="#e8cef2"/><rect x="1511.15" y="81" width="19.15" height="1.6" fill="#e8cef2"/><rect x="1531.1" y="81" width="19.15" height="1.6" fill="#e8cef2"/><rect x="1551.05" y="81" width="19.15" height="1.6" fill="#e8cef2"/><rect x="1571" y="81" width="19.15" height="1.6" fill="#e8cef2"/><rect x="1590.95" y="81" width="19.15" height="1.6" fill="#e8cef2"/><rect x="1610.9" y="81" width="19.15" height="1.6" fill="#e8cef2"/><rect x="1630.85" y="81" width="19.15" height="1.6" fill="#e8cef2"/><rect x="1650.8" y="81" width="19.15" height="1.6" fill="#e8cef2"/><rect x="1670.75" y="81" width="19.15" height="1.6" fill="#e8cef2"/><rect x="1690.7" y="81" width="19.15" height="1.6" fill="#e8cef2"/><rect x="1710.65" y="81" width="19.15" height="1.6" fill="#e8cef2"/><rect x="1730.6" y="81" width="19.15" height="1.6" fill="#e8cef2"/><rect x="1750.55" y="81" width="19.15" height="1.6" fill="#e8cef2"/><rect x="1770.5" y="81" width="19.15" height="1.6" fill="#e8cef2"/><rect x="1790.45" y="81" width="19.15" height="1.6" fill="#e8cef2"/><rect x="1810.4" y="81" width="19.15" height="1.6" fill="#e8cef2"/><rect x="1830.35" y="81" width="19.15" height="1.6" fill="#e8cef2"/><rect x="1850.3" y="81" width="19.15" height="1.6" fill="#e8cef2"/><rect x="1870.25" y="81" width="19.15" height="1.6" fill="#e8cef2"/><rect x="2049.8" y="81" width="19.15" height="1.6" fill="#e8cef2"/><rect x="2069.75" y="81" width="19.15" height="1.6" fill="#e8cef2"/><rect x="2089.7" y="81" width="19.15" height="1.6" fill="#e8cef2"/><rect x="2109.65" y="81" width="19.15" height="1.6" fill="#e8cef2"/><rect x="2129.6" y="81" width="19.15" height="1.6" fill="#e8cef2"/><rect x="2149.55" y="81" width="19.15" height="1.6" fill="#e8cef2"/><rect x="2169.5" y="81" width="19.15" height="1.6" fill="#e8cef2"/><rect x="2189.45" y="81" width="19.15" height="1.6" fill="#e8cef2"/><rect x="2209.4" y="81" width="19.15" height="1.6" fill="#e8cef2"/><rect x="2229.35" y="81" width="19.15" height="1.6" fill="#e8cef2"/><rect x="2249.3" y="81" width="19.15" height="1.6" fill="#e8cef2"/><rect x="2269.25" y="81" width="19.15" height="1.6" fill="#e8cef2"/><rect x="2289.2" y="81" width="19.15" height="1.6" fill="#e8cef2"/><rect x="2309.15" y="81" width="19.15" height="1.6" fill="#e8cef2"/><rect x="2329.1" y="81" width="19.15" height="1.6" fill="#e8cef2"/><rect x="2349.05" y="81" width="19.15" height="1.6" fill="#e8cef2"/><rect x="773" y="81.51" width="19.15" height="1.6" fill="#eccef4"/><rect x="792.95" y="81.51" width="19.15" height="1.6" fill="#eccef4"/><rect x="812.9" y="81.51" width="19.15" height="1.6" fill="#eccef4"/><rect x="832.85" y="81.51" width="19.15" height="1.6" fill="#eccef4"/><rect x="852.8" y="81.51" width="19.15" height="1.6" fill="#eccef4"/><rect x="872.75" y="81.51" width="19.15" height="1.6" fill="#eccef4"/><rect x="892.7" y="81.51" width="19.15" height="1.6" fill="#eccef4"/><rect x="912.65" y="81.51" width="19.15" height="1.6" fill="#eccef4"/><rect x="932.6" y="81.51" width="19.15" height="1.6" fill="#eccef4"/><rect x="952.55" y="81.51" width="19.15" height="1.6" fill="#eccef4"/><rect x="972.5" y="81.51" width="19.15" height="1.6" fill="#eccef4"/><rect x="992.45" y="81.51" width="19.15" height="1.6" fill="#eccef4"/><rect x="1012.4" y="81.51" width="19.15" height="1.6" fill="#eccef4"/><rect x="1032.35" y="81.51" width="19.15" height="1.6" fill="#eccef4"/><rect x="1052.3" y="81.51" width="19.15" height="1.6" fill="#eccef4"/><rect x="1072.25" y="81.51" width="19.15" height="1.6" fill="#eccef4"/><rect x="1730.6" y="81.51" width="19.15" height="1.6" fill="#eccef4"/><rect x="1750.55" y="81.51" width="19.15" height="1.6" fill="#eccef4"/><rect x="1770.5" y="81.51" width="19.15" height="1.6" fill="#eccef4"/><rect x="1790.45" y="81.51" width="19.15" height="1.6" fill="#eccef4"/><rect x="1810.4" y="81.51" width="19.15" height="1.6" fill="#eccef4"/><rect x="1830.35" y="81.51" width="19.15" height="1.6" fill="#eccef4"/><rect x="1850.3" y="81.51" width="19.15" height="1.6" fill="#eccef4"/><rect x="1870.25" y="81.51" width="19.15" height="1.6" fill="#eccef4"/><rect x="1231.85" y="82.03" width="39.1" height="1.6" fill="#f0c8f4"/><rect x="1231.85" y="82.55" width="19.15" height="1.6" fill="#f0c4f4"/><rect x="1251.8" y="82.55" width="39.1" height="1.6" fill="#f0c4f4"/><rect x="1391.45" y="82.03" width="39.1" height="1.6" fill="#f0c8f4"/><rect x="1391.45" y="82.55" width="19.15" height="1.6" fill="#f0c4f4"/><rect x="1411.4" y="82.55" width="39.1" height="1.6" fill="#f0c4f4"/><rect x="1551.05" y="82.03" width="39.1" height="1.6" fill="#f0c8f4"/><rect x="2029.85" y="82.03" width="39.1" height="1.6" fill="#f0c8f4"/><rect x="2029.85" y="82.55" width="19.15" height="1.6" fill="#f0c4f4"/><rect x="2049.8" y="82.55" width="39.1" height="1.6" fill="#f0c4f4"/><rect x="2189.45" y="82.03" width="39.1" height="1.6" fill="#f0c8f4"/><rect x="2189.45" y="82.55" width="19.15" height="1.6" fill="#f0c4f4"/><rect x="2209.4" y="82.55" width="39.1" height="1.6" fill="#f0c4f4"/><rect x="2349.05" y="82.03" width="39.1" height="1.6" fill="#f0c8f4"/><rect x="2349.05" y="82.55" width="19.15" height="1.6" fill="#f0c4f4"/><rect x="2369" y="82.55" width="39.1" height="1.6" fill="#f0c4f4"/><rect x="773" y="89.27" width="5.19" height="1.6" fill="#aeeeb0"/><rect x="784.97" y="89.27" width="15.16" height="1.6" fill="#aeeeb0"/><rect x="803.92" y="89.27" width="31.12" height="1.6" fill="#aeeeb0"/><rect x="852.8" y="89.27" width="31.12" height="1.6" fill="#aeeeb0"/><rect x="890.71" y="89.27" width="7.18" height="1.6" fill="#aeeeb0"/><rect x="900.68" y="89.27" width="31.12" height="1.6" fill="#aeeeb0"/><rect x="935.59" y="89.27" width="5.19" height="1.6" fill="#aeeeb0"/><rect x="947.56" y="89.27" width="7.18" height="1.6" fill="#aeeeb0"/><rect x="961.53" y="89.27" width="15.16" height="1.6" fill="#aeeeb0"/><rect x="979.48" y="89.27" width="7.18" height="1.6" fill="#aeeeb0"/><rect x="993.45" y="89.27" width="5.19" height="1.6" fill="#aeeeb0"/><rect x="1005.42" y="89.27" width="7.18" height="1.6" fill="#aeeeb0"/><rect x="1016.39" y="89.27" width="15.16" height="1.6" fill="#aeeeb0"/><rect x="1038.34" y="89.27" width="15.16" height="1.6" fill="#aeeeb0"/><rect x="1057.29" y="89.27" width="7.18" height="1.6" fill="#aeeeb0"/><rect x="1071.25" y="89.27" width="5.18" height="1.6" fill="#aeeeb0"/><rect x="1083.22" y="89.27" width="7.18" height="1.6" fill="#aeeeb0"/><rect x="1093.2" y="89.27" width="7.18" height="1.6" fill="#aeeeb0"/><rect x="1104.17" y="89.27" width="15.16" height="1.6" fill="#aeeeb0"/><rect x="1123.12" y="89.27" width="5.19" height="1.6" fill="#aeeeb0"/><rect x="1131.1" y="89.27" width="7.18" height="1.6" fill="#aeeeb0"/><rect x="1142.08" y="89.27" width="7.18" height="1.6" fill="#aeeeb0"/><rect x="1153.05" y="89.27" width="7.18" height="1.6" fill="#aeeeb0"/><rect x="1163.02" y="89.27" width="7.18" height="1.6" fill="#aeeeb0"/><rect x="1176.99" y="89.27" width="15.16" height="1.6" fill="#aeeeb0"/><rect x="1194.94" y="89.27" width="7.18" height="1.6" fill="#aeeeb0"/><rect x="1215.89" y="89.27" width="7.18" height="1.6" fill="#aeeeb0"/><rect x="1229.86" y="89.27" width="7.18" height="1.6" fill="#aeeeb0"/><rect x="1243.82" y="89.27" width="5.18" height="1.6" fill="#aeeeb0"/><rect x="1276.74" y="89.27" width="15.16" height="1.6" fill="#aeeeb0"/><rect x="1294.69" y="89.27" width="7.18" height="1.6" fill="#aeeeb0"/><rect x="1308.66" y="89.27" width="31.12" height="1.6" fill="#aeeeb0"/><rect x="1346.56" y="89.27" width="5.18" height="1.6" fill="#aeeeb0"/><rect x="1354.54" y="89.27" width="7.18" height="1.6" fill="#aeeeb0"/><rect x="1364.52" y="89.27" width="7.18" height="1.6" fill="#aeeeb0"/><rect x="1375.49" y="89.27" width="31.12" height="1.6" fill="#aeeeb0"/><rect x="1427.36" y="89.27" width="31.12" height="1.6" fill="#aeeeb0"/><rect x="1465.26" y="89.27" width="31.12" height="1.6" fill="#aeeeb0"/><rect x="1500.18" y="89.27" width="7.18" height="1.6" fill="#aeeeb0"/><rect x="1514.14" y="89.27" width="15.16" height="1.6" fill="#aeeeb0"/><rect x="1559.03" y="89.27" width="7.18" height="1.6" fill="#aeeeb0"/><rect x="1572.99" y="89.27" width="15.16" height="1.6" fill="#aeeeb0"/><rect x="1591.95" y="89.27" width="15.16" height="1.6" fill="#aeeeb0"/><rect x="1656.79" y="89.27" width="7.18" height="1.6" fill="#aeeeb0"/><rect x="1667.76" y="89.27" width="7.18" height="1.6" fill="#aeeeb0"/><rect x="1677.73" y="89.27" width="31.12" height="1.6" fill="#aeeeb0"/><rect x="1715.64" y="89.27" width="5.19" height="1.6" fill="#aeeeb0"/><rect x="1724.62" y="89.27" width="7.18" height="1.6" fill="#aeeeb0"/><rect x="1734.59" y="89.27" width="15.16" height="1.6" fill="#aeeeb0"/><rect x="1752.55" y="89.27" width="15.16" height="1.6" fill="#aeeeb0"/><rect x="1771.5" y="89.27" width="7.18" height="1.6" fill="#aeeeb0"/><rect x="1785.46" y="89.27" width="15.16" height="1.6" fill="#aeeeb0"/><rect x="1804.42" y="89.27" width="5.18" height="1.6" fill="#aeeeb0"/><rect x="1812.4" y="89.27" width="31.12" height="1.6" fill="#aeeeb0"/><rect x="1850.3" y="89.27" width="7.18" height="1.6" fill="#aeeeb0"/><rect x="1883.22" y="89.27" width="5.19" height="1.6" fill="#aeeeb0"/><rect x="1891.2" y="89.27" width="5.18" height="1.6" fill="#aeeeb0"/><rect x="1899.18" y="89.27" width="15.16" height="1.6" fill="#aeeeb0"/><rect x="1928.11" y="89.27" width="5.18" height="1.6" fill="#aeeeb0"/><rect x="1937.08" y="89.27" width="5.18" height="1.6" fill="#aeeeb0"/><rect x="1945.06" y="89.27" width="7.18" height="1.6" fill="#aeeeb0"/><rect x="1959.03" y="89.27" width="15.16" height="1.6" fill="#aeeeb0"/><rect x="1990.95" y="89.27" width="15.16" height="1.6" fill="#aeeeb0"/><rect x="2012.89" y="89.27" width="5.18" height="1.6" fill="#aeeeb0"/><rect x="2021.87" y="89.27" width="31.12" height="1.6" fill="#aeeeb0"/><rect x="2056.78" y="89.27" width="31.12" height="1.6" fill="#aeeeb0"/><rect x="2091.7" y="89.27" width="7.18" height="1.6" fill="#aeeeb0"/><rect x="2101.67" y="89.27" width="7.18" height="1.6" fill="#aeeeb0"/><rect x="2112.64" y="89.27" width="7.18" height="1.6" fill="#aeeeb0"/><rect x="2122.62" y="89.27" width="31.12" height="1.6" fill="#aeeeb0"/><rect x="2157.53" y="89.27" width="5.19" height="1.6" fill="#aeeeb0"/><rect x="2166.51" y="89.27" width="31.12" height="1.6" fill="#aeeeb0"/><rect x="2219.38" y="89.27" width="5.18" height="1.6" fill="#aeeeb0"/><rect x="2228.35" y="89.27" width="15.16" height="1.6" fill="#aeeeb0"/><rect x="2258.28" y="89.27" width="31.12" height="1.6" fill="#aeeeb0"/><rect x="2293.19" y="89.27" width="7.18" height="1.6" fill="#aeeeb0"/><rect x="2304.16" y="89.27" width="7.18" height="1.6" fill="#aeeeb0"/><rect x="2400.92" y="89.27" width="7.18" height="1.6" fill="#aeeeb0"/><rect x="2414.89" y="89.27" width="15.16" height="1.6" fill="#aeeeb0"/><rect x="2433.84" y="89.27" width="7.18" height="1.6" fill="#aeeeb0"/><rect x="2447.8" y="89.27" width="0.8" height="1.6" fill="#aeeeb0"/><rect x="773" y="89.79" width="15.16" height="1.6" fill="#aeeeb0"/><rect x="794.95" y="89.79" width="31.12" height="1.6" fill="#aeeeb0"/><rect x="829.86" y="89.79" width="7.18" height="1.6" fill="#aeeeb0"/><rect x="839.83" y="89.79" width="31.12" height="1.6" fill="#aeeeb0"/><rect x="877.74" y="89.79" width="7.18" height="1.6" fill="#aeeeb0"/><rect x="891.7" y="89.79" width="5.19" height="1.6" fill="#aeeeb0"/><rect x="925.62" y="89.79" width="7.18" height="1.6" fill="#aeeeb0"/><rect x="950.56" y="89.79" width="7.18" height="1.6" fill="#aeeeb0"/><rect x="964.52" y="89.79" width="7.18" height="1.6" fill="#aeeeb0"/><rect x="974.5" y="89.79" width="7.18" height="1.6" fill="#aeeeb0"/><rect x="1000.43" y="89.79" width="5.19" height="1.6" fill="#aeeeb0"/><rect x="1009.41" y="89.79" width="5.19" height="1.6" fill="#aeeeb0"/><rect x="1018.38" y="89.79" width="7.18" height="1.6" fill="#aeeeb0"/><rect x="1029.36" y="89.79" width="7.18" height="1.6" fill="#aeeeb0"/><rect x="1039.33" y="89.79" width="7.18" height="1.6" fill="#aeeeb0"/><rect x="1050.3" y="89.79" width="7.18" height="1.6" fill="#aeeeb0"/><rect x="1074.24" y="89.79" width="31.12" height="1.6" fill="#aeeeb0"/><rect x="1112.15" y="89.79" width="7.18" height="1.6" fill="#aeeeb0"/><rect x="1126.11" y="89.79" width="7.18" height="1.6" fill="#aeeeb0"/><rect x="1140.08" y="89.79" width="15.16" height="1.6" fill="#aeeeb0"/><rect x="1158.03" y="89.79" width="15.16" height="1.6" fill="#aeeeb0"/><rect x="1175.99" y="89.79" width="5.19" height="1.6" fill="#aeeeb0"/><rect x="1183.97" y="89.79" width="5.19" height="1.6" fill="#aeeeb0"/><rect x="1202.92" y="89.79" width="7.18" height="1.6" fill="#aeeeb0"/><rect x="1216.89" y="89.79" width="7.18" height="1.6" fill="#aeeeb0"/><rect x="1227.86" y="89.79" width="7.18" height="1.6" fill="#aeeeb0"/><rect x="1249.8" y="89.79" width="15.16" height="1.6" fill="#aeeeb0"/><rect x="1268.76" y="89.79" width="5.19" height="1.6" fill="#aeeeb0"/><rect x="1290.7" y="89.79" width="7.18" height="1.6" fill="#aeeeb0"/><rect x="1314.64" y="89.79" width="15.16" height="1.6" fill="#aeeeb0"/><rect x="1350.55" y="89.79" width="7.18" height="1.6" fill="#aeeeb0"/><rect x="1361.52" y="89.79" width="7.18" height="1.6" fill="#aeeeb0"/><rect x="1372.5" y="89.79" width="7.18" height="1.6" fill="#aeeeb0"/><rect x="1386.46" y="89.79" width="7.18" height="1.6" fill="#aeeeb0"/><rect x="1400.43" y="89.79" width="7.18" height="1.6" fill="#aeeeb0"/><rect x="1411.4" y="89.79" width="7.18" height="1.6" fill="#aeeeb0"/><rect x="1425.36" y="89.79" width="15.16" height="1.6" fill="#aeeeb0"/><rect x="1443.32" y="89.79" width="7.18" height="1.6" fill="#aeeeb0"/><rect x="1480.23" y="89.79" width="15.16" height="1.6" fill="#aeeeb0"/><rect x="1511.15" y="89.79" width="7.18" height="1.6" fill="#aeeeb0"/><rect x="1521.12" y="89.79" width="15.16" height="1.6" fill="#aeeeb0"/><rect x="1543.07" y="89.79" width="7.18" height="1.6" fill="#aeeeb0"/><rect x="1553.04" y="89.79" width="7.18" height="1.6" fill="#aeeeb0"/><rect x="1564.02" y="89.79" width="7.18" height="1.6" fill="#aeeeb0"/><rect x="1573.99" y="89.79" width="15.16" height="1.6" fill="#aeeeb0"/><rect x="1595.94" y="89.79" width="31.12" height="1.6" fill="#aeeeb0"/><rect x="1633.84" y="89.79" width="15.16" height="1.6" fill="#aeeeb0"/><rect x="1655.79" y="89.79" width="5.18" height="1.6" fill="#aeeeb0"/><rect x="1663.77" y="89.79" width="15.16" height="1.6" fill="#aeeeb0"/><rect x="1685.71" y="89.79" width="5.18" height="1.6" fill="#aeeeb0"/><rect x="1707.66" y="89.79" width="31.12" height="1.6" fill="#aeeeb0"/><rect x="1742.57" y="89.79" width="5.19" height="1.6" fill="#aeeeb0"/><rect x="1754.54" y="89.79" width="15.16" height="1.6" fill="#aeeeb0"/><rect x="1814.39" y="89.79" width="31.12" height="1.6" fill="#aeeeb0"/><rect x="1849.3" y="89.79" width="15.16" height="1.6" fill="#aeeeb0"/><rect x="1868.25" y="89.79" width="31.12" height="1.6" fill="#aeeeb0"/><rect x="1902.17" y="89.79" width="7.18" height="1.6" fill="#aeeeb0"/><rect x="1923.12" y="89.79" width="15.16" height="1.6" fill="#aeeeb0"/><rect x="1961.02" y="89.79" width="5.18" height="1.6" fill="#aeeeb0"/><rect x="1969" y="89.79" width="7.18" height="1.6" fill="#aeeeb0"/><rect x="1978.98" y="89.79" width="7.18" height="1.6" fill="#aeeeb0"/><rect x="1989.95" y="89.79" width="7.18" height="1.6" fill="#aeeeb0"/><rect x="1999.92" y="89.79" width="5.18" height="1.6" fill="#aeeeb0"/><rect x="2011.89" y="89.79" width="31.12" height="1.6" fill="#aeeeb0"/><rect x="2046.81" y="89.79" width="31.12" height="1.6" fill="#aeeeb0"/><rect x="2081.72" y="89.79" width="31.12" height="1.6" fill="#aeeeb0"/><rect x="2115.64" y="89.79" width="31.12" height="1.6" fill="#aeeeb0"/><rect x="2150.55" y="89.79" width="15.16" height="1.6" fill="#aeeeb0"/><rect x="2169.5" y="89.79" width="15.16" height="1.6" fill="#aeeeb0"/><rect x="2191.44" y="89.79" width="7.18" height="1.6" fill="#aeeeb0"/><rect x="2223.36" y="89.79" width="5.18" height="1.6" fill="#aeeeb0"/><rect x="2231.34" y="89.79" width="15.16" height="1.6" fill="#aeeeb0"/><rect x="2250.3" y="89.79" width="5.18" height="1.6" fill="#aeeeb0"/><rect x="2262.27" y="89.79" width="15.16" height="1.6" fill="#aeeeb0"/><rect x="2281.22" y="89.79" width="15.16" height="1.6" fill="#aeeeb0"/><rect x="2303.16" y="89.79" width="31.12" height="1.6" fill="#aeeeb0"/><rect x="2338.08" y="89.79" width="7.18" height="1.6" fill="#aeeeb0"/><rect x="2349.05" y="89.79" width="15.16" height="1.6" fill="#aeeeb0"/><rect x="2368" y="89.79" width="31.12" height="1.6" fill="#aeeeb0"/><rect x="2405.91" y="89.79" width="5.18" height="1.6" fill="#aeeeb0"/><rect x="2413.89" y="89.79" width="7.18" height="1.6" fill="#aeeeb0"/><rect x="2427.85" y="89.79" width="5.18" height="1.6" fill="#aeeeb0"/><rect x="2436.83" y="89.79" width="7.18" height="1.6" fill="#aeeeb0"/><rect x="773" y="90.3" width="7.18" height="1.6" fill="#aeeeb0"/><rect x="782.98" y="90.3" width="7.18" height="1.6" fill="#aeeeb0"/><rect x="827.86" y="90.3" width="7.18" height="1.6" fill="#aeeeb0"/><rect x="837.84" y="90.3" width="15.16" height="1.6" fill="#aeeeb0"/><rect x="855.79" y="90.3" width="7.18" height="1.6" fill="#aeeeb0"/><rect x="869.76" y="90.3" width="15.16" height="1.6" fill="#aeeeb0"/><rect x="891.7" y="90.3" width="15.16" height="1.6" fill="#aeeeb0"/><rect x="913.65" y="90.3" width="5.19" height="1.6" fill="#aeeeb0"/><rect x="945.57" y="90.3" width="7.18" height="1.6" fill="#aeeeb0"/><rect x="959.53" y="90.3" width="7.18" height="1.6" fill="#aeeeb0"/><rect x="969.51" y="90.3" width="15.16" height="1.6" fill="#aeeeb0"/><rect x="988.46" y="90.3" width="15.16" height="1.6" fill="#aeeeb0"/><rect x="1006.41" y="90.3" width="5.19" height="1.6" fill="#aeeeb0"/><rect x="1014.39" y="90.3" width="5.19" height="1.6" fill="#aeeeb0"/><rect x="1023.37" y="90.3" width="7.18" height="1.6" fill="#aeeeb0"/><rect x="1037.34" y="90.3" width="7.18" height="1.6" fill="#aeeeb0"/><rect x="1051.3" y="90.3" width="7.18" height="1.6" fill="#aeeeb0"/><rect x="1062.28" y="90.3" width="7.18" height="1.6" fill="#aeeeb0"/><rect x="1073.25" y="90.3" width="31.12" height="1.6" fill="#aeeeb0"/><rect x="1111.15" y="90.3" width="15.16" height="1.6" fill="#aeeeb0"/><rect x="1175.99" y="90.3" width="31.12" height="1.6" fill="#aeeeb0"/><rect x="1213.89" y="90.3" width="15.16" height="1.6" fill="#aeeeb0"/><rect x="1231.85" y="90.3" width="31.12" height="1.6" fill="#aeeeb0"/><rect x="1269.75" y="90.3" width="31.12" height="1.6" fill="#aeeeb0"/><rect x="1304.67" y="90.3" width="7.18" height="1.6" fill="#aeeeb0"/><rect x="1314.64" y="90.3" width="7.18" height="1.6" fill="#aeeeb0"/><rect x="1346.56" y="90.3" width="7.18" height="1.6" fill="#aeeeb0"/><rect x="1357.53" y="90.3" width="15.16" height="1.6" fill="#aeeeb0"/><rect x="1394.44" y="90.3" width="7.18" height="1.6" fill="#aeeeb0"/><rect x="1405.41" y="90.3" width="31.12" height="1.6" fill="#aeeeb0"/><rect x="1439.33" y="90.3" width="15.16" height="1.6" fill="#aeeeb0"/><rect x="1457.28" y="90.3" width="5.18" height="1.6" fill="#aeeeb0"/><rect x="1517.13" y="90.3" width="15.16" height="1.6" fill="#aeeeb0"/><rect x="1539.08" y="90.3" width="15.16" height="1.6" fill="#aeeeb0"/><rect x="1557.03" y="90.3" width="15.16" height="1.6" fill="#aeeeb0"/><rect x="1574.99" y="90.3" width="5.18" height="1.6" fill="#aeeeb0"/><rect x="1582.97" y="90.3" width="15.16" height="1.6" fill="#aeeeb0"/><rect x="1604.91" y="90.3" width="15.16" height="1.6" fill="#aeeeb0"/><rect x="1626.86" y="90.3" width="31.12" height="1.6" fill="#aeeeb0"/><rect x="1664.76" y="90.3" width="5.18" height="1.6" fill="#aeeeb0"/><rect x="1673.74" y="90.3" width="15.16" height="1.6" fill="#aeeeb0"/><rect x="1692.69" y="90.3" width="31.12" height="1.6" fill="#aeeeb0"/><rect x="1727.61" y="90.3" width="15.16" height="1.6" fill="#aeeeb0"/><rect x="1749.55" y="90.3" width="7.18" height="1.6" fill="#aeeeb0"/><rect x="1760.52" y="90.3" width="15.16" height="1.6" fill="#aeeeb0"/><rect x="1779.48" y="90.3" width="5.18" height="1.6" fill="#aeeeb0"/><rect x="1787.46" y="90.3" width="5.18" height="1.6" fill="#aeeeb0"/><rect x="1799.43" y="90.3" width="15.16" height="1.6" fill="#aeeeb0"/><rect x="1817.38" y="90.3" width="31.12" height="1.6" fill="#aeeeb0"/><rect x="1851.3" y="90.3" width="5.18" height="1.6" fill="#aeeeb0"/><rect x="1859.28" y="90.3" width="15.16" height="1.6" fill="#aeeeb0"/><rect x="1877.23" y="90.3" width="15.16" height="1.6" fill="#aeeeb0"/><rect x="1896.18" y="90.3" width="7.18" height="1.6" fill="#aeeeb0"/><rect x="1914.14" y="90.3" width="5.18" height="1.6" fill="#aeeeb0"/><rect x="1926.11" y="90.3" width="7.18" height="1.6" fill="#aeeeb0"/><rect x="1973.99" y="90.3" width="7.18" height="1.6" fill="#aeeeb0"/><rect x="1987.96" y="90.3" width="7.18" height="1.6" fill="#aeeeb0"/><rect x="2001.92" y="90.3" width="15.16" height="1.6" fill="#aeeeb0"/><rect x="2019.88" y="90.3" width="5.19" height="1.6" fill="#aeeeb0"/><rect x="2027.86" y="90.3" width="5.18" height="1.6" fill="#aeeeb0"/><rect x="2039.83" y="90.3" width="7.18" height="1.6" fill="#aeeeb0"/><rect x="2087.7" y="90.3" width="15.16" height="1.6" fill="#aeeeb0"/><rect x="2105.66" y="90.3" width="31.12" height="1.6" fill="#aeeeb0"/><rect x="2139.58" y="90.3" width="7.18" height="1.6" fill="#aeeeb0"/><rect x="2149.55" y="90.3" width="7.18" height="1.6" fill="#aeeeb0"/><rect x="2163.52" y="90.3" width="15.16" height="1.6" fill="#aeeeb0"/><rect x="2182.47" y="90.3" width="7.18" height="1.6" fill="#aeeeb0"/><rect x="2193.44" y="90.3" width="15.16" height="1.6" fill="#aeeeb0"/><rect x="2215.39" y="90.3" width="5.18" height="1.6" fill="#aeeeb0"/><rect x="2227.36" y="90.3" width="31.12" height="1.6" fill="#aeeeb0"/><rect x="2262.27" y="90.3" width="7.18" height="1.6" fill="#aeeeb0"/><rect x="2276.23" y="90.3" width="5.18" height="1.6" fill="#aeeeb0"/><rect x="2323.12" y="90.3" width="31.12" height="1.6" fill="#aeeeb0"/><rect x="2357.03" y="90.3" width="5.18" height="1.6" fill="#aeeeb0"/><rect x="2417.88" y="90.3" width="15.16" height="1.6" fill="#aeeeb0"/><rect x="2435.83" y="90.3" width="5.18" height="1.6" fill="#aeeeb0"/><rect x="2443.81" y="90.3" width="4.19" height="1.6" fill="#aeeeb0"/><rect x="773" y="90.82" width="31.12" height="1.6" fill="#aeeeb0"/><rect x="806.91" y="90.82" width="7.18" height="1.6" fill="#aeeeb0"/><rect x="820.88" y="90.82" width="7.18" height="1.6" fill="#aeeeb0"/><rect x="831.85" y="90.82" width="7.18" height="1.6" fill="#aeeeb0"/><rect x="842.83" y="90.82" width="15.16" height="1.6" fill="#aeeeb0"/><rect x="860.78" y="90.82" width="5.19" height="1.6" fill="#aeeeb0"/><rect x="872.75" y="90.82" width="15.16" height="1.6" fill="#aeeeb0"/><rect x="891.7" y="90.82" width="15.16" height="1.6" fill="#aeeeb0"/><rect x="924.62" y="90.82" width="7.18" height="1.6" fill="#aeeeb0"/><rect x="935.59" y="90.82" width="5.19" height="1.6" fill="#aeeeb0"/><rect x="947.56" y="90.82" width="15.16" height="1.6" fill="#aeeeb0"/><rect x="969.51" y="90.82" width="7.18" height="1.6" fill="#aeeeb0"/><rect x="979.48" y="90.82" width="15.16" height="1.6" fill="#aeeeb0"/><rect x="1001.43" y="90.82" width="7.18" height="1.6" fill="#aeeeb0"/><rect x="1015.39" y="90.82" width="31.12" height="1.6" fill="#aeeeb0"/><rect x="1050.3" y="90.82" width="7.18" height="1.6" fill="#aeeeb0"/><rect x="1060.28" y="90.82" width="31.12" height="1.6" fill="#aeeeb0"/><rect x="1094.19" y="90.82" width="31.12" height="1.6" fill="#aeeeb0"/><rect x="1132.1" y="90.82" width="7.18" height="1.6" fill="#aeeeb0"/><rect x="1142.07" y="90.82" width="31.12" height="1.6" fill="#aeeeb0"/><rect x="1176.99" y="90.82" width="15.16" height="1.6" fill="#aeeeb0"/><rect x="1195.94" y="90.82" width="31.12" height="1.6" fill="#aeeeb0"/><rect x="1233.84" y="90.82" width="7.18" height="1.6" fill="#aeeeb0"/><rect x="1247.81" y="90.82" width="31.12" height="1.6" fill="#aeeeb0"/><rect x="1282.72" y="90.82" width="15.16" height="1.6" fill="#aeeeb0"/><rect x="1300.68" y="90.82" width="5.19" height="1.6" fill="#aeeeb0"/><rect x="1341.57" y="90.82" width="7.18" height="1.6" fill="#aeeeb0"/><rect x="1355.54" y="90.82" width="31.12" height="1.6" fill="#aeeeb0"/><rect x="1403.42" y="90.82" width="31.12" height="1.6" fill="#aeeeb0"/><rect x="1438.33" y="90.82" width="7.18" height="1.6" fill="#aeeeb0"/><rect x="1448.31" y="90.82" width="15.16" height="1.6" fill="#aeeeb0"/><rect x="1467.26" y="90.82" width="31.12" height="1.6" fill="#aeeeb0"/><rect x="1501.17" y="90.82" width="5.19" height="1.6" fill="#aeeeb0"/><rect x="1513.14" y="90.82" width="15.16" height="1.6" fill="#aeeeb0"/><rect x="1531.1" y="90.82" width="15.16" height="1.6" fill="#aeeeb0"/><rect x="1549.05" y="90.82" width="31.12" height="1.6" fill="#aeeeb0"/><rect x="1582.97" y="90.82" width="31.12" height="1.6" fill="#aeeeb0"/><rect x="1620.87" y="90.82" width="5.18" height="1.6" fill="#aeeeb0"/><rect x="1632.84" y="90.82" width="5.19" height="1.6" fill="#aeeeb0"/><rect x="1662.77" y="90.82" width="7.18" height="1.6" fill="#aeeeb0"/><rect x="1673.74" y="90.82" width="15.16" height="1.6" fill="#aeeeb0"/><rect x="1695.69" y="90.82" width="5.18" height="1.6" fill="#aeeeb0"/><rect x="1703.67" y="90.82" width="31.12" height="1.6" fill="#aeeeb0"/><rect x="1738.58" y="90.82" width="7.18" height="1.6" fill="#aeeeb0"/><rect x="1752.54" y="90.82" width="5.18" height="1.6" fill="#aeeeb0"/><rect x="1775.49" y="90.82" width="7.18" height="1.6" fill="#aeeeb0"/><rect x="1789.45" y="90.82" width="15.16" height="1.6" fill="#aeeeb0"/><rect x="1808.4" y="90.82" width="15.16" height="1.6" fill="#aeeeb0"/><rect x="1837.33" y="90.82" width="7.18" height="1.6" fill="#aeeeb0"/><rect x="1847.31" y="90.82" width="31.12" height="1.6" fill="#aeeeb0"/><rect x="1885.21" y="90.82" width="31.12" height="1.6" fill="#aeeeb0"/><rect x="1923.12" y="90.82" width="5.19" height="1.6" fill="#aeeeb0"/><rect x="1935.09" y="90.82" width="31.12" height="1.6" fill="#aeeeb0"/><rect x="1970" y="90.82" width="15.16" height="1.6" fill="#aeeeb0"/><rect x="1991.94" y="90.82" width="31.12" height="1.6" fill="#aeeeb0"/><rect x="2037.83" y="90.82" width="31.12" height="1.6" fill="#aeeeb0"/><rect x="2071.74" y="90.82" width="5.18" height="1.6" fill="#aeeeb0"/><rect x="2079.73" y="90.82" width="5.18" height="1.6" fill="#aeeeb0"/><rect x="2095.69" y="90.82" width="31.12" height="1.6" fill="#aeeeb0"/><rect x="2129.6" y="90.82" width="7.18" height="1.6" fill="#aeeeb0"/><rect x="2143.57" y="90.82" width="7.18" height="1.6" fill="#aeeeb0"/><rect x="2154.54" y="90.82" width="7.18" height="1.6" fill="#aeeeb0"/><rect x="2164.51" y="90.82" width="5.18" height="1.6" fill="#aeeeb0"/><rect x="2173.49" y="90.82" width="7.18" height="1.6" fill="#aeeeb0"/><rect x="2184.46" y="90.82" width="5.18" height="1.6" fill="#aeeeb0"/><rect x="2196.43" y="90.82" width="15.16" height="1.6" fill="#aeeeb0"/><rect x="2214.39" y="90.82" width="7.18" height="1.6" fill="#aeeeb0"/><rect x="2225.36" y="90.82" width="7.18" height="1.6" fill="#aeeeb0"/><rect x="2249.3" y="90.82" width="31.12" height="1.6" fill="#aeeeb0"/><rect x="2302.17" y="90.82" width="5.18" height="1.6" fill="#aeeeb0"/><rect x="2311.15" y="90.82" width="7.18" height="1.6" fill="#aeeeb0"/><rect x="2321.12" y="90.82" width="31.12" height="1.6" fill="#aeeeb0"/><rect x="2355.04" y="90.82" width="15.16" height="1.6" fill="#aeeeb0"/><rect x="2372.99" y="90.82" width="7.18" height="1.6" fill="#aeeeb0"/><rect x="2382.97" y="90.82" width="15.16" height="1.6" fill="#aeeeb0"/><rect x="2414.89" y="90.82" width="7.18" height="1.6" fill="#aeeeb0"/><rect x="2424.86" y="90.82" width="5.18" height="1.6" fill="#aeeeb0"/><rect x="725.12" y="91.85" width="1722.88" height="1.6" fill="#f0d4f7"/><rect x="773" y="91.49" width="1675" height="1.6" fill="#f0d4f7"/></g><path d="M773 60 h8.6 l-8.6 9.4Z" fill="#f5e27a"/><path d="M932.6 60 h8.6 l-8.6 9.4Z" fill="#f5e27a"/><path d="M1092.2 60 h8.6 l-8.6 9.4Z" fill="#f5e27a"/><path d="M1251.8 60 h8.6 l-8.6 9.4Z" fill="#f5e27a"/><path d="M1411.4 60 h8.6 l-8.6 9.4Z" fill="#f5e27a"/><path d="M1571 60 h8.6 l-8.6 9.4Z" fill="#f5e27a"/><path d="M1730.6 60 h8.6 l-8.6 9.4Z" fill="#f5e27a"/><path d="M1890.2 60 h8.6 l-8.6 9.4Z" fill="#f5e27a"/><path d="M2049.8 60 h8.6 l-8.6 9.4Z" fill="#f5e27a"/><path d="M2209.4 60 h8.6 l-8.6 9.4Z" fill="#f5e27a"/><path d="M2369 60 h8.6 l-8.6 9.4Z" fill="#f5e27a"/></svg></body></html>
